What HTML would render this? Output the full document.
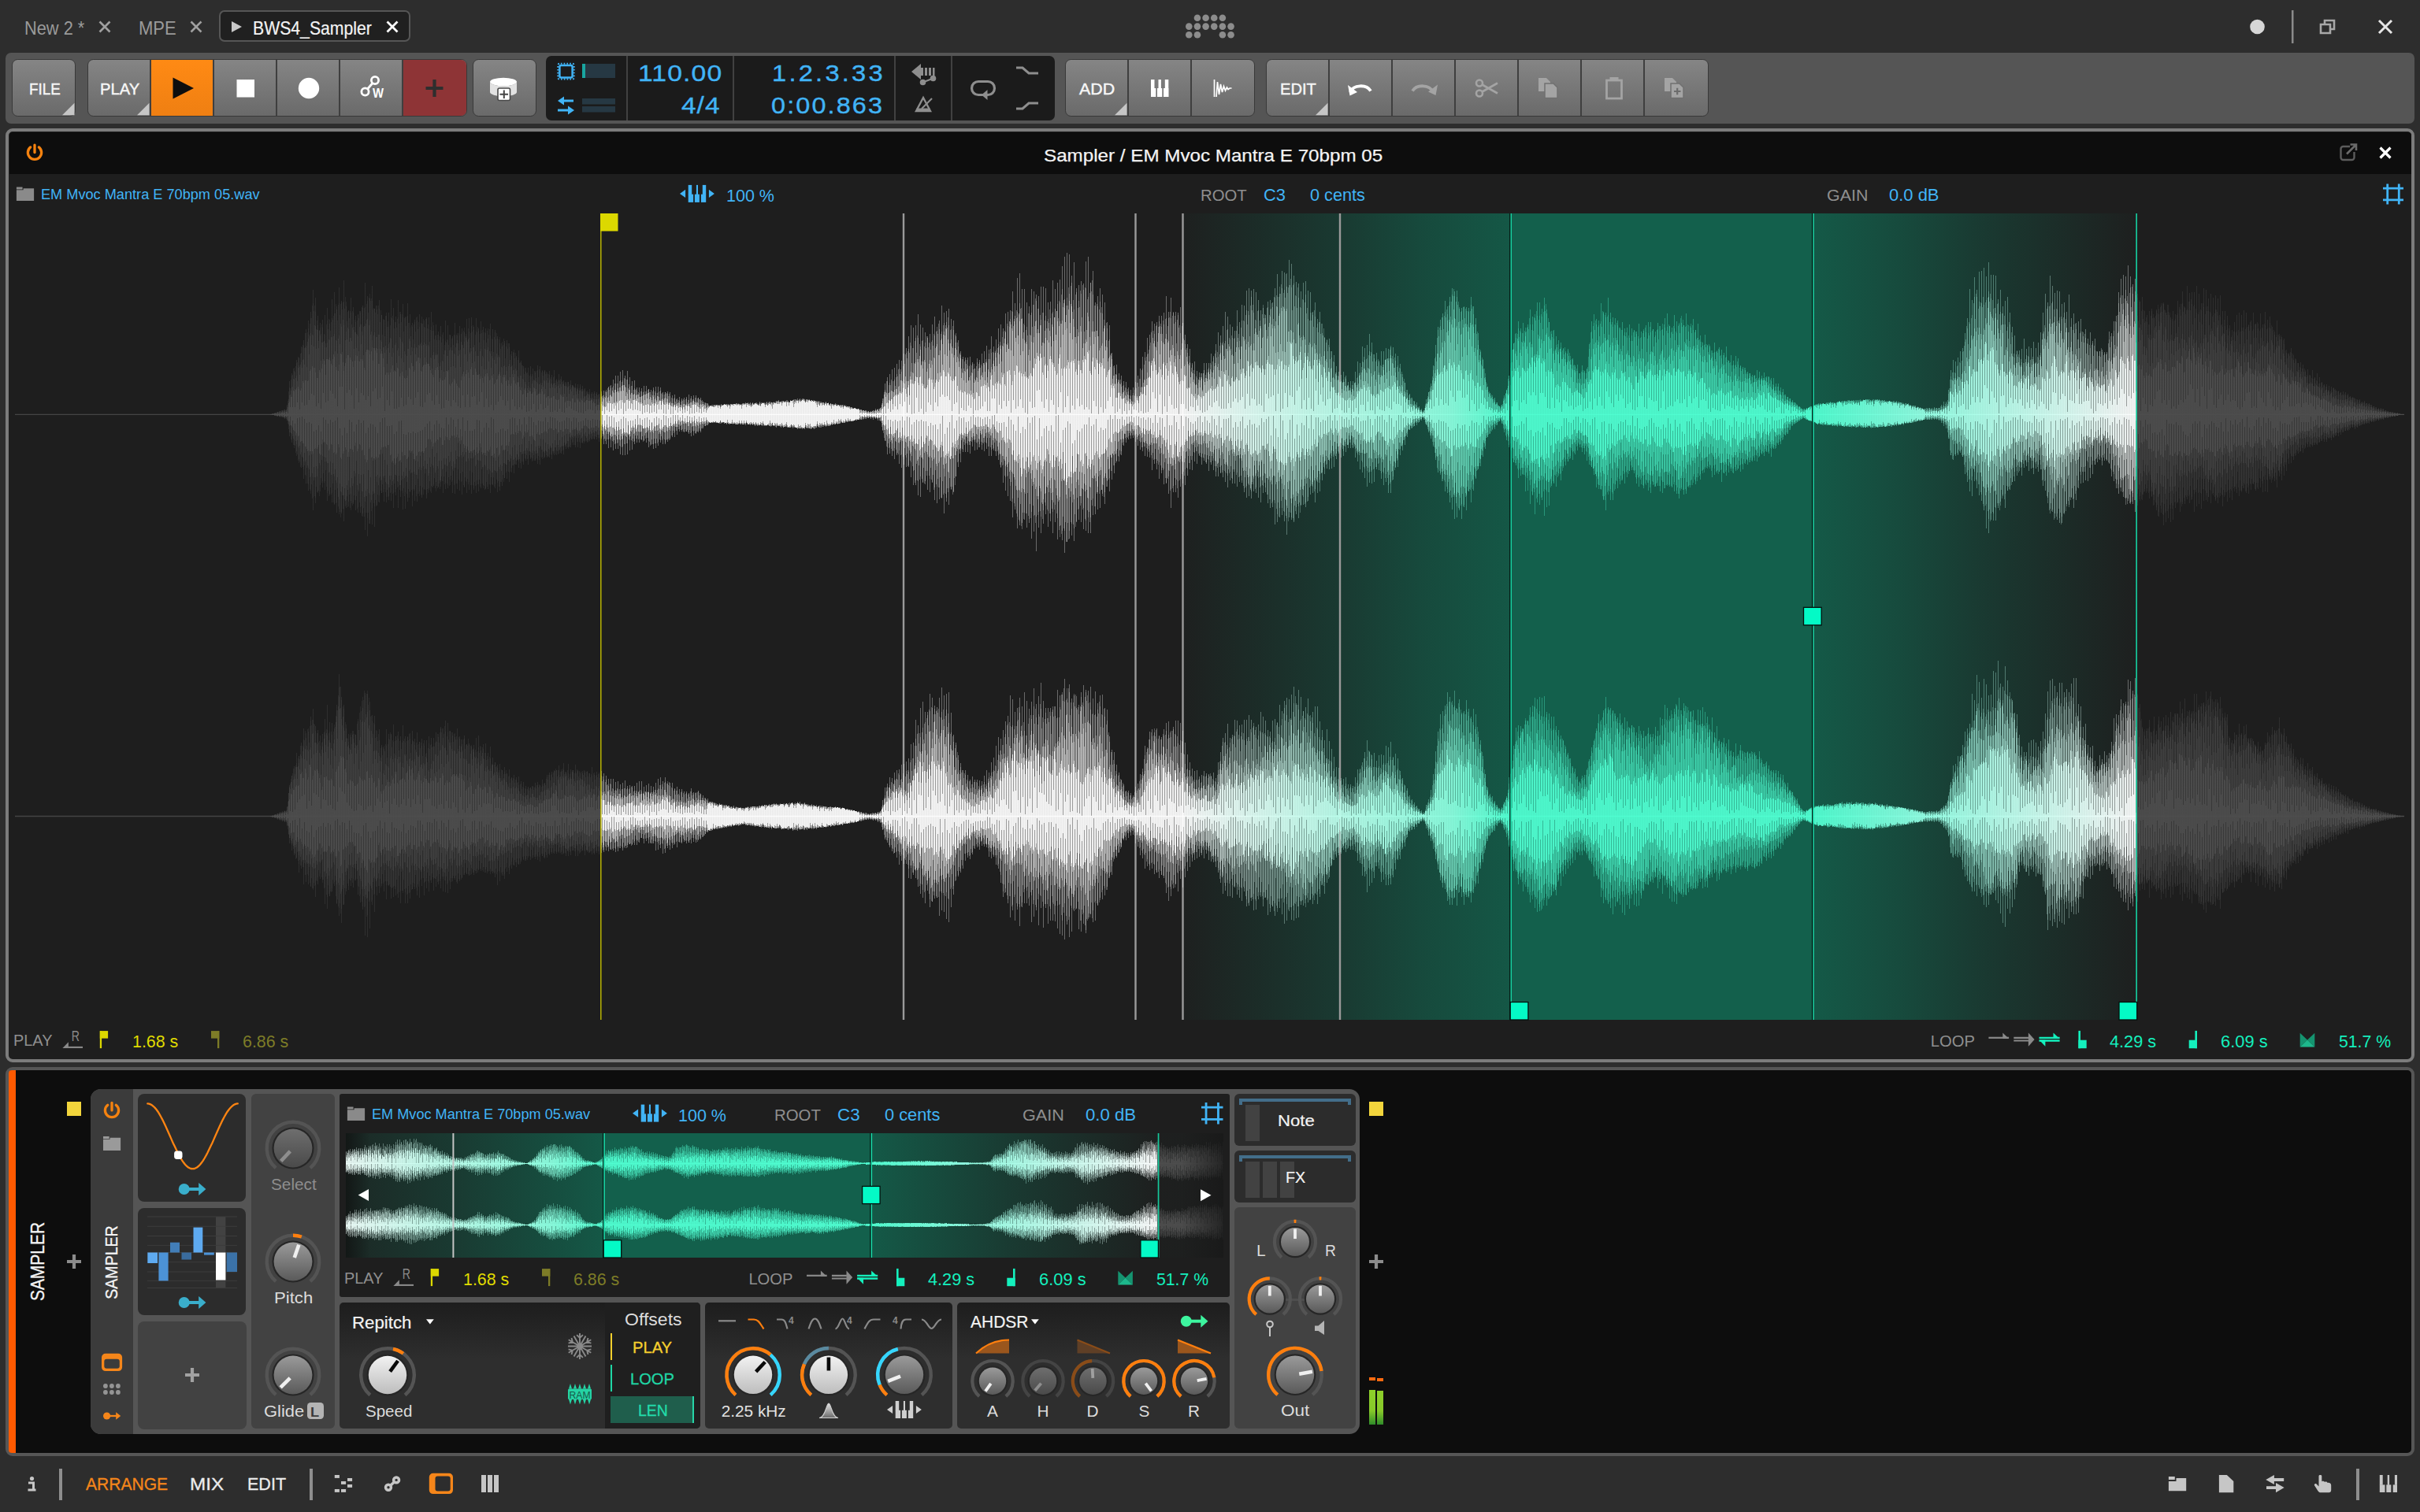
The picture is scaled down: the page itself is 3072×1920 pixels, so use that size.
<!DOCTYPE html>
<html><head><meta charset="utf-8"><title>Bitwig Studio - Sampler</title><style>
html,body{margin:0;padding:0;background:#2d2d2d;}
body{width:3072px;height:1920px;overflow:hidden;position:relative;font-family:"Liberation Sans",sans-serif;}
.a{position:absolute;}
.t{position:absolute;white-space:nowrap;line-height:1;transform-origin:0 50%;}
.bg{background:linear-gradient(#858585,#6a6a6a);border:1.8px solid #393939;border-radius:7.5px;box-sizing:border-box;overflow:hidden;}
svg.ov{position:absolute;left:0;top:0;width:3072px;height:1920px;pointer-events:none;}
</style></head><body>
<span class="t" style="left:31.1px;top:23.8px;font-size:24px;color:#9a9a9a;transform:scaleX(0.9082);">New 2 *</span>
<span class="t" style="left:175.7px;top:23.8px;font-size:24px;color:#9a9a9a;transform:scaleX(0.9180);">MPE</span>
<div class="a" style="left:278px;top:13px;width:243px;height:40px;background:#202020;border:2px solid #565656;border-radius:7px;box-sizing:border-box;"></div>
<span class="t" style="left:320.9px;top:23.8px;font-size:24px;color:#f4f4f4;-webkit-text-stroke:0.2px #f4f4f4;transform:scaleX(0.8837);">BWS4_Sampler</span>
<div class="a" style="left:7px;top:67px;width:3058px;height:90px;background:#555555;border-radius:7px;"></div>
<div class="a bg" style="left:15px;top:75px;width:81px;height:73px;"><div class="a" style="left:0px;top:0;width:79px;height:100%;"></div></div>
<div class="a bg" style="left:111px;top:75px;width:482px;height:73px;"><div class="a" style="left:0px;top:0;width:78px;height:100%;border-right:2px solid #3f3f3f;"></div><div class="a" style="left:80px;top:0;width:78px;height:100%;background:linear-gradient(#ff8a14,#ef7f12);border-right:2px solid #3f3f3f;"></div><div class="a" style="left:160px;top:0;width:78px;height:100%;border-right:2px solid #3f3f3f;"></div><div class="a" style="left:240px;top:0;width:78px;height:100%;border-right:2px solid #3f3f3f;"></div><div class="a" style="left:320px;top:0;width:78px;height:100%;border-right:2px solid #3f3f3f;"></div><div class="a" style="left:400px;top:0;width:80px;height:100%;background:#8e3436;"></div></div>
<div class="a bg" style="left:600px;top:75px;width:81px;height:73px;"><div class="a" style="left:0px;top:0;width:79px;height:100%;"></div></div>
<div class="a bg" style="left:1352px;top:75px;width:241px;height:73px;"><div class="a" style="left:0px;top:0;width:78px;height:100%;border-right:2px solid #3f3f3f;"></div><div class="a" style="left:80px;top:0;width:78px;height:100%;border-right:2px solid #3f3f3f;"></div><div class="a" style="left:160px;top:0;width:79px;height:100%;"></div></div>
<div class="a bg" style="left:1607px;top:75px;width:562px;height:73px;"><div class="a" style="left:0px;top:0;width:78px;height:100%;border-right:2px solid #3f3f3f;"></div><div class="a" style="left:80px;top:0;width:78px;height:100%;border-right:2px solid #3f3f3f;"></div><div class="a" style="left:160px;top:0;width:78px;height:100%;border-right:2px solid #3f3f3f;"></div><div class="a" style="left:240px;top:0;width:78px;height:100%;border-right:2px solid #3f3f3f;"></div><div class="a" style="left:320px;top:0;width:78px;height:100%;border-right:2px solid #3f3f3f;"></div><div class="a" style="left:400px;top:0;width:78px;height:100%;border-right:2px solid #3f3f3f;"></div><div class="a" style="left:480px;top:0;width:80px;height:100%;"></div></div>
<span class="t" style="left:36.8px;top:103.4px;font-size:20.9px;color:#f6f6f6;-webkit-text-stroke:0.45px #f6f6f6;transform:scaleX(0.9008);">FILE</span>
<span class="t" style="left:126.6px;top:103.4px;font-size:20.9px;color:#f6f6f6;-webkit-text-stroke:0.45px #f6f6f6;transform:scaleX(0.9659);">PLAY</span>
<span class="t" style="left:1370.2px;top:103.4px;font-size:20.9px;color:#f6f6f6;-webkit-text-stroke:0.45px #f6f6f6;transform:scaleX(1.0245);">ADD</span>
<span class="t" style="left:1624.7px;top:103.4px;font-size:20.9px;color:#f6f6f6;-webkit-text-stroke:0.45px #f6f6f6;transform:scaleX(0.9632);">EDIT</span>
<div class="a" style="left:693px;top:71px;width:646px;height:82px;background:#1b1b1b;border-radius:7px;"></div>
<div class="a" style="left:795px;top:71px;width:2px;height:82px;background:#414141;"></div>
<div class="a" style="left:930px;top:71px;width:2px;height:82px;background:#414141;"></div>
<div class="a" style="left:1135px;top:71px;width:2px;height:82px;background:#414141;"></div>
<div class="a" style="left:1207px;top:71px;width:2px;height:82px;background:#414141;"></div>
<span class="t" style="left:810.0px;top:78.1px;font-size:30.2px;color:#41b4f6;letter-spacing:1px;-webkit-text-stroke:0.4px #41b4f6;transform:scaleX(1.1170);">110.00</span>
<span class="t" style="left:864.9px;top:118.7px;font-size:30.2px;color:#41b4f6;letter-spacing:1px;-webkit-text-stroke:0.4px #41b4f6;transform:scaleX(1.1025);">4/4</span>
<span class="t" style="left:979.7px;top:78.1px;font-size:30.2px;color:#41b4f6;letter-spacing:3px;-webkit-text-stroke:0.4px #41b4f6;transform:scaleX(1.0808);">1.2.3.33</span>
<span class="t" style="left:979.3px;top:118.7px;font-size:30.2px;color:#41b4f6;letter-spacing:2px;-webkit-text-stroke:0.4px #41b4f6;transform:scaleX(1.0723);">0:00.863</span>
<svg class="ov" viewBox="0 0 3072 1920"><path d="M126.5 27.5L139.5 40.5M139.5 27.5L126.5 40.5" stroke="#a0a0a0" stroke-width="2.6" fill="none"/>
<path d="M242.5 27.5L255.5 40.5M255.5 27.5L242.5 40.5" stroke="#a0a0a0" stroke-width="2.6" fill="none"/>
<path d="M491.5 27.5L504.5 40.5M504.5 27.5L491.5 40.5" stroke="#ffffff" stroke-width="2.8" fill="none"/>
<path d="M294 27L294 41L307 34Z" fill="#c8c8c8"/>
<circle cx="1519.95" cy="22.7" r="4.3" fill="#8c8c8c"/>
<circle cx="1530.6" cy="22.7" r="4.3" fill="#8c8c8c"/>
<circle cx="1541.25" cy="22.7" r="4.3" fill="#8c8c8c"/>
<circle cx="1551.9" cy="22.7" r="4.3" fill="#8c8c8c"/>
<circle cx="1509.3" cy="33.6" r="4.3" fill="#8c8c8c"/>
<circle cx="1519.95" cy="33.6" r="4.3" fill="#8c8c8c"/>
<circle cx="1530.6" cy="33.6" r="4.3" fill="#8c8c8c"/>
<circle cx="1541.25" cy="33.6" r="4.3" fill="#8c8c8c"/>
<circle cx="1551.9" cy="33.6" r="4.3" fill="#8c8c8c"/>
<circle cx="1562.55" cy="33.6" r="4.3" fill="#8c8c8c"/>
<circle cx="1509.3" cy="44.2" r="4.3" fill="#8c8c8c"/>
<circle cx="1519.95" cy="44.2" r="4.3" fill="#8c8c8c"/>
<circle cx="1551.9" cy="44.2" r="4.3" fill="#8c8c8c"/>
<circle cx="1562.55" cy="44.2" r="4.3" fill="#8c8c8c"/>
<circle cx="2865.5" cy="34" r="9.3" fill="#d6d6d6"/>
<rect x="2909" y="13" width="2.5" height="42" fill="#8a8a8a"/>
<path d="M2946 31h12v11h-12zM2951 31v-5h12v11h-5" fill="none" stroke="#a8a8a8" stroke-width="2.6"/>
<path d="M3020 26L3036 42M3036 26L3020 42" stroke="#e6e6e6" stroke-width="3" fill="none"/>
<path d="M94.5 146.3L79 146.3L94.5 130.8Z" fill="#c6c6c6"/>
<path d="M189.5 146.3L174 146.3L189.5 130.8Z" fill="#c6c6c6"/>
<path d="M1430.5 146.3L1415 146.3L1430.5 130.8Z" fill="#c6c6c6"/>
<path d="M1685.5 146.3L1670 146.3L1685.5 130.8Z" fill="#c6c6c6"/>
<path d="M219.500 98.500L219.500 125.500L246 112Z" fill="#0e0e0e"/>
<rect x="300.5" y="101" width="22.5" height="22.5" fill="#fff"/>
<circle cx="392" cy="112" r="13.2" fill="#fff"/>
<g stroke="#fff" stroke-width="2.8" fill="none"><circle cx="463.5" cy="116.5" r="4.6"/><circle cx="476" cy="102" r="4.6"/><path d="M466.5 113L473 105.5"/></g>
<text x="473" y="124" font-family="Liberation Sans,sans-serif" font-weight="700" font-size="16" fill="#fff" textLength="14" lengthAdjust="spacingAndGlyphs">W</text>
<path d="M540.5 112H562.5M551.5 101V123" stroke="#2e2e2e" stroke-width="4.2"/>
<ellipse cx="639" cy="104" rx="17" ry="5.2" fill="#fff"/><path d="M622 104V117A17 5.2 0 0 0 656 117V104A17 5.2 0 0 1 622 104Z" fill="#e2e2e2"/>
<rect x="632" y="112" width="15.5" height="15.5" rx="2" fill="#fff" stroke="#4a4a4a" stroke-width="1.6"/><path d="M634.5 119.8H645M639.8 114.5V125" stroke="#444" stroke-width="2"/>
<rect x="710.4" y="82.900" width="16.200" height="15.600" rx="2" fill="none" stroke="#41b4f6" stroke-width="2.500"/>
<rect x="708.3" y="80.800" width="20.400" height="19.800" rx="2" fill="none" stroke="#41b4f6" stroke-width="2" stroke-dasharray="1.7 2.1" stroke-dashoffset="-1.5"/>
<rect x="739" y="81" width="42" height="18" fill="#263843"/><rect x="739" y="81" width="4" height="18" fill="#19a6a0"/>
<rect x="739" y="125" width="42" height="7.500" fill="#263843"/><rect x="739" y="135" width="42" height="7.500" fill="#263843"/>
<g stroke="#41b4f6" stroke-width="3" fill="#41b4f6"><path d="M714 128H728" /><path d="M708 128L716 122.500V133.500Z" stroke="none"/><path d="M708 140H722"/><path d="M729 140L721 134.500V145.500Z" stroke="none"/></g>
<g fill="#8e8e8e"><path d="M1157 91L1169 81V86H1172V96H1169V101Z"/><rect x="1174" y="86" width="3" height="10"/><rect x="1179" y="86" width="3" height="10"/><rect x="1184" y="86" width="2.500" height="10"/></g>
<g stroke="#8e8e8e" stroke-width="2" fill="#8e8e8e"><circle cx="1171.500" cy="104.500" r="2.800"/><circle cx="1184.500" cy="99.500" r="2.800"/><path d="M1171.500 104.500L1184.500 99.500"/></g>
<path d="M1172 124L1163 141H1181Z" fill="none" stroke="#8e8e8e" stroke-width="2.400"/><path d="M1163.500 139.500H1180.500" stroke="#8e8e8e" stroke-width="4"/><path d="M1170 138L1183 125" stroke="#8e8e8e" stroke-width="2.200"/>
<path d="M1252 119.500H1243A8.500 8.500 0 0 1 1243 102.500H1255A8.500 8.500 0 0 1 1255 119.500H1250" fill="none" stroke="#8e8e8e" stroke-width="3.200" transform="translate(-1 1)"/><path d="M1244 120.500L1251.500 114V127Z" fill="#8e8e8e" transform="translate(2 0)"/>
<path d="M1290 86H1298L1306 93H1318" fill="none" stroke="#8e8e8e" stroke-width="3"/>
<path d="M1290 138H1298L1306 131H1318" fill="none" stroke="#8e8e8e" stroke-width="3"/>
<g fill="#fff"><rect x="1461" y="101" width="4.500" height="22"/><rect x="1461" y="112" width="6.300" height="11"/><rect x="1469" y="112" width="6.300" height="11"/><rect x="1470.500" y="101" width="3.400" height="12"/><rect x="1477" y="112" width="6.300" height="11"/><rect x="1478.800" y="101" width="4.500" height="22"/></g>
<path d="M1541.500 101V123M1544 123L1545.500 104L1547.500 120L1549.500 107L1551.500 117L1553.500 109.500L1555.500 115L1557.500 111L1559 113.500L1561 112H1563.500" fill="none" stroke="#fff" stroke-width="1.700"/>
<path d="M1677 119A14 11 0 0 1 1703 117.500" fill="none" stroke="#fff" stroke-width="3.800" transform="translate(37 -2)"/><path d="M1711 108L1713.500 121.500L1723 117Z" fill="#fff" transform="translate(0 0)"/>
<path d="M1793 115.500A14 11 0 0 1 1819 117" fill="none" stroke="#a4a4a4" stroke-width="3.800"/><path d="M1825 107.500L1822.500 121L1813 116.500Z" fill="#a4a4a4"/>
<g stroke="#a4a4a4" stroke-width="2.600" fill="none"><circle cx="1878" cy="105.500" r="4"/><circle cx="1878" cy="118.500" r="4"/><path d="M1881.500 107.500L1901 118.500M1881.500 116.500L1901 105.500"/></g>
<g fill="#a4a4a4"><path d="M1953 99H1963L1968 104V116H1953Z"/><path d="M1961 106H1972L1977 111V124.500H1961Z" stroke="#707070" stroke-width="1.500"/></g>
<rect x="2039.500" y="102" width="19" height="23" fill="none" stroke="#a4a4a4" stroke-width="2.800"/><rect x="2043.500" y="98" width="11" height="5" fill="#a4a4a4"/>
<g fill="#a4a4a4"><path d="M2113 99H2123L2128 104V116H2113Z"/><path d="M2121 106H2132L2137 111V124.500H2121Z" stroke="#707070" stroke-width="1.500"/></g><path d="M2125 116H2133.500M2129.200 111.800V120.200" stroke="#6c6c6c" stroke-width="2.200"/></svg>
<div class="a" style="left:7px;top:163px;width:3058px;height:1186px;background:#1e1e1e;border:4.5px solid #7c7c7c;border-radius:9px;box-sizing:border-box;"></div>
<div class="a" style="left:11.5px;top:167.5px;width:3049px;height:53.5px;background:#0d0d0d;border-radius:4px 4px 0 0;"></div>
<span class="t" style="left:1325.3px;top:185.9px;font-size:22.9px;color:#f4f4f4;-webkit-text-stroke:0.25px #f4f4f4;transform:scaleX(1.0568);">Sampler / EM Mvoc Mantra E 70bpm 05</span>
<span class="t" style="left:52.3px;top:237.8px;font-size:18.8px;color:#41b4f6;transform:scaleX(0.9670);">EM Mvoc Mantra E 70bpm 05.wav</span>
<span class="t" style="left:921.5px;top:237.6px;font-size:22.4px;color:#41b4f6;transform:scaleX(0.9604);">100 %</span>
<span class="t" style="left:1524.0px;top:238.1px;font-size:20.2px;color:#8f8f8f;transform:scaleX(1.0073);">ROOT</span>
<span class="t" style="left:1603.5px;top:237.3px;font-size:22.4px;color:#41b4f6;transform:scaleX(0.9790);">C3</span>
<span class="t" style="left:1663.3px;top:237.3px;font-size:22.4px;color:#41b4f6;transform:scaleX(0.9681);">0 cents</span>
<span class="t" style="left:2318.5px;top:238.1px;font-size:20.2px;color:#8f8f8f;transform:scaleX(1.0604);">GAIN</span>
<span class="t" style="left:2398.2px;top:237.3px;font-size:22.4px;color:#41b4f6;transform:scaleX(0.9812);">0.0 dB</span>
<span class="t" style="left:17.1px;top:1311.4px;font-size:20.2px;color:#8f8f8f;transform:scaleX(0.9868);">PLAY</span>
<span class="t" style="left:167.7px;top:1311.6px;font-size:22.4px;color:#e0dc00;transform:scaleX(0.9549);">1.68 s</span>
<span class="t" style="left:308.3px;top:1311.6px;font-size:22.4px;color:#7d7c27;transform:scaleX(0.9549);">6.86 s</span>
<span class="t" style="left:2450.8px;top:1311.6px;font-size:20.2px;color:#8f8f8f;">LOOP</span>
<span class="t" style="left:2678.4px;top:1311.9px;font-size:22.4px;color:#14f0bd;transform:scaleX(0.9688);">4.29 s</span>
<span class="t" style="left:2819.0px;top:1311.9px;font-size:22.4px;color:#14f0bd;transform:scaleX(0.9766);">6.09 s</span>
<span class="t" style="left:2968.8px;top:1311.9px;font-size:22.4px;color:#14f0bd;transform:scaleX(0.9484);">51.7 %</span>
<svg class="ov" viewBox="0 0 3072 1920"><defs>
<linearGradient id="tealbg" gradientUnits="userSpaceOnUse" x1="1501" y1="0" x2="2712" y2="0">
<stop offset="0" stop-color="#13604c" stop-opacity="0.03"/>
<stop offset="0.165" stop-color="#13604c" stop-opacity="0.42"/>
<stop offset="0.25" stop-color="#13604c" stop-opacity="0.66"/>
<stop offset="0.3434" stop-color="#13604c" stop-opacity="0.87"/>
<stop offset="0.3436" stop-color="#13604c" stop-opacity="1"/>
<stop offset="0.6606" stop-color="#13604c" stop-opacity="1"/>
<stop offset="0.6608" stop-color="#13604c" stop-opacity="0.90"/>
<stop offset="0.75" stop-color="#13604c" stop-opacity="0.68"/>
<stop offset="0.83" stop-color="#13604c" stop-opacity="0.44"/>
<stop offset="1" stop-color="#13604c" stop-opacity="0.02"/>
</linearGradient>
<linearGradient id="wfill" gradientUnits="userSpaceOnUse" x1="0" y1="0" x2="3072" y2="0">
<stop offset="0" stop-color="#4e4e4e"/>
<stop offset="0.24837" stop-color="#4e4e4e"/>
<stop offset="0.24838" stop-color="#ffffff"/>
<stop offset="0.4886" stop-color="#ffffff"/>
<stop offset="0.60" stop-color="#8cffe0"/>
<stop offset="0.6240" stop-color="#50ffd2"/>
<stop offset="0.7490" stop-color="#50ffd2"/>
<stop offset="0.80" stop-color="#9affe6"/>
<stop offset="0.8828" stop-color="#ffffff"/>
<stop offset="0.88285" stop-color="#4e4e4e"/>
<stop offset="1" stop-color="#4e4e4e"/>
</linearGradient>
</defs>
<rect x="1501" y="271" width="1211" height="1024" fill="url(#tealbg)"/>
<rect x="1145.8" y="271" width="2.4" height="1024" fill="#9a9a9a"/>
<rect x="1440.3" y="271" width="2.4" height="1024" fill="#9a9a9a"/>
<rect x="1500.3" y="271" width="2.4" height="1024" fill="#9a9a9a"/>
<rect x="1699.8" y="271" width="2.4" height="1024" fill="#9a9a9a"/>
<path d="M19 526.3H3052" stroke="url(#wfill)" stroke-width="1.3" opacity="0.8"/>
<path d="M19 1036.5H3052" stroke="url(#wfill)" stroke-width="1.3" opacity="0.8"/>
<g shape-rendering="crispEdges"><path d="M346.5 525v2m3-3v4m3-5v6m3-7v8m3-9v9m3-10v12m3-18v20m3-50v70m3-80v88m3-91v94m3-108v116m3-119v129m3-135v146m3-162v176m3-190v196m3-207v216m3-227v227m3-255v280m3-270v261m3-238v223m3-214v206m3-210v213m3-219v222m3-231v245m3-225v216m3-247v258m3-267v269m3-247v258m3-286v281m3-264v270m3-296v306m3-273v256m3-251v243m3-259v258m3-246v250m3-239v247m3-249v252m3-256v256m3-263v264m3-293v314m3-297v305m3-302v286m3-302v303m3-274v277m3-276v249m3-261v257m3-238v226m3-220v231m3-236v237m3-241v238m3-255v256m3-245v254m3-243v227m3-248v264m3-246v232m3-245v261m3-244v243m3-261v252m3-238v225m3-214v233m3-237v230m3-229v230m3-238v225m3-213v221m3-217v206m3-218v230m3-230v217m3-224v221m3-197v197m3-205v200m3-191v197m3-204v198m3-190v204m3-219v214m3-208v207m3-195v184m3-182v199m3-216v217m3-201v195m3-207v209m3-206v211m3-206v197m3-214v221m3-222v218m3-219v224m3-212v207m3-218v222m3-209v207m3-216v212m3-205v201m3-199v204m3-191v191m3-210v215m3-208v198m3-197v201m3-193v198m3-189v187m3-183v177m3-184v174m3-175v176m3-172v176m3-166v148m3-146v153m3-149v138m3-145v149m3-136v137m3-130v125m3-118v113m3-118v123m3-125v118m3-115v114m3-109v112m3-121v125m3-124v125m3-119v109m3-110v110m3-105v106m3-110v110m3-105v107m3-113v108m3-97v91m3-97v97m3-94v98m3-93v94m3-90v83m3-85v83m3-85v85m3-78v75m3-78v81m3-80v80m3-80v81m3-79v72m3-69v67m3-62v63m3-67v64m3-60v60m3-61v61m3-60v60m3-58v61m3-64v60m3-61v68m3-66v66m3-73v78m3-80v79m3-86v90m3-95v93m3-93v93m3-98v105m3-107v108m3-101v101m3-107v106m3-98v93m3-88v87m3-88v81m3-72v70m3-70v70m3-69v65m3-68v69m3-69v72m3-68v74m3-73v69m3-72v78m3-79v78m3-78v75m3-74v70m3-64v66m3-66v66m3-67v64m3-63v60m3-56v53m3-54v54m3-49v46m3-48v44m3-42v40m3-41v44m3-45v44m3-47v50m3-48v51m3-52v51m3-51v48m3-45v44m3-44v44m3-39v34m3-32v29m3-29v28m3-25v21m3-20v21m3-23v22m3-22v22m3-21v22m3-23v23m3-23v24m3-23v24m3-24v23m3-24v24m3-25v25m3-25v25m3-25v25m3-24v25m3-27v27m3-28v29m3-29v28m3-28v29m3-29v28m3-27v29m3-28v28m3-31v29m3-27v29m3-29v27m3-29v30m3-30v30m3-29v30m3-29v28m3-31v34m3-35v32m3-30v33m3-34v34m3-33v31m3-31v31m3-33v35m3-35v34m3-33v33m3-36v39m3-39v36m3-33v36m3-38v38m3-38v37m3-37v37m3-36v34m3-34v37m3-34v32m3-34v33m3-31v30m3-30v29m3-30v32m3-31v30m3-29v27m3-26v26m3-27v27m3-25v25m3-25v24m3-24v23m3-23v23m3-21v20m3-20v19m3-18v17m3-16v16m3-14v14m3-15v14m3-13v13m3-12v11m3-11v11m3-10v9m3-9v10m3-11v12m3-14v13m3-13v15m3-16v16m3-28v40m3-59v73m3-81v98m3-102v101m3-107v110m3-112v116m3-121v116m3-121v132m3-131v136m3-145v141m3-148v151m3-166v166m3-180v193m3-190v200m3-203v203m3-217v230m3-217v219m3-215v197m3-191v189m3-182v193m3-198v201m3-213v201m3-211v233m3-215v219m3-232v227m3-246v244m3-235v255m3-257v242m3-245v249m3-236v216m3-214v218m3-198v178m3-173v161m3-147v141m3-134v121m3-120v120m3-120v120m3-121v123m3-116v107m3-99v104m3-117v116m3-114v111m3-119v122m3-125v127m3-134v131m3-126v135m3-152v152m3-139v132m3-141v148m3-162v167m3-172v181m3-176v196m3-215v225m3-227v234m3-236v242m3-266v287m3-272v262m3-294v318m3-324v320m3-300v297m3-297v293m3-276v286m3-281v275m3-297v317m3-314v305m3-301v326m3-324v294m3-306v313m3-313v301m3-299v287m3-269v285m3-286v279m3-306v321m3-310v296m3-304v326m3-330v313m3-330v348m3-360v376m3-381v367m3-365v361m3-334v330m3-347v354m3-321v297m3-301v298m3-303v306m3-303v312m3-340v342m3-348v351m3-318v318m3-333v310m3-270v269m3-277v271m3-281v279m3-271v253m3-243v256m3-231v209m3-205v211m3-176v161m3-145v137m3-138v123m3-112v112m3-109v101m3-94v82m3-81v77m3-70v66m3-63v62m3-65v64m3-71v76m3-84v89m3-98v103m3-118v120m3-126v132m3-150v151m3-155v156m3-173v189m3-186v178m3-180v187m3-195v207m3-207v200m3-204v218m3-239v238m3-218v231m3-249v267m3-248v228m3-229v229m3-228v235m3-242v228m3-208v204m3-189v191m3-179v167m3-161v153m3-135v136m3-138v127m3-115v118m3-116v106m3-105v116m3-129v124m3-124v128m3-128v137m3-149v141m3-138v145m3-160v168m3-183v183m3-179v175m3-187v192m3-210v216m3-210v217m3-207v198m3-195v199m3-194v194m3-220v224m3-209v203m3-225v226m3-225v237m3-256v263m3-266v264m3-261v264m3-266v257m3-253v255m3-245v251m3-238v244m3-247v235m3-226v225m3-242v256m3-258v264m3-261v260m3-278v300m3-318v315m3-290v284m3-313v310m3-308v316m3-298v315m3-349v327m3-322v325m3-310v313m3-305v295m3-293v298m3-288v271m3-282v282m3-284v287m3-275v267m3-265v257m3-232v230m3-242v254m3-233v221m3-230v228m3-201v187m3-181v173m3-170v163m3-165v166m3-150v149m3-144v142m3-128v118m3-111v104m3-100v105m3-109v107m3-102v97m3-89v84m3-85v85m3-85v85m3-97v109m3-122v127m3-125v135m3-156v160m3-158v165m3-169v180m3-194v189m3-178v179m3-164v162m3-164v148m3-138v139m3-151v162m3-162v170m3-174v170m3-169v183m3-185v185m3-185v168m3-160v145m3-142v141m3-131v116m3-99v93m3-86v79m3-70v60m3-55v46m3-41v38m3-33v31m3-30v29m3-24v20m3-17v15m3-13v12m3-26v32m3-41v51m3-62v70m3-93v103m3-129v146m3-169v185m3-194v195m3-203v210m3-226v242m3-235v237m3-249v261m3-272v281m3-277v289m3-290v288m3-265v256m3-257v268m3-269v254m3-254v258m3-257v233m3-247v261m3-249v234m3-219v204m3-185v173m3-149v145m3-135v123m3-101v91m3-79v64m3-56v52m3-47v41m3-40v40m3-34v29m3-24v19m3-21v24m3-36v47m3-54v64m3-82v91m3-123v128m3-137v151m3-164v168m3-183v199m3-190v187m3-194v193m3-181v202m3-212v211m3-230v247m3-238v227m3-225v249m3-269v254m3-254v257m3-249v243m3-257v277m3-257v246m3-235v233m3-218v193m3-198v195m3-187v191m3-186v169m3-166v175m3-168v150m3-144v143m3-148v143m3-129v125m3-127v129m3-120v113m3-114v109m3-98v94m3-104v110m3-103v106m3-109v117m3-148v153m3-182v185m3-194v204m3-198v214m3-212v209m3-231v236m3-225v239m3-238v251m3-270v245m3-226v238m3-232v232m3-231v211m3-208v213m3-204v199m3-206v201m3-193v197m3-198v190m3-194v186m3-181v180m3-178v182m3-180v193m3-203v207m3-197v194m3-195v200m3-207v196m3-200v214m3-214v217m3-208v194m3-191v197m3-208v207m3-203v210m3-206v208m3-222v216m3-222v217m3-201v204m3-202v203m3-219v224m3-216v219m3-215v221m3-223v211m3-208v215m3-230v229m3-206v196m3-201v194m3-205v200m3-186v196m3-204v190m3-175v183m3-170v158m3-172v168m3-155v154m3-153v151m3-142v158m3-171v168m3-157v152m3-157v158m3-155v168m3-164v153m3-161v164m3-146v142m3-149v142m3-135v143m3-149v146m3-143v140m3-131v135m3-133v130m3-126v119m3-117v118m3-116v110m3-108v110m3-109v108m3-115v116m3-114v107m3-102v100m3-104v106m3-101v96m3-95v97m3-96v100m3-100v90m3-83v79m3-79v78m3-73v72m3-70v61m3-54v52m3-49v47m3-45v40m3-38v32m3-29v27m3-24v22m3-20v18m3-15v13m3-13v12m3-13v15m3-16v17m3-17v18m3-20v22m3-23v24m3-26v26m3-25v25m3-25v25m3-25v27m3-28v28m3-30v29m3-28v30m3-29v29m3-31v32m3-33v31m3-31v31m3-30v31m3-30v30m3-31v32m3-32v31m3-32v33m3-32v33m3-33v31m3-32v33m3-32v33m3-36v36m3-36v34m3-33v35m3-34v34m3-34v34m3-35v35m3-34v33m3-32v32m3-34v34m3-32v32m3-31v30m3-31v32m3-31v30m3-32v32m3-31v30m3-29v28m3-26v27m3-28v26m3-26v24m3-21v22m3-22v21m3-21v20m3-18v17m3-17v17m3-15v15m3-15v14m3-14v14m3-15v15m3-15v15m3-16v16m3-15v15m3-15v16m3-20v23m3-27v31m3-31v34m3-49v62m3-87v108m3-121v127m3-125v120m3-125v123m3-131v129m3-133v138m3-157v179m3-198v208m3-245v257m3-243v249m3-278v259m3-243v252m3-275v284m3-285v292m3-296v308m3-297v320m3-338v344m3-328v311m3-311v312m3-311v311m3-281v265m3-277v269m3-248v239m3-246v263m3-268v246m3-226v225m3-207v197m3-186v185m3-165v158m3-159v148m3-150v161m3-174v164m3-151v149m3-152v158m3-156v153m3-161v168m3-160v153m3-160v164m3-177v174m3-199v220m3-244v250m3-239v248m3-282v296m3-283v287m3-278v280m3-283v291m3-290v294m3-278v278m3-280v267m3-255v244m3-266v267m3-237v228m3-234v247m3-235v225m3-227v212m3-215v209m3-187v186m3-195v192m3-180v181m3-189v185m3-174v169m3-172v160m3-144v141m3-141v138m3-140v147m3-144v138m3-138v138m3-164v167m3-165v182m3-197v203m3-210v219m3-249v256m3-273v265m3-270v282m3-280v282m3-296v296m3-282v287m3-277v279m3-286v296m3-277v269m3-259v247m3-253v251m3-218v214m3-224v220m3-225v238m3-241v238m3-226v231m3-242v255m3-249v257m3-268v263m3-265v281m3-270v266m3-267v262m3-255v260m3-268v265m3-261v246m3-263v256m3-245v257m3-280v270m3-249v249m3-277v271m3-262v267m3-268v263m3-263v279m3-287v280m3-270v267m3-255v261m3-280v270m3-268v267m3-256v252m3-258v266m3-261v248m3-251v261m3-257v260m3-264v251m3-231v248m3-248v230m3-224v236m3-224v219m3-213v216m3-226v209m3-218v226m3-229v233m3-230v223m3-229v219m3-216v229m3-213v214m3-220v215m3-225v217m3-203v212m3-206v204m3-223v221m3-207v213m3-229v228m3-218v219m3-223v207m3-194v192m3-182v186m3-204v212m3-192v178m3-177v182m3-180v174m3-156v150m3-148v139m3-147v146m3-131v127m3-128v119m3-114v115m3-116v113m3-110v112m3-103v95m3-98v99m3-91v87m3-94v97m3-88v83m3-88v91m3-86v82m3-76v75m3-72v73m3-73v73m3-71v67m3-66v68m3-66v63m3-60v57m3-56v57m3-56v54m3-55v52m3-51v49m3-47v47m3-44v40m3-38v38m3-37v39m3-37v35m3-36v33m3-30v29m3-30v29m3-26v25m3-25v26m3-24v22m3-20v20m3-19v17m3-16v16m3-16v15m3-14v14m3-12v10m3-9v8m3-7v7m3-7v6m3-5v5m3-5v4m3-3v2" stroke="url(#wfill)" stroke-width="1" fill="none" opacity="0.34"/><path d="M343 526l1.5 0 1.5-1 1.5 0 1.5-1 1.5 0 1.5-1 1.5 0 1.5-1 1.5 0 1.5-1 1.5 0 1.5-1 1.5 1 1.5-2 1.5-10 1.5-18 1.5 2 1.5-16 1.5-1 1.5-12 1.5 8 1.5-11 1.5-1 1.5-10 1.5 16 1.5-26 1.5 1 1.5-4 1.5 5 1.5-28 1.5 25 1.5-26 1.5 12 1.5-21 1.5 0 1.5-24 1.5 15 1.5-10 1.5 33 1.5-16 1.5 31 1.5-21 1.5 12 1.5-18 1.5 28 1.5-15 1.5 17 1.5-35 1.5 17 1.5-19 1.5 21 1.5-17 1.5 3 1.5-8 1.5 0 1.5-18 1.5 27 1.5-30 1.5 23 1.5-21 1.5 14 1.5-14 1.5 13 1.5-22 1.5 38 1.5-18 1.5 14 1.5-14 1.5 22 1.5-25 1.5 28 1.5-14 1.5 23 1.5-26 1.5 6 1.5-14 1.5 22 1.5-33 1.5 36 1.5-36 1.5 32 1.5-37 1.5 23 1.5-29 1.5 14 1.5-5 1.5 16 1.5-3 1.5 7 1.5-14 1.5 16 1.5-16 1.5 26 1.5-22 1.5 38 1.5-30 1.5 32 1.5-39 1.5 27 1.5-11 1.5 31 1.5-33 1.5 2 1.5-4 1.5 17 1.5-12 1.5 11 1.5-17 1.5 12 1.5-22 1.5 20 1.5-15 1.5 27 1.5-25 1.5 18 1.5-18 1.5 14 1.5 0 1.5 17 1.5-21 1.5 25 1.5-28 1.5 18 1.5-27 1.5 24 1.5-14 1.5 33 1.5-40 1.5 14 1.5-9 1.5 14 1.5-17 1.5 18 1.5-7 1.5 24 1.5-22 1.5 8 1.5-17 1.5 28 1.5-8 1.5 9 1.5-10 1.5 10 1.5-8 1.5 11 1.5-15 1.5 30 1.5-18 1.5 3 1.5-6 1.5 9 1.5-20 1.5 23 1.5-17 1.5 14 1.5-20 1.5 23 1.5-24 1.5 19 1.5-20 1.5 28 1.5-30 1.5 24 1.5-27 1.5 16 1.5-4 1.5 11 1.5-26 1.5 39 1.5-36 1.5 10 1.5-12 1.5 29 1.5-19 1.5 3 1.5-10 1.5 23 1.5-17 1.5 5 1.5-6 1.5 15 1.5-15 1.5 18 1.5-22 1.5 12 1.5-10 1.5 31 1.5-23 1.5 24 1.5-29 1.5 13 1.5-12 1.5 32 1.5-30 1.5 22 1.5-11 1.5 6 1.5-12 1.5 29 1.5-22 1.5 10 1.5-11 1.5 25 1.5-11 1.5 18 1.5-26 1.5 17 1.5-10 1.5 25 1.5-20 1.5 11 1.5-1 1.5 4 1.5 0 1.5 11 1.5-12 1.5 11 1.5-2 1.5 13 1.5-12 1.5 5 1.5-4 1.5 8 1.5-16 1.5 14 1.5-14 1.5 13 1.5-15 1.5 22 1.5-20 1.5 11 1.5-8 1.5 6 1.5-5 1.5 10 1.5-7 1.5 8 1.5-3 1.5 11 1.5-15 1.5 12 1.5-4 1.5 3 1.5-3 1.5 1 1.5-3 1.5 5 1.5-1 1.5 6 1.5-8 1.5 8 1.5-7 1.5 7 1.5-3 1.5 5 1.5-5 1.5 5 1.5-2 1.5 7 1.5-7 1.5 10 1.5-11 1.5 6 1.5-2 1.5 3 1.5-3 1.5 10 1.5-9 1.5 6 1.5-3 1.5 8 1.5-7 1.5 7 1.5-8 1.5 6 1.5-4 1.5 3 1.5-2 1.5 4 1.5-5 1.5 4 1.5-2 1.5 3 1.5-10 1.5 3 1.5-6 1.5 4 1.5-7 1.5 15 1.5-17 1.5 13 1.5-18 1.5 17 1.5-17 1.5 18 1.5-22 1.5 19 1.5-16 1.5 9 1.5-14 1.5 17 1.5-15 1.5 16 1.5-7 1.5 15 1.5-16 1.5 16 1.5-9 1.5 3 1.5-2 1.5 8 1.5-4 1.5 7 1.5-10 1.5 9 1.5-8 1.5 6 1.5-6 1.5 5 1.5-8 1.5 6 1.5 0 1.5 10 1.5-16 1.5 10 1.5-8 1.5 14 1.5-13 1.5 9 1.5-10 1.5 6 1.5-2 1.5 10 1.5-11 1.5 3 1.5-1 1.5 4 1.5-4 1.5 11 1.5-7 1.5 9 1.5-9 1.5 7 1.5-4 1.5 6 1.5-6 1.5 8 1.5-6 1.5 1 1.5-3 1.5 7 1.5-9 1.5 7 1.5-5 1.5 6 1.5-9 1.5 8 1.5-6 1.5 5 1.5-8 1.5 8 1.5-6 1.5 3 1.5 0 1.5 2 1.5-1 1.5 5 1.5-3 1.5 2 1.5 0 1.5 2 1.5 1 1.5 0 1.5-1 1.5 0 1.5 0 1.5 0 1.5 0 1.5 1 1.5-1 1.5 0 1.5-1 1.5 2 1.5-2 1.5 1 1.5-1 1.5 0 1.5 0 1.5 1 1.5-1 1.5 0 1.5 0 1.5 0 1.5 0 1.5 1 1.5-2 1.5 1 1.5 0 1.5 0 1.5-1 1.5 0 1.5 0 1.5 0 1.5 0 1.5 1 1.5-2 1.5 3 1.5-3 1.5 4 1.5-3 1.5-1 1.5 0 1.5 3 1.5-3 1.5 1 1.5-1 1.5 0 1.5 0 1.5 1 1.5-1 1.5 1 1.5-2 1.5 1 1.5-1 1.5 2 1.5-2 1.5 1 1.5-1 1.5-1 1.5 0 1.5 1 1.5 0 1.5-1 1.5 0 1.5 1 1.5-1 1.5-1 1.5 0 1.5 3 1.5-2 1.5 1 1.5-1 1.5-2 1.5 0 1.5 1 1.5 0 1.5 0 1.5-2 1.5 2 1.5-2 1.5 0 1.5 0 1.5 3 1.5-3 1.5 2 1.5-1 1.5 4 1.5-3 1.5 1 1.5-1 1.5 2 1.5-1 1.5 0 1.5 1 1.5 0 1.5 0 1.5 1 1.5 0 1.5 1 1.5-1 1.5 3 1.5-3 1.5 3 1.5-2 1.5 2 1.5-2 1.5 2 1.5-1 1.5 0 1.5 0 1.5 2 1.5 0 1.5 0 1.5 0 1.5-1 1.5 2 1.5 0 1.5-1 1.5 2 1.5-1 1.5 1 1.5 0 1.5 1 1.5 0 1.5 0 1.5 1 1.5 1 1.5 0 1.5 0 1.5 0 1.5 1 1.5 0 1.5 1 1.5 0 1.5 1 1.5-1 1.5 1 1.5 0 1.5 0 1.5-2 1.5 1 1.5-1 1.5 0 1.5-1 1.5 2 1.5-3 1.5-2 1.5-7 1.5-4 1.5-12 1.5 4 1.5-21 1.5 22 1.5-15 1.5 5 1.5-11 1.5 19 1.5-19 1.5 12 1.5-16 1.5 4 1.5-13 1.5 10 1.5-9 1.5 18 1.5-28 1.5 6 1.5-18 1.5 11 1.5-14 1.5 7 1.5-20 1.5 33 1.5-29 1.5 29 1.5-42 1.5 29 1.5-33 1.5 41 1.5-28 1.5 35 1.5-45 1.5 41 1.5-28 1.5 11 1.5-22 1.5 21 1.5-9 1.5 12 1.5-15 1.5 10 1.5-22 1.5 25 1.5-32 1.5 14 1.5-19 1.5 40 1.5-32 1.5 24 1.5-36 1.5 25 1.5-20 1.5 10 1.5-20 1.5 49 1.5-38 1.5 33 1.5-38 1.5 49 1.5-39 1.5 32 1.5-14 1.5 29 1.5-17 1.5 26 1.5-18 1.5 18 1.5-14 1.5 8 1.5-8 1.5 30 1.5-28 1.5 21 1.5-19 1.5 11 1.5-10 1.5 26 1.5-30 1.5 16 1.5-14 1.5 10 1.5-6 1.5 12 1.5-18 1.5 17 1.5-23 1.5 30 1.5-34 1.5 11 1.5-19 1.5 32 1.5-33 1.5 36 1.5-39 1.5 32 1.5-34 1.5 19 1.5-23 1.5 32 1.5-46 1.5 23 1.5-24 1.5 25 1.5-38 1.5 44 1.5-42 1.5 11 1.5-26 1.5 28 1.5-13 1.5 33 1.5-60 1.5 63 1.5-56 1.5 11 1.5-1 1.5 39 1.5-29 1.5 35 1.5-26 1.5 16 1.5-41 1.5 40 1.5-37 1.5 27 1.5-41 1.5 40 1.5-53 1.5 62 1.5-46 1.5 46 1.5-34 1.5 50 1.5-63 1.5 60 1.5-43 1.5 24 1.5-14 1.5 7 1.5-25 1.5 55 1.5-63 1.5 56 1.5-44 1.5 43 1.5-56 1.5 28 1.5-33 1.5 40 1.5-56 1.5 35 1.5-13 1.5 42 1.5-46 1.5 15 1.5-34 1.5 56 1.5-70 1.5 56 1.5-22 1.5 54 1.5-81 1.5 71 1.5-40 1.5 12 1.5-32 1.5 45 1.5-62 1.5 80 1.5-83 1.5 81 1.5-58 1.5 47 1.5-54 1.5 16 1.5-21 1.5 72 1.5-50 1.5 49 1.5-51 1.5 58 1.5-51 1.5 21 1.5-10 1.5 34 1.5-22 1.5 41 1.5-45 1.5 64 1.5-38 1.5 30 1.5 1 1.5 29 1.5-24 1.5 30 1.5-16 1.5 16 1.5-7 1.5 7 1.5-8 1.5 21 1.5-15 1.5 11 1.5-6 1.5 8 1.5-6 1.5 14 1.5-6 1.5 9 1.5-11 1.5 4 1.5-10 1.5 1 1.5-10 1.5 8 1.5-15 1.5 16 1.5-33 1.5 27 1.5-34 1.5 6 1.5-8 1.5-1 1.5-8 1.5-6 1.5-20 1.5 14 1.5-13 1.5 24 1.5-38 1.5 32 1.5-29 1.5 9 1.5-4 1.5 14 1.5-25 1.5 38 1.5-47 1.5 41 1.5-26 1.5-2 1.5-10 1.5 34 1.5-38 1.5 22 1.5-15 1.5 40 1.5-44 1.5 24 1.5-4 1.5 32 1.5-45 1.5 31 1.5 3 1.5 11 1.5-3 1.5 21 1.5-15 1.5 40 1.5-30 1.5 17 1.5-6 1.5 21 1.5-16 1.5 20 1.5-10 1.5 0 1.5-13 1.5 25 1.5-18 1.5 12 1.5-20 1.5 12 1.5-18 1.5 12 1.5-21 1.5 25 1.5-30 1.5 16 1.5-24 1.5 13 1.5-10 1.5 26 1.5-46 1.5 33 1.5-32 1.5 27 1.5-24 1.5 15 1.5-35 1.5 29 1.5-12 1.5 18 1.5-25 1.5 34 1.5-33 1.5 28 1.5-40 1.5 22 1.5-7 1.5 34 1.5-60 1.5 31 1.5-30 1.5 34 1.5-46 1.5 27 1.5-26 1.5 41 1.5-59 1.5 26 1.5-11 1.5 41 1.5-27 1.5 28 1.5-44 1.5 39 1.5-20 1.5 42 1.5-64 1.5 26 1.5-8 1.5 23 1.5-42 1.5 38 1.5-22 1.5-1 1.5-10 1.5 23 1.5-42 1.5 45 1.5-50 1.5 55 1.5-54 1.5 14 1.5-18 1.5 34 1.5-26 1.5 15 1.5-44 1.5 38 1.5-10 1.5 0 1.5-12 1.5 44 1.5-48 1.5 43 1.5-21 1.5 23 1.5-38 1.5 73 1.5-54 1.5 56 1.5-71 1.5 71 1.5-66 1.5 36 1.5-10 1.5 50 1.5-46 1.5 15 1.5-15 1.5 23 1.5-32 1.5 55 1.5-33 1.5 17 1.5-20 1.5 22 1.5-20 1.5 22 1.5-13 1.5 45 1.5-34 1.5 22 1.5-12 1.5 22 1.5-15 1.5 39 1.5-31 1.5 33 1.5-14 1.5 15 1.5-9 1.5 11 1.5-4 1.5 13 1.5-13 1.5 4 1.5-9 1.5 16 1.5-5 1.5 9 1.5-6 1.5 8 1.5-13 1.5 11 1.5-13 1.5 6 1.5-14 1.5 12 1.5-19 1.5 14 1.5-23 1.5 1 1.5-10 1.5 20 1.5-21 1.5 18 1.5-24 1.5 9 1.5-8 1.5 15 1.5-13 1.5 25 1.5-18 1.5 12 1.5-14 1.5 25 1.5-18 1.5 20 1.5-22 1.5 20 1.5-29 1.5 26 1.5-26 1.5 24 1.5-40 1.5 24 1.5-5 1.5 17 1.5-20 1.5 32 1.5-19 1.5 12 1.5-7 1.5 10 1.5-4 1.5 13 1.5-4 1.5 18 1.5-4 1.5 14 1.5-9 1.5 7 1.5-2 1.5 9 1.5-6 1.5 6 1.5 1 1.5 3 1.5 0 1.5 4 1.5-1 1.5 2 1.5 1 1.5-5 1.5-7 1.5 2 1.5-15 1.5-1 1.5-7 1.5 0 1.5-18 1.5-7 1.5-15 1.5 9 1.5-44 1.5 12 1.5-16 1.5 8 1.5-24 1.5 23 1.5-26 1.5 11 1.5-15 1.5 32 1.5-47 1.5 29 1.5-29 1.5 3 1.5-14 1.5 43 1.5-33 1.5 15 1.5-6 1.5 27 1.5-18 1.5 16 1.5-24 1.5 22 1.5-18 1.5 26 1.5-26 1.5 30 1.5-31 1.5 7 1.5-5 1.5 36 1.5-17 1.5 18 1.5-5 1.5 38 1.5-21 1.5 27 1.5-13 1.5 18 1.5 0 1.5 17 1.5 3 1.5 10 1.5-1 1.5 6 1.5-3 1.5 7 1.5-2 1.5 8 1.5-3 1.5 4 1.5 1 1.5 3 1.5-4 1.5-1 1.5-10 1.5 3 1.5-10 1.5-3 1.5-18 1.5 5 1.5-28 1.5 8 1.5-23 1.5-2 1.5-17 1.5 34 1.5-41 1.5 17 1.5-12 1.5 18 1.5-16 1.5 15 1.5-20 1.5 8 1.5-7 1.5 4 1.5-21 1.5 44 1.5-33 1.5 12 1.5-25 1.5 12 1.5-18 1.5 36 1.5-29 1.5 14 1.5-16 1.5 24 1.5-33 1.5 10 1.5-14 1.5 35 1.5-18 1.5 32 1.5-14 1.5 12 1.5-12 1.5 41 1.5-21 1.5 5 1.5-6 1.5 28 1.5-30 1.5 23 1.5-17 1.5 11 1.5-13 1.5 26 1.5-21 1.5 10 1.5-6 1.5 17 1.5-10 1.5 11 1.5-1 1.5 8 1.5-5 1.5 15 1.5-11 1.5 11 1.5-13 1.5 5 1.5-4 1.5 12 1.5-10 1.5-5 1.5-19 1.5-12 1.5-19 1.5 14 1.5-24 1.5 13 1.5-18 1.5 31 1.5-26 1.5 21 1.5-23 1.5 11 1.5-30 1.5 39 1.5-36 1.5 44 1.5-45 1.5 38 1.5-23 1.5 10 1.5-4 1.5 21 1.5-25 1.5 25 1.5-28 1.5 37 1.5-33 1.5 38 1.5-35 1.5 31 1.5-20 1.5 8 1.5-7 1.5 25 1.5-29 1.5 38 1.5-32 1.5 11 1.5-17 1.5 12 1.5-11 1.5 22 1.5-18 1.5 25 1.5-26 1.5 23 1.5-30 1.5 15 1.5-18 1.5 37 1.5-25 1.5 4 1.5-16 1.5 36 1.5-39 1.5 33 1.5-18 1.5 13 1.5-24 1.5 20 1.5-25 1.5 43 1.5-45 1.5 22 1.5-21 1.5 33 1.5-27 1.5 12 1.5-17 1.5 23 1.5-10 1.5 5 1.5-15 1.5 23 1.5-17 1.5 23 1.5-35 1.5 20 1.5-29 1.5 21 1.5-13 1.5 32 1.5-29 1.5 26 1.5-28 1.5 30 1.5-28 1.5 18 1.5-15 1.5 31 1.5-26 1.5 18 1.5-3 1.5 4 1.5-2 1.5 11 1.5-10 1.5 13 1.5-9 1.5 6 1.5-6 1.5 12 1.5-15 1.5 25 1.5-18 1.5 19 1.5-15 1.5 13 1.5-13 1.5 5 1.5-8 1.5 12 1.5-1 1.5 11 1.5-17 1.5 18 1.5-14 1.5 11 1.5-4 1.5 5 1.5-1 1.5 12 1.5-12 1.5 8 1.5-6 1.5 4 1.5-10 1.5 22 1.5-16 1.5 9 1.5-5 1.5 9 1.5-12 1.5 12 1.5-3 1.5 9 1.5-11 1.5 13 1.5-8 1.5 11 1.5-13 1.5 8 1.5-2 1.5 12 1.5-17 1.5 14 1.5-10 1.5 5 1.5-4 1.5 4 1.5-6 1.5 8 1.5-11 1.5 13 1.5-8 1.5 16 1.5-10 1.5 11 1.5-7 1.5 7 1.5-7 1.5 7 1.5 0 1.5 6 1.5-6 1.5 6 1.5-1 1.5 6 1.5-5 1.5 7 1.5-5 1.5 7 1.5-2 1.5 2 1.5 0 1.5 1 1.5 1 1.5 3 1.5 0 1.5 1 1.5 1 1.5 2 1.5-1 1.5 1 1.5-2 1.5 1 1.5-2 1.5-1 1.5 0 1.5 0 1.5-1 1.5-1 1.5 0 1.5 0 1.5-1 1.5 0 1.5-1 1.5 1 1.5-1 1.5 1 1.5 0 1.5-2 1.5 0 1.5 0 1.5 0 1.5 1 1.5-1 1.5 0 1.5 0 1.5 1 1.5-2 1.5 0 1.5-1 1.5 2 1.5-2 1.5 1 1.5-1 1.5 0 1.5 0 1.5-1 1.5 0 1.5 2 1.5-2 1.5 1 1.5-1 1.5 1 1.5-1 1.5 0 1.5 0 1.5 0 1.5-1 1.5 3 1.5-3 1.5 1 1.5 0 1.5-1 1.5 1 1.5-1 1.5 0 1.5 2 1.5-2 1.5 0 1.5 1 1.5 1 1.5-2 1.5 2 1.5-2 1.5 2 1.5-1 1.5 1 1.5-1 1.5 2 1.5-2 1.5 2 1.5-1 1.5 0 1.5 1 1.5 0 1.5-1 1.5 1 1.5 0 1.5 1 1.5-1 1.5 2 1.5-1 1.5 1 1.5-1 1.5 2 1.5-1 1.5 1 1.5 0 1.5 1 1.5 0 1.5 1 1.5 0 1.5 0 1.5 0 1.5 3 1.5-2 1.5 1 1.5 1 1.5 0 1.5 0 1.5 1 1.5 0 1.5 0 1.5-1 1.5 1 1.5-1 1.5 1 1.5 0 1.5 1 1.5-2 1.5 1 1.5-1 1.5 1 1.5-1 1.5 0 1.5-3 1.5 2 1.5-3 1.5 2 1.5-5 1.5 4 1.5-11 1.5-11 1.5-17 1.5 6 1.5-13 1.5 11 1.5-11 1.5 14 1.5-27 1.5 23 1.5-29 1.5 31 1.5-34 1.5-1 1.5-11 1.5-4 1.5-25 1.5 31 1.5-42 1.5 47 1.5-57 1.5 45 1.5-67 1.5 42 1.5-48 1.5 59 1.5-36 1.5 9 1.5-7 1.5 8 1.5-19 1.5 48 1.5-52 1.5 43 1.5-47 1.5 20 1.5-15 1.5 34 1.5-32 1.5 63 1.5-43 1.5 40 1.5-65 1.5 58 1.5-36 1.5 26 1.5-22 1.5 21 1.5-16 1.5 48 1.5-36 1.5 22 1.5-31 1.5 38 1.5-22 1.5 38 1.5-6 1.5 20 1.5-26 1.5 12 1.5-5 1.5 18 1.5-15 1.5 26 1.5-24 1.5 24 1.5-31 1.5 16 1.5-15 1.5 19 1.5-13 1.5 10 1.5-15 1.5 31 1.5-27 1.5 26 1.5-37 1.5 38 1.5-42 1.5 31 1.5-44 1.5-3 1.5-12 1.5 22 1.5-58 1.5 48 1.5-47 1.5 41 1.5-45 1.5 40 1.5-25 1.5 50 1.5-64 1.5 64 1.5-42 1.5 30 1.5-31 1.5 38 1.5-40 1.5 20 1.5-8 1.5 46 1.5-39 1.5 38 1.5-48 1.5 47 1.5-40 1.5 17 1.5-18 1.5 38 1.5-18 1.5 17 1.5-28 1.5 20 1.5-19 1.5 20 1.5-16 1.5 30 1.5-19 1.5 21 1.5-19 1.5 30 1.5-35 1.5 25 1.5-20 1.5 38 1.5-35 1.5 35 1.5-27 1.5 10 1.5-16 1.5 29 1.5-22 1.5 16 1.5-15 1.5 12 1.5-31 1.5 15 1.5-21 1.5 42 1.5-52 1.5 28 1.5-45 1.5 47 1.5-60 1.5 16 1.5-27 1.5 17 1.5-16 1.5 44 1.5-53 1.5 21 1.5-9 1.5 38 1.5-58 1.5 37 1.5-39 1.5 64 1.5-48 1.5 8 1.5-12 1.5 45 1.5-40 1.5 44 1.5-25 1.5 18 1.5-16 1.5 19 1.5-8 1.5 25 1.5-19 1.5 19 1.5-35 1.5 14 1.5-7 1.5 19 1.5-22 1.5 4 1.5-17 1.5 33 1.5-35 1.5 17 1.5-17 1.5 14 1.5 2 1.5 5 1.5-19 1.5 19 1.5-4 1.5 29 1.5-30 1.5 38 1.5-38 1.5 28 1.5-34 1.5 26 1.5-37 1.5 23 1.5-22 1.5 17 1.5-10 1.5 13 1.5-8 1.5 3 1.5-16 1.5 16 1.5-21 1.5 39 1.5-34 1.5 26 1.5-18 1.5 33 1.5-30 1.5 20 1.5-24 1.5 27 1.5-40 1.5 53 1.5-39 1.5 9 1.5-9 1.5 27 1.5-25 1.5 29 1.5-22 1.5 14 1.5-16 1.5 0 1.5 5 1.5 9 1.5-11 1.5 17 1.5-2 1.5 12 1.5-25 1.5 47 1.5-38 1.5 19 1.5-13 1.5 24 1.5-14 1.5 9 1.5-17 1.5 18 1.5-16 1.5 9 1.5-11 1.5 22 1.5-23 1.5 6 1.5-6 1.5 22 1.5-27 1.5 22 1.5-23 1.5 12 1.5-17 1.5 34 1.5-25 1.5 17 1.5-26 1.5 26 1.5-30 1.5 37 1.5-24 1.5 17 1.5-20 1.5 24 1.5-33 1.5 39 1.5-31 1.5 27 1.5-29 1.5 11 1.5-6 1.5 27 1.5-28 1.5 34 1.5-23 1.5 12 1.5-12 1.5 10 1.5-7 1.5 20 1.5-18 1.5 34 1.5-22 1.5 17 1.5-9 1.5 6 1.5-7 1.5 10 1.5-9 1.5 15 1.5-9 1.5 19 1.5-15 1.5 14 1.5-6 1.5 8 1.5-6 1.5 6 1.5-6 1.5 13 1.5-5 1.5 13 1.5-16 1.5 14 1.5-8 1.5 13 1.5-13 1.5 10 1.5-6 1.5 10 1.5-6 1.5 6 1.5-8 1.5 9 1.5-5 1.5 9 1.5-8 1.5 10 1.5-5 1.5 9 1.5-8 1.5 4 1.5-7 1.5 4 1.5-2 1.5 9 1.5-8 1.5 7 1.5-3 1.5 4 1.5-2 1.5 2 1.5-3 1.5 8 1.5-7 1.5 5 1.5-2 1.5 3 1.5-2 1.5 1 1.5 0 1.5 5 1.5-5 1.5 6 1.5-4 1.5 5 1.5-2 1.5 2 1.5-2 1.5 3 1.5-2 1.5 3 1.5-1 1.5 1 1.5 0 1.5 3 1.5-2 1.5 3 1.5-1 1.5 3 1.5-2 1.5 2 1.5-2 1.5 2 1.5-1 1.5 3 1.5-1 1.5 1 1.5 0 1.5 1 1.5 0 1.5 0 1.5 0 1.5 1 1.5 0 1.5 1 1.5-1 1.5 1 1.5 0 1.5 1 1.5 0 1.5 0 1.5 0 0 1-1.5 0-1.5 0-1.5 0-1.5 0-1.5 1-1.5 0-1.5 0-1.5 1-1.5-1-1.5 1-1.5 0-1.5 1-1.5 0-1.5 1-1.5-1-1.5 1-1.5 0-1.5 1-1.5 0-1.5 0-1.5 1-1.5 1-1.5-2-1.5 3-1.5-1-1.5 1-1.5 0-1.5 1-1.5-2-1.5 3-1.5 0-1.5 1-1.5-1-1.5 3-1.5-2-1.5 2-1.5 0-1.5 2-1.5-3-1.5 4-1.5-2-1.5 3-1.5-5-1.5 5-1.5-5-1.5 7-1.5-1-1.5 2-1.5-3-1.5 4-1.5-4-1.5 6-1.5-4-1.5 3-1.5 0-1.5 2-1.5-2-1.5 6-1.5-3-1.5 4-1.5-3-1.5 4-1.5-2-1.5 1-1.5-1-1.5 5-1.5-6-1.5 6-1.5-8-1.5 9-1.5-4-1.5 7-1.5-6-1.5 7-1.5-3-1.5 5-1.5-5-1.5 4-1.5-2-1.5 6-1.5-9-1.5 4-1.5-3-1.5 11-1.5-8-1.5 6-1.5-6-1.5 12-1.5-9-1.5 6-1.5-3-1.5 10-1.5-5-1.5 4-1.5-1-1.5 0-1.5-8-1.5 15-1.5-10-1.5 16-1.5-5-1.5 10-1.5-16-1.5 25-1.5-13-1.5 11-1.5-19-1.5 29-1.5-14-1.5 11-1.5-18-1.5 24-1.5-12-1.5 5-1.5-15-1.5 23-1.5-29-1.5 22-1.5-6-1.5 13-1.5-20-1.5 15-1.5-18-1.5 27-1.5-9-1.5 12-1.5-13-1.5 5-1.5-9-1.5 10-1.5-11-1.5 14-1.5-7-1.5 14-1.5-13-1.5 7-1.5-5-1.5 12-1.5-19-1.5 19-1.5-30-1.5 23-1.5-4-1.5 9-1.5-22-1.5 19-1.5-3-1.5 7-1.5-19-1.5 21-1.5-15-1.5 21-1.5-14-1.5 10-1.5-13-1.5 16-1.5-9-1.5 7-1.5-4-1.5 8-1.5-18-1.5 15-1.5-21-1.5 15-1.5-19-1.5 33-1.5-16-1.5 5-1.5-23-1.5 20-1.5-20-1.5 28-1.5-30-1.5 28-1.5-25-1.5 17-1.5-4-1.5 7-1.5-22-1.5 37-1.5-27-1.5 17-1.5-12-1.5 10-1.5-3-1.5 10-1.5-20-1.5 27-1.5-9-1.5 3-1.5-21-1.5 27-1.5-22-1.5 20-1.5-17-1.5 23-1.5-11-1.5 10-1.5-23-1.5 30-1.5-22-1.5 23-1.5-17-1.5 21-1.5-23-1.5 12-1.5-23-1.5 35-1.5-21-1.5 5-1.5-24-1.5 28-1.5-26-1.5 10-1.5-31-1.5 31-1.5-24-1.5 21-1.5-16-1.5 9-1.5 4-1.5 10-1.5-13-1.5 16-1.5-20-1.5 26-1.5-42-1.5 45-1.5-45-1.5 39-1.5-20-1.5 24-1.5-27-1.5 23-1.5-12-1.5 13-1.5-39-1.5 27-1.5-23-1.5 21-1.5-37-1.5 32-1.5-17-1.5 7-1.5-25-1.5 16-1.5-23-1.5 20-1.5-28-1.5 20-1.5-27-1.5 23-1.5-28-1.5 18-1.5-4-1.5 10-1.5-22-1.5 20-1.5-9-1.5 5-1.5 1-1.5 11-1.5-28-1.5 29-1.5-15-1.5 21-1.5-21-1.5 11-1.5-18-1.5 29-1.5-9-1.5 9-1.5-9-1.5 15-1.5-28-1.5 46-1.5-22-1.5 28-1.5-15-1.5 24-1.5-21-1.5 17-1.5-6-1.5 19-1.5-42-1.5 53-1.5-37-1.5 44-1.5-48-1.5 54-1.5-23-1.5 10-1.5-45-1.5 54-1.5-43-1.5 47-1.5-41-1.5 21-1.5-15-1.5 20-1.5-34-1.5 22-1.5-54-1.5 26-1.5-24-1.5 22-1.5-21-1.5-9-1.5-9-1.5 18-1.5-10-1.5 4-1.5-9-1.5 20-1.5-22-1.5 9-1.5-20-1.5 24-1.5-14-1.5 13-1.5-18-1.5 18-1.5-7-1.5 14-1.5-12-1.5 18-1.5-13-1.5 10-1.5-24-1.5 33-1.5-16-1.5 27-1.5-14-1.5 15-1.5-4-1.5 8-1.5-27-1.5 43-1.5-26-1.5 22-1.5-16-1.5 30-1.5-13-1.5 5-1.5-16-1.5 25-1.5-29-1.5 42-1.5-49-1.5 52-1.5-22-1.5 18-1.5-50-1.5 38-1.5-33-1.5 35-1.5-44-1.5 26-1.5-37-1.5 23-1.5-23-1.5 17-1.5-25-1.5 11-1.5-21-1.5 35-1.5-22-1.5 20-1.5-18-1.5 10-1.5-20-1.5 9-1.5-18-1.5 3-1.5-10-1.5 3-1.5-3-1.5 10-1.5-18-1.5 21-1.5-20-1.5 23-1.5-12-1.5 5-1.5-23-1.5-3-1.5-15-1.5 2-1.5-5-1.5 3-1.5-5-1.5 1-1.5-2-1.5 0-1.5-1-1.5 0-1.5 0-1.5 0-1.5-1-1.5 2-1.5-1-1.5 1-1.5 0-1.5 0-1.5-1-1.5 1-1.5 0-1.5 1-1.5 0-1.5 1-1.5-1-1.5 1-1.5 1-1.5 0-1.5 0-1.5 1-1.5 0-1.5 0-1.5 0-1.5 1-1.5-1-1.5 2-1.5-2-1.5 2-1.5-1-1.5 2-1.5-1-1.5 2-1.5-2-1.5 1-1.5 0-1.5 0-1.5-1-1.5 3-1.5-1-1.5 0-1.5-1-1.5 2-1.5-1-1.5 1-1.5-1-1.5 2-1.5-3-1.5 2-1.5 1-1.5 0-1.5-1-1.5 1-1.5 0-1.5 0-1.5 1-1.5-1-1.5-2-1.5 3-1.5-2-1.5 2-1.5-2-1.5 1-1.5 0-1.5 0-1.5-2-1.5 2-1.5-1-1.5 1-1.5-1-1.5 0-1.5 0-1.5 1-1.5-2-1.5 1-1.5 0-1.5 0-1.5-1-1.5 1-1.5-3-1.5 2-1.5 0-1.5 0-1.5-1-1.5 1-1.5-2-1.5 2-1.5-1-1.5 0-1.5 0-1.5 0-1.5 0-1.5 0-1.5 0-1.5-1-1.5 1-1.5 0-1.5-1-1.5 0-1.5-2-1.5 2-1.5-3-1.5 2-1.5-3-1.5 2-1.5-1-1.5-1-1.5 0-1.5-1-1.5-1-1.5 0-1.5-1-1.5-1-1.5 0-1.5 2-1.5 0-1.5 2-1.5 0-1.5 2-1.5 0-1.5 2-1.5-1-1.5 4-1.5-3-1.5 8-1.5-4-1.5 9-1.5-3-1.5 4-1.5-2-1.5 10-1.5-5-1.5 6-1.5-4-1.5 6-1.5-2-1.5 10-1.5-7-1.5 5-1.5-3-1.5 5-1.5-8-1.5 14-1.5-12-1.5 9-1.5-5-1.5 6-1.5-3-1.5 4-1.5-6-1.5 13-1.5-9-1.5 6-1.5-10-1.5 11-1.5-3-1.5 8-1.5-6-1.5 9-1.5-9-1.5 6-1.5-10-1.5 13-1.5-7-1.5 10-1.5-11-1.5 12-1.5-9-1.5 15-1.5-10-1.5 9-1.5-18-1.5 22-1.5-8-1.5 4-1.5-12-1.5 8-1.5-12-1.5 21-1.5-14-1.5 17-1.5-20-1.5 14-1.5-13-1.5 17-1.5-8-1.5 6-1.5-13-1.5 7-1.5-19-1.5 24-1.5-11-1.5 6-1.5-11-1.5 14-1.5-19-1.5 21-1.5-6-1.5 8-1.5-19-1.5 25-1.5-17-1.5 20-1.5-7-1.5 7-1.5-11-1.5 17-1.5-10-1.5 11-1.5-4-1.5 5-1.5-9-1.5 16-1.5-21-1.5 23-1.5-23-1.5 18-1.5-5-1.5 11-1.5-12-1.5 6-1.5-28-1.5 23-1.5-15-1.5 19-1.5-22-1.5 20-1.5-19-1.5 21-1.5-25-1.5 25-1.5-12-1.5 0-1.5-7-1.5 18-1.5-18-1.5 7-1.5 2-1.5 5-1.5-4-1.5 2-1.5-19-1.5 26-1.5-14-1.5 5-1.5-5-1.5 9-1.5-16-1.5 21-1.5-25-1.5 12-1.5-6-1.5 3-1.5-5-1.5 8-1.5-14-1.5 2-1.5-6-1.5 1-1.5-8-1.5 18-1.5-7-1.5 6-1.5-11-1.5 12-1.5-6-1.5 15-1.5-9-1.5 11-1.5-20-1.5 17-1.5-2-1.5 17-1.5-13-1.5 19-1.5-26-1.5 21-1.5-11-1.5 16-1.5-24-1.5 29-1.5-8-1.5 6-1.5-19-1.5 7-1.5-8-1.5 7-1.5-24-1.5 8-1.5-15-1.5 9-1.5-17-1.5 13-1.5-18-1.5 8-1.5-20-1.5 10-1.5-11-1.5 5-1.5-5-1.5 4-1.5-6-1.5 1-1.5-3-1.5 6-1.5-4-1.5 12-1.5-3-1.5 1-1.5-5-1.5 15-1.5-4-1.5 9-1.5-17-1.5 16-1.5-7-1.5 20-1.5-9-1.5 13-1.5-10-1.5 14-1.5-10-1.5 5-1.5-1-1.5 15-1.5-22-1.5 27-1.5-13-1.5 23-1.5-24-1.5 23-1.5-31-1.5 30-1.5-22-1.5 34-1.5-33-1.5 26-1.5-29-1.5 37-1.5-34-1.5 17-1.5-7-1.5 12-1.5-23-1.5 10-1.5-28-1.5 20-1.5-11-1.5 8-1.5-14-1.5 12-1.5-12-1.5 4-1.5-10-1.5 13-1.5-17-1.5 6-1.5-6-1.5 4-1.5-19-1.5 4-1.5-6-1.5-3-1.5-13-1.5 6-1.5-12-1.5 2-1.5-9-1.5-1-1.5-5-1.5 4-1.5 0-1.5 4-1.5-1-1.5 5-1.5-4-1.5 9-1.5-2-1.5 4-1.5 1-1.5 4-1.5 0-1.5 15-1.5-9-1.5 16-1.5 0-1.5 8-1.5 6-1.5 5-1.5 1-1.5 13-1.5-18-1.5 33-1.5-15-1.5 12-1.5-2-1.5 4-1.5-7-1.5 18-1.5-16-1.5 31-1.5-24-1.5 20-1.5-15-1.5 22-1.5-29-1.5 27-1.5-39-1.5 24-1.5-18-1.5 18-1.5-14-1.5 9-1.5-20-1.5 13-1.5-22-1.5 13-1.5-18-1.5 19-1.5-18-1.5 6-1.5-20-1.5 17-1.5-23-1.5 3-1.5-21-1.5 6-1.5-17-1.5 6-1.5-9-1.5 0-1.5-7-1.5 0-1.5-7-1.5-3-1.5 0-1.5 3-1.5 1-1.5 3-1.5-1-1.5 2-1.5-2-1.5 7-1.5-2-1.5 4-1.5-4-1.5 4-1.5 1-1.5 7-1.5 1-1.5 5-1.5 0-1.5 9-1.5-2-1.5 6-1.5-2-1.5 21-1.5-18-1.5 30-1.5-17-1.5 29-1.5-16-1.5 20-1.5-16-1.5 19-1.5-44-1.5 36-1.5-20-1.5 11-1.5-18-1.5 22-1.5-32-1.5 16-1.5-11-1.5 16-1.5-16-1.5 19-1.5-14-1.5 15-1.5-10-1.5 11-1.5-9-1.5 6-1.5-24-1.5 28-1.5-33-1.5 24-1.5-31-1.5 16-1.5-6-1.5 4-1.5-9-1.5 1-1.5-8-1.5 9-1.5-18-1.5 14-1.5-14-1.5 16-1.5-12-1.5 10-1.5-1-1.5 10-1.5-19-1.5 17-1.5-8-1.5 12-1.5-15-1.5 11-1.5-13-1.5 26-1.5-21-1.5 19-1.5-8-1.5 9-1.5-5-1.5 12-1.5-8-1.5 15-1.5-20-1.5 26-1.5-19-1.5 33-1.5-22-1.5 22-1.5-29-1.5 46-1.5-40-1.5 32-1.5-37-1.5 38-1.5-34-1.5 52-1.5-34-1.5 37-1.5-34-1.5 21-1.5-29-1.5 49-1.5-20-1.5 7-1.5-15-1.5 22-1.5-10-1.5 29-1.5-38-1.5 37-1.5-59-1.5 59-1.5-25-1.5 20-1.5-31-1.5 24-1.5-27-1.5 21-1.5-47-1.5 60-1.5-27-1.5 23-1.5-46-1.5 36-1.5-47-1.5 50-1.5-44-1.5 36-1.5-37-1.5 29-1.5-31-1.5 18-1.5-36-1.5 42-1.5-45-1.5 47-1.5-42-1.5 24-1.5-30-1.5 51-1.5-45-1.5 25-1.5-4-1.5 18-1.5-25-1.5 15-1.5-17-1.5 22-1.5-19-1.5 22-1.5-34-1.5 24-1.5-41-1.5 43-1.5-42-1.5 33-1.5-26-1.5 16-1.5-5-1.5 18-1.5-22-1.5 11-1.5-7-1.5 12-1.5-21-1.5 19-1.5-23-1.5 21-1.5-13-1.5 13-1.5-33-1.5 24-1.5-3-1.5 10-1.5-31-1.5 17-1.5-9-1.5 12-1.5-12-1.5 7-1.5-8-1.5 14-1.5-15-1.5 7-1.5-8-1.5 7-1.5-8-1.5 5-1.5-13-1.5 9-1.5-8-1.5 10-1.5-13-1.5 22-1.5-8-1.5 14-1.5-14-1.5 24-1.5-29-1.5 33-1.5-8-1.5 14-1.5-34-1.5 44-1.5-38-1.5 40-1.5-16-1.5 10-1.5-35-1.5 50-1.5-42-1.5 44-1.5-38-1.5 11-1.5-2-1.5 9-1.5-29-1.5 12-1.5-5-1.5 5-1.5-23-1.5 16-1.5-7-1.5 4-1.5-19-1.5 19-1.5-14-1.5 10-1.5-20-1.5 11-1.5-6-1.5 3-1.5-13-1.5 10-1.5-9-1.5 11-1.5-11-1.5 2-1.5-10-1.5 8-1.5-10-1.5 7-1.5-11-1.5 8-1.5-5-1.5 4-1.5-4-1.5 6-1.5-1-1.5 4-1.5-9-1.5 17-1.5-5-1.5 17-1.5-7-1.5 12-1.5-14-1.5 23-1.5-16-1.5 21-1.5-22-1.5 33-1.5-32-1.5 45-1.5-39-1.5 43-1.5-25-1.5 37-1.5-22-1.5 21-1.5-44-1.5 45-1.5-33-1.5 30-1.5-24-1.5 48-1.5-51-1.5 38-1.5-11-1.5 34-1.5-19-1.5 11-1.5-39-1.5 59-1.5-67-1.5 47-1.5-41-1.5 28-1.5-18-1.5 24-1.5-22-1.5 45-1.5-24-1.5 27-1.5-42-1.5 41-1.5-48-1.5 64-1.5-31-1.5 36-1.5-37-1.5 16-1.5-23-1.5 27-1.5-16-1.5 23-1.5-53-1.5 31-1.5-48-1.5 32-1.5-14-1.5 18-1.5-30-1.5 40-1.5-41-1.5 36-1.5-43-1.5 36-1.5-49-1.5 64-1.5-31-1.5 27-1.5-48-1.5 49-1.5-36-1.5 39-1.5-15-1.5 1-1.5-38-1.5 50-1.5-27-1.5 29-1.5-43-1.5 39-1.5-38-1.5 36-1.5-12-1.5 31-1.5-42-1.5 34-1.5-42-1.5 37-1.5-52-1.5 40-1.5-55-1.5 47-1.5-37-1.5 7-1.5-32-1.5 25-1.5-22-1.5 24-1.5-31-1.5 10-1.5-6-1.5 10-1.5-21-1.5 3-1.5-19-1.5 19-1.5-17-1.5 11-1.5-8-1.5 9-1.5-18-1.5 16-1.5-16-1.5 10-1.5-12-1.5 10-1.5-2-1.5 4-1.5-16-1.5 21-1.5-10-1.5 3-1.5-6-1.5 4-1.5-8-1.5 8-1.5-2-1.5 8-1.5-8-1.5 7-1.5-12-1.5 12-1.5-6-1.5 15-1.5-17-1.5 20-1.5-8-1.5 23-1.5-21-1.5 48-1.5-14-1.5 26-1.5-15-1.5 6-1.5-17-1.5 20-1.5-7-1.5 18-1.5-33-1.5 31-1.5-25-1.5 34-1.5-39-1.5 19-1.5-17-1.5 15-1.5-26-1.5 34-1.5-28-1.5 14-1.5-23-1.5 22-1.5-36-1.5 27-1.5-9-1.5 25-1.5-29-1.5 27-1.5-40-1.5 36-1.5-26-1.5 30-1.5-32-1.5 32-1.5-24-1.5 2-1.5-20-1.5 12-1.5-19-1.5 28-1.5-24-1.5 7-1.5-14-1.5 21-1.5-30-1.5 26-1.5-25-1.5 17-1.5-3-1.5 2-1.5-17-1.5 14-1.5-2-1.5 2-1.5-13-1.5 11-1.5-9-1.5 7-1.5-10-1.5-1-1.5-9-1.5-4-1.5-11-1.5 0-1.5-4-1.5 2-1.5-3-1.5 2-1.5-2-1.5 2-1.5-2-1.5 2-1.5-2-1.5 1-1.5-1-1.5 2-1.5-1-1.5 2-1.5-1-1.5 1-1.5 0-1.5 0-1.5 0-1.5 1-1.5 0-1.5 0-1.5-1-1.5 2-1.5-1-1.5 1-1.5 1-1.5 0-1.5 0-1.5 1-1.5-1-1.5 1-1.5-1-1.5 2-1.5 0-1.5 0-1.5 0-1.5 1-1.5-1-1.5 2-1.5-1-1.5 1-1.5 1-1.5 0-1.5 0-1.5 0-1.5 0-1.5 1-1.5 0-1.5 1-1.5 0-1.5 0-1.5-2-1.5 3-1.5 0-1.5 0-1.5-1-1.5 2-1.5-3-1.5 2-1.5-3-1.5 3-1.5-2-1.5 2-1.5 0-1.5 0-1.5 0-1.5 0-1.5 0-1.5 0-1.5-1-1.5 0-1.5 0-1.5 1-1.5-2-1.5 1-1.5-1-1.5 1-1.5-1-1.5 0-1.5 0-1.5 1-1.5-2-1.5 1-1.5-1-1.5 0-1.5 0-1.5 1-1.5-1-1.5 0-1.5-1-1.5 2-1.5-1-1.5-1-1.5 0-1.5 1-1.5 0-1.5 0-1.5-1-1.5 0-1.5-1-1.5 2-1.5-1-1.5 0-1.5 0-1.5 0-1.5-1-1.5 1-1.5-2-1.5 2-1.5-2-1.5 2-1.5-3-1.5 2-1.5 0-1.5 0-1.5-1-1.5 1-1.5-1-1.5 1-1.5 0-1.5 0-1.5-2-1.5 2-1.5-1-1.5 0-1.5 1-1.5 0-1.5-2-1.5 1-1.5-1-1.5 1-1.5-2-1.5 2-1.5 0-1.5 0-1.5-1-1.5 0-1.5 0-1.5 0-1.5 0-1.5 0-1.5 0-1.5-1-1.5 2-1.5 2-1.5 0-1.5 2-1.5-3-1.5 5-1.5 0-1.5 4-1.5-4-1.5 4-1.5 0-1.5 4-1.5-5-1.5 2-1.5-7-1.5 10-1.5-6-1.5 5-1.5-5-1.5 3-1.5-4-1.5 4-1.5-4-1.5 4-1.5-8-1.5 6-1.5-5-1.5 8-1.5-8-1.5 9-1.5-4-1.5 9-1.5-9-1.5 13-1.5-3-1.5 1-1.5 1-1.5 4-1.5-15-1.5 14-1.5-8-1.5 7-1.5-10-1.5 15-1.5-9-1.5 9-1.5-9-1.5 10-1.5-9-1.5 11-1.5-8-1.5-1-1.5-11-1.5 10-1.5-6-1.5 11-1.5-10-1.5 8-1.5-13-1.5 12-1.5-8-1.5 6-1.5-6-1.5 10-1.5-6-1.5 5-1.5-8-1.5 7-1.5-9-1.5 16-1.5-14-1.5 15-1.5-16-1.5 22-1.5-21-1.5 19-1.5-21-1.5 15-1.5-13-1.5 13-1.5-8-1.5 3-1.5-7-1.5 6-1.5-12-1.5 13-1.5-11-1.5 11-1.5-5-1.5 1-1.5-11-1.5 12-1.5-3-1.5 2-1.5-6-1.5 4-1.5-2-1.5 5-1.5-5-1.5 5-1.5-3-1.5 6-1.5-3-1.5 4-1.5-9-1.5 11-1.5-5-1.5 5-1.5-8-1.5 7-1.5-8-1.5 8-1.5-8-1.5 13-1.5-13-1.5 8-1.5-6-1.5 10-1.5-1-1.5 4-1.5-8-1.5 6-1.5-7-1.5 13-1.5-9-1.5 11-1.5-6-1.5 8-1.5-6-1.5 8-1.5-13-1.5 10-1.5-5-1.5 8-1.5-13-1.5 13-1.5-2-1.5 2-1.5-9-1.5 14-1.5-12-1.5 14-1.5-21-1.5 19-1.5-7-1.5 8-1.5-15-1.5 16-1.5-10-1.5 10-1.5-7-1.5 0-1.5-8-1.5 13-1.5-8-1.5 7-1.5-9-1.5 15-1.5-14-1.5 13-1.5-7-1.5 5-1.5-16-1.5 18-1.5-1-1.5 2-1.5 0-1.5 14-1.5-19-1.5 21-1.5-23-1.5 22-1.5-17-1.5 27-1.5-13-1.5 9-1.5 0-1.5 9-1.5-10-1.5 3-1.5-16-1.5 26-1.5-18-1.5 13-1.5-13-1.5 15-1.5-19-1.5 19-1.5-9-1.5 12-1.5-7-1.5 5-1.5-26-1.5 27-1.5-14-1.5 9-1.5-8-1.5 9-1.5-7-1.5 12-1.5-24-1.5 24-1.5-26-1.5 21-1.5-11-1.5 6-1.5-8-1.5 18-1.5-25-1.5 18-1.5-16-1.5 15-1.5-20-1.5 27-1.5-29-1.5 30-1.5-26-1.5 18-1.5-12-1.5 18-1.5-16-1.5 15-1.5-22-1.5 21-1.5-15-1.5 9-1.5-9-1.5 19-1.5-10-1.5 8-1.5-5-1.5 10-1.5-20-1.5 12-1.5-1-1.5 12-1.5-19-1.5 17-1.5-7-1.5 11-1.5-31-1.5 31-1.5-13-1.5 15-1.5-17-1.5 19-1.5-28-1.5 29-1.5-21-1.5 8-1.5-3-1.5 12-1.5-32-1.5 37-1.5-17-1.5 17-1.5-34-1.5 31-1.5-15-1.5 9-1.5-19-1.5 21-1.5-27-1.5 22-1.5-22-1.5 26-1.5-16-1.5 18-1.5-16-1.5 14-1.5-11-1.5 17-1.5-14-1.5 13-1.5-31-1.5 26-1.5-15-1.5 16-1.5-26-1.5 36-1.5-13-1.5 19-1.5-12-1.5 12-1.5-23-1.5 31-1.5-17-1.5 34-1.5-21-1.5 10-1.5-31-1.5 32-1.5-17-1.5 16-1.5-18-1.5 2-1.5-21-1.5 30-1.5-24-1.5 8-1.5-9-1.5 14-1.5-4-1.5 14-1.5-25-1.5 23-1.5-21-1.5 17-1.5-13-1.5 20-1.5-25-1.5 32-1.5-11-1.5 5-1.5-35-1.5 27-1.5-25-1.5 28-1.5-36-1.5 18-1.5-13-1.5 15-1.5-11-1.5 5-1.5-31-1.5 22-1.5-18-1.5 15-1.5-9-1.5 26-1.5-10-1.5 5-1.5-10-1.5 22-1.5-30-1.5 32-1.5-27-1.5 18-1.5-37-1.5 28-1.5-30-1.5 15-1.5-18-1.5 8-1.5-19-1.5 17-1.5-11-1.5 3-1.5-12-1.5 3-1.5-14-1.5 5-1.5-17-1.5 8-1.5-13-1.5 0-1.5-11-1.5-6-1.5-1-1.5 0-1.5-1-1.5 0-1.5-1-1.5 0-1.5-1-1.5 1-1.5-1-1.5 0-1.5-1-1.5 0-1.5 0-1.5 0Z" fill="url(#wfill)" opacity="0.26"/><path d="M343 526l1.5 0 1.5-1 1.5 0 1.5 0 1.5 0 1.5-2 1.5 1 1.5-2 1.5 2 1.5-2 1.5 1 1.5-2 1.5 2 1.5-3 1.5-3 1.5-15 1.5-1 1.5-8 1.5-2 1.5-15 1.5 18 1.5-21 1.5 11 1.5-26 1.5 18 1.5-20 1.5 11 1.5-15 1.5 11 1.5-33 1.5 36 1.5-47 1.5 31 1.5-34 1.5 22 1.5-19 1.5 21 1.5-40 1.5 43 1.5-36 1.5 35 1.5-33 1.5 49 1.5-34 1.5 32 1.5-34 1.5 54 1.5-52 1.5 32 1.5-37 1.5 39 1.5-44 1.5 42 1.5-43 1.5 33 1.5-21 1.5 24 1.5-28 1.5 16 1.5-38 1.5 48 1.5-61 1.5 79 1.5-49 1.5 15 1.5-22 1.5 25 1.5-7 1.5 6 1.5-26 1.5 36 1.5-32 1.5 31 1.5-25 1.5 29 1.5-46 1.5 37 1.5-23 1.5 37 1.5-55 1.5 51 1.5-62 1.5 59 1.5-46 1.5 27 1.5-6 1.5 39 1.5-48 1.5 35 1.5-25 1.5 23 1.5-27 1.5 27 1.5-17 1.5 23 1.5-12 1.5 11 1.5-14 1.5 28 1.5-30 1.5 16 1.5-29 1.5 34 1.5-16 1.5 33 1.5-47 1.5 38 1.5-24 1.5 15 1.5-35 1.5 38 1.5-31 1.5 36 1.5-21 1.5 31 1.5-27 1.5 0 1.5-20 1.5 28 1.5-15 1.5 29 1.5-34 1.5 19 1.5-14 1.5 18 1.5-23 1.5 24 1.5-30 1.5 41 1.5-41 1.5 29 1.5-26 1.5 34 1.5-35 1.5 38 1.5-17 1.5 20 1.5-26 1.5 14 1.5-8 1.5 3 1.5-2 1.5 36 1.5-30 1.5 15 1.5-18 1.5 20 1.5-40 1.5 39 1.5-28 1.5 27 1.5-37 1.5 33 1.5-31 1.5 30 1.5-24 1.5 26 1.5-46 1.5 31 1.5-10 1.5 24 1.5-48 1.5 57 1.5-50 1.5 25 1.5-31 1.5 40 1.5-41 1.5 31 1.5-10 1.5 22 1.5-30 1.5 28 1.5-19 1.5 36 1.5-35 1.5 34 1.5-43 1.5 33 1.5-19 1.5 23 1.5-38 1.5 38 1.5-37 1.5 27 1.5-20 1.5 28 1.5-22 1.5 30 1.5-27 1.5 14 1.5-20 1.5 35 1.5-35 1.5 35 1.5-16 1.5 18 1.5-21 1.5 18 1.5-15 1.5 29 1.5-37 1.5 26 1.5-19 1.5 15 1.5-7 1.5 7 1.5-11 1.5 21 1.5-11 1.5 17 1.5-21 1.5 22 1.5-17 1.5 20 1.5-15 1.5 24 1.5-17 1.5 8 1.5-5 1.5 10 1.5-20 1.5 12 1.5-13 1.5 15 1.5-13 1.5 19 1.5-18 1.5 18 1.5-17 1.5 8 1.5-12 1.5 15 1.5-17 1.5 26 1.5-25 1.5 15 1.5-9 1.5 8 1.5-8 1.5 9 1.5-6 1.5 12 1.5-14 1.5 8 1.5-7 1.5 15 1.5-19 1.5 18 1.5-15 1.5 19 1.5-18 1.5 14 1.5-8 1.5 5 1.5-12 1.5 17 1.5-13 1.5 12 1.5-11 1.5 16 1.5-15 1.5 15 1.5-13 1.5 13 1.5-5 1.5 8 1.5-11 1.5 7 1.5-6 1.5 10 1.5-5 1.5 8 1.5-7 1.5 7 1.5-8 1.5 10 1.5-11 1.5 8 1.5-10 1.5 9 1.5-8 1.5 14 1.5-16 1.5 10 1.5-8 1.5 7 1.5-10 1.5 5 1.5-12 1.5 19 1.5-23 1.5 22 1.5-19 1.5 6 1.5-8 1.5 8 1.5-11 1.5 10 1.5-11 1.5 18 1.5-7 1.5 11 1.5-18 1.5 17 1.5-11 1.5 13 1.5-11 1.5 10 1.5-8 1.5 7 1.5-7 1.5 14 1.5-14 1.5 13 1.5-15 1.5 11 1.5-11 1.5 9 1.5-11 1.5 12 1.5-5 1.5 9 1.5-13 1.5 17 1.5-12 1.5 7 1.5-10 1.5 10 1.5-3 1.5 7 1.5-11 1.5 10 1.5-11 1.5 9 1.5-7 1.5 10 1.5-4 1.5 5 1.5-5 1.5 7 1.5-5 1.5 5 1.5-6 1.5 4 1.5-6 1.5 8 1.5-4 1.5 7 1.5-10 1.5 10 1.5-9 1.5 5 1.5-5 1.5 5 1.5-7 1.5 5 1.5-7 1.5 6 1.5-3 1.5 2 1.5-2 1.5 7 1.5-5 1.5 2 1.5-2 1.5 3 1.5-1 1.5 4 1.5-2 1.5 0 1.5 0 1.5 0 1.5 0 1.5 0 1.5-1 1.5 0 1.5-1 1.5 1 1.5-1 1.5 3 1.5-2 1.5 0 1.5-1 1.5 0 1.5-1 1.5 2 1.5 0 1.5-1 1.5-1 1.5 1 1.5-1 1.5 1 1.5-2 1.5 0 1.5 1 1.5 0 1.5 1 1.5 0 1.5-1 1.5 2 1.5-1 1.5-2 1.5 0 1.5 1 1.5 0 1.5 2 1.5-3 1.5 1 1.5-1 1.5 2 1.5 0 1.5 0 1.5-2 1.5 3 1.5-3 1.5 0 1.5 0 1.5 2 1.5-2 1.5 3 1.5-4 1.5 4 1.5-4 1.5 0 1.5 3 1.5 0 1.5-2 1.5-2 1.5 0 1.5 1 1.5-1 1.5 1 1.5-2 1.5 2 1.5 0 1.5-1 1.5 0 1.5 1 1.5 1 1.5-1 1.5-3 1.5 0 1.5 3 1.5-4 1.5 4 1.5-2 1.5-1 1.5 4 1.5-4 1.5 0 1.5 0 1.5 3 1.5-5 1.5 2 1.5 0 1.5 1 1.5-1 1.5 1 1.5 1 1.5 1 1.5-1 1.5 1 1.5-1 1.5 5 1.5-2 1.5-1 1.5-1 1.5 3 1.5-3 1.5 1 1.5 1 1.5 1 1.5-2 1.5 1 1.5 0 1.5 2 1.5-2 1.5 2 1.5 0 1.5 1 1.5-2 1.5 1 1.5-1 1.5 3 1.5-1 1.5 2 1.5-2 1.5 0 1.5 0 1.5 2 1.5-1 1.5 3 1.5-2 1.5 1 1.5 0 1.5 0 1.5 0 1.5 2 1.5-1 1.5 2 1.5-1 1.5 1 1.5-1 1.5 3 1.5-2 1.5 2 1.5-1 1.5 0 1.5-1 1.5 2 1.5-3 1.5 1 1.5-3 1.5 3 1.5-4 1.5 3 1.5-11 1.5 7 1.5-24 1.5 11 1.5-8 1.5 16 1.5-19 1.5 16 1.5-20 1.5 24 1.5-22 1.5 11 1.5-12 1.5 11 1.5-15 1.5 11 1.5-21 1.5 22 1.5-18 1.5 7 1.5-13 1.5 30 1.5-30 1.5 28 1.5-35 1.5 15 1.5-14 1.5 19 1.5-37 1.5 29 1.5-34 1.5 44 1.5-55 1.5 30 1.5-7 1.5 31 1.5-46 1.5 52 1.5-33 1.5 21 1.5-30 1.5 15 1.5-14 1.5 29 1.5-42 1.5 46 1.5-69 1.5 57 1.5-34 1.5 33 1.5-61 1.5 51 1.5-57 1.5 44 1.5-50 1.5 52 1.5-32 1.5 47 1.5-46 1.5 28 1.5-10 1.5 44 1.5-61 1.5 38 1.5-11 1.5 17 1.5-24 1.5 38 1.5-11 1.5 14 1.5-18 1.5 21 1.5-26 1.5 23 1.5-6 1.5 19 1.5-34 1.5 37 1.5-19 1.5 3 1.5-6 1.5 8 1.5-25 1.5 22 1.5-8 1.5 5 1.5-27 1.5 31 1.5-34 1.5 37 1.5-26 1.5 37 1.5-36 1.5 15 1.5-21 1.5 10 1.5-26 1.5 46 1.5-55 1.5 32 1.5-34 1.5 45 1.5-51 1.5 52 1.5-65 1.5 38 1.5-14 1.5 10 1.5-53 1.5 55 1.5-41 1.5 48 1.5-65 1.5 42 1.5-37 1.5 34 1.5-41 1.5 66 1.5-68 1.5 63 1.5-35 1.5 61 1.5-57 1.5 64 1.5-42 1.5 21 1.5-47 1.5 67 1.5-64 1.5 41 1.5-70 1.5 63 1.5-44 1.5 54 1.5-67 1.5 63 1.5-28 1.5 27 1.5-50 1.5 77 1.5-72 1.5 27 1.5-22 1.5 43 1.5-65 1.5 70 1.5-87 1.5 51 1.5-45 1.5 82 1.5-71 1.5 50 1.5-44 1.5 28 1.5-60 1.5 44 1.5-13 1.5 61 1.5-96 1.5 62 1.5-56 1.5 64 1.5-38 1.5 63 1.5-41 1.5 61 1.5-73 1.5 55 1.5-65 1.5 81 1.5-47 1.5 25 1.5-23 1.5 5 1.5-55 1.5 66 1.5-25 1.5 56 1.5-82 1.5 43 1.5-23 1.5 41 1.5-53 1.5 73 1.5-45 1.5 36 1.5-40 1.5 29 1.5-57 1.5 47 1.5-19 1.5 46 1.5-26 1.5 20 1.5-26 1.5 47 1.5-15 1.5 16 1.5-19 1.5 36 1.5-30 1.5 24 1.5-16 1.5 24 1.5-13 1.5 11 1.5-5 1.5 8 1.5-11 1.5 16 1.5-9 1.5 9 1.5-4 1.5 4 1.5-15 1.5 7 1.5-3 1.5 10 1.5-14 1.5 0 1.5-10 1.5 12 1.5-27 1.5 29 1.5-32 1.5 10 1.5-32 1.5 32 1.5-28 1.5 19 1.5-53 1.5 45 1.5-33 1.5 45 1.5-78 1.5 53 1.5-39 1.5 65 1.5-62 1.5 68 1.5-77 1.5 56 1.5-39 1.5 32 1.5-14 1.5 11 1.5-19 1.5 28 1.5-12 1.5 24 1.5-39 1.5 52 1.5-43 1.5 26 1.5-48 1.5 64 1.5-28 1.5 21 1.5-36 1.5 51 1.5-41 1.5 28 1.5-11 1.5 17 1.5-4 1.5 19 1.5-18 1.5 20 1.5-30 1.5 20 1.5-19 1.5 24 1.5-34 1.5 22 1.5-7 1.5 6 1.5-17 1.5 15 1.5-19 1.5 27 1.5-25 1.5 16 1.5-30 1.5 40 1.5-37 1.5 24 1.5-41 1.5 34 1.5-49 1.5 50 1.5-24 1.5 22 1.5-40 1.5 47 1.5-55 1.5 68 1.5-58 1.5 52 1.5-33 1.5 31 1.5-62 1.5 41 1.5-30 1.5 38 1.5-43 1.5 42 1.5-60 1.5 72 1.5-54 1.5 32 1.5-36 1.5 56 1.5-59 1.5 53 1.5-40 1.5 13 1.5-42 1.5 56 1.5-51 1.5 59 1.5-79 1.5 85 1.5-66 1.5 62 1.5-85 1.5 78 1.5-47 1.5 37 1.5-63 1.5 38 1.5-22 1.5 35 1.5-39 1.5 47 1.5-88 1.5 87 1.5-69 1.5 59 1.5-69 1.5 78 1.5-83 1.5 84 1.5-77 1.5 64 1.5-19 1.5 19 1.5-22 1.5 23 1.5-19 1.5 46 1.5-38 1.5 36 1.5-71 1.5 62 1.5-33 1.5 63 1.5-73 1.5 53 1.5-45 1.5 64 1.5-41 1.5 26 1.5-44 1.5 48 1.5-42 1.5 37 1.5-41 1.5 58 1.5-50 1.5 54 1.5-43 1.5 21 1.5-15 1.5 44 1.5-60 1.5 41 1.5-25 1.5 36 1.5-25 1.5 38 1.5-43 1.5 38 1.5-20 1.5 23 1.5-30 1.5 37 1.5-30 1.5 31 1.5-27 1.5 23 1.5-19 1.5 16 1.5-9 1.5 10 1.5-11 1.5 10 1.5-2 1.5 7 1.5-11 1.5 13 1.5-26 1.5 27 1.5-18 1.5 10 1.5-29 1.5 25 1.5-29 1.5 21 1.5-24 1.5 24 1.5-17 1.5 20 1.5-29 1.5 33 1.5-26 1.5 38 1.5-40 1.5 27 1.5-12 1.5 22 1.5-35 1.5 23 1.5-13 1.5 2 1.5-16 1.5 25 1.5-43 1.5 38 1.5-39 1.5 48 1.5-52 1.5 39 1.5-23 1.5 23 1.5-15 1.5 33 1.5-18 1.5 17 1.5-6 1.5 9 1.5-12 1.5 19 1.5-10 1.5 17 1.5-8 1.5 11 1.5-9 1.5 8 1.5 0 1.5 7 1.5-7 1.5 7 1.5-3 1.5 4 1.5-4 1.5 6 1.5-3 1.5 4 1.5-1 1.5-2 1.5-9 1.5 1 1.5-11 1.5 5 1.5-15 1.5 5 1.5-21 1.5 11 1.5-20 1.5 10 1.5-42 1.5 41 1.5-33 1.5 5 1.5-20 1.5 39 1.5-51 1.5 56 1.5-75 1.5 29 1.5-30 1.5 39 1.5-34 1.5 15 1.5-34 1.5 63 1.5-43 1.5 35 1.5-41 1.5 62 1.5-49 1.5 44 1.5-55 1.5 43 1.5-45 1.5 55 1.5-44 1.5 24 1.5-31 1.5 40 1.5-41 1.5 48 1.5-7 1.5 37 1.5-50 1.5 33 1.5-13 1.5 33 1.5-22 1.5 31 1.5-13 1.5 19 1.5-4 1.5 13 1.5-6 1.5 8 1.5-2 1.5 8 1.5-3 1.5 5 1.5-2 1.5 4 1.5-2 1.5 6 1.5-4 1.5 0 1.5-10 1.5 6 1.5-18 1.5 6 1.5-15 1.5-2 1.5-23 1.5 11 1.5-40 1.5 37 1.5-28 1.5 17 1.5-40 1.5 47 1.5-24 1.5 12 1.5-26 1.5 43 1.5-51 1.5 25 1.5-4 1.5 29 1.5-50 1.5 48 1.5-43 1.5 51 1.5-33 1.5 25 1.5-23 1.5 8 1.5-31 1.5 22 1.5-16 1.5 29 1.5-33 1.5 34 1.5-46 1.5 38 1.5-30 1.5 25 1.5-16 1.5 45 1.5-34 1.5 23 1.5-24 1.5 34 1.5-31 1.5 21 1.5-27 1.5 39 1.5-25 1.5 17 1.5-14 1.5 25 1.5-23 1.5 16 1.5-15 1.5 25 1.5-17 1.5 23 1.5-22 1.5 30 1.5-11 1.5 16 1.5-18 1.5 20 1.5-17 1.5 11 1.5-10 1.5 9 1.5-16 1.5 8 1.5-19 1.5 16 1.5-39 1.5 28 1.5-41 1.5 20 1.5-22 1.5 42 1.5-48 1.5 35 1.5-25 1.5 17 1.5-20 1.5 18 1.5-27 1.5 39 1.5-42 1.5 45 1.5-32 1.5 23 1.5-27 1.5 40 1.5-31 1.5 10 1.5-19 1.5 32 1.5-12 1.5 13 1.5-20 1.5 35 1.5-26 1.5 24 1.5-33 1.5 26 1.5-21 1.5 21 1.5-7 1.5 7 1.5-20 1.5 25 1.5-16 1.5 32 1.5-45 1.5 27 1.5-19 1.5 28 1.5-33 1.5 37 1.5-24 1.5 19 1.5-23 1.5 19 1.5-33 1.5 23 1.5-22 1.5 24 1.5-18 1.5 37 1.5-30 1.5 24 1.5-32 1.5 18 1.5-25 1.5 19 1.5-5 1.5 23 1.5-27 1.5 21 1.5-23 1.5 16 1.5-28 1.5 24 1.5-19 1.5 38 1.5-45 1.5 37 1.5-41 1.5 28 1.5-16 1.5 13 1.5-11 1.5 11 1.5-25 1.5 29 1.5-25 1.5 37 1.5-41 1.5 47 1.5-47 1.5 37 1.5-30 1.5 22 1.5-29 1.5 45 1.5-37 1.5 44 1.5-31 1.5 11 1.5-12 1.5 25 1.5-19 1.5 19 1.5-34 1.5 35 1.5-28 1.5 22 1.5-5 1.5 13 1.5-25 1.5 40 1.5-27 1.5 16 1.5-18 1.5 13 1.5-16 1.5 28 1.5-19 1.5 18 1.5-13 1.5 12 1.5-10 1.5 21 1.5-16 1.5 10 1.5-19 1.5 13 1.5-4 1.5 13 1.5-15 1.5 20 1.5-20 1.5 19 1.5-20 1.5 9 1.5-7 1.5 20 1.5-28 1.5 17 1.5-1 1.5 11 1.5-20 1.5 21 1.5-21 1.5 16 1.5-18 1.5 20 1.5-20 1.5 14 1.5-11 1.5 10 1.5-7 1.5 11 1.5-6 1.5 11 1.5-10 1.5 16 1.5-15 1.5 10 1.5-4 1.5 12 1.5-9 1.5 11 1.5-12 1.5 12 1.5-5 1.5 9 1.5-6 1.5 6 1.5-8 1.5 10 1.5-8 1.5 7 1.5-4 1.5 5 1.5-2 1.5 3 1.5-2 1.5 5 1.5-3 1.5 3 1.5 0 1.5 3 1.5-1 1.5 0 1.5-2 1.5 0 1.5-2 1.5 0 1.5-1 1.5 1 1.5-2 1.5 0 1.5-2 1.5 1 1.5-1 1.5 2 1.5-2 1.5 1 1.5 0 1.5-1 1.5 0 1.5-1 1.5 1 1.5 2 1.5-4 1.5 0 1.5 1 1.5 1 1.5-2 1.5 3 1.5-4 1.5 3 1.5-3 1.5 1 1.5-1 1.5 2 1.5-3 1.5 1 1.5 0 1.5 0 1.5-2 1.5 1 1.5 0 1.5 0 1.5 0 1.5 5 1.5-5 1.5 3 1.5-3 1.5 5 1.5-6 1.5 3 1.5-2 1.5 4 1.5-6 1.5 1 1.5-1 1.5 3 1.5-2 1.5 2 1.5-3 1.5 6 1.5-6 1.5 1 1.5-1 1.5 1 1.5-1 1.5 3 1.5-2 1.5 1 1.5 0 1.5 5 1.5-4 1.5 0 1.5 1 1.5 0 1.5-1 1.5 1 1.5-1 1.5 5 1.5-5 1.5 3 1.5-1 1.5-1 1.5 0 1.5 3 1.5-1 1.5 1 1.5 0 1.5 2 1.5-3 1.5 4 1.5-3 1.5 4 1.5-3 1.5 2 1.5-1 1.5 2 1.5-1 1.5 0 1.5 1 1.5 0 1.5 1 1.5 1 1.5 0 1.5 2 1.5-2 1.5 2 1.5-2 1.5 1 1.5-1 1.5 2 1.5-1 1.5 1 1.5-2 1.5 3 1.5-2 1.5 0 1.5-1 1.5 2 1.5-4 1.5 1 1.5-4 1.5 5 1.5-10 1.5 0 1.5-20 1.5 10 1.5-26 1.5 30 1.5-33 1.5 27 1.5-26 1.5 18 1.5-16 1.5 27 1.5-39 1.5 31 1.5-33 1.5 14 1.5-30 1.5 44 1.5-47 1.5 11 1.5-39 1.5 56 1.5-63 1.5 34 1.5-29 1.5 61 1.5-70 1.5 41 1.5-28 1.5 47 1.5-55 1.5 30 1.5-49 1.5 69 1.5-99 1.5 55 1.5-25 1.5 32 1.5-23 1.5 28 1.5-51 1.5 71 1.5-58 1.5 87 1.5-66 1.5 32 1.5-42 1.5 74 1.5-32 1.5 34 1.5-50 1.5 63 1.5-41 1.5 22 1.5-28 1.5 35 1.5-18 1.5 20 1.5-23 1.5 22 1.5-23 1.5 33 1.5-33 1.5 40 1.5-25 1.5 12 1.5-30 1.5 44 1.5-51 1.5 52 1.5-32 1.5 8 1.5-22 1.5 38 1.5-37 1.5 29 1.5-25 1.5 22 1.5-29 1.5 18 1.5-51 1.5 29 1.5-19 1.5 45 1.5-51 1.5 25 1.5-48 1.5 29 1.5-20 1.5 20 1.5-22 1.5 54 1.5-63 1.5 45 1.5-42 1.5 45 1.5-32 1.5 65 1.5-59 1.5 47 1.5-60 1.5 42 1.5-4 1.5 43 1.5-63 1.5 41 1.5-16 1.5 35 1.5-44 1.5 47 1.5-40 1.5 51 1.5-53 1.5 43 1.5-16 1.5 11 1.5-17 1.5 34 1.5-24 1.5 21 1.5-32 1.5 24 1.5-9 1.5 15 1.5-30 1.5 22 1.5-22 1.5 26 1.5-14 1.5 20 1.5-31 1.5 27 1.5-17 1.5 25 1.5-31 1.5 16 1.5-36 1.5 26 1.5-20 1.5 16 1.5-21 1.5 7 1.5-17 1.5 44 1.5-87 1.5 78 1.5-86 1.5 67 1.5-81 1.5 62 1.5-42 1.5 25 1.5-47 1.5 89 1.5-53 1.5 23 1.5-49 1.5 45 1.5-26 1.5 36 1.5-52 1.5 51 1.5-27 1.5 25 1.5-19 1.5 37 1.5-15 1.5 16 1.5-14 1.5 24 1.5-48 1.5 52 1.5-50 1.5 46 1.5-47 1.5 16 1.5-24 1.5 48 1.5-52 1.5 17 1.5-33 1.5 71 1.5-37 1.5 14 1.5-29 1.5 40 1.5-21 1.5 33 1.5-36 1.5 28 1.5-25 1.5 27 1.5-32 1.5 27 1.5-27 1.5 25 1.5-12 1.5 30 1.5-47 1.5 27 1.5-16 1.5 19 1.5-15 1.5 23 1.5-37 1.5 40 1.5-45 1.5 28 1.5-12 1.5 27 1.5-29 1.5 22 1.5-9 1.5 12 1.5-21 1.5 34 1.5-40 1.5 20 1.5-27 1.5 39 1.5-30 1.5 25 1.5-37 1.5 23 1.5-23 1.5 31 1.5-26 1.5 30 1.5-47 1.5 35 1.5-4 1.5 14 1.5-29 1.5 23 1.5-24 1.5 52 1.5-39 1.5 20 1.5-6 1.5 9 1.5-28 1.5 44 1.5-31 1.5 31 1.5-32 1.5 20 1.5-13 1.5 30 1.5-34 1.5 36 1.5-46 1.5 31 1.5-17 1.5 29 1.5-35 1.5 30 1.5-44 1.5 46 1.5-23 1.5 30 1.5-32 1.5 16 1.5-22 1.5 24 1.5-28 1.5 37 1.5-48 1.5 45 1.5-42 1.5 45 1.5-53 1.5 44 1.5-23 1.5 14 1.5-31 1.5 40 1.5-21 1.5 23 1.5-35 1.5 38 1.5-42 1.5 44 1.5-20 1.5 24 1.5-35 1.5 41 1.5-24 1.5 24 1.5-18 1.5 25 1.5-24 1.5 17 1.5-11 1.5 19 1.5-14 1.5 16 1.5-26 1.5 29 1.5-20 1.5 9 1.5-3 1.5 14 1.5-21 1.5 20 1.5-8 1.5 17 1.5-19 1.5 19 1.5-20 1.5 21 1.5-16 1.5 17 1.5-19 1.5 20 1.5-18 1.5 23 1.5-20 1.5 15 1.5-6 1.5 6 1.5-12 1.5 11 1.5-9 1.5 16 1.5-13 1.5 10 1.5-3 1.5 3 1.5-4 1.5 11 1.5-9 1.5 9 1.5-8 1.5 7 1.5-6 1.5 6 1.5-6 1.5 4 1.5-4 1.5 8 1.5-8 1.5 5 1.5-4 1.5 9 1.5-7 1.5 8 1.5-5 1.5 4 1.5-4 1.5 3 1.5-3 1.5 4 1.5-2 1.5 3 1.5-2 1.5 4 1.5-4 1.5 5 1.5-4 1.5 3 1.5-1 1.5 3 1.5-2 1.5 3 1.5-3 1.5 3 1.5-2 1.5 3 1.5-2 1.5 2 1.5-1 1.5 2 1.5-1 1.5 1 1.5-1 1.5 1 1.5 0 1.5 1 1.5-1 1.5 1 1.5 0 1.5 0 1.5 0 1.5 1 1.5 0 1.5 0 1.5 0 0 1-1.5 0-1.5 0-1.5 0-1.5 0-1.5 0-1.5 1-1.5-1-1.5 2-1.5-1-1.5 1-1.5-1-1.5 1-1.5 0-1.5 1-1.5-1-1.5 1-1.5-1-1.5 3-1.5-2-1.5 1-1.5 0-1.5 2-1.5-2-1.5 2-1.5-2-1.5 3-1.5-2-1.5 3-1.5-3-1.5 3-1.5-3-1.5 4-1.5-3-1.5 3-1.5-2-1.5 3-1.5-3-1.5 5-1.5-3-1.5 4-1.5-3-1.5 4-1.5-6-1.5 6-1.5-7-1.5 7-1.5-2-1.5 5-1.5-5-1.5 5-1.5-5-1.5 4-1.5 1-1.5 1-1.5-6-1.5 7-1.5-5-1.5 12-1.5-9-1.5 9-1.5-6-1.5 2-1.5-5-1.5 10-1.5-5-1.5 3-1.5-5-1.5 5-1.5-10-1.5 17-1.5-17-1.5 19-1.5-17-1.5 15-1.5-10-1.5 8-1.5-7-1.5 9-1.5-6-1.5 5-1.5-10-1.5 8-1.5-4-1.5 7-1.5-8-1.5 9-1.5-10-1.5 9-1.5-7-1.5 16-1.5-10-1.5 6-1.5-9-1.5 13-1.5-8-1.5 10-1.5-15-1.5 21-1.5-17-1.5 17-1.5-13-1.5 13-1.5-1-1.5 19-1.5-15-1.5 27-1.5-28-1.5 23-1.5-36-1.5 34-1.5-12-1.5 22-1.5-36-1.5 37-1.5-26-1.5 16-1.5-20-1.5 18-1.5-19-1.5 21-1.5-35-1.5 27-1.5-23-1.5 19-1.5-10-1.5 10-1.5-21-1.5 32-1.5-19-1.5 11-1.5-8-1.5 16-1.5-18-1.5 13-1.5-19-1.5 20-1.5-22-1.5 19-1.5-13-1.5 17-1.5-15-1.5 12-1.5-21-1.5 26-1.5-17-1.5 23-1.5-21-1.5 13-1.5-22-1.5 39-1.5-37-1.5 28-1.5-26-1.5 38-1.5-31-1.5 24-1.5-27-1.5 32-1.5-28-1.5 39-1.5-30-1.5 21-1.5-22-1.5 13-1.5-10-1.5 23-1.5-36-1.5 29-1.5-28-1.5 21-1.5-35-1.5 28-1.5-21-1.5 22-1.5-18-1.5 21-1.5-11-1.5 11-1.5-21-1.5 25-1.5-17-1.5 15-1.5-20-1.5 31-1.5-37-1.5 32-1.5-26-1.5 24-1.5-12-1.5 21-1.5-41-1.5 29-1.5-16-1.5 41-1.5-40-1.5 41-1.5-27-1.5 29-1.5-48-1.5 34-1.5-36-1.5 55-1.5-35-1.5 22-1.5-23-1.5 22-1.5-33-1.5 54-1.5-45-1.5 22-1.5-10-1.5 23-1.5-23-1.5 8-1.5-37-1.5 21-1.5-14-1.5 19-1.5-20-1.5 15-1.5-21-1.5 32-1.5-15-1.5 23-1.5-29-1.5 48-1.5-51-1.5 26-1.5-24-1.5 48-1.5-58-1.5 56-1.5-37-1.5 8-1.5-28-1.5 31-1.5-30-1.5 38-1.5-44-1.5 43-1.5-40-1.5 25-1.5-45-1.5 26-1.5-23-1.5 24-1.5-35-1.5 18-1.5-18-1.5 14-1.5-18-1.5 20-1.5-22-1.5 11-1.5-7-1.5 17-1.5-25-1.5 28-1.5-25-1.5 19-1.5-17-1.5 12-1.5-2-1.5 16-1.5-29-1.5 29-1.5-18-1.5 13-1.5-16-1.5 25-1.5-24-1.5 24-1.5-27-1.5 26-1.5-6-1.5 18-1.5-14-1.5 22-1.5-36-1.5 25-1.5-9-1.5 15-1.5-16-1.5 41-1.5-38-1.5 19-1.5-15-1.5 48-1.5-44-1.5 32-1.5-38-1.5 32-1.5-6-1.5 10-1.5-21-1.5 46-1.5-71-1.5 46-1.5-25-1.5 16-1.5-44-1.5 33-1.5-18-1.5 26-1.5-26-1.5 12-1.5-38-1.5 21-1.5-14-1.5 19-1.5-9-1.5 7-1.5-16-1.5 31-1.5-21-1.5 17-1.5-20-1.5 17-1.5-28-1.5 34-1.5-20-1.5 11-1.5-21-1.5 39-1.5-39-1.5 37-1.5-33-1.5 29-1.5-32-1.5 33-1.5-40-1.5 54-1.5-39-1.5 37-1.5-22-1.5 23-1.5-32-1.5 27-1.5-36-1.5 44-1.5-18-1.5 16-1.5-38-1.5 48-1.5-27-1.5 47-1.5-50-1.5 40-1.5-56-1.5 69-1.5-49-1.5 46-1.5-62-1.5 72-1.5-62-1.5 47-1.5-48-1.5 29-1.5-45-1.5 27-1.5-20-1.5 16-1.5-26-1.5 36-1.5-23-1.5 22-1.5-31-1.5 23-1.5-36-1.5 27-1.5-18-1.5 18-1.5-26-1.5 13-1.5-19-1.5 17-1.5-27-1.5 29-1.5-26-1.5 20-1.5-19-1.5 17-1.5-14-1.5 7-1.5-16-1.5 7-1.5-13-1.5 3-1.5-6-1.5 3-1.5-3-1.5 1-1.5-2-1.5 0-1.5-1-1.5 2-1.5-2-1.5 2-1.5-2-1.5 1-1.5-1-1.5 2-1.5-1-1.5 1-1.5-2-1.5 3-1.5 0-1.5 1-1.5 0-1.5 0-1.5-1-1.5 2-1.5 0-1.5 0-1.5-1-1.5 2-1.5 1-1.5 0-1.5-1-1.5 0-1.5 0-1.5 1-1.5-1-1.5 2-1.5-2-1.5 3-1.5 0-1.5-1-1.5-1-1.5 3-1.5-2-1.5 3-1.5-2-1.5 0-1.5 1-1.5 1-1.5 0-1.5-2-1.5 3-1.5-1-1.5 0-1.5 1-1.5 0-1.5 0-1.5 0-1.5 0-1.5 0-1.5-1-1.5 0-1.5 2-1.5-1-1.5 0-1.5-4-1.5 4-1.5 0-1.5 1-1.5-1-1.5 1-1.5-3-1.5 2-1.5-2-1.5 2-1.5 0-1.5 0-1.5-3-1.5 3-1.5-4-1.5 4-1.5 0-1.5 0-1.5-3-1.5 2-1.5 0-1.5 1-1.5-1-1.5-1-1.5-1-1.5 2-1.5-3-1.5 3-1.5-1-1.5 0-1.5 0-1.5 1-1.5-4-1.5 3-1.5-1-1.5 1-1.5-2-1.5 1-1.5-3-1.5 3-1.5 0-1.5 0-1.5-1-1.5-1-1.5 0-1.5 1-1.5-3-1.5 1-1.5-1-1.5 0-1.5-2-1.5 1-1.5-1-1.5-1-1.5-1-1.5 0-1.5-2-1.5 3-1.5-1-1.5 2-1.5 0-1.5 1-1.5 0-1.5 3-1.5-4-1.5 4-1.5-2-1.5 5-1.5-2-1.5 7-1.5-6-1.5 7-1.5-7-1.5 11-1.5-3-1.5 7-1.5-3-1.5 2-1.5-1-1.5 5-1.5-9-1.5 18-1.5-7-1.5 7-1.5-16-1.5 14-1.5-16-1.5 20-1.5-10-1.5 14-1.5-22-1.5 17-1.5-9-1.5 15-1.5-22-1.5 28-1.5-22-1.5 16-1.5-17-1.5 17-1.5-17-1.5 25-1.5-21-1.5 29-1.5-17-1.5 6-1.5-18-1.5 23-1.5-23-1.5 18-1.5-8-1.5 15-1.5-11-1.5 6-1.5-6-1.5 9-1.5-5-1.5 17-1.5-18-1.5 9-1.5-10-1.5 20-1.5-27-1.5 25-1.5-18-1.5 18-1.5-18-1.5 8-1.5-15-1.5 18-1.5-12-1.5 12-1.5-20-1.5 14-1.5-17-1.5 18-1.5-14-1.5 18-1.5-19-1.5 22-1.5-22-1.5 25-1.5-32-1.5 21-1.5-15-1.5 21-1.5-22-1.5 26-1.5-10-1.5 6-1.5-6-1.5 17-1.5-23-1.5 17-1.5-5-1.5 22-1.5-42-1.5 39-1.5-21-1.5 29-1.5-22-1.5 26-1.5-29-1.5 14-1.5-17-1.5 14-1.5-26-1.5 24-1.5-27-1.5 41-1.5-35-1.5 33-1.5-33-1.5 34-1.5-34-1.5 29-1.5-32-1.5 40-1.5-28-1.5 16-1.5-12-1.5 10-1.5-26-1.5 42-1.5-36-1.5 36-1.5-40-1.5 40-1.5-44-1.5 30-1.5-29-1.5 40-1.5-27-1.5 22-1.5-36-1.5 29-1.5-31-1.5 20-1.5-22-1.5 15-1.5-10-1.5 16-1.5-22-1.5 13-1.5-7-1.5 11-1.5-10-1.5 4-1.5-6-1.5 18-1.5-28-1.5 24-1.5-8-1.5 22-1.5-19-1.5 11-1.5-16-1.5 32-1.5-39-1.5 28-1.5-23-1.5 35-1.5-18-1.5 34-1.5-23-1.5-1-1.5-8-1.5 18-1.5-32-1.5 39-1.5-30-1.5 25-1.5-33-1.5 22-1.5-21-1.5 8-1.5-12-1.5-1-1.5-21-1.5 14-1.5-17-1.5 16-1.5-15-1.5 10-1.5-13-1.5 12-1.5-15-1.5 14-1.5-7-1.5 10-1.5-6-1.5 9-1.5-9-1.5 15-1.5-15-1.5 27-1.5-27-1.5 19-1.5-17-1.5 35-1.5-32-1.5 37-1.5-26-1.5 19-1.5-23-1.5 30-1.5-26-1.5 29-1.5-18-1.5 30-1.5-20-1.5 26-1.5-29-1.5 28-1.5-30-1.5 26-1.5-33-1.5 32-1.5-34-1.5 41-1.5-33-1.5 45-1.5-45-1.5 38-1.5-39-1.5 16-1.5-16-1.5 23-1.5-40-1.5 29-1.5-18-1.5 13-1.5-27-1.5 32-1.5-19-1.5 0-1.5-11-1.5 22-1.5-31-1.5 27-1.5-28-1.5 15-1.5-21-1.5 15-1.5-18-1.5 6-1.5-12-1.5 2-1.5-9-1.5 3-1.5-6-1.5-1-1.5-3-1.5 4-1.5-2-1.5 5-1.5-3-1.5 4-1.5-3-1.5 6-1.5-3-1.5 6-1.5-5-1.5 14-1.5-4-1.5 15-1.5-6-1.5 14-1.5-3-1.5 19-1.5-20-1.5 35-1.5-36-1.5 36-1.5-29-1.5 42-1.5-26-1.5 18-1.5-30-1.5 36-1.5-14-1.5 41-1.5-50-1.5 39-1.5-40-1.5 39-1.5-33-1.5 48-1.5-58-1.5 60-1.5-49-1.5 42-1.5-36-1.5 7-1.5-31-1.5 36-1.5-26-1.5 20-1.5-40-1.5 39-1.5-20-1.5 15-1.5-27-1.5 5-1.5-15-1.5 18-1.5-15-1.5 8-1.5-31-1.5 9-1.5-9-1.5 8-1.5-19-1.5 9-1.5-9-1.5 3-1.5-8-1.5-1-1.5 0-1.5 3-1.5-3-1.5 4-1.5-2-1.5 4-1.5-4-1.5 8-1.5-7-1.5 9-1.5-2-1.5 9-1.5-12-1.5 16-1.5-9-1.5 15-1.5-13-1.5 25-1.5-16-1.5 10-1.5-9-1.5 32-1.5-18-1.5 27-1.5-33-1.5 43-1.5-28-1.5 15-1.5-27-1.5 46-1.5-42-1.5 14-1.5-26-1.5 38-1.5-42-1.5 38-1.5-34-1.5 33-1.5-43-1.5 38-1.5-15-1.5 4-1.5-14-1.5 32-1.5-35-1.5 34-1.5-34-1.5 24-1.5-23-1.5 24-1.5-24-1.5 23-1.5-24-1.5 24-1.5-31-1.5 28-1.5-22-1.5 10-1.5-13-1.5 2-1.5-8-1.5 13-1.5-12-1.5 23-1.5-24-1.5 13-1.5-3-1.5 10-1.5-13-1.5 11-1.5-14-1.5 21-1.5-21-1.5 35-1.5-27-1.5 23-1.5-34-1.5 33-1.5-24-1.5 40-1.5-46-1.5 29-1.5-10-1.5 21-1.5-16-1.5 35-1.5-34-1.5 37-1.5-53-1.5 67-1.5-61-1.5 59-1.5-54-1.5 58-1.5-51-1.5 46-1.5-56-1.5 54-1.5-54-1.5 53-1.5-45-1.5 66-1.5-70-1.5 67-1.5-60-1.5 70-1.5-77-1.5 75-1.5-40-1.5 34-1.5-45-1.5 61-1.5-79-1.5 45-1.5-13-1.5 45-1.5-69-1.5 42-1.5-27-1.5 17-1.5-35-1.5 31-1.5-16-1.5 32-1.5-62-1.5 52-1.5-55-1.5 58-1.5-30-1.5 26-1.5-48-1.5 51-1.5-53-1.5 47-1.5-52-1.5 57-1.5-39-1.5 32-1.5-30-1.5 20-1.5-29-1.5 36-1.5-28-1.5 31-1.5-36-1.5 52-1.5-37-1.5 31-1.5-61-1.5 43-1.5-31-1.5 30-1.5-29-1.5 10-1.5-19-1.5 19-1.5-30-1.5 30-1.5-28-1.5 24-1.5-14-1.5 9-1.5-23-1.5 24-1.5-7-1.5 28-1.5-33-1.5 34-1.5-39-1.5 20-1.5-27-1.5 33-1.5-20-1.5 29-1.5-28-1.5 24-1.5-28-1.5 15-1.5-20-1.5 19-1.5-20-1.5 12-1.5-9-1.5 8-1.5-24-1.5 20-1.5-13-1.5 16-1.5-17-1.5 17-1.5-17-1.5 13-1.5-20-1.5 22-1.5-19-1.5 21-1.5-18-1.5 30-1.5-35-1.5 34-1.5-23-1.5 36-1.5-21-1.5 22-1.5-28-1.5 24-1.5-11-1.5 9-1.5-28-1.5 43-1.5-23-1.5 15-1.5-15-1.5 12-1.5-12-1.5 24-1.5-47-1.5 36-1.5-35-1.5 25-1.5-20-1.5 17-1.5-35-1.5 32-1.5-22-1.5 10-1.5-10-1.5 11-1.5-11-1.5 14-1.5-25-1.5 28-1.5-22-1.5 20-1.5-26-1.5 26-1.5-27-1.5 17-1.5-14-1.5 9-1.5-16-1.5 20-1.5-15-1.5 11-1.5-11-1.5 3-1.5-8-1.5 12-1.5-14-1.5 13-1.5-13-1.5 13-1.5 0-1.5 11-1.5-15-1.5 16-1.5-15-1.5 18-1.5-16-1.5 34-1.5-24-1.5 19-1.5-3-1.5 7-1.5-5-1.5 26-1.5-24-1.5 45-1.5-55-1.5 53-1.5-47-1.5 59-1.5-38-1.5 9-1.5-25-1.5 56-1.5-36-1.5 9-1.5-19-1.5 24-1.5-26-1.5 46-1.5-52-1.5 75-1.5-79-1.5 56-1.5-33-1.5 30-1.5-32-1.5 45-1.5-46-1.5 26-1.5-49-1.5 54-1.5-31-1.5 52-1.5-72-1.5 53-1.5-26-1.5 21-1.5-20-1.5 40-1.5-59-1.5 35-1.5-49-1.5 51-1.5-42-1.5 72-1.5-63-1.5 61-1.5-73-1.5 45-1.5-47-1.5 71-1.5-42-1.5 19-1.5-49-1.5 58-1.5-49-1.5 60-1.5-60-1.5 73-1.5-58-1.5 35-1.5-50-1.5 66-1.5-55-1.5 31-1.5-21-1.5 12-1.5-22-1.5 17-1.5-40-1.5 34-1.5-27-1.5 30-1.5-14-1.5 43-1.5-59-1.5 59-1.5-46-1.5 44-1.5-50-1.5 52-1.5-56-1.5 38-1.5-50-1.5 44-1.5-54-1.5 52-1.5-45-1.5 30-1.5-19-1.5 18-1.5-39-1.5 30-1.5-30-1.5 25-1.5-22-1.5 13-1.5-26-1.5 15-1.5-22-1.5 21-1.5-13-1.5 5-1.5-7-1.5 5-1.5-11-1.5 11-1.5-8-1.5 16-1.5-16-1.5 9-1.5-7-1.5 16-1.5-18-1.5 11-1.5-16-1.5 22-1.5-12-1.5 9-1.5-12-1.5 20-1.5-18-1.5 10-1.5-16-1.5 17-1.5-7-1.5 6-1.5-9-1.5 28-1.5-24-1.5 17-1.5-3-1.5 15-1.5-14-1.5 20-1.5-21-1.5 16-1.5-3-1.5 28-1.5-30-1.5 14-1.5-11-1.5 20-1.5-36-1.5 21-1.5-19-1.5 27-1.5-22-1.5 28-1.5-35-1.5 23-1.5-18-1.5 21-1.5-34-1.5 31-1.5-23-1.5 17-1.5-27-1.5 26-1.5-21-1.5 33-1.5-40-1.5 37-1.5-33-1.5 38-1.5-33-1.5 13-1.5-19-1.5 15-1.5-19-1.5 31-1.5-24-1.5 13-1.5-18-1.5 10-1.5-12-1.5 10-1.5-20-1.5 21-1.5-15-1.5 21-1.5-26-1.5 22-1.5-16-1.5 7-1.5-3-1.5 13-1.5-25-1.5 21-1.5-19-1.5 15-1.5-20-1.5 10-1.5-10-1.5 2-1.5-12-1.5 2-1.5-1-1.5 2-1.5-2-1.5 1-1.5-2-1.5 1-1.5-1-1.5 0-1.5 0-1.5 1-1.5-1-1.5 2-1.5-2-1.5 2-1.5-2-1.5 3-1.5-1-1.5 2-1.5 0-1.5 0-1.5 0-1.5 2-1.5 0-1.5 0-1.5 0-1.5 0-1.5 0-1.5 0-1.5-1-1.5 3-1.5 0-1.5 0-1.5-3-1.5 4-1.5 0-1.5 0-1.5-1-1.5 2-1.5-1-1.5 1-1.5-1-1.5 3-1.5-1-1.5-1-1.5 1-1.5 1-1.5-2-1.5 2-1.5-2-1.5 1-1.5 0-1.5 3-1.5-5-1.5 5-1.5-4-1.5 4-1.5 0-1.5 2-1.5-1-1.5 0-1.5-1-1.5 1-1.5-4-1.5 5-1.5-6-1.5 4-1.5 1-1.5 0-1.5-1-1.5 0-1.5 0-1.5 0-1.5-2-1.5 1-1.5-3-1.5 4-1.5 0-1.5 0-1.5-4-1.5 3-1.5 0-1.5 0-1.5-2-1.5 1-1.5 0-1.5 0-1.5-1-1.5 0-1.5 0-1.5 2-1.5-6-1.5 4-1.5 1-1.5 0-1.5-2-1.5 1-1.5-2-1.5 2-1.5-3-1.5 3-1.5-1-1.5 2-1.5-2-1.5 1-1.5-3-1.5 3-1.5-2-1.5 2-1.5-2-1.5 1-1.5-3-1.5 2-1.5-2-1.5 3-1.5-2-1.5 3-1.5-3-1.5 2-1.5-2-1.5 2-1.5 0-1.5 0-1.5-1-1.5 0-1.5 0-1.5 0-1.5 0-1.5 0-1.5-1-1.5 0-1.5 0-1.5-1-1.5-1-1.5 1-1.5-2-1.5 3-1.5-2-1.5 3-1.5-4-1.5 1-1.5 1-1.5-1-1.5 2-1.5-1-1.5 0-1.5 1-1.5-3-1.5 5-1.5-3-1.5 3-1.5-3-1.5 4-1.5-3-1.5 6-1.5-8-1.5 10-1.5-11-1.5 10-1.5-10-1.5 6-1.5-6-1.5 10-1.5-8-1.5 3-1.5-4-1.5 5-1.5-6-1.5 8-1.5-6-1.5 5-1.5-6-1.5 10-1.5-10-1.5 7-1.5-3-1.5 4-1.5-6-1.5 11-1.5-5-1.5 8-1.5-11-1.5 13-1.5-11-1.5 5-1.5-1-1.5 8-1.5-16-1.5 12-1.5-10-1.5 10-1.5-9-1.5 13-1.5-17-1.5 16-1.5-12-1.5 8-1.5-7-1.5 11-1.5-10-1.5 3-1.5-5-1.5 11-1.5-13-1.5 13-1.5-12-1.5 12-1.5-13-1.5 17-1.5-15-1.5 8-1.5-2-1.5 12-1.5-19-1.5 17-1.5-7-1.5 5-1.5-11-1.5 20-1.5-19-1.5 21-1.5-24-1.5 24-1.5-24-1.5 15-1.5-14-1.5 13-1.5-5-1.5 4-1.5-7-1.5 4-1.5-13-1.5 11-1.5-9-1.5 16-1.5-18-1.5 10-1.5-2-1.5 8-1.5-9-1.5 3-1.5-2-1.5 4-1.5-5-1.5 6-1.5-4-1.5 6-1.5-10-1.5 15-1.5-10-1.5 6-1.5-11-1.5 15-1.5-10-1.5 4-1.5-3-1.5 5-1.5-12-1.5 15-1.5-12-1.5 10-1.5-3-1.5 4-1.5-6-1.5 14-1.5-14-1.5 20-1.5-18-1.5 20-1.5-18-1.5 18-1.5-14-1.5 13-1.5-21-1.5 22-1.5-14-1.5 19-1.5-15-1.5 7-1.5-4-1.5 7-1.5-9-1.5 15-1.5-17-1.5 19-1.5-23-1.5 20-1.5-21-1.5 13-1.5-4-1.5 14-1.5-13-1.5 13-1.5-22-1.5 22-1.5-16-1.5 15-1.5-19-1.5 14-1.5-5-1.5 11-1.5-25-1.5 27-1.5-18-1.5 15-1.5-14-1.5 23-1.5-11-1.5 12-1.5-24-1.5 27-1.5-24-1.5 17-1.5-8-1.5 13-1.5-17-1.5 26-1.5-28-1.5 25-1.5-24-1.5 30-1.5-12-1.5 9-1.5-19-1.5 27-1.5-22-1.5 20-1.5-24-1.5 29-1.5-31-1.5 28-1.5-33-1.5 32-1.5-27-1.5 19-1.5-23-1.5 27-1.5-28-1.5 17-1.5-19-1.5 20-1.5-24-1.5 34-1.5-31-1.5 14-1.5-10-1.5 11-1.5-11-1.5 15-1.5-23-1.5 29-1.5-30-1.5 17-1.5-9-1.5 11-1.5-21-1.5 24-1.5-26-1.5 26-1.5-16-1.5 26-1.5-12-1.5 15-1.5-27-1.5 17-1.5-12-1.5 18-1.5-15-1.5 12-1.5-12-1.5 20-1.5-17-1.5 38-1.5-38-1.5 15-1.5-25-1.5 34-1.5-29-1.5 21-1.5-31-1.5 29-1.5-18-1.5 30-1.5-22-1.5 11-1.5-15-1.5 16-1.5-28-1.5 32-1.5-26-1.5 22-1.5-15-1.5 25-1.5-26-1.5 26-1.5-35-1.5 37-1.5-38-1.5 32-1.5-27-1.5 40-1.5-26-1.5 17-1.5-12-1.5 13-1.5-25-1.5 44-1.5-45-1.5 39-1.5-43-1.5 32-1.5-32-1.5 41-1.5-36-1.5 25-1.5-8-1.5 23-1.5-37-1.5 36-1.5-42-1.5 35-1.5-43-1.5 50-1.5-49-1.5 45-1.5-19-1.5 13-1.5-32-1.5 63-1.5-62-1.5 64-1.5-43-1.5 34-1.5-43-1.5 36-1.5-10-1.5 22-1.5-43-1.5 33-1.5-32-1.5 17-1.5-18-1.5 30-1.5-47-1.5 24-1.5-11-1.5 24-1.5-15-1.5 30-1.5-57-1.5 45-1.5-9-1.5 28-1.5-24-1.5 14-1.5-16-1.5 11-1.5-15-1.5 30-1.5-38-1.5 11-1.5-21-1.5 13-1.5-21-1.5 23-1.5-25-1.5 20-1.5-18-1.5 0-1.5-7-1.5 8-1.5-27-1.5 26-1.5-11-1.5 22-1.5-34-1.5 46-1.5-19-1.5 21-1.5-20-1.5 20-1.5-36-1.5 43-1.5-42-1.5 24-1.5-32-1.5 22-1.5-17-1.5 17-1.5-32-1.5 22-1.5-16-1.5 5-1.5-12-1.5 7-1.5-18-1.5 16-1.5-21-1.5 12-1.5-15-1.5 1-1.5-7-1.5-3-1.5-2-1.5 1-1.5-1-1.5 0-1.5-1-1.5 1-1.5-1-1.5 0-1.5 0-1.5 0-1.5-1-1.5 0-1.5 0-1.5 0Z" fill="url(#wfill)" opacity="0.4"/><path d="M343 526l1.5 0 1.5 0 1.5 0 1.5-1 1.5 1 1.5-2 1.5 2 1.5-2 1.5 2 1.5-3 1.5 2 1.5-2 1.5 3 1.5-4 1.5 3 1.5-19 1.5 11 1.5-19 1.5 19 1.5-31 1.5 31 1.5-33 1.5 27 1.5-30 1.5 39 1.5-36 1.5 27 1.5-40 1.5 44 1.5-48 1.5 47 1.5-44 1.5 38 1.5-55 1.5 47 1.5-52 1.5 54 1.5-52 1.5 66 1.5-53 1.5 49 1.5-63 1.5 70 1.5-76 1.5 56 1.5-61 1.5 73 1.5-82 1.5 80 1.5-77 1.5 64 1.5-51 1.5 55 1.5-75 1.5 81 1.5-60 1.5 70 1.5-67 1.5 42 1.5-63 1.5 63 1.5-46 1.5 75 1.5-88 1.5 67 1.5-71 1.5 67 1.5-62 1.5 69 1.5-64 1.5 81 1.5-90 1.5 64 1.5-62 1.5 80 1.5-77 1.5 65 1.5-64 1.5 67 1.5-52 1.5 58 1.5-95 1.5 90 1.5-87 1.5 101 1.5-105 1.5 85 1.5-82 1.5 78 1.5-76 1.5 90 1.5-67 1.5 65 1.5-83 1.5 69 1.5-54 1.5 85 1.5-68 1.5 54 1.5-53 1.5 60 1.5-62 1.5 44 1.5-50 1.5 72 1.5-72 1.5 72 1.5-77 1.5 75 1.5-58 1.5 46 1.5-49 1.5 60 1.5-53 1.5 51 1.5-51 1.5 41 1.5-55 1.5 58 1.5-68 1.5 75 1.5-62 1.5 53 1.5-68 1.5 61 1.5-65 1.5 83 1.5-67 1.5 68 1.5-79 1.5 73 1.5-72 1.5 62 1.5-58 1.5 56 1.5-43 1.5 53 1.5-49 1.5 54 1.5-65 1.5 53 1.5-54 1.5 65 1.5-50 1.5 56 1.5-54 1.5 53 1.5-54 1.5 44 1.5-55 1.5 56 1.5-32 1.5 39 1.5-43 1.5 35 1.5-40 1.5 43 1.5-35 1.5 40 1.5-36 1.5 38 1.5-52 1.5 36 1.5-44 1.5 59 1.5-62 1.5 46 1.5-41 1.5 57 1.5-71 1.5 58 1.5-42 1.5 41 1.5-53 1.5 64 1.5-56 1.5 52 1.5-43 1.5 31 1.5-27 1.5 46 1.5-58 1.5 47 1.5-48 1.5 59 1.5-51 1.5 48 1.5-55 1.5 62 1.5-49 1.5 42 1.5-47 1.5 43 1.5-53 1.5 46 1.5-26 1.5 31 1.5-48 1.5 55 1.5-46 1.5 40 1.5-39 1.5 51 1.5-45 1.5 31 1.5-42 1.5 51 1.5-43 1.5 47 1.5-51 1.5 48 1.5-33 1.5 36 1.5-28 1.5 23 1.5-33 1.5 41 1.5-36 1.5 35 1.5-37 1.5 35 1.5-30 1.5 23 1.5-29 1.5 39 1.5-32 1.5 29 1.5-30 1.5 23 1.5-28 1.5 35 1.5-29 1.5 27 1.5-20 1.5 17 1.5-18 1.5 26 1.5-27 1.5 27 1.5-30 1.5 28 1.5-21 1.5 23 1.5-22 1.5 18 1.5-27 1.5 31 1.5-29 1.5 30 1.5-19 1.5 13 1.5-13 1.5 11 1.5-11 1.5 14 1.5-20 1.5 22 1.5-15 1.5 16 1.5-23 1.5 25 1.5-20 1.5 20 1.5-24 1.5 25 1.5-20 1.5 17 1.5-20 1.5 18 1.5-17 1.5 17 1.5-18 1.5 19 1.5-16 1.5 20 1.5-14 1.5 10 1.5-10 1.5 10 1.5-13 1.5 14 1.5-10 1.5 14 1.5-13 1.5 8 1.5-14 1.5 16 1.5-16 1.5 15 1.5-14 1.5 11 1.5-10 1.5 17 1.5-21 1.5 16 1.5-18 1.5 16 1.5-16 1.5 23 1.5-21 1.5 17 1.5-20 1.5 17 1.5-15 1.5 15 1.5-10 1.5 12 1.5-19 1.5 18 1.5-17 1.5 18 1.5-15 1.5 16 1.5-16 1.5 20 1.5-16 1.5 14 1.5-15 1.5 14 1.5-15 1.5 17 1.5-15 1.5 14 1.5-17 1.5 16 1.5-16 1.5 18 1.5-16 1.5 11 1.5-16 1.5 16 1.5-16 1.5 21 1.5-17 1.5 18 1.5-19 1.5 13 1.5-12 1.5 18 1.5-15 1.5 15 1.5-15 1.5 10 1.5-9 1.5 12 1.5-9 1.5 7 1.5-8 1.5 11 1.5-12 1.5 11 1.5-13 1.5 11 1.5-11 1.5 15 1.5-12 1.5 11 1.5-17 1.5 17 1.5-16 1.5 14 1.5-10 1.5 11 1.5-8 1.5 9 1.5-12 1.5 10 1.5-6 1.5 7 1.5-5 1.5-1 1.5-2 1.5-1 1.5 1 1.5 1 1.5 0 1.5-1 1.5-1 1.5 3 1.5-4 1.5 5 1.5-5 1.5 1 1.5-2 1.5 1 1.5 0 1.5 3 1.5-4 1.5 6 1.5-5 1.5 0 1.5 2 1.5-3 1.5 1 1.5 1 1.5-2 1.5 2 1.5-2 1.5 6 1.5-6 1.5 1 1.5-2 1.5 5 1.5-4 1.5 2 1.5 0 1.5 2 1.5-2 1.5-1 1.5 0 1.5-2 1.5 2 1.5 1 1.5 0 1.5 1 1.5-4 1.5 0 1.5 0 1.5 5 1.5-4 1.5 2 1.5-2 1.5 0 1.5 2 1.5 4 1.5-8 1.5 1 1.5 0 1.5 1 1.5 0 1.5 0 1.5-3 1.5 5 1.5-5 1.5 1 1.5-2 1.5 7 1.5-7 1.5 6 1.5-6 1.5 0 1.5 0 1.5 8 1.5-6 1.5 1 1.5-4 1.5 4 1.5-3 1.5 1 1.5-2 1.5-1 1.5 3 1.5 1 1.5-1 1.5 1 1.5-3 1.5 1 1.5 1 1.5-1 1.5 2 1.5-2 1.5 4 1.5 4 1.5-5 1.5 3 1.5-4 1.5 4 1.5-2 1.5 2 1.5-3 1.5 3 1.5-4 1.5 4 1.5 0 1.5 4 1.5-6 1.5 3 1.5-3 1.5 2 1.5 1 1.5-2 1.5 3 1.5 1 1.5-2 1.5 3 1.5-4 1.5 1 1.5 2 1.5-1 1.5 2 1.5 1 1.5-1 1.5 0 1.5 0 1.5-1 1.5 2 1.5 0 1.5-1 1.5 6 1.5-2 1.5 3 1.5-3 1.5 2 1.5-2 1.5 3 1.5-2 1.5 2 1.5-2 1.5 2 1.5-2 1.5 2 1.5-2 1.5 2 1.5-3 1.5 2 1.5-2 1.5 2 1.5-9 1.5 10 1.5-15 1.5 14 1.5-19 1.5 13 1.5-17 1.5 21 1.5-23 1.5 20 1.5-23 1.5 19 1.5-22 1.5 26 1.5-28 1.5 21 1.5-21 1.5 24 1.5-34 1.5 28 1.5-23 1.5 37 1.5-48 1.5 38 1.5-47 1.5 59 1.5-58 1.5 57 1.5-61 1.5 41 1.5-38 1.5 56 1.5-66 1.5 62 1.5-48 1.5 55 1.5-49 1.5 46 1.5-46 1.5 34 1.5-46 1.5 49 1.5-47 1.5 55 1.5-42 1.5 31 1.5-43 1.5 48 1.5-45 1.5 33 1.5-39 1.5 36 1.5-46 1.5 49 1.5-38 1.5 37 1.5-45 1.5 50 1.5-45 1.5 59 1.5-57 1.5 48 1.5-52 1.5 50 1.5-31 1.5 46 1.5-43 1.5 35 1.5-30 1.5 33 1.5-36 1.5 37 1.5-31 1.5 24 1.5-22 1.5 25 1.5-25 1.5 33 1.5-28 1.5 23 1.5-34 1.5 34 1.5-27 1.5 25 1.5-42 1.5 39 1.5-39 1.5 33 1.5-31 1.5 43 1.5-46 1.5 46 1.5-60 1.5 44 1.5-25 1.5 25 1.5-28 1.5 47 1.5-56 1.5 45 1.5-40 1.5 45 1.5-60 1.5 50 1.5-32 1.5 39 1.5-65 1.5 58 1.5-58 1.5 73 1.5-52 1.5 36 1.5-55 1.5 66 1.5-81 1.5 78 1.5-64 1.5 55 1.5-50 1.5 61 1.5-64 1.5 70 1.5-68 1.5 70 1.5-67 1.5 51 1.5-54 1.5 62 1.5-76 1.5 75 1.5-82 1.5 61 1.5-65 1.5 64 1.5-69 1.5 84 1.5-56 1.5 64 1.5-80 1.5 69 1.5-64 1.5 81 1.5-101 1.5 85 1.5-71 1.5 77 1.5-71 1.5 83 1.5-75 1.5 66 1.5-92 1.5 73 1.5-45 1.5 71 1.5-84 1.5 77 1.5-73 1.5 59 1.5-64 1.5 85 1.5-95 1.5 86 1.5-84 1.5 89 1.5-71 1.5 57 1.5-71 1.5 81 1.5-69 1.5 67 1.5-85 1.5 91 1.5-95 1.5 93 1.5-105 1.5 107 1.5-73 1.5 79 1.5-100 1.5 83 1.5-64 1.5 71 1.5-88 1.5 98 1.5-96 1.5 87 1.5-84 1.5 91 1.5-83 1.5 78 1.5-60 1.5 50 1.5-59 1.5 54 1.5-22 1.5 34 1.5-39 1.5 48 1.5-30 1.5 28 1.5-36 1.5 32 1.5-23 1.5 30 1.5-29 1.5 25 1.5-15 1.5 19 1.5-23 1.5 18 1.5-15 1.5 20 1.5-15 1.5 9 1.5-13 1.5 14 1.5-19 1.5 22 1.5-32 1.5 30 1.5-33 1.5 36 1.5-51 1.5 50 1.5-53 1.5 52 1.5-66 1.5 62 1.5-82 1.5 61 1.5-64 1.5 72 1.5-54 1.5 71 1.5-75 1.5 53 1.5-47 1.5 72 1.5-95 1.5 85 1.5-77 1.5 84 1.5-68 1.5 48 1.5-65 1.5 76 1.5-60 1.5 65 1.5-80 1.5 79 1.5-64 1.5 72 1.5-56 1.5 43 1.5-44 1.5 44 1.5-56 1.5 62 1.5-39 1.5 42 1.5-43 1.5 37 1.5-24 1.5 25 1.5-21 1.5 26 1.5-21 1.5 14 1.5-21 1.5 27 1.5-25 1.5 28 1.5-32 1.5 31 1.5-35 1.5 33 1.5-36 1.5 30 1.5-33 1.5 35 1.5-32 1.5 26 1.5-26 1.5 24 1.5-31 1.5 38 1.5-55 1.5 58 1.5-42 1.5 42 1.5-65 1.5 65 1.5-52 1.5 45 1.5-35 1.5 41 1.5-56 1.5 48 1.5-37 1.5 33 1.5-40 1.5 45 1.5-41 1.5 38 1.5-50 1.5 46 1.5-54 1.5 69 1.5-62 1.5 43 1.5-61 1.5 76 1.5-76 1.5 67 1.5-58 1.5 59 1.5-70 1.5 78 1.5-76 1.5 74 1.5-68 1.5 70 1.5-76 1.5 84 1.5-70 1.5 47 1.5-64 1.5 70 1.5-65 1.5 63 1.5-61 1.5 59 1.5-50 1.5 70 1.5-79 1.5 57 1.5-65 1.5 88 1.5-96 1.5 92 1.5-75 1.5 55 1.5-52 1.5 70 1.5-75 1.5 60 1.5-99 1.5 101 1.5-78 1.5 88 1.5-83 1.5 65 1.5-57 1.5 52 1.5-66 1.5 94 1.5-73 1.5 62 1.5-90 1.5 102 1.5-94 1.5 79 1.5-68 1.5 82 1.5-76 1.5 80 1.5-98 1.5 71 1.5-58 1.5 76 1.5-78 1.5 65 1.5-37 1.5 46 1.5-66 1.5 71 1.5-52 1.5 44 1.5-52 1.5 51 1.5-32 1.5 50 1.5-48 1.5 43 1.5-30 1.5 29 1.5-28 1.5 23 1.5-17 1.5 25 1.5-24 1.5 27 1.5-23 1.5 23 1.5-24 1.5 18 1.5-20 1.5 28 1.5-26 1.5 23 1.5-23 1.5 18 1.5-31 1.5 39 1.5-43 1.5 31 1.5-30 1.5 30 1.5-37 1.5 45 1.5-39 1.5 27 1.5-28 1.5 39 1.5-31 1.5 31 1.5-30 1.5 35 1.5-32 1.5 22 1.5-23 1.5 27 1.5-37 1.5 38 1.5-36 1.5 37 1.5-41 1.5 35 1.5-35 1.5 37 1.5-36 1.5 38 1.5-42 1.5 32 1.5-37 1.5 40 1.5-33 1.5 33 1.5-21 1.5 23 1.5-24 1.5 33 1.5-31 1.5 31 1.5-26 1.5 21 1.5-7 1.5 11 1.5-9 1.5 8 1.5-10 1.5 14 1.5-10 1.5 8 1.5-6 1.5 8 1.5-5 1.5 5 1.5-2 1.5 1 1.5-10 1.5 6 1.5-15 1.5 12 1.5-16 1.5 17 1.5-35 1.5 32 1.5-48 1.5 37 1.5-54 1.5 64 1.5-60 1.5 52 1.5-52 1.5 59 1.5-75 1.5 73 1.5-64 1.5 67 1.5-80 1.5 61 1.5-48 1.5 56 1.5-66 1.5 72 1.5-59 1.5 45 1.5-49 1.5 49 1.5-38 1.5 47 1.5-35 1.5 35 1.5-51 1.5 47 1.5-37 1.5 58 1.5-72 1.5 58 1.5-38 1.5 43 1.5-34 1.5 43 1.5-54 1.5 51 1.5-41 1.5 34 1.5-25 1.5 27 1.5-13 1.5 18 1.5-14 1.5 15 1.5-5 1.5 6 1.5-5 1.5 8 1.5-5 1.5 4 1.5-5 1.5 7 1.5-3 1.5 3 1.5-5 1.5 4 1.5-8 1.5 9 1.5-18 1.5 14 1.5-29 1.5 23 1.5-39 1.5 40 1.5-55 1.5 48 1.5-57 1.5 56 1.5-61 1.5 74 1.5-61 1.5 51 1.5-66 1.5 63 1.5-56 1.5 61 1.5-62 1.5 47 1.5-56 1.5 60 1.5-71 1.5 67 1.5-58 1.5 62 1.5-72 1.5 83 1.5-87 1.5 73 1.5-57 1.5 57 1.5-62 1.5 67 1.5-47 1.5 61 1.5-71 1.5 72 1.5-70 1.5 56 1.5-45 1.5 58 1.5-39 1.5 28 1.5-28 1.5 32 1.5-30 1.5 42 1.5-57 1.5 42 1.5-34 1.5 36 1.5-31 1.5 37 1.5-34 1.5 33 1.5-23 1.5 28 1.5-33 1.5 30 1.5-32 1.5 30 1.5-24 1.5 23 1.5-20 1.5 28 1.5-24 1.5 21 1.5-31 1.5 30 1.5-45 1.5 37 1.5-41 1.5 51 1.5-70 1.5 56 1.5-61 1.5 70 1.5-69 1.5 58 1.5-47 1.5 58 1.5-64 1.5 68 1.5-75 1.5 53 1.5-35 1.5 42 1.5-39 1.5 47 1.5-58 1.5 63 1.5-65 1.5 49 1.5-32 1.5 40 1.5-40 1.5 32 1.5-44 1.5 49 1.5-49 1.5 61 1.5-51 1.5 46 1.5-51 1.5 49 1.5-37 1.5 46 1.5-39 1.5 40 1.5-64 1.5 60 1.5-46 1.5 32 1.5-46 1.5 46 1.5-46 1.5 60 1.5-55 1.5 57 1.5-69 1.5 55 1.5-54 1.5 57 1.5-47 1.5 49 1.5-51 1.5 50 1.5-51 1.5 64 1.5-77 1.5 73 1.5-52 1.5 31 1.5-41 1.5 64 1.5-73 1.5 70 1.5-66 1.5 64 1.5-58 1.5 59 1.5-72 1.5 66 1.5-57 1.5 54 1.5-59 1.5 64 1.5-60 1.5 60 1.5-60 1.5 55 1.5-43 1.5 53 1.5-62 1.5 48 1.5-47 1.5 56 1.5-50 1.5 44 1.5-49 1.5 47 1.5-31 1.5 45 1.5-50 1.5 40 1.5-41 1.5 40 1.5-31 1.5 33 1.5-22 1.5 32 1.5-40 1.5 44 1.5-32 1.5 27 1.5-29 1.5 31 1.5-28 1.5 29 1.5-37 1.5 38 1.5-39 1.5 30 1.5-21 1.5 27 1.5-26 1.5 22 1.5-25 1.5 26 1.5-30 1.5 32 1.5-19 1.5 21 1.5-25 1.5 20 1.5-19 1.5 26 1.5-20 1.5 14 1.5-17 1.5 20 1.5-16 1.5 12 1.5-17 1.5 25 1.5-22 1.5 14 1.5-17 1.5 20 1.5-15 1.5 16 1.5-20 1.5 15 1.5-22 1.5 25 1.5-22 1.5 20 1.5-26 1.5 31 1.5-21 1.5 24 1.5-35 1.5 33 1.5-29 1.5 32 1.5-28 1.5 28 1.5-29 1.5 23 1.5-15 1.5 14 1.5-14 1.5 22 1.5-20 1.5 20 1.5-17 1.5 11 1.5-10 1.5 12 1.5-10 1.5 14 1.5-12 1.5 9 1.5-7 1.5 7 1.5-4 1.5 7 1.5-6 1.5 5 1.5-2 1.5 4 1.5-4 1.5 3 1.5-6 1.5 2 1.5-4 1.5 4 1.5-3 1.5-1 1.5 0 1.5-2 1.5 1 1.5 2 1.5-5 1.5 6 1.5-7 1.5 4 1.5-4 1.5 1 1.5 0 1.5 2 1.5-3 1.5 2 1.5-3 1.5 7 1.5-6 1.5 5 1.5-7 1.5 8 1.5-5 1.5-2 1.5-1 1.5 1 1.5 2 1.5 3 1.5-6 1.5 4 1.5 0 1.5-1 1.5-1 1.5 1 1.5-1 1.5 2 1.5-4 1.5 3 1.5-2 1.5 3 1.5-3 1.5 4 1.5-7 1.5 2 1.5-2 1.5 0 1.5 0 1.5 6 1.5-3 1.5 3 1.5-5 1.5 5 1.5-6 1.5 8 1.5-5 1.5-3 1.5 3 1.5-2 1.5 4 1.5 2 1.5-4 1.5 1 1.5-1 1.5-1 1.5 1 1.5 2 1.5-4 1.5 1 1.5 2 1.5 3 1.5-4 1.5 1 1.5-2 1.5 5 1.5-4 1.5 7 1.5-4 1.5 1 1.5-3 1.5 6 1.5-3 1.5-1 1.5-1 1.5 3 1.5-2 1.5 6 1.5-5 1.5 5 1.5-4 1.5 5 1.5-4 1.5 3 1.5-2 1.5 3 1.5-2 1.5 1 1.5 2 1.5 3 1.5-3 1.5 3 1.5-3 1.5 4 1.5-5 1.5 4 1.5-4 1.5 4 1.5-5 1.5 5 1.5-4 1.5 5 1.5-7 1.5 4 1.5-5 1.5 7 1.5-11 1.5 12 1.5-15 1.5 11 1.5-36 1.5 32 1.5-26 1.5 19 1.5-34 1.5 49 1.5-37 1.5 28 1.5-31 1.5 29 1.5-44 1.5 42 1.5-42 1.5 49 1.5-55 1.5 55 1.5-81 1.5 75 1.5-54 1.5 44 1.5-52 1.5 59 1.5-58 1.5 51 1.5-71 1.5 78 1.5-81 1.5 76 1.5-71 1.5 54 1.5-82 1.5 86 1.5-64 1.5 85 1.5-101 1.5 84 1.5-84 1.5 92 1.5-67 1.5 73 1.5-71 1.5 85 1.5-72 1.5 50 1.5-62 1.5 61 1.5-45 1.5 60 1.5-61 1.5 57 1.5-61 1.5 53 1.5-47 1.5 54 1.5-33 1.5 28 1.5-26 1.5 31 1.5-40 1.5 35 1.5-38 1.5 46 1.5-43 1.5 47 1.5-56 1.5 48 1.5-50 1.5 57 1.5-41 1.5 31 1.5-29 1.5 34 1.5-39 1.5 46 1.5-37 1.5 33 1.5-30 1.5 24 1.5-46 1.5 49 1.5-47 1.5 53 1.5-71 1.5 73 1.5-59 1.5 51 1.5-71 1.5 56 1.5-69 1.5 70 1.5-50 1.5 65 1.5-54 1.5 47 1.5-52 1.5 45 1.5-42 1.5 45 1.5-77 1.5 97 1.5-68 1.5 53 1.5-57 1.5 58 1.5-59 1.5 62 1.5-59 1.5 47 1.5-53 1.5 66 1.5-49 1.5 49 1.5-50 1.5 47 1.5-53 1.5 52 1.5-28 1.5 28 1.5-45 1.5 55 1.5-51 1.5 57 1.5-42 1.5 39 1.5-48 1.5 38 1.5-31 1.5 32 1.5-36 1.5 38 1.5-40 1.5 37 1.5-24 1.5 31 1.5-43 1.5 33 1.5-41 1.5 46 1.5-34 1.5 27 1.5-55 1.5 62 1.5-52 1.5 43 1.5-73 1.5 62 1.5-54 1.5 60 1.5-57 1.5 73 1.5-91 1.5 78 1.5-50 1.5 53 1.5-81 1.5 74 1.5-62 1.5 60 1.5-55 1.5 66 1.5-67 1.5 81 1.5-79 1.5 62 1.5-42 1.5 50 1.5-60 1.5 70 1.5-69 1.5 60 1.5-54 1.5 56 1.5-70 1.5 61 1.5-60 1.5 50 1.5-55 1.5 53 1.5-59 1.5 76 1.5-64 1.5 60 1.5-71 1.5 77 1.5-63 1.5 57 1.5-56 1.5 67 1.5-79 1.5 76 1.5-75 1.5 78 1.5-90 1.5 85 1.5-78 1.5 72 1.5-83 1.5 86 1.5-57 1.5 53 1.5-76 1.5 71 1.5-83 1.5 69 1.5-44 1.5 50 1.5-78 1.5 95 1.5-72 1.5 55 1.5-62 1.5 84 1.5-90 1.5 65 1.5-41 1.5 53 1.5-66 1.5 82 1.5-67 1.5 43 1.5-56 1.5 54 1.5-35 1.5 56 1.5-63 1.5 67 1.5-62 1.5 51 1.5-51 1.5 45 1.5-55 1.5 68 1.5-56 1.5 50 1.5-53 1.5 46 1.5-46 1.5 55 1.5-62 1.5 60 1.5-44 1.5 45 1.5-64 1.5 72 1.5-86 1.5 89 1.5-82 1.5 79 1.5-57 1.5 49 1.5-52 1.5 42 1.5-59 1.5 58 1.5-45 1.5 65 1.5-65 1.5 63 1.5-70 1.5 72 1.5-60 1.5 39 1.5-34 1.5 42 1.5-44 1.5 50 1.5-55 1.5 60 1.5-65 1.5 47 1.5-51 1.5 59 1.5-56 1.5 66 1.5-61 1.5 66 1.5-54 1.5 50 1.5-63 1.5 67 1.5-48 1.5 39 1.5-55 1.5 51 1.5-38 1.5 34 1.5-28 1.5 40 1.5-42 1.5 42 1.5-49 1.5 49 1.5-47 1.5 44 1.5-42 1.5 41 1.5-39 1.5 44 1.5-28 1.5 23 1.5-20 1.5 19 1.5-27 1.5 30 1.5-25 1.5 23 1.5-15 1.5 19 1.5-21 1.5 25 1.5-22 1.5 16 1.5-13 1.5 16 1.5-15 1.5 17 1.5-20 1.5 23 1.5-21 1.5 23 1.5-20 1.5 20 1.5-18 1.5 14 1.5-8 1.5 11 1.5-14 1.5 16 1.5-14 1.5 14 1.5-14 1.5 14 1.5-11 1.5 10 1.5-14 1.5 14 1.5-11 1.5 9 1.5-9 1.5 11 1.5-8 1.5 7 1.5-10 1.5 12 1.5-8 1.5 7 1.5-8 1.5 8 1.5-6 1.5 5 1.5-5 1.5 7 1.5-6 1.5 5 1.5-4 1.5 5 1.5-6 1.5 5 1.5-3 1.5 4 1.5-4 1.5 4 1.5-3 1.5 3 1.5-3 1.5 3 1.5-3 1.5 3 1.5-3 1.5 4 1.5-3 1.5 3 1.5-2 1.5 2 1.5-1 1.5 1 1.5-1 1.5 1 1.5-1 1.5 1 1.5 0 1.5 0 1.5 0 1.5 0 1.5 0 0 1-1.5 0-1.5 0-1.5 0-1.5 0-1.5 0-1.5 1-1.5-1-1.5 1-1.5-1-1.5 2-1.5-2-1.5 2-1.5-2-1.5 2-1.5-2-1.5 3-1.5-3-1.5 3-1.5-3-1.5 4-1.5-4-1.5 4-1.5-3-1.5 4-1.5-5-1.5 6-1.5-6-1.5 5-1.5-5-1.5 5-1.5-5-1.5 7-1.5-7-1.5 8-1.5-7-1.5 6-1.5-5-1.5 6-1.5-7-1.5 9-1.5-7-1.5 6-1.5-8-1.5 8-1.5-7-1.5 8-1.5-6-1.5 8-1.5-11-1.5 12-1.5-10-1.5 11-1.5-12-1.5 10-1.5-7-1.5 11-1.5-13-1.5 12-1.5-11-1.5 11-1.5-12-1.5 14-1.5-11-1.5 15-1.5-19-1.5 17-1.5-12-1.5 9-1.5-13-1.5 16-1.5-18-1.5 23-1.5-23-1.5 16-1.5-11-1.5 12-1.5-10-1.5 18-1.5-24-1.5 23-1.5-16-1.5 16-1.5-16-1.5 18-1.5-18-1.5 17-1.5-17-1.5 19-1.5-26-1.5 32-1.5-31-1.5 35-1.5-35-1.5 35-1.5-30-1.5 30-1.5-26-1.5 22-1.5-22-1.5 30-1.5-32-1.5 29-1.5-28-1.5 40-1.5-43-1.5 38-1.5-26-1.5 35-1.5-39-1.5 37-1.5-36-1.5 31-1.5-40-1.5 37-1.5-41-1.5 40-1.5-34-1.5 48-1.5-55-1.5 53-1.5-42-1.5 27-1.5-38-1.5 48-1.5-45-1.5 41-1.5-33-1.5 39-1.5-34-1.5 33-1.5-36-1.5 34-1.5-48-1.5 48-1.5-35-1.5 43-1.5-53-1.5 49-1.5-45-1.5 44-1.5-41-1.5 44-1.5-50-1.5 45-1.5-39-1.5 53-1.5-58-1.5 61-1.5-47-1.5 34-1.5-51-1.5 49-1.5-32-1.5 44-1.5-56-1.5 48-1.5-41-1.5 46-1.5-47-1.5 57-1.5-62-1.5 55-1.5-57-1.5 55-1.5-51-1.5 46-1.5-41-1.5 41-1.5-46-1.5 54-1.5-38-1.5 40-1.5-60-1.5 58-1.5-55-1.5 49-1.5-52-1.5 50-1.5-47-1.5 50-1.5-38-1.5 41-1.5-37-1.5 37-1.5-39-1.5 36-1.5-40-1.5 50-1.5-58-1.5 49-1.5-49-1.5 58-1.5-62-1.5 57-1.5-54-1.5 60-1.5-61-1.5 59-1.5-59-1.5 42-1.5-47-1.5 48-1.5-28-1.5 43-1.5-51-1.5 48-1.5-44-1.5 34-1.5-31-1.5 45-1.5-48-1.5 35-1.5-34-1.5 36-1.5-48-1.5 48-1.5-47-1.5 31-1.5-37-1.5 37-1.5-28-1.5 34-1.5-42-1.5 43-1.5-26-1.5 33-1.5-50-1.5 55-1.5-44-1.5 33-1.5-37-1.5 41-1.5-49-1.5 48-1.5-49-1.5 64-1.5-66-1.5 52-1.5-43-1.5 40-1.5-46-1.5 51-1.5-46-1.5 44-1.5-52-1.5 41-1.5-35-1.5 41-1.5-37-1.5 29-1.5-38-1.5 38-1.5-37-1.5 32-1.5-34-1.5 43-1.5-43-1.5 33-1.5-29-1.5 33-1.5-32-1.5 33-1.5-38-1.5 46-1.5-42-1.5 32-1.5-32-1.5 29-1.5-29-1.5 39-1.5-44-1.5 39-1.5-27-1.5 44-1.5-50-1.5 40-1.5-38-1.5 51-1.5-48-1.5 36-1.5-42-1.5 55-1.5-45-1.5 40-1.5-54-1.5 56-1.5-54-1.5 67-1.5-65-1.5 64-1.5-66-1.5 64-1.5-50-1.5 52-1.5-64-1.5 77-1.5-55-1.5 38-1.5-59-1.5 63-1.5-49-1.5 52-1.5-51-1.5 28-1.5-47-1.5 49-1.5-46-1.5 27-1.5-25-1.5 22-1.5-26-1.5 24-1.5-28-1.5 35-1.5-26-1.5 25-1.5-27-1.5 20-1.5-19-1.5 33-1.5-34-1.5 28-1.5-31-1.5 32-1.5-37-1.5 46-1.5-40-1.5 44-1.5-47-1.5 40-1.5-40-1.5 49-1.5-45-1.5 52-1.5-51-1.5 46-1.5-45-1.5 56-1.5-63-1.5 62-1.5-46-1.5 61-1.5-79-1.5 59-1.5-49-1.5 63-1.5-67-1.5 69-1.5-52-1.5 51-1.5-46-1.5 64-1.5-87-1.5 68-1.5-54-1.5 44-1.5-51-1.5 57-1.5-58-1.5 61-1.5-64-1.5 36-1.5-36-1.5 52-1.5-42-1.5 32-1.5-41-1.5 58-1.5-48-1.5 20-1.5-29-1.5 27-1.5-36-1.5 26-1.5-24-1.5 22-1.5-23-1.5 20-1.5-14-1.5 15-1.5-20-1.5 21-1.5-20-1.5 22-1.5-20-1.5 4-1.5-8-1.5 5-1.5-6-1.5 5-1.5-6-1.5 5-1.5-5-1.5 2-1.5-2-1.5 3-1.5-2-1.5 1-1.5-2-1.5 2-1.5-2-1.5 3-1.5-3-1.5 3-1.5-3-1.5 3-1.5 3-1.5 0-1.5-1-1.5 2-1.5-2-1.5 3-1.5-4-1.5 2-1.5 0-1.5 3-1.5-4-1.5 4-1.5-1-1.5 3-1.5-3-1.5 3-1.5-3-1.5 4-1.5-2-1.5 2-1.5-1-1.5 2-1.5-5-1.5 5-1.5-4-1.5 2-1.5 2-1.5-1-1.5-1-1.5-1-1.5 0-1.5 3-1.5 2-1.5-3-1.5-3-1.5 4-1.5-1-1.5 0-1.5 0-1.5 4-1.5-2-1.5-3-1.5-1-1.5 2-1.5-4-1.5 7-1.5-2-1.5 1-1.5-3-1.5 4-1.5-5-1.5 5-1.5-2-1.5 0-1.5-3-1.5 3-1.5-3-1.5 3-1.5-1-1.5 3-1.5-2-1.5 0-1.5-3-1.5 2-1.5 1-1.5 2-1.5-6-1.5 3-1.5 2-1.5 0-1.5-5-1.5 3-1.5-4-1.5 5-1.5-2-1.5 1-1.5-2-1.5 1-1.5 0-1.5 1-1.5 0-1.5-1-1.5-3-1.5 5-1.5-4-1.5 2-1.5-2-1.5 3-1.5-6-1.5 6-1.5-1-1.5-2-1.5 0-1.5-1-1.5-1-1.5 0-1.5 0-1.5 0-1.5-2-1.5-1-1.5-4-1.5 2-1.5-2-1.5 2-1.5-1-1.5 2-1.5-2-1.5 4-1.5-5-1.5 7-1.5-6-1.5 7-1.5-7-1.5 11-1.5-10-1.5 9-1.5-10-1.5 12-1.5-9-1.5 19-1.5-18-1.5 18-1.5-17-1.5 16-1.5-15-1.5 23-1.5-23-1.5 18-1.5-23-1.5 24-1.5-14-1.5 23-1.5-31-1.5 31-1.5-32-1.5 23-1.5-16-1.5 27-1.5-25-1.5 17-1.5-23-1.5 23-1.5-27-1.5 41-1.5-32-1.5 31-1.5-38-1.5 29-1.5-21-1.5 29-1.5-39-1.5 34-1.5-26-1.5 32-1.5-33-1.5 35-1.5-29-1.5 38-1.5-45-1.5 35-1.5-40-1.5 33-1.5-21-1.5 39-1.5-41-1.5 29-1.5-24-1.5 28-1.5-39-1.5 38-1.5-41-1.5 33-1.5-32-1.5 40-1.5-39-1.5 40-1.5-42-1.5 38-1.5-35-1.5 26-1.5-19-1.5 16-1.5-18-1.5 16-1.5-19-1.5 33-1.5-39-1.5 32-1.5-26-1.5 33-1.5-23-1.5 37-1.5-38-1.5 31-1.5-38-1.5 45-1.5-52-1.5 47-1.5-43-1.5 45-1.5-45-1.5 57-1.5-41-1.5 41-1.5-44-1.5 35-1.5-45-1.5 45-1.5-41-1.5 41-1.5-50-1.5 54-1.5-40-1.5 34-1.5-43-1.5 40-1.5-47-1.5 40-1.5-28-1.5 22-1.5-26-1.5 40-1.5-34-1.5 35-1.5-38-1.5 37-1.5-37-1.5 31-1.5-36-1.5 29-1.5-35-1.5 50-1.5-48-1.5 47-1.5-39-1.5 25-1.5-24-1.5 31-1.5-28-1.5 24-1.5-25-1.5 27-1.5-40-1.5 34-1.5-24-1.5 30-1.5-43-1.5 31-1.5-19-1.5 31-1.5-31-1.5 28-1.5-35-1.5 28-1.5-25-1.5 34-1.5-35-1.5 35-1.5-32-1.5 34-1.5-24-1.5 29-1.5-32-1.5 30-1.5-37-1.5 49-1.5-49-1.5 40-1.5-27-1.5 49-1.5-65-1.5 70-1.5-69-1.5 55-1.5-40-1.5 41-1.5-47-1.5 49-1.5-64-1.5 52-1.5-50-1.5 46-1.5-38-1.5 35-1.5-39-1.5 28-1.5-32-1.5 32-1.5-33-1.5 26-1.5-20-1.5 17-1.5-25-1.5 32-1.5-32-1.5 24-1.5-20-1.5 27-1.5-23-1.5 30-1.5-31-1.5 28-1.5-33-1.5 36-1.5-36-1.5 40-1.5-30-1.5 30-1.5-26-1.5 22-1.5-22-1.5 28-1.5-30-1.5 50-1.5-56-1.5 43-1.5-41-1.5 64-1.5-67-1.5 60-1.5-43-1.5 51-1.5-61-1.5 52-1.5-46-1.5 66-1.5-68-1.5 52-1.5-50-1.5 51-1.5-46-1.5 49-1.5-57-1.5 45-1.5-44-1.5 37-1.5-54-1.5 54-1.5-46-1.5 51-1.5-54-1.5 42-1.5-37-1.5 26-1.5-25-1.5 21-1.5-21-1.5 27-1.5-39-1.5 23-1.5-24-1.5 26-1.5-20-1.5 11-1.5-17-1.5 7-1.5-7-1.5 3-1.5-4-1.5 5-1.5-4-1.5 5-1.5-6-1.5 10-1.5-9-1.5 8-1.5-7-1.5 9-1.5-9-1.5 13-1.5-9-1.5 19-1.5-24-1.5 30-1.5-21-1.5 25-1.5-22-1.5 28-1.5-32-1.5 47-1.5-46-1.5 46-1.5-49-1.5 42-1.5-35-1.5 42-1.5-36-1.5 27-1.5-35-1.5 41-1.5-40-1.5 38-1.5-34-1.5 39-1.5-45-1.5 46-1.5-40-1.5 31-1.5-29-1.5 49-1.5-48-1.5 35-1.5-40-1.5 39-1.5-44-1.5 35-1.5-37-1.5 40-1.5-40-1.5 35-1.5-37-1.5 29-1.5-25-1.5 28-1.5-28-1.5 11-1.5-15-1.5 7-1.5-13-1.5 11-1.5-8-1.5 4-1.5-6-1.5 1-1.5-2-1.5 3-1.5-2-1.5 4-1.5-4-1.5 5-1.5-5-1.5 6-1.5-6-1.5 12-1.5-9-1.5 12-1.5-12-1.5 15-1.5-17-1.5 20-1.5-18-1.5 27-1.5-31-1.5 28-1.5-28-1.5 33-1.5-26-1.5 31-1.5-23-1.5 31-1.5-42-1.5 41-1.5-45-1.5 53-1.5-44-1.5 37-1.5-40-1.5 34-1.5-40-1.5 33-1.5-31-1.5 29-1.5-30-1.5 35-1.5-31-1.5 41-1.5-33-1.5 27-1.5-35-1.5 45-1.5-49-1.5 49-1.5-43-1.5 36-1.5-36-1.5 23-1.5-22-1.5 25-1.5-30-1.5 27-1.5-28-1.5 24-1.5-22-1.5 15-1.5-19-1.5 20-1.5-14-1.5 17-1.5-20-1.5 18-1.5-16-1.5 17-1.5-20-1.5 24-1.5-26-1.5 31-1.5-24-1.5 18-1.5-25-1.5 34-1.5-27-1.5 18-1.5-25-1.5 31-1.5-29-1.5 31-1.5-26-1.5 25-1.5-26-1.5 34-1.5-31-1.5 29-1.5-35-1.5 55-1.5-55-1.5 43-1.5-28-1.5 40-1.5-58-1.5 67-1.5-50-1.5 52-1.5-68-1.5 76-1.5-64-1.5 45-1.5-48-1.5 64-1.5-48-1.5 42-1.5-56-1.5 61-1.5-43-1.5 52-1.5-82-1.5 86-1.5-80-1.5 62-1.5-45-1.5 57-1.5-49-1.5 59-1.5-83-1.5 82-1.5-89-1.5 90-1.5-62-1.5 47-1.5-58-1.5 46-1.5-62-1.5 73-1.5-48-1.5 50-1.5-74-1.5 51-1.5-48-1.5 56-1.5-52-1.5 46-1.5-51-1.5 60-1.5-51-1.5 54-1.5-51-1.5 45-1.5-50-1.5 55-1.5-54-1.5 59-1.5-65-1.5 56-1.5-49-1.5 35-1.5-31-1.5 46-1.5-61-1.5 44-1.5-38-1.5 53-1.5-46-1.5 39-1.5-45-1.5 53-1.5-46-1.5 33-1.5-49-1.5 47-1.5-43-1.5 34-1.5-33-1.5 40-1.5-40-1.5 45-1.5-34-1.5 20-1.5-35-1.5 37-1.5-25-1.5 22-1.5-30-1.5 36-1.5-40-1.5 28-1.5-19-1.5 23-1.5-26-1.5 26-1.5-31-1.5 32-1.5-25-1.5 24-1.5-32-1.5 32-1.5-30-1.5 23-1.5-18-1.5 25-1.5-22-1.5 24-1.5-26-1.5 29-1.5-34-1.5 44-1.5-46-1.5 48-1.5-36-1.5 42-1.5-55-1.5 60-1.5-43-1.5 54-1.5-63-1.5 45-1.5-53-1.5 74-1.5-62-1.5 38-1.5-38-1.5 52-1.5-65-1.5 53-1.5-38-1.5 26-1.5-37-1.5 33-1.5-34-1.5 33-1.5-26-1.5 32-1.5-42-1.5 32-1.5-22-1.5 23-1.5-29-1.5 24-1.5-25-1.5 24-1.5-21-1.5 29-1.5-32-1.5 29-1.5-28-1.5 18-1.5-20-1.5 17-1.5-18-1.5 18-1.5-16-1.5 10-1.5-12-1.5 11-1.5-10-1.5 13-1.5-13-1.5 16-1.5-12-1.5 13-1.5-17-1.5 23-1.5-20-1.5 26-1.5-26-1.5 26-1.5-31-1.5 33-1.5-28-1.5 45-1.5-50-1.5 44-1.5-38-1.5 53-1.5-42-1.5 47-1.5-45-1.5 47-1.5-50-1.5 56-1.5-51-1.5 44-1.5-60-1.5 65-1.5-58-1.5 66-1.5-64-1.5 83-1.5-94-1.5 92-1.5-83-1.5 54-1.5-54-1.5 76-1.5-71-1.5 60-1.5-56-1.5 44-1.5-46-1.5 72-1.5-59-1.5 60-1.5-56-1.5 65-1.5-90-1.5 101-1.5-104-1.5 117-1.5-109-1.5 98-1.5-95-1.5 65-1.5-49-1.5 52-1.5-87-1.5 79-1.5-78-1.5 86-1.5-66-1.5 71-1.5-79-1.5 68-1.5-61-1.5 38-1.5-44-1.5 62-1.5-59-1.5 72-1.5-62-1.5 55-1.5-78-1.5 72-1.5-45-1.5 55-1.5-85-1.5 76-1.5-74-1.5 85-1.5-78-1.5 86-1.5-93-1.5 76-1.5-61-1.5 75-1.5-78-1.5 90-1.5-82-1.5 50-1.5-71-1.5 76-1.5-58-1.5 58-1.5-66-1.5 59-1.5-65-1.5 39-1.5-43-1.5 42-1.5-29-1.5 32-1.5-38-1.5 29-1.5-28-1.5 15-1.5-15-1.5 19-1.5-21-1.5 18-1.5-26-1.5 18-1.5-17-1.5 23-1.5-19-1.5 17-1.5-20-1.5 15-1.5-14-1.5 16-1.5-14-1.5 15-1.5-17-1.5 18-1.5-19-1.5 19-1.5-18-1.5 15-1.5-18-1.5 24-1.5-22-1.5 24-1.5-18-1.5 24-1.5-23-1.5 23-1.5-29-1.5 33-1.5-32-1.5 31-1.5-33-1.5 43-1.5-38-1.5 39-1.5-29-1.5 35-1.5-52-1.5 78-1.5-69-1.5 56-1.5-49-1.5 49-1.5-41-1.5 44-1.5-67-1.5 50-1.5-40-1.5 49-1.5-42-1.5 37-1.5-43-1.5 38-1.5-37-1.5 30-1.5-33-1.5 32-1.5-28-1.5 20-1.5-26-1.5 43-1.5-43-1.5 49-1.5-51-1.5 56-1.5-54-1.5 44-1.5-46-1.5 45-1.5-42-1.5 36-1.5-33-1.5 33-1.5-42-1.5 37-1.5-38-1.5 40-1.5-35-1.5 30-1.5-35-1.5 38-1.5-33-1.5 32-1.5-31-1.5 18-1.5-20-1.5 26-1.5-24-1.5 25-1.5-27-1.5 27-1.5-27-1.5 20-1.5-25-1.5 19-1.5-20-1.5 10-1.5-10-1.5 5-1.5-5-1.5 5-1.5-5-1.5 3-1.5-2-1.5 2-1.5-3-1.5 3-1.5-3-1.5 2-1.5-2-1.5 3-1.5-3-1.5 3-1.5-2-1.5 2-1.5-3-1.5 6-1.5-1-1.5 0-1.5 1-1.5 1-1.5 0-1.5 1-1.5-3-1.5 2-1.5-3-1.5 4-1.5-3-1.5 4-1.5-2-1.5 3-1.5-5-1.5 3-1.5-3-1.5 4-1.5-1-1.5 4-1.5-6-1.5 5-1.5-2-1.5 3-1.5-1-1.5 1-1.5-5-1.5 7-1.5-5-1.5 4-1.5-3-1.5 2-1.5-2-1.5 4-1.5-6-1.5 6-1.5 0-1.5 0-1.5 1-1.5 0-1.5-4-1.5 2-1.5-2-1.5 4-1.5-5-1.5 7-1.5-1-1.5 0-1.5-3-1.5 2-1.5-3-1.5 4-1.5 0-1.5-2-1.5-2-1.5 2-1.5-2-1.5 2-1.5 1-1.5 0-1.5-6-1.5 3-1.5 1-1.5 0-1.5-3-1.5 2-1.5 0-1.5 1-1.5-3-1.5 2-1.5-2-1.5 4-1.5-4-1.5 1-1.5-4-1.5 4-1.5 1-1.5 1-1.5 0-1.5 0-1.5-5-1.5 3-1.5-2-1.5 4-1.5-3-1.5 2-1.5-3-1.5 3-1.5-3-1.5 2-1.5-2-1.5 0-1.5 3-1.5-1-1.5-4-1.5 5-1.5-5-1.5 4-1.5-4-1.5 4-1.5-4-1.5 4-1.5-2-1.5 2-1.5-2-1.5 2-1.5-5-1.5 5-1.5-1-1.5 0-1.5-4-1.5 4-1.5 0-1.5-1-1.5 0-1.5 1-1.5-3-1.5 3-1.5 0-1.5-1-1.5-1-1.5 2-1.5-2-1.5 1-1.5 0-1.5 1-1.5-2-1.5-1-1.5-4-1.5 8-1.5-8-1.5 7-1.5-6-1.5 8-1.5-10-1.5 9-1.5-6-1.5 10-1.5-14-1.5 11-1.5-9-1.5 11-1.5-12-1.5 11-1.5-12-1.5 12-1.5-9-1.5 8-1.5-12-1.5 10-1.5-7-1.5 6-1.5-9-1.5 16-1.5-16-1.5 17-1.5-17-1.5 19-1.5-16-1.5 16-1.5-15-1.5 18-1.5-21-1.5 18-1.5-19-1.5 23-1.5-17-1.5 18-1.5-20-1.5 14-1.5-16-1.5 18-1.5-16-1.5 20-1.5-15-1.5 17-1.5-20-1.5 16-1.5-19-1.5 20-1.5-19-1.5 19-1.5-17-1.5 11-1.5-13-1.5 14-1.5-18-1.5 24-1.5-19-1.5 16-1.5-14-1.5 14-1.5-14-1.5 25-1.5-24-1.5 23-1.5-27-1.5 27-1.5-29-1.5 31-1.5-28-1.5 20-1.5-17-1.5 17-1.5-16-1.5 16-1.5-22-1.5 20-1.5-22-1.5 20-1.5-19-1.5 22-1.5-24-1.5 23-1.5-16-1.5 15-1.5-22-1.5 21-1.5-14-1.5 14-1.5-15-1.5 12-1.5-12-1.5 15-1.5-16-1.5 16-1.5-14-1.5 16-1.5-17-1.5 13-1.5-15-1.5 14-1.5-11-1.5 15-1.5-14-1.5 17-1.5-16-1.5 17-1.5-22-1.5 22-1.5-23-1.5 21-1.5-16-1.5 23-1.5-27-1.5 21-1.5-22-1.5 21-1.5-17-1.5 21-1.5-20-1.5 16-1.5-15-1.5 20-1.5-22-1.5 17-1.5-20-1.5 23-1.5-24-1.5 21-1.5-22-1.5 21-1.5-14-1.5 21-1.5-27-1.5 26-1.5-21-1.5 23-1.5-23-1.5 26-1.5-27-1.5 23-1.5-17-1.5 30-1.5-34-1.5 28-1.5-34-1.5 37-1.5-38-1.5 25-1.5-15-1.5 17-1.5-26-1.5 35-1.5-26-1.5 15-1.5-22-1.5 23-1.5-15-1.5 18-1.5-27-1.5 31-1.5-32-1.5 32-1.5-30-1.5 44-1.5-31-1.5 30-1.5-28-1.5 38-1.5-41-1.5 32-1.5-31-1.5 47-1.5-43-1.5 29-1.5-28-1.5 47-1.5-65-1.5 70-1.5-72-1.5 55-1.5-42-1.5 45-1.5-51-1.5 57-1.5-51-1.5 48-1.5-42-1.5 29-1.5-44-1.5 62-1.5-63-1.5 61-1.5-49-1.5 40-1.5-38-1.5 39-1.5-39-1.5 43-1.5-56-1.5 54-1.5-41-1.5 33-1.5-50-1.5 36-1.5-21-1.5 23-1.5-36-1.5 30-1.5-20-1.5 21-1.5-30-1.5 32-1.5-35-1.5 39-1.5-30-1.5 29-1.5-38-1.5 36-1.5-22-1.5 32-1.5-33-1.5 20-1.5-25-1.5 32-1.5-36-1.5 39-1.5-34-1.5 37-1.5-29-1.5 22-1.5-34-1.5 33-1.5-30-1.5 45-1.5-41-1.5 47-1.5-43-1.5 41-1.5-40-1.5 39-1.5-37-1.5 44-1.5-43-1.5 49-1.5-51-1.5 37-1.5-35-1.5 33-1.5-34-1.5 50-1.5-47-1.5 40-1.5-41-1.5 42-1.5-59-1.5 75-1.5-74-1.5 61-1.5-48-1.5 60-1.5-57-1.5 55-1.5-66-1.5 55-1.5-54-1.5 36-1.5-36-1.5 43-1.5-54-1.5 56-1.5-55-1.5 56-1.5-51-1.5 61-1.5-47-1.5 48-1.5-56-1.5 60-1.5-63-1.5 62-1.5-63-1.5 46-1.5-41-1.5 62-1.5-55-1.5 49-1.5-65-1.5 55-1.5-52-1.5 43-1.5-47-1.5 56-1.5-50-1.5 35-1.5-26-1.5 39-1.5-51-1.5 51-1.5-54-1.5 62-1.5-45-1.5 31-1.5-38-1.5 45-1.5-35-1.5 46-1.5-55-1.5 36-1.5-50-1.5 68-1.5-64-1.5 60-1.5-58-1.5 44-1.5-47-1.5 55-1.5-50-1.5 41-1.5-46-1.5 44-1.5-47-1.5 42-1.5-24-1.5 45-1.5-53-1.5 42-1.5-36-1.5 35-1.5-33-1.5 42-1.5-52-1.5 53-1.5-55-1.5 54-1.5-53-1.5 46-1.5-51-1.5 47-1.5-50-1.5 47-1.5-46-1.5 35-1.5-34-1.5 29-1.5-22-1.5 14-1.5-18-1.5 11-1.5-16-1.5 9-1.5-10-1.5 2-1.5-2-1.5 2-1.5-3-1.5 2-1.5-2-1.5 1-1.5-1-1.5 1-1.5-1-1.5 0-1.5 0-1.5 0-1.5 0-1.5 0Z" fill="url(#wfill)" opacity="0.82"/></g>
<g shape-rendering="crispEdges"><path d="M346.5 1035v3m3-4v5m3-6v8m3-10v11m3-12v13m3-13v14m3-20v25m3-52v74m3-86v95m3-107v113m3-130v133m3-129v148m3-165v160m3-178v198m3-186v183m3-191v194m3-213v216m3-226v228m3-206v217m3-212v196m3-189v182m3-184v185m3-204v235m3-253v259m3-237v221m3-220v214m3-207v200m3-230v252m3-291v307m3-278v287m3-277v254m3-224v207m3-200v198m3-194v189m3-193v195m3-194v185m3-202v220m3-222v232m3-247v256m3-275v308m3-307v309m3-288v277m3-271v241m3-240v249m3-222v201m3-211v208m3-188v176m3-171v181m3-206v216m3-210v192m3-192v209m3-221v219m3-204v202m3-208v211m3-205v212m3-226v210m3-196v212m3-211v211m3-216v210m3-213v201m3-191v191m3-199v207m3-195v198m3-202v187m3-185v197m3-197v188m3-193v197m3-195v184m3-184v194m3-201v196m3-190v187m3-200v205m3-191v195m3-217v218m3-215v216m3-206v201m3-195v181m3-179v181m3-192v197m3-187v184m3-174v170m3-181v177m3-166v165m3-166v168m3-164v154m3-156v165m3-174v172m3-175v170m3-151v153m3-161v156m3-157v160m3-148v150m3-158v155m3-141v147m3-141v146m3-143v153m3-154v149m3-141v134m3-138v142m3-134v125m3-130v133m3-123v116m3-119v115m3-112v114m3-115v112m3-106v102m3-101v99m3-94v93m3-92v88m3-87v92m3-93v87m3-92v94m3-95v99m3-95v97m3-104v97m3-93v96m3-106v105m3-108v105m3-106v104m3-105v105m3-106v106m3-112v109m3-101v102m3-113v115m3-103v106m3-117v117m3-110v109m3-108v102m3-109v116m3-108v108m3-105v100m3-100v98m3-99v105m3-106v100m3-98v100m3-108v111m3-101v101m3-105v103m3-102v104m3-106v104m3-101v100m3-97v95m3-91v92m3-92v90m3-90v91m3-87v89m3-90v89m3-85v81m3-83v86m3-89v83m3-76v75m3-76v75m3-74v74m3-74v75m3-79v79m3-81v78m3-78v72m3-65v72m3-74v71m3-73v76m3-73v73m3-72v72m3-77v86m3-91v90m3-92v90m3-85v92m3-97v96m3-88v82m3-83v85m3-85v83m3-76v71m3-73v77m3-74v67m3-67v69m3-66v64m3-64v66m3-64v63m3-69v70m3-65v63m3-62v63m3-66v62m3-58v58m3-56v52m3-48v45m3-45v42m3-38v37m3-35v34m3-33v32m3-32v31m3-32v31m3-29v30m3-29v28m3-29v27m3-26v26m3-25v26m3-27v26m3-23v22m3-22v23m3-23v21m3-21v21m3-22v22m3-23v24m3-24v24m3-23v23m3-24v26m3-26v25m3-26v27m3-28v28m3-28v28m3-27v26m3-28v31m3-30v31m3-33v31m3-31v32m3-30v29m3-30v30m3-29v29m3-30v30m3-29v32m3-33v32m3-33v35m3-34v31m3-34v37m3-37v35m3-32v31m3-33v35m3-33v33m3-31v29m3-31v30m3-28v28m3-29v31m3-30v28m3-26v26m3-27v26m3-25v26m3-26v25m3-26v26m3-25v24m3-25v24m3-23v22m3-22v23m3-22v22m3-21v19m3-19v19m3-18v18m3-18v17m3-16v15m3-14v13m3-12v11m3-11v11m3-10v9m3-9v9m3-7v7m3-8v8m3-8v9m3-10v10m3-11v13m3-14v15m3-29v38m3-54v66m3-71v75m3-83v89m3-88v93m3-100v102m3-105v111m3-112v121m3-127v122m3-123v127m3-130v130m3-134v152m3-170v171m3-173v168m3-197v201m3-194v205m3-227v236m3-244v249m3-236v243m3-243v227m3-250v271m3-266v259m3-249v245m3-243v242m3-254v277m3-290v283m3-273v275m3-277v286m3-288v292m3-266v247m3-219v203m3-193v175m3-159v154m3-144v139m3-130v125m3-125v115m3-109v105m3-99v101m3-105v99m3-95v88m3-88v86m3-85v88m3-87v82m3-89v90m3-97v98m3-95v107m3-120v122m3-128v126m3-141v151m3-162v167m3-165v183m3-194v212m3-223v217m3-224v238m3-264v282m3-277v268m3-252v265m3-270v256m3-269v290m3-279v255m3-273v268m3-257v257m3-247v250m3-259v280m3-297v290m3-270v262m3-272v291m3-308v286m3-263v288m3-279v254m3-254v274m3-274v270m3-268v268m3-272v273m3-294v303m3-296v303m3-304v306m3-326v331m3-306v287m3-305v321m3-303v296m3-300v274m3-258v255m3-259v285m3-301v304m3-313v303m3-297v309m3-308v288m3-293v289m3-274v284m3-293v291m3-276v257m3-267v257m3-258v260m3-243v238m3-236v225m3-191v178m3-161v159m3-156v136m3-120v118m3-108v101m3-92v86m3-80v71m3-63v63m3-63v60m3-57v54m3-51v50m3-61v72m3-76v80m3-92v103m3-110v114m3-143v156m3-152v149m3-171v176m3-179v177m3-173v180m3-185v183m3-174v181m3-179v175m3-185v189m3-197v216m3-218v228m3-216v210m3-215v205m3-213v208m3-208v217m3-214v198m3-188v199m3-184v171m3-156v148m3-138v133m3-125v118m3-115v113m3-114v112m3-104v102m3-104v102m3-107v111m3-108v102m3-101v109m3-106v108m3-113v114m3-107v113m3-133v140m3-153v166m3-184v198m3-204v200m3-212v219m3-201v201m3-205v207m3-226v213m3-212v221m3-215v219m3-220v224m3-230v218m3-218v237m3-243v242m3-236v226m3-218v234m3-233v232m3-235v222m3-238v229m3-223v241m3-236v225m3-213v235m3-233v229m3-243v236m3-238v250m3-245v235m3-258v258m3-250v258m3-271v283m3-287v283m3-281v269m3-275v286m3-296v297m3-274v271m3-290v289m3-280v264m3-246v247m3-252v244m3-255v259m3-230v226m3-238v244m3-251v237m3-237v251m3-232v223m3-212v197m3-184v195m3-209v195m3-180v173m3-163v148m3-138v131m3-118v115m3-114v111m3-98v96m3-95v90m3-92v95m3-86v81m3-81v83m3-81v81m3-92v94m3-104v116m3-116v119m3-128v144m3-157v158m3-173v193m3-178v170m3-166v162m3-165v159m3-149v134m3-141v144m3-145v162m3-161v158m3-170v177m3-175v175m3-182v181m3-161v152m3-157v147m3-141v129m3-113v112m3-103v88m3-79v78m3-74v62m3-53v46m3-41v38m3-34v34m3-30v27m3-23v19m3-17v14m3-12v12m3-21v30m3-37v46m3-58v65m3-85v95m3-124v137m3-162v175m3-197v211m3-215v224m3-231v233m3-250v265m3-259v264m3-254v254m3-272v263m3-240v250m3-262v245m3-226v232m3-236v246m3-260v250m3-239v238m3-228v236m3-246v234m3-227v214m3-185v186m3-182v163m3-143v135m3-112v94m3-77v68m3-60v52m3-49v46m3-40v38m3-32v26m3-23v19m3-20v21m3-28v36m3-43v52m3-76v88m3-104v120m3-144v159m3-182v181m3-184v202m3-201v195m3-192v207m3-217v205m3-204v217m3-235v248m3-250v236m3-246v267m3-265v270m3-273v272m3-271v257m3-259v256m3-236v246m3-244v235m3-231v227m3-227v218m3-206v215m3-210v190m3-183v191m3-185v173m3-162v159m3-154v147m3-140v136m3-124v121m3-120v116m3-106v96m3-88v92m3-101v101m3-102v97m3-103v106m3-120v128m3-143v148m3-156v172m3-188v185m3-203v209m3-202v225m3-237v245m3-262v258m3-245v250m3-249v254m3-251v259m3-252v242m3-240v233m3-238v243m3-231v241m3-248v251m3-246v233m3-225v230m3-233v214m3-211v225m3-219v221m3-229v228m3-216v207m3-213v203m3-196v188m3-199v199m3-187v184m3-188v189m3-198v190m3-185v200m3-217v205m3-203v222m3-240v229m3-225v228m3-211v225m3-229v233m3-245v245m3-248v251m3-262v248m3-227v229m3-243v240m3-221v225m3-221v217m3-230v226m3-227v226m3-214v215m3-228v220m3-219v218m3-222v230m3-224v222m3-216v217m3-201v189m3-204v203m3-184v179m3-187v197m3-178v176m3-175v167m3-172v167m3-160v162m3-167v162m3-148v157m3-155v142m3-153v164m3-150v144m3-156v153m3-142v138m3-134v142m3-148v151m3-149v141m3-140v138m3-138v145m3-139v136m3-146v146m3-132v129m3-123v114m3-121v126m3-121v117m3-111v112m3-112v109m3-109v101m3-100v98m3-94v95m3-94v89m3-78v71m3-72v70m3-60v58m3-56v53m3-46v41m3-40v35m3-27v24m3-18v15m3-13v12m3-13v14m3-16v17m3-19v21m3-21v21m3-22v24m3-26v27m3-25v24m3-27v28m3-27v26m3-27v30m3-29v27m3-26v27m3-29v29m3-28v28m3-29v31m3-34v34m3-32v31m3-33v34m3-33v33m3-34v34m3-31v32m3-35v33m3-31v33m3-34v32m3-32v32m3-29v29m3-31v32m3-31v32m3-31v32m3-35v33m3-29v27m3-29v30m3-30v30m3-28v27m3-29v30m3-28v26m3-25v26m3-26v24m3-23v24m3-23v23m3-24v23m3-22v22m3-21v20m3-21v21m3-19v18m3-18v17m3-17v17m3-16v15m3-14v14m3-14v14m3-13v12m3-12v13m3-14v13m3-13v13m3-12v13m3-15v14m3-13v14m3-18v20m3-23v28m3-31v34m3-43v51m3-69v90m3-111v117m3-119v114m3-124v124m3-124v128m3-142v158m3-175v184m3-188v194m3-200v204m3-242v251m3-243v243m3-275v281m3-272v261m3-241v243m3-267v287m3-280v283m3-269v266m3-267v254m3-284v282m3-280v289m3-304v308m3-279v292m3-288v300m3-326v331m3-313v290m3-266v272m3-271v263m3-247v237m3-235v216m3-190v174m3-159v151m3-144v145m3-145v152m3-164v169m3-172v164m3-165v168m3-164v170m3-165v160m3-167v170m3-182v197m3-220v230m3-258v303m3-317v305m3-307v314m3-305v300m3-292v299m3-311v303m3-303v305m3-293v295m3-299v279m3-275v287m3-298v290m3-297v300m3-300v300m3-267v265m3-262v242m3-216v218m3-222v194m3-167v168m3-165v167m3-169v164m3-145v134m3-127v123m3-137v147m3-142v132m3-142v142m3-137v145m3-148v146m3-160v168m3-198v214m3-219v222m3-221v224m3-244v252m3-247v252m3-251v252m3-283v293m3-291v282m3-270v274m3-290v277m3-255v262m3-251v237m3-206v204m3-195v196m3-205v196m3-207v226m3-210v198m3-218v214m3-196v204m3-222v217m3-211v226m3-231v224m3-227v232m3-229v219m3-226v236m3-223v219m3-230v220m3-219v218m3-234v245m3-236v244m3-257v248m3-226v231m3-238v240m3-237v242m3-266v254m3-254v254m3-234v246m3-250v248m3-253v263m3-277v281m3-263v248m3-266v268m3-245v247m3-250v252m3-257v245m3-253v269m3-243v223m3-224v218m3-221v222m3-192v183m3-180v177m3-187v197m3-194v186m3-200v197m3-185v190m3-199v189m3-191v188m3-169v170m3-172v183m3-179v167m3-161v174m3-179v183m3-177v164m3-159v171m3-181v184m3-197v192m3-178v186m3-207v203m3-199v205m3-205v191m3-207v216m3-195v197m3-204v190m3-180v182m3-171v158m3-160v149m3-142v141m3-131v136m3-129v128m3-134v131m3-130v124m3-114v107m3-111v115m3-105v99m3-104v103m3-91v88m3-92v96m3-89v86m3-87v85m3-78v77m3-75v69m3-71v75m3-73v71m3-70v68m3-67v67m3-64v58m3-52v52m3-51v50m3-50v49m3-47v48m3-42v37m3-40v39m3-35v34m3-34v34m3-33v34m3-33v30m3-28v28m3-26v24m3-24v23m3-20v19m3-18v17m3-18v18m3-16v15m3-14v12m3-11v11m3-10v10m3-10v9m3-8v7m3-7v6m3-5v5m3-4v3m3-3v3" stroke="url(#wfill)" stroke-width="1" fill="none" opacity="0.34"/><path d="M343 1036l1.5 0 1.5-1 1.5 0 1.5-1 1.5 0 1.5-1 1.5 0 1.5-1 1.5 0 1.5-1 1.5 0 1.5-2 1.5 1 1.5-1 1.5-11 1.5-17 1.5-6 1.5-9 1.5-4 1.5-9 1.5 10 1.5-17 1.5 8 1.5-16 1.5 6 1.5-26 1.5 25 1.5-24 1.5 1 1.5-18 1.5 25 1.5-32 1.5 28 1.5-31 1.5 9 1.5-10 1.5 8 1.5 1 1.5 23 1.5-18 1.5 18 1.5-3 1.5 20 1.5-25 1.5 21 1.5-38 1.5 28 1.5-30 1.5 32 1.5-26 1.5 21 1.5-21 1.5 31 1.5-35 1.5 5 1.5-21 1.5 0 1.5-28 1.5-2 1.5 0 1.5 49 1.5-35 1.5 42 1.5-17 1.5 26 1.5 1 1.5 12 1.5-26 1.5 21 1.5-25 1.5 23 1.5-17 1.5 21 1.5-41 1.5 21 1.5-33 1.5 9 1.5-20 1.5 6 1.5-18 1.5 36 1.5-39 1.5 27 1.5-14 1.5 29 1.5-2 1.5 24 1.5-21 1.5 26 1.5-15 1.5 19 1.5-14 1.5 39 1.5-24 1.5 17 1.5-15 1.5 10 1.5-14 1.5 22 1.5-25 1.5 2 1.5-14 1.5 24 1.5-14 1.5 22 1.5-24 1.5 7 1.5-9 1.5 22 1.5-18 1.5 16 1.5-12 1.5 2 1.5-5 1.5 22 1.5-26 1.5 8 1.5-12 1.5 28 1.5-16 1.5 1 1.5 2 1.5 9 1.5-14 1.5 23 1.5-23 1.5 12 1.5-10 1.5 20 1.5-24 1.5 34 1.5-20 1.5 18 1.5-27 1.5 10 1.5-8 1.5 6 1.5-1 1.5 0 1.5-7 1.5 1 1.5-15 1.5 16 1.5-20 1.5 7 1.5-8 1.5 10 1.5-15 1.5 36 1.5-27 1.5 13 1.5-17 1.5 21 1.5-19 1.5 18 1.5-15 1.5 12 1.5-6 1.5 18 1.5-22 1.5 26 1.5-23 1.5 21 1.5-21 1.5 19 1.5-7 1.5 3 1.5-13 1.5 36 1.5-34 1.5 28 1.5-19 1.5 16 1.5-13 1.5 22 1.5-24 1.5 10 1.5-14 1.5 18 1.5-16 1.5 20 1.5-12 1.5 13 1.5-7 1.5 19 1.5-23 1.5 25 1.5-14 1.5 18 1.5-18 1.5 9 1.5-2 1.5 9 1.5-4 1.5 11 1.5-16 1.5 18 1.5-11 1.5 4 1.5-7 1.5 20 1.5-15 1.5 13 1.5-8 1.5 5 1.5-5 1.5 8 1.5-6 1.5 6 1.5-1 1.5 12 1.5-14 1.5 11 1.5-5 1.5 10 1.5-9 1.5 12 1.5-12 1.5 6 1.5-5 1.5 3 1.5-6 1.5 7 1.5-5 1.5 3 1.5-6 1.5 5 1.5-6 1.5 12 1.5-11 1.5 3 1.5-4 1.5 3 1.5-12 1.5 5 1.5-9 1.5 10 1.5-10 1.5 6 1.5-9 1.5 1 1.5-5 1.5 12 1.5-12 1.5 13 1.5-11 1.5 3 1.5-4 1.5 8 1.5-5 1.5 7 1.5-10 1.5 20 1.5-18 1.5 12 1.5-16 1.5 16 1.5-10 1.5 3 1.5-8 1.5 12 1.5-11 1.5 14 1.5-13 1.5 8 1.5-9 1.5 12 1.5-11 1.5 10 1.5-6 1.5 7 1.5-6 1.5 12 1.5-17 1.5 14 1.5-7 1.5 4 1.5-6 1.5 7 1.5-6 1.5 10 1.5-9 1.5 22 1.5-18 1.5 10 1.5-2 1.5 8 1.5-12 1.5 14 1.5-6 1.5 8 1.5-5 1.5 2 1.5-5 1.5 9 1.5-9 1.5 14 1.5-17 1.5 17 1.5-18 1.5 17 1.5-15 1.5 13 1.5-12 1.5 9 1.5-12 1.5 15 1.5-8 1.5 5 1.5-5 1.5 9 1.5-9 1.5 7 1.5-9 1.5 16 1.5-14 1.5 8 1.5-6 1.5 8 1.5-10 1.5 12 1.5-11 1.5 8 1.5-8 1.5 3 1.5-5 1.5 6 1.5-6 1.5 1 1.5-8 1.5 8 1.5-9 1.5 17 1.5-24 1.5 20 1.5-16 1.5 7 1.5-6 1.5 20 1.5-17 1.5 20 1.5-15 1.5 10 1.5-7 1.5 7 1.5-2 1.5 9 1.5-15 1.5 11 1.5-7 1.5 13 1.5-15 1.5 11 1.5-8 1.5 6 1.5-10 1.5 8 1.5-4 1.5 10 1.5-14 1.5 11 1.5-11 1.5 8 1.5-4 1.5 10 1.5-5 1.5 5 1.5-4 1.5 3 1.5 1 1.5 3 1.5-2 1.5 3 1.5-2 1.5 1 1.5 0 1.5 1 1.5 0 1.5 2 1.5-1 1.5 1 1.5-1 1.5 1 1.5 0 1.5 0 1.5 0 1.5 2 1.5-2 1.5 3 1.5-2 1.5 2 1.5-1 1.5 2 1.5-2 1.5 1 1.5 0 1.5 1 1.5-1 1.5 1 1.5 0 1.5 1 1.5-1 1.5-1 1.5 0 1.5 2 1.5-2 1.5 0 1.5-1 1.5 0 1.5 0 1.5 0 1.5 0 1.5 0 1.5-1 1.5 1 1.5-2 1.5 2 1.5-2 1.5 0 1.5 0 1.5 1 1.5-1 1.5 1 1.5-2 1.5 1 1.5 0 1.5 1 1.5-2 1.5 2 1.5-2 1.5 0 1.5-1 1.5 2 1.5-2 1.5 1 1.5-1 1.5 2 1.5-2 1.5 0 1.5-1 1.5 2 1.5-2 1.5 3 1.5-3 1.5 1 1.5 0 1.5 0 1.5-1 1.5 2 1.5-1 1.5 1 1.5-1 1.5 3 1.5-3 1.5 2 1.5-1 1.5 2 1.5 0 1.5 0 1.5-1 1.5 1 1.5 0 1.5 2 1.5-2 1.5 0 1.5 0 1.5 1 1.5-1 1.5 2 1.5-1 1.5 0 1.5 1 1.5 0 1.5-1 1.5 3 1.5-2 1.5 1 1.5-1 1.5 1 1.5 0 1.5-1 1.5 0 1.5 2 1.5-2 1.5 1 1.5 0 1.5 2 1.5-1 1.5 0 1.5 1 1.5 1 1.5-1 1.5 1 1.5 0 1.5 1 1.5 0 1.5 1 1.5-1 1.5 1 1.5 0 1.5 1 1.5 0 1.5 1 1.5-1 1.5 1 1.5 0 1.5 1 1.5-1 1.5 0 1.5-1 1.5 1 1.5-1 1.5 1 1.5-2 1.5 1 1.5-2 1.5-1 1.5-7 1.5 0 1.5-14 1.5 5 1.5-20 1.5 18 1.5-17 1.5 8 1.5-14 1.5 17 1.5-15 1.5 1 1.5-3 1.5 2 1.5-12 1.5 19 1.5-10 1.5 6 1.5-17 1.5 27 1.5-26 1.5 6 1.5-8 1.5 14 1.5-31 1.5 21 1.5-23 1.5 21 1.5-44 1.5 14 1.5-22 1.5 19 1.5-19 1.5 32 1.5-40 1.5 22 1.5-30 1.5 23 1.5-30 1.5 19 1.5-30 1.5 37 1.5-45 1.5 47 1.5-34 1.5 11 1.5-6 1.5 4 1.5-8 1.5 38 1.5-36 1.5 15 1.5-20 1.5 54 1.5-58 1.5 33 1.5-26 1.5 61 1.5-39 1.5 34 1.5-27 1.5 48 1.5-36 1.5 24 1.5-10 1.5 39 1.5-20 1.5 10 1.5-4 1.5 11 1.5-9 1.5 16 1.5-8 1.5 15 1.5-15 1.5 14 1.5-7 1.5 6 1.5-11 1.5 13 1.5-13 1.5 15 1.5-9 1.5 16 1.5-19 1.5 16 1.5-18 1.5 10 1.5-6 1.5 11 1.5-24 1.5 19 1.5-22 1.5 8 1.5-9 1.5 2 1.5-10 1.5 13 1.5-25 1.5 2 1.5-9 1.5 8 1.5-18 1.5 17 1.5-31 1.5 19 1.5-35 1.5 26 1.5-28 1.5 42 1.5-40 1.5 34 1.5-27 1.5 16 1.5-16 1.5-3 1.5-24 1.5 45 1.5-20 1.5 19 1.5-25 1.5 54 1.5-43 1.5 42 1.5-64 1.5 42 1.5-47 1.5 59 1.5-66 1.5 33 1.5-29 1.5 62 1.5-47 1.5 5 1.5-23 1.5 38 1.5-21 1.5 40 1.5-46 1.5 21 1.5-10 1.5 8 1.5-19 1.5 34 1.5-42 1.5 20 1.5-20 1.5 54 1.5-48 1.5 45 1.5-44 1.5 4 1.5-28 1.5 17 1.5-24 1.5 73 1.5-74 1.5 27 1.5-27 1.5 43 1.5-24 1.5 48 1.5-60 1.5 25 1.5-22 1.5 26 1.5-5 1.5 34 1.5-50 1.5 15 1.5-5 1.5 20 1.5-37 1.5 17 1.5-10 1.5 38 1.5-38 1.5 62 1.5-52 1.5 47 1.5-43 1.5 40 1.5-35 1.5 7 1.5-22 1.5 39 1.5-24 1.5 25 1.5-36 1.5 64 1.5-47 1.5 28 1.5-5 1.5 43 1.5-24 1.5 24 1.5-9 1.5 23 1.5-9 1.5 21 1.5-18 1.5 14 1.5-6 1.5 12 1.5-8 1.5 21 1.5-10 1.5 9 1.5-8 1.5 12 1.5-7 1.5 7 1.5-3 1.5 0 1.5-9 1.5 4 1.5-5 1.5-1 1.5-13 1.5 7 1.5-17 1.5 7 1.5-31 1.5 16 1.5-22 1.5 2 1.5-17 1.5 18 1.5-31 1.5 44 1.5-44 1.5 15 1.5-12 1.5 45 1.5-44 1.5 34 1.5-29 1.5 30 1.5-40 1.5 46 1.5-48 1.5 34 1.5-20 1.5 6 1.5-11 1.5 30 1.5-41 1.5 33 1.5-23 1.5 23 1.5-19 1.5 46 1.5-43 1.5 24 1.5-22 1.5 23 1.5 2 1.5 31 1.5-19 1.5 15 1.5-12 1.5 12 1.5-1 1.5 7 1.5-3 1.5 13 1.5-18 1.5 22 1.5-24 1.5 22 1.5-15 1.5 12 1.5-23 1.5 24 1.5-24 1.5 20 1.5-15 1.5 3 1.5-6 1.5 16 1.5-10 1.5 14 1.5-12 1.5 15 1.5-28 1.5 8 1.5-23 1.5 18 1.5-46 1.5 28 1.5-26 1.5 23 1.5-17 1.5 31 1.5-33 1.5 16 1.5-23 1.5 14 1.5-17 1.5 21 1.5-30 1.5 20 1.5-9 1.5 24 1.5-29 1.5 14 1.5-12 1.5 39 1.5-30 1.5 5 1.5-7 1.5 7 1.5-22 1.5 32 1.5-40 1.5 22 1.5-9 1.5 40 1.5-37 1.5 21 1.5-30 1.5 37 1.5-37 1.5 43 1.5-45 1.5 49 1.5-44 1.5 44 1.5-44 1.5 47 1.5-37 1.5 29 1.5-27 1.5 13 1.5-37 1.5 23 1.5-13 1.5 43 1.5-62 1.5 38 1.5-48 1.5 25 1.5-30 1.5 67 1.5-53 1.5 41 1.5-41 1.5 46 1.5-61 1.5 26 1.5-38 1.5 62 1.5-58 1.5 74 1.5-52 1.5 45 1.5-51 1.5 31 1.5-17 1.5 24 1.5-35 1.5 40 1.5-38 1.5 31 1.5-25 1.5 45 1.5-25 1.5 36 1.5-53 1.5 58 1.5-41 1.5 47 1.5-44 1.5 29 1.5-7 1.5 31 1.5-24 1.5 28 1.5-28 1.5 33 1.5-33 1.5 40 1.5-24 1.5 16 1.5-1 1.5 12 1.5-13 1.5 14 1.5-11 1.5 9 1.5-2 1.5 16 1.5-19 1.5 10 1.5-1 1.5 10 1.5-15 1.5 10 1.5-8 1.5 8 1.5-11 1.5 12 1.5-20 1.5 11 1.5-24 1.5 7 1.5-13 1.5 19 1.5-36 1.5 36 1.5-31 1.5 16 1.5-28 1.5 29 1.5-22 1.5 40 1.5-25 1.5 24 1.5-23 1.5 24 1.5-24 1.5 18 1.5-15 1.5 20 1.5-29 1.5 24 1.5-21 1.5 16 1.5-17 1.5 9 1.5-17 1.5 30 1.5-30 1.5 17 1.5 0 1.5 23 1.5-26 1.5 20 1.5-16 1.5 31 1.5-22 1.5 25 1.5-16 1.5 21 1.5-12 1.5 11 1.5 2 1.5 7 1.5-6 1.5 8 1.5-2 1.5 5 1.5-2 1.5 3 1.5 1 1.5 3 1.5 0 1.5 2 1.5 1 1.5-1 1.5-6 1.5-4 1.5-4 1.5 2 1.5-12 1.5 5 1.5-24 1.5 6 1.5-28 1.5 1 1.5-31 1.5 4 1.5-23 1.5 26 1.5-29 1.5 16 1.5-33 1.5 9 1.5-20 1.5 29 1.5-37 1.5 36 1.5-34 1.5 26 1.5-14 1.5 9 1.5-5 1.5 8 1.5-18 1.5 33 1.5-28 1.5 38 1.5-37 1.5 41 1.5-40 1.5 21 1.5-17 1.5 33 1.5-28 1.5 29 1.5-22 1.5 32 1.5-24 1.5 14 1.5-14 1.5 33 1.5-9 1.5 12 1.5 1 1.5 27 1.5-7 1.5 23 1.5 1 1.5 12 1.5-2 1.5 3 1.5 1 1.5 8 1.5-4 1.5 6 1.5-2 1.5 4 1.5 1 1.5 3 1.5-3 1.5 0 1.5-7 1.5 0 1.5-6 1.5 0 1.5-15 1.5-8 1.5-12 1.5-2 1.5-15 1.5-10 1.5-9 1.5-2 1.5-16 1.5 32 1.5-29 1.5 3 1.5-7 1.5 22 1.5-37 1.5 12 1.5-8 1.5 9 1.5-20 1.5 28 1.5-28 1.5 9 1.5-19 1.5 22 1.5-19 1.5 33 1.5-30 1.5 17 1.5-8 1.5 13 1.5-14 1.5 34 1.5-42 1.5 30 1.5-19 1.5 32 1.5-22 1.5 28 1.5-29 1.5 23 1.5-20 1.5 28 1.5-21 1.5 27 1.5-22 1.5 17 1.5-16 1.5 23 1.5-15 1.5 20 1.5-5 1.5 8 1.5-1 1.5 19 1.5-13 1.5 13 1.5-3 1.5 11 1.5-4 1.5 12 1.5-8 1.5 5 1.5-9 1.5 5 1.5-6 1.5 11 1.5-18 1.5-3 1.5-12 1.5 10 1.5-20 1.5 3 1.5-15 1.5-3 1.5-10 1.5 0 1.5-15 1.5 17 1.5-21 1.5 31 1.5-43 1.5 24 1.5-32 1.5 30 1.5-20 1.5 3 1.5-2 1.5 24 1.5-27 1.5 19 1.5-15 1.5 15 1.5-5 1.5 21 1.5-21 1.5 10 1.5-1 1.5 14 1.5-12 1.5 30 1.5-36 1.5 23 1.5-24 1.5 29 1.5-28 1.5 14 1.5-10 1.5 30 1.5-24 1.5 32 1.5-31 1.5 14 1.5-19 1.5 28 1.5-20 1.5 21 1.5-24 1.5 21 1.5-23 1.5 19 1.5-17 1.5 15 1.5-9 1.5 24 1.5-29 1.5 18 1.5-17 1.5 18 1.5-20 1.5 18 1.5-35 1.5 35 1.5-37 1.5 16 1.5-15 1.5 21 1.5-23 1.5 6 1.5-17 1.5 34 1.5-27 1.5 4 1.5-19 1.5 22 1.5-13 1.5 39 1.5-51 1.5 49 1.5-37 1.5 6 1.5-10 1.5 12 1.5-11 1.5 23 1.5-19 1.5 19 1.5-11 1.5 24 1.5-22 1.5 32 1.5-28 1.5 9 1.5-2 1.5 3 1.5-4 1.5 4 1.5-1 1.5 4 1.5-11 1.5 22 1.5-23 1.5 43 1.5-40 1.5 41 1.5-22 1.5 2 1.5 2 1.5 23 1.5-32 1.5 25 1.5-15 1.5 9 1.5-9 1.5 16 1.5-12 1.5 21 1.5-17 1.5 12 1.5-9 1.5 23 1.5-19 1.5 16 1.5-13 1.5 6 1.5-6 1.5 5 1.5-15 1.5 16 1.5-16 1.5 18 1.5-17 1.5 20 1.5-19 1.5 13 1.5-9 1.5 7 1.5-10 1.5 13 1.5-12 1.5 8 1.5-2 1.5 19 1.5-20 1.5 12 1.5-9 1.5 14 1.5-6 1.5 5 1.5-6 1.5 15 1.5-9 1.5 11 1.5-8 1.5 11 1.5-10 1.5 15 1.5-15 1.5 15 1.5-8 1.5 10 1.5-11 1.5 16 1.5-12 1.5 7 1.5-2 1.5 14 1.5-10 1.5 11 1.5-6 1.5 6 1.5-3 1.5 6 1.5 1 1.5 4 1.5 1 1.5 4 1.5 1 1.5 5 1.5 0 1.5 3 1.5 0 1.5 2 1.5-3 1.5 1 1.5-2 1.5-1 1.5 0 1.5 1 1.5-2 1.5-1 1.5-1 1.5 2 1.5-2 1.5 0 1.5 0 1.5 0 1.5-1 1.5 1 1.5 0 1.5-1 1.5-1 1.5 1 1.5 0 1.5 1 1.5-2 1.5 2 1.5-2 1.5 0 1.5-1 1.5 2 1.5-3 1.5 1 1.5-1 1.5 2 1.5-2 1.5 2 1.5-2 1.5 1 1.5-1 1.5 1 1.5 0 1.5 3 1.5-3 1.5 0 1.5-1 1.5 0 1.5 0 1.5 1 1.5 0 1.5-1 1.5 0 1.5 2 1.5-2 1.5 3 1.5-1 1.5-1 1.5-1 1.5 2 1.5-1 1.5 2 1.5-2 1.5 0 1.5 0 1.5 3 1.5-2 1.5 1 1.5-1 1.5 3 1.5-2 1.5 1 1.5-1 1.5 1 1.5 0 1.5 0 1.5 0 1.5 0 1.5 2 1.5 0 1.5-1 1.5 0 1.5 0 1.5 1 1.5 0 1.5 0 1.5 0 1.5 2 1.5-1 1.5 1 1.5 0 1.5 0 1.5 0 1.5 1 1.5-1 1.5 2 1.5-1 1.5 1 1.5 0 1.5 1 1.5 0 1.5 1 1.5-1 1.5 1 1.5 0 1.5 1 1.5-1 1.5 0 1.5-1 1.5 1 1.5-1 1.5 1 1.5-1 1.5 1 1.5-1 1.5 1 1.5-1 1.5-1 1.5-3 1.5 2 1.5-4 1.5 2 1.5-4 1.5 2 1.5-12 1.5-6 1.5-14 1.5 9 1.5-18 1.5 10 1.5-19 1.5 16 1.5-25 1.5 28 1.5-29 1.5 2 1.5-10 1.5 19 1.5-39 1.5 36 1.5-46 1.5 21 1.5-23 1.5 14 1.5-15 1.5 1 1.5-14 1.5 15 1.5-33 1.5 7 1.5-9 1.5 37 1.5-26 1.5 12 1.5-19 1.5 32 1.5-23 1.5 11 1.5-19 1.5 25 1.5-25 1.5 27 1.5-36 1.5 47 1.5-51 1.5 49 1.5-61 1.5 17 1.5-21 1.5 68 1.5-54 1.5 26 1.5-43 1.5 52 1.5-50 1.5 54 1.5-53 1.5 39 1.5-27 1.5 39 1.5-7 1.5 46 1.5-46 1.5 36 1.5-14 1.5 44 1.5-26 1.5 33 1.5-26 1.5 13 1.5-15 1.5 34 1.5-27 1.5 7 1.5-14 1.5 30 1.5-35 1.5 34 1.5-32 1.5 26 1.5-20 1.5 12 1.5-25 1.5 32 1.5-30 1.5 7 1.5-24 1.5 26 1.5-63 1.5 52 1.5-47 1.5 7 1.5-22 1.5 28 1.5-35 1.5 56 1.5-69 1.5 62 1.5-43 1.5 15 1.5-6 1.5 45 1.5-58 1.5 23 1.5-23 1.5 42 1.5-34 1.5 14 1.5-24 1.5 43 1.5-49 1.5 70 1.5-45 1.5 29 1.5-20 1.5 35 1.5-36 1.5 58 1.5-35 1.5 35 1.5-16 1.5 26 1.5-20 1.5 14 1.5-5 1.5 28 1.5-20 1.5 15 1.5-15 1.5 29 1.5-23 1.5 19 1.5-19 1.5 4 1.5-9 1.5 24 1.5-25 1.5 13 1.5-19 1.5 17 1.5-23 1.5 21 1.5-29 1.5 15 1.5-24 1.5 18 1.5-43 1.5 11 1.5-7 1.5 13 1.5-43 1.5 27 1.5-13 1.5 26 1.5-48 1.5 32 1.5-23 1.5 7 1.5-32 1.5 72 1.5-73 1.5 52 1.5-50 1.5 58 1.5-51 1.5 27 1.5 0 1.5 16 1.5-3 1.5 34 1.5-26 1.5 18 1.5-15 1.5 15 1.5-19 1.5 11 1.5-1 1.5 19 1.5-30 1.5 22 1.5-11 1.5 10 1.5-28 1.5 13 1.5-2 1.5 30 1.5-34 1.5 25 1.5-31 1.5 26 1.5-26 1.5 29 1.5-20 1.5 11 1.5-26 1.5 11 1.5-16 1.5 20 1.5-22 1.5 22 1.5-15 1.5 17 1.5-25 1.5 21 1.5-10 1.5 26 1.5-35 1.5 9 1.5-8 1.5 29 1.5-34 1.5 22 1.5-22 1.5 29 1.5-31 1.5 33 1.5-43 1.5 34 1.5-31 1.5 19 1.5-19 1.5 23 1.5-20 1.5 12 1.5-19 1.5 12 1.5-16 1.5 25 1.5-24 1.5 32 1.5-32 1.5 23 1.5-22 1.5 33 1.5-21 1.5 22 1.5-24 1.5 46 1.5-37 1.5 15 1.5-6 1.5 37 1.5-17 1.5 23 1.5-13 1.5 15 1.5-15 1.5 1 1.5-11 1.5 28 1.5-32 1.5 22 1.5-21 1.5 20 1.5-12 1.5-1 1.5-1 1.5 15 1.5-13 1.5 10 1.5-9 1.5 14 1.5-17 1.5 25 1.5-18 1.5 27 1.5-22 1.5 12 1.5-3 1.5 5 1.5-8 1.5 12 1.5-16 1.5 0 1.5-3 1.5-1 1.5-12 1.5 19 1.5-23 1.5 20 1.5-19 1.5 4 1.5-5 1.5 21 1.5-33 1.5 31 1.5-22 1.5 28 1.5-25 1.5 16 1.5 0 1.5 7 1.5-8 1.5 13 1.5-6 1.5 14 1.5-7 1.5 14 1.5-8 1.5 15 1.5-18 1.5 20 1.5-10 1.5 5 1.5-4 1.5 15 1.5-10 1.5 10 1.5-9 1.5 11 1.5-13 1.5 10 1.5-7 1.5 20 1.5-16 1.5 10 1.5-5 1.5 9 1.5-7 1.5 11 1.5-9 1.5 7 1.5-1 1.5 3 1.5-6 1.5 13 1.5-8 1.5 9 1.5-6 1.5 5 1.5-4 1.5 7 1.5-5 1.5 4 1.5-3 1.5 7 1.5-7 1.5 5 1.5 0 1.5 2 1.5 0 1.5 6 1.5-6 1.5 3 1.5 0 1.5 2 1.5 0 1.5 4 1.5-3 1.5 4 1.5-4 1.5 3 1.5-1 1.5 6 1.5-5 1.5 5 1.5-3 1.5 3 1.5-1 1.5 3 1.5-2 1.5 3 1.5-2 1.5 2 1.5-1 1.5 1 1.5-1 1.5 3 1.5-1 1.5 1 1.5-1 1.5 2 1.5-1 1.5 2 1.5-1 1.5 1 1.5 0 1.5 1 1.5 0 1.5 1 1.5 0 1.5 0 1.5 0 1.5 1 1.5 0 1.5 0 1.5 0 1.5 1 1.5 0 1.5 0 1.5 0 0 1-1.5 0-1.5 0-1.5 0-1.5 1-1.5 0-1.5 0-1.5 0-1.5 1-1.5 0-1.5 1-1.5-1-1.5 1-1.5 0-1.5 1-1.5-1-1.5 2-1.5-1-1.5 1-1.5 0-1.5 1-1.5 0-1.5 1-1.5-1-1.5 1-1.5 0-1.5 1-1.5-1-1.5 2-1.5-1-1.5 2-1.5-1-1.5 2-1.5-1-1.5 3-1.5-2-1.5 2-1.5-1-1.5 2-1.5-4-1.5 5-1.5-4-1.5 5-1.5-2-1.5 3-1.5-2-1.5 3-1.5-4-1.5 4-1.5-4-1.5 7-1.5-5-1.5 5-1.5-1-1.5 3-1.5-2-1.5 4-1.5-3-1.5 2-1.5-4-1.5 7-1.5-4-1.5 3-1.5 0-1.5 2-1.5 1-1.5 1-1.5-2-1.5 5-1.5-8-1.5 10-1.5-5-1.5 4-1.5-3-1.5 7-1.5-8-1.5 7-1.5-3-1.5 9-1.5-9-1.5 9-1.5-7-1.5 6-1.5-9-1.5 12-1.5-4-1.5 10-1.5-4-1.5 4-1.5-5-1.5 8-1.5-9-1.5 12-1.5-1-1.5 4-1.5-2-1.5 7-1.5-11-1.5 12-1.5-2-1.5 11-1.5-17-1.5 24-1.5-19-1.5 21-1.5 1-1.5 8-1.5-21-1.5 19-1.5-16-1.5 11-1.5-6-1.5 5-1.5-11-1.5 7-1.5-8-1.5 15-1.5-24-1.5 18-1.5-16-1.5 9-1.5-12-1.5 17-1.5-13-1.5 9-1.5-16-1.5 21-1.5-27-1.5 16-1.5-7-1.5 11-1.5-12-1.5 11-1.5-19-1.5 15-1.5-13-1.5 23-1.5-21-1.5 24-1.5-14-1.5 14-1.5-6-1.5 10-1.5-12-1.5 14-1.5-17-1.5 20-1.5-20-1.5 24-1.5-18-1.5 22-1.5-16-1.5 11-1.5 2-1.5 0-1.5-12-1.5 31-1.5-29-1.5 30-1.5-35-1.5 32-1.5-15-1.5 19-1.5-16-1.5 16-1.5-28-1.5 30-1.5-34-1.5 32-1.5-23-1.5 24-1.5-17-1.5 15-1.5-14-1.5 8-1.5-31-1.5 26-1.5-18-1.5 13-1.5-17-1.5 16-1.5-24-1.5 27-1.5-17-1.5 7-1.5-8-1.5 18-1.5-18-1.5 8-1.5-24-1.5 26-1.5-23-1.5 23-1.5-18-1.5 15-1.5-22-1.5 27-1.5-22-1.5 14-1.5 1-1.5-3-1.5-13-1.5 26-1.5-20-1.5 20-1.5-12-1.5 14-1.5-23-1.5 19-1.5-13-1.5 11-1.5-9-1.5 4-1.5-7-1.5 1-1.5-9-1.5 8-1.5-5-1.5 10-1.5-20-1.5 24-1.5-19-1.5 15-1.5-16-1.5 17-1.5-16-1.5 17-1.5-11-1.5 23-1.5-16-1.5 34-1.5-50-1.5 43-1.5-34-1.5 23-1.5-15-1.5 26-1.5-43-1.5 31-1.5-26-1.5 25-1.5-16-1.5 11-1.5-29-1.5 17-1.5-16-1.5 7-1.5-4-1.5 5-1.5-25-1.5 20-1.5-31-1.5 27-1.5-29-1.5 29-1.5-12-1.5 13-1.5-18-1.5 19-1.5-22-1.5 21-1.5-15-1.5 11-1.5-9-1.5 12-1.5-10-1.5 12-1.5-19-1.5 32-1.5-14-1.5 14-1.5-6-1.5 12-1.5-15-1.5 24-1.5 6-1.5 5-1.5-12-1.5 24-1.5-34-1.5 32-1.5-10-1.5 10-1.5-23-1.5 24-1.5-32-1.5 26-1.5-12-1.5 17-1.5-37-1.5 35-1.5-29-1.5 53-1.5-39-1.5 33-1.5-51-1.5 63-1.5-44-1.5 24-1.5-40-1.5 43-1.5-14-1.5 26-1.5-50-1.5 11-1.5-19-1.5-2-1.5-21-1.5 17-1.5-10-1.5 10-1.5-13-1.5 4-1.5-22-1.5 25-1.5-19-1.5 17-1.5-14-1.5 13-1.5-5-1.5 12-1.5-13-1.5 7-1.5-26-1.5 21-1.5-15-1.5 21-1.5-20-1.5 46-1.5-16-1.5 17-1.5-36-1.5 34-1.5-2-1.5 18-1.5-41-1.5 40-1.5-26-1.5 20-1.5-11-1.5 13-1.5-25-1.5 21-1.5-35-1.5 32-1.5-29-1.5 34-1.5-27-1.5 21-1.5-4-1.5 7-1.5-3-1.5 4-1.5-13-1.5 10-1.5-9-1.5 15-1.5-12-1.5 15-1.5-30-1.5 23-1.5-39-1.5 38-1.5-37-1.5 25-1.5-11-1.5 21-1.5-25-1.5 17-1.5-26-1.5 18-1.5-20-1.5 11-1.5-25-1.5 17-1.5-27-1.5 14-1.5-6-1.5 10-1.5-12-1.5 10-1.5-15-1.5 16-1.5-8-1.5 1-1.5-24-1.5 1-1.5-13-1.5 6-1.5-5-1.5 1-1.5-6-1.5 3-1.5-4-1.5 1-1.5-2-1.5 1-1.5-1-1.5 1-1.5-1-1.5 2-1.5-2-1.5 1-1.5 0-1.5 0-1.5 0-1.5 0-1.5 0-1.5 1-1.5 0-1.5 0-1.5 0-1.5 1-1.5-1-1.5 1-1.5 0-1.5 1-1.5-1-1.5 1-1.5 1-1.5 0-1.5 0-1.5 0-1.5 0-1.5 1-1.5 0-1.5 1-1.5-1-1.5 1-1.5 0-1.5 1-1.5-3-1.5 3-1.5-1-1.5 1-1.5-1-1.5 2-1.5-1-1.5 1-1.5-1-1.5 2-1.5-1-1.5 1-1.5-1-1.5 1-1.5-1-1.5 2-1.5-3-1.5 3-1.5-3-1.5 3-1.5-2-1.5 2-1.5-1-1.5 1-1.5 0-1.5 0-1.5-1-1.5 1-1.5 0-1.5 0-1.5-2-1.5 2-1.5-2-1.5 2-1.5-2-1.5 1-1.5 0-1.5 1-1.5-3-1.5 2-1.5-1-1.5 1-1.5-3-1.5 3-1.5-2-1.5 2-1.5-1-1.5 0-1.5 0-1.5 0-1.5 0-1.5-1-1.5 0-1.5 0-1.5-2-1.5 2-1.5 0-1.5 0-1.5-1-1.5 0-1.5 0-1.5 0-1.5-2-1.5 2-1.5-2-1.5 2-1.5-3-1.5 2-1.5-1-1.5 0-1.5-2-1.5 1-1.5-2-1.5 0-1.5-1-1.5 0-1.5-1-1.5 0-1.5-1-1.5 2-1.5 1-1.5 3-1.5 0-1.5 4-1.5-2-1.5 6-1.5-3-1.5 6-1.5-1-1.5 4-1.5-1-1.5 3-1.5-2-1.5 5-1.5-4-1.5 9-1.5-1-1.5 2-1.5-3-1.5 9-1.5-10-1.5 13-1.5-7-1.5 9-1.5-5-1.5 10-1.5-17-1.5 16-1.5-10-1.5 15-1.5-9-1.5 8-1.5-11-1.5 19-1.5-9-1.5 6-1.5-2-1.5 8-1.5-5-1.5 8-1.5-12-1.5 12-1.5-16-1.5 11-1.5-1-1.5 6-1.5-11-1.5 11-1.5-12-1.5 9-1.5-3-1.5 7-1.5-17-1.5 13-1.5-4-1.5 8-1.5-18-1.5 18-1.5-5-1.5 3-1.5-13-1.5 19-1.5-9-1.5 10-1.5-14-1.5 9-1.5-4-1.5 7-1.5-3-1.5 9-1.5-17-1.5 10-1.5-4-1.5 6-1.5-17-1.5 18-1.5-4-1.5 7-1.5-8-1.5 15-1.5-6-1.5 8-1.5-19-1.5 15-1.5-12-1.5 12-1.5-8-1.5 21-1.5-13-1.5 12-1.5-10-1.5 11-1.5-7-1.5 4-1.5-9-1.5 11-1.5-8-1.5 20-1.5-21-1.5 22-1.5-15-1.5 8-1.5-5-1.5 1-1.5-6-1.5 13-1.5-16-1.5 15-1.5-21-1.5 10-1.5-9-1.5 8-1.5-15-1.5 17-1.5-23-1.5 9-1.5-3-1.5 4-1.5-15-1.5 23-1.5-13-1.5 9-1.5-18-1.5 18-1.5-15-1.5 14-1.5-6-1.5 8-1.5-6-1.5 14-1.5-19-1.5 13-1.5-3-1.5 13-1.5-5-1.5 14-1.5-25-1.5 21-1.5-20-1.5 25-1.5-29-1.5 24-1.5-21-1.5 28-1.5-13-1.5 13-1.5-25-1.5 22-1.5-18-1.5 18-1.5-10-1.5 6-1.5-18-1.5 25-1.5-12-1.5 19-1.5-22-1.5 13-1.5-12-1.5 17-1.5-24-1.5 26-1.5-15-1.5 16-1.5-23-1.5 20-1.5-28-1.5 13-1.5-5-1.5-2-1.5-23-1.5 16-1.5-7-1.5 0-1.5-18-1.5 10-1.5-15-1.5 7-1.5-6-1.5 4-1.5-13-1.5 7-1.5-15-1.5 10-1.5-13-1.5 15-1.5-13-1.5 11-1.5-5-1.5 7-1.5-9-1.5 6-1.5-3-1.5 14-1.5-9-1.5 11-1.5-5-1.5 7-1.5-5-1.5 11-1.5-11-1.5 18-1.5-12-1.5 14-1.5-10-1.5 26-1.5-25-1.5 31-1.5-11-1.5 14-1.5-14-1.5 21-1.5-14-1.5 14-1.5-6-1.5 3-1.5-19-1.5 32-1.5-13-1.5 20-1.5-16-1.5 11-1.5-24-1.5 12-1.5-5-1.5 0-1.5-8-1.5 16-1.5-31-1.5 25-1.5-15-1.5 5-1.5-14-1.5 14-1.5-26-1.5 20-1.5-16-1.5 7-1.5-8-1.5 12-1.5-15-1.5 3-1.5-14-1.5 5-1.5-20-1.5 4-1.5-7-1.5-4-1.5-14-1.5 2-1.5-8-1.5 1-1.5-7-1.5 0-1.5-3-1.5 2-1.5 1-1.5 3-1.5-2-1.5 8-1.5-1-1.5 3-1.5 1-1.5 4-1.5-1-1.5 6-1.5 4-1.5 12-1.5 1-1.5 10-1.5-8-1.5 20-1.5-10-1.5 16-1.5 0-1.5 17-1.5-10-1.5 15-1.5-3-1.5 5-1.5-5-1.5 14-1.5-17-1.5 12-1.5-11-1.5 13-1.5-28-1.5 23-1.5-35-1.5 38-1.5-17-1.5 10-1.5-8-1.5 21-1.5-15-1.5 14-1.5-15-1.5 14-1.5-6-1.5-5-1.5-17-1.5 10-1.5-14-1.5 14-1.5-15-1.5 5-1.5-23-1.5 8-1.5-17-1.5 3-1.5-17-1.5 2-1.5-13-1.5 6-1.5-12-1.5 4-1.5-8-1.5-1-1.5-5-1.5-2-1.5 1-1.5 1-1.5 1-1.5 3-1.5-2-1.5 3-1.5-2-1.5 5-1.5-2-1.5 7-1.5-5-1.5 4-1.5 0-1.5 8-1.5 3-1.5 5-1.5-4-1.5 17-1.5-16-1.5 22-1.5-13-1.5 20-1.5-18-1.5 20-1.5-10-1.5 26-1.5-12-1.5 14-1.5-7-1.5 9-1.5-24-1.5 28-1.5-38-1.5 26-1.5-12-1.5 15-1.5-22-1.5 10-1.5-21-1.5 21-1.5-7-1.5 15-1.5-8-1.5 6-1.5-11-1.5 11-1.5-19-1.5 23-1.5-6-1.5 1-1.5-19-1.5 13-1.5-12-1.5 4-1.5-23-1.5 20-1.5-20-1.5 8-1.5-17-1.5 17-1.5-11-1.5 12-1.5-15-1.5 16-1.5-7-1.5 7-1.5-9-1.5 5-1.5 1-1.5 8-1.5-8-1.5 9-1.5-10-1.5 16-1.5-21-1.5 22-1.5-2-1.5 11-1.5-19-1.5 36-1.5-10-1.5 3-1.5-14-1.5 33-1.5-19-1.5 15-1.5-8-1.5 24-1.5-42-1.5 47-1.5-35-1.5 33-1.5-9-1.5 5-1.5-22-1.5 35-1.5-35-1.5 21-1.5-4-1.5 23-1.5-39-1.5 22-1.5 1-1.5 2-1.5-7-1.5 18-1.5-19-1.5 11-1.5-2-1.5 14-1.5-34-1.5 38-1.5-39-1.5 39-1.5-31-1.5 21-1.5-47-1.5 50-1.5-35-1.5 25-1.5-20-1.5 19-1.5-6-1.5 26-1.5-52-1.5 48-1.5-19-1.5 10-1.5-16-1.5 23-1.5-38-1.5 27-1.5-20-1.5 14-1.5-11-1.5 13-1.5-26-1.5 29-1.5-35-1.5 29-1.5-16-1.5 26-1.5-33-1.5 23-1.5-4-1.5 7-1.5-17-1.5 26-1.5-24-1.5 16-1.5-28-1.5 13-1.5-17-1.5 20-1.5-26-1.5 25-1.5-11-1.5 4-1.5-17-1.5 23-1.5-22-1.5 19-1.5-41-1.5 46-1.5-39-1.5 31-1.5-18-1.5 24-1.5-35-1.5 17-1.5-24-1.5 31-1.5-17-1.5-4-1.5-23-1.5 24-1.5-24-1.5 15-1.5-6-1.5 1-1.5-18-1.5 16-1.5-19-1.5 18-1.5-18-1.5 13-1.5-4-1.5 11-1.5-13-1.5 6-1.5-6-1.5 12-1.5-13-1.5 13-1.5-3-1.5 9-1.5-22-1.5 22-1.5-15-1.5 25-1.5-22-1.5 30-1.5-22-1.5 25-1.5-20-1.5 17-1.5-11-1.5 15-1.5-17-1.5 38-1.5-24-1.5 15-1.5-8-1.5 17-1.5-28-1.5 29-1.5-29-1.5 24-1.5-30-1.5 17-1.5-19-1.5 18-1.5-34-1.5 31-1.5-20-1.5 22-1.5-34-1.5 24-1.5-28-1.5 26-1.5-23-1.5 27-1.5-34-1.5 26-1.5-17-1.5 5-1.5-10-1.5 8-1.5-19-1.5 14-1.5-12-1.5 0-1.5-8-1.5 4-1.5-12-1.5 3-1.5-2-1.5 4-1.5-3-1.5 4-1.5-3-1.5 8-1.5-3-1.5 6-1.5-3-1.5 16-1.5-5-1.5 12-1.5-13-1.5 19-1.5-18-1.5 22-1.5-8-1.5 17-1.5 2-1.5 11-1.5-11-1.5 33-1.5-32-1.5 28-1.5-35-1.5 42-1.5-32-1.5 47-1.5-38-1.5 43-1.5-52-1.5 48-1.5-43-1.5 58-1.5-29-1.5 22-1.5-8-1.5 10-1.5-3-1.5 21-1.5-38-1.5 14-1.5-9-1.5 21-1.5-21-1.5-1-1.5-27-1.5 40-1.5-36-1.5 33-1.5-29-1.5 27-1.5-37-1.5 58-1.5-45-1.5 48-1.5-70-1.5 47-1.5-11-1.5 26-1.5-50-1.5 30-1.5-29-1.5 31-1.5-47-1.5 55-1.5-20-1.5-3-1.5-21-1.5 45-1.5-57-1.5 45-1.5-27-1.5 27-1.5-27-1.5 31-1.5-48-1.5 38-1.5-43-1.5 41-1.5-21-1.5 37-1.5-47-1.5 38-1.5-26-1.5 10-1.5-20-1.5 29-1.5-23-1.5 8-1.5-22-1.5 25-1.5-13-1.5 34-1.5-20-1.5 21-1.5-33-1.5 38-1.5-52-1.5 37-1.5-30-1.5 46-1.5-43-1.5 24-1.5-25-1.5 32-1.5-47-1.5 34-1.5-17-1.5 13-1.5-43-1.5 27-1.5-38-1.5 23-1.5-19-1.5 5-1.5-16-1.5 16-1.5-18-1.5 12-1.5-9-1.5 7-1.5-19-1.5 14-1.5-17-1.5 16-1.5-16-1.5 11-1.5-9-1.5 14-1.5-7-1.5 6-1.5-12-1.5 15-1.5-5-1.5 12-1.5-8-1.5 12-1.5-8-1.5 6-1.5-16-1.5 18-1.5-19-1.5 32-1.5-11-1.5 16-1.5-7-1.5 15-1.5-31-1.5 43-1.5-29-1.5 39-1.5-28-1.5 26-1.5-22-1.5 43-1.5-48-1.5 37-1.5-26-1.5 25-1.5-34-1.5 35-1.5-43-1.5 44-1.5-24-1.5 25-1.5-31-1.5 23-1.5-8-1.5 20-1.5-24-1.5 22-1.5-46-1.5 27-1.5-22-1.5 33-1.5-29-1.5 26-1.5-47-1.5 45-1.5-35-1.5 22-1.5-22-1.5 6-1.5-8-1.5 12-1.5-13-1.5 4-1.5-11-1.5 16-1.5-31-1.5 16-1.5-3-1.5 0-1.5-12-1.5 11-1.5-7-1.5 4-1.5-14-1.5 13-1.5-9-1.5 11-1.5-9-1.5-1-1.5-12-1.5 13-1.5-14-1.5 5-1.5-6-1.5 1-1.5-11-1.5 0-1.5-9-1.5 0-1.5-2-1.5 1-1.5-3-1.5 1-1.5-1-1.5 1-1.5-1-1.5 0-1.5 0-1.5 0-1.5 1-1.5 0-1.5 0-1.5 1-1.5 0-1.5 1-1.5-1-1.5 1-1.5 0-1.5 1-1.5 0-1.5 1-1.5 0-1.5 0-1.5-1-1.5 2-1.5 0-1.5 0-1.5 0-1.5 0-1.5 1-1.5 1-1.5-2-1.5 2-1.5-1-1.5 1-1.5-1-1.5 1-1.5 1-1.5-1-1.5 1-1.5 1-1.5-3-1.5 3-1.5 0-1.5 0-1.5 0-1.5 1-1.5 0-1.5 0-1.5-2-1.5 2-1.5 0-1.5 1-1.5-2-1.5 3-1.5-1-1.5 1-1.5-2-1.5 1-1.5-1-1.5 2-1.5-1-1.5 2-1.5-1-1.5 0-1.5 0-1.5 1-1.5-2-1.5 2-1.5 0-1.5 0-1.5 0-1.5 0-1.5-3-1.5 2-1.5 0-1.5 0-1.5-1-1.5 0-1.5 1-1.5 0-1.5-2-1.5 1-1.5-1-1.5 1-1.5 0-1.5 0-1.5-1-1.5 1-1.5-2-1.5 2-1.5-3-1.5 2-1.5-1-1.5 0-1.5 0-1.5-1-1.5-2-1.5 4-1.5-1-1.5 0-1.5-2-1.5 2-1.5-2-1.5 1-1.5 0-1.5 0-1.5-1-1.5 1-1.5-2-1.5 1-1.5 0-1.5 0-1.5-2-1.5 1-1.5 0-1.5 1-1.5 0-1.5 0-1.5-1-1.5 1-1.5 0-1.5 1-1.5-1-1.5 2-1.5-1-1.5 1-1.5 0-1.5 1-1.5-1-1.5 2-1.5-2-1.5 2-1.5 0-1.5 0-1.5 1-1.5 0-1.5-1-1.5 2-1.5-2-1.5 3-1.5 0-1.5 0-1.5-1-1.5 4-1.5-2-1.5 5-1.5 0-1.5 3-1.5-4-1.5 6-1.5-4-1.5 8-1.5-4-1.5 2-1.5-8-1.5 6-1.5-6-1.5 6-1.5 1-1.5 4-1.5-8-1.5 6-1.5-2-1.5 0-1.5-7-1.5 13-1.5-10-1.5 11-1.5-16-1.5 15-1.5-13-1.5 15-1.5-5-1.5 2-1.5-5-1.5 11-1.5-14-1.5 15-1.5-15-1.5 19-1.5-16-1.5 8-1.5-12-1.5 13-1.5-8-1.5 5-1.5-11-1.5 10-1.5-13-1.5 14-1.5-7-1.5 7-1.5-10-1.5 4-1.5-9-1.5 9-1.5-7-1.5 8-1.5-9-1.5 8-1.5-9-1.5 12-1.5-3-1.5 1-1.5-7-1.5 11-1.5-6-1.5 10-1.5-5-1.5 2-1.5-3-1.5 9-1.5-5-1.5 5-1.5-9-1.5 10-1.5-15-1.5 13-1.5-3-1.5 3-1.5-10-1.5 15-1.5-17-1.5 16-1.5-13-1.5 15-1.5-18-1.5 13-1.5-10-1.5 10-1.5-11-1.5 17-1.5-15-1.5 12-1.5-6-1.5 8-1.5-9-1.5 8-1.5-7-1.5 10-1.5-9-1.5 4-1.5 0-1.5 3-1.5-3-1.5 2-1.5-9-1.5 10-1.5-11-1.5 10-1.5-5-1.5 8-1.5-6-1.5 2-1.5-10-1.5 13-1.5-12-1.5 10-1.5-8-1.5 9-1.5-5-1.5 3-1.5-4-1.5 9-1.5-13-1.5 13-1.5-7-1.5 7-1.5-11-1.5 10-1.5-13-1.5 13-1.5-14-1.5 14-1.5-9-1.5 8-1.5-8-1.5 10-1.5-9-1.5 10-1.5-6-1.5 9-1.5-7-1.5 4-1.5-13-1.5 16-1.5-9-1.5 7-1.5-4-1.5 9-1.5-18-1.5 19-1.5-16-1.5 14-1.5-17-1.5 19-1.5-8-1.5 9-1.5-9-1.5 6-1.5-16-1.5 23-1.5-10-1.5 10-1.5-10-1.5 7-1.5-5-1.5 11-1.5-14-1.5 8-1.5 3-1.5 8-1.5-19-1.5 11-1.5 3-1.5 11-1.5-7-1.5 4-1.5-10-1.5 11-1.5-19-1.5 21-1.5-11-1.5 7-1.5-3-1.5-1-1.5 1-1.5 5-1.5-18-1.5 19-1.5-12-1.5 10-1.5-10-1.5 9-1.5-14-1.5 12-1.5-15-1.5 18-1.5-8-1.5 4-1.5-2-1.5 5-1.5-6-1.5 9-1.5-7-1.5 8-1.5-12-1.5 12-1.5-18-1.5 20-1.5-15-1.5 19-1.5-9-1.5 9-1.5-11-1.5 15-1.5-12-1.5 5-1.5-5-1.5 10-1.5-7-1.5 8-1.5-16-1.5 21-1.5-15-1.5 8-1.5-8-1.5 5-1.5-16-1.5 21-1.5-13-1.5 13-1.5-10-1.5 4-1.5-2-1.5 1-1.5-7-1.5 12-1.5-9-1.5 13-1.5-17-1.5 10-1.5 2-1.5 2-1.5-22-1.5 23-1.5-18-1.5 22-1.5-4-1.5 12-1.5-24-1.5 17-1.5-7-1.5 12-1.5-10-1.5 15-1.5-13-1.5 15-1.5-12-1.5 7-1.5-18-1.5 26-1.5-36-1.5 36-1.5-31-1.5 32-1.5-27-1.5 14-1.5-6-1.5 2-1.5 1-1.5-1-1.5-4-1.5 3-1.5-7-1.5 7-1.5-21-1.5 23-1.5-18-1.5 23-1.5-17-1.5 14-1.5-15-1.5 16-1.5-15-1.5 28-1.5-24-1.5 35-1.5-30-1.5 27-1.5-20-1.5 46-1.5-42-1.5 23-1.5-21-1.5 20-1.5-39-1.5 25-1.5-18-1.5-1-1.5-28-1.5 29-1.5-24-1.5 22-1.5-9-1.5 4-1.5-3-1.5 14-1.5-24-1.5 34-1.5-12-1.5 30-1.5-29-1.5 38-1.5-20-1.5 9-1.5-14-1.5 9-1.5-39-1.5 12-1.5-7-1.5 17-1.5-2-1.5 9-1.5-17-1.5 23-1.5-34-1.5 21-1.5-17-1.5 6-1.5-29-1.5 23-1.5-12-1.5 14-1.5-1-1.5 9-1.5-6-1.5 13-1.5-19-1.5 15-1.5-29-1.5 17-1.5-23-1.5 24-1.5-23-1.5 8-1.5-10-1.5 8-1.5-10-1.5 7-1.5-17-1.5 12-1.5-10-1.5-2-1.5-11-1.5 3-1.5-10-1.5 0-1.5-11-1.5-8-1.5-2-1.5 1-1.5-2-1.5 1-1.5-2-1.5 0-1.5-1-1.5 0-1.5-1-1.5 0-1.5-1-1.5 0-1.5-1-1.5 0Z" fill="url(#wfill)" opacity="0.26"/><path d="M343 1036l1.5 0 1.5 0 1.5 0 1.5-2 1.5 1 1.5-2 1.5 1 1.5-2 1.5 1 1.5-1 1.5 0 1.5-2 1.5 1 1.5-1 1.5-6 1.5-25 1.5 3 1.5-13 1.5 12 1.5-17 1.5 5 1.5-22 1.5 22 1.5-24 1.5 12 1.5-28 1.5 31 1.5-39 1.5 23 1.5-19 1.5 21 1.5-21 1.5 26 1.5-29 1.5 21 1.5-46 1.5 41 1.5-22 1.5 20 1.5-17 1.5 43 1.5-39 1.5 41 1.5-47 1.5 34 1.5-49 1.5 33 1.5-36 1.5 44 1.5-34 1.5 42 1.5-32 1.5 37 1.5-48 1.5 32 1.5-64 1.5 42 1.5-61 1.5 23 1.5-1 1.5 41 1.5-44 1.5 81 1.5-53 1.5 41 1.5-25 1.5 18 1.5-9 1.5 8 1.5-35 1.5 48 1.5-30 1.5 17 1.5-17 1.5 37 1.5-56 1.5 46 1.5-74 1.5 63 1.5-59 1.5 49 1.5-53 1.5 32 1.5-6 1.5 26 1.5-25 1.5 50 1.5-23 1.5 17 1.5-17 1.5 22 1.5-20 1.5 31 1.5-27 1.5 43 1.5-21 1.5 9 1.5-21 1.5 27 1.5-25 1.5 28 1.5-45 1.5 37 1.5-31 1.5 41 1.5-47 1.5 32 1.5-23 1.5 12 1.5-12 1.5 33 1.5-24 1.5 9 1.5-26 1.5 33 1.5-23 1.5 31 1.5-38 1.5 33 1.5-29 1.5 26 1.5-22 1.5 12 1.5-25 1.5 35 1.5-31 1.5 23 1.5-5 1.5 7 1.5-11 1.5 20 1.5-36 1.5 42 1.5-19 1.5 23 1.5-29 1.5 11 1.5-17 1.5 22 1.5-35 1.5 33 1.5-30 1.5 27 1.5-35 1.5 28 1.5-35 1.5 39 1.5-36 1.5 32 1.5-16 1.5 13 1.5-35 1.5 44 1.5-37 1.5 44 1.5-44 1.5 46 1.5-42 1.5 42 1.5-46 1.5 24 1.5-22 1.5 43 1.5-31 1.5 32 1.5-32 1.5 38 1.5-32 1.5 28 1.5-44 1.5 29 1.5-30 1.5 40 1.5-28 1.5 22 1.5-19 1.5 31 1.5-24 1.5 6 1.5-21 1.5 42 1.5-18 1.5 7 1.5-11 1.5 27 1.5-26 1.5 18 1.5-24 1.5 21 1.5-6 1.5 14 1.5-19 1.5 28 1.5-21 1.5 12 1.5-3 1.5 7 1.5-13 1.5 19 1.5-15 1.5 15 1.5-6 1.5 11 1.5-11 1.5 11 1.5-14 1.5 20 1.5-19 1.5 13 1.5-10 1.5 18 1.5-12 1.5 13 1.5-10 1.5 12 1.5-11 1.5 7 1.5-9 1.5 13 1.5-8 1.5 2 1.5-7 1.5 6 1.5 0 1.5 4 1.5-5 1.5 5 1.5-9 1.5 8 1.5-15 1.5 17 1.5-18 1.5 11 1.5-10 1.5 3 1.5-3 1.5 13 1.5-20 1.5 15 1.5-21 1.5 21 1.5-17 1.5 20 1.5-32 1.5 16 1.5-13 1.5 21 1.5-26 1.5 32 1.5-34 1.5 23 1.5-11 1.5 3 1.5-5 1.5 11 1.5-24 1.5 26 1.5-9 1.5 15 1.5-19 1.5 19 1.5-20 1.5 13 1.5-11 1.5 13 1.5-10 1.5 19 1.5-15 1.5 10 1.5-11 1.5 14 1.5-8 1.5 12 1.5-12 1.5 11 1.5-16 1.5 19 1.5-17 1.5 9 1.5-1 1.5 7 1.5-6 1.5 12 1.5-12 1.5 18 1.5-26 1.5 26 1.5-18 1.5 19 1.5-18 1.5 19 1.5-17 1.5 7 1.5-5 1.5 6 1.5-11 1.5 11 1.5-4 1.5 11 1.5-18 1.5 20 1.5-18 1.5 14 1.5-18 1.5 18 1.5-13 1.5 10 1.5-10 1.5 17 1.5-19 1.5 8 1.5-11 1.5 17 1.5-16 1.5 14 1.5-13 1.5 11 1.5-15 1.5 17 1.5-17 1.5 19 1.5-17 1.5 13 1.5-11 1.5 18 1.5-19 1.5 17 1.5-13 1.5 8 1.5-7 1.5 9 1.5-10 1.5 5 1.5-13 1.5 13 1.5-5 1.5 11 1.5-12 1.5 16 1.5-9 1.5 7 1.5-8 1.5 15 1.5-14 1.5 10 1.5-8 1.5 12 1.5-13 1.5 11 1.5-9 1.5 12 1.5-12 1.5 10 1.5-13 1.5 13 1.5-13 1.5 8 1.5-10 1.5 13 1.5-8 1.5 6 1.5-9 1.5 6 1.5-5 1.5 7 1.5-7 1.5 6 1.5-5 1.5 8 1.5-5 1.5 3 1.5-3 1.5 1 1.5-1 1.5 4 1.5-3 1.5 4 1.5-2 1.5 3 1.5-2 1.5 0 1.5 0 1.5 4 1.5-3 1.5 1 1.5-1 1.5 1 1.5-1 1.5 3 1.5-2 1.5 3 1.5-2 1.5 2 1.5-2 1.5 0 1.5 1 1.5 0 1.5 0 1.5 1 1.5-1 1.5 1 1.5-1 1.5 0 1.5-1 1.5 0 1.5 1 1.5-1 1.5-1 1.5 0 1.5 0 1.5 3 1.5-3 1.5 2 1.5-2 1.5 1 1.5-2 1.5 3 1.5-4 1.5 1 1.5-1 1.5 2 1.5-2 1.5 1 1.5-1 1.5-1 1.5 0 1.5 0 1.5 0 1.5 0 1.5 2 1.5 1 1.5-4 1.5 3 1.5-3 1.5 3 1.5-2 1.5 2 1.5-3 1.5 5 1.5-5 1.5 2 1.5-2 1.5 2 1.5-1 1.5 0 1.5-2 1.5 1 1.5 1 1.5 2 1.5-2 1.5 1 1.5-2 1.5 1 1.5 1 1.5 1 1.5 0 1.5 0 1.5-1 1.5 2 1.5-2 1.5 4 1.5-3 1.5 2 1.5-2 1.5 4 1.5-3 1.5 2 1.5-2 1.5 0 1.5 0 1.5 3 1.5-2 1.5 0 1.5 0 1.5 0 1.5 0 1.5 4 1.5-4 1.5 1 1.5-1 1.5 2 1.5-1 1.5 1 1.5-1 1.5 1 1.5 0 1.5 1 1.5 0 1.5 0 1.5 0 1.5 0 1.5 1 1.5 1 1.5-1 1.5 1 1.5 0 1.5 1 1.5 0 1.5 2 1.5-1 1.5 1 1.5 0 1.5 1 1.5 0 1.5 1 1.5-1 1.5 1 1.5-1 1.5 1 1.5-2 1.5 1 1.5-2 1.5 2 1.5-1 1.5 1 1.5-3 1.5 1 1.5-7 1.5-1 1.5-13 1.5 8 1.5-20 1.5 14 1.5-19 1.5 18 1.5-8 1.5 1 1.5-14 1.5 22 1.5-17 1.5 17 1.5-20 1.5 12 1.5-8 1.5 13 1.5-10 1.5 20 1.5-22 1.5 18 1.5-32 1.5 29 1.5-20 1.5 12 1.5-21 1.5 7 1.5-29 1.5 20 1.5-31 1.5 42 1.5-58 1.5 59 1.5-60 1.5 34 1.5-36 1.5 62 1.5-53 1.5 48 1.5-89 1.5 85 1.5-53 1.5 18 1.5-49 1.5 44 1.5-29 1.5 50 1.5-41 1.5 52 1.5-68 1.5 53 1.5-52 1.5 35 1.5-14 1.5 49 1.5-72 1.5 64 1.5-38 1.5 50 1.5-46 1.5 61 1.5-32 1.5 30 1.5-21 1.5 16 1.5-14 1.5 35 1.5-23 1.5 20 1.5-10 1.5 14 1.5-22 1.5 27 1.5-18 1.5 14 1.5-13 1.5 13 1.5-11 1.5 15 1.5-15 1.5 9 1.5-17 1.5 21 1.5-21 1.5 15 1.5-7 1.5 8 1.5-15 1.5 14 1.5-25 1.5 19 1.5-26 1.5 34 1.5-22 1.5 11 1.5-17 1.5 13 1.5-28 1.5 20 1.5-34 1.5 36 1.5-42 1.5 38 1.5-37 1.5 30 1.5-28 1.5 22 1.5-41 1.5 48 1.5-28 1.5 12 1.5-43 1.5 64 1.5-74 1.5 55 1.5-37 1.5 26 1.5-43 1.5 63 1.5-31 1.5 37 1.5-56 1.5 49 1.5-37 1.5 28 1.5-51 1.5 37 1.5-32 1.5 65 1.5-60 1.5 53 1.5-34 1.5 39 1.5-39 1.5 50 1.5-70 1.5 67 1.5-66 1.5 39 1.5-37 1.5 51 1.5-31 1.5 34 1.5-33 1.5 15 1.5-24 1.5 28 1.5-29 1.5 8 1.5-17 1.5 40 1.5-60 1.5 40 1.5-24 1.5 32 1.5-74 1.5 68 1.5-51 1.5 82 1.5-71 1.5 31 1.5-17 1.5 48 1.5-63 1.5 69 1.5-63 1.5 32 1.5-69 1.5 52 1.5-19 1.5 35 1.5-45 1.5 79 1.5-97 1.5 89 1.5-82 1.5 85 1.5-46 1.5 20 1.5-12 1.5 39 1.5-45 1.5 35 1.5-50 1.5 45 1.5-29 1.5 59 1.5-47 1.5 41 1.5-53 1.5 63 1.5-30 1.5 22 1.5-13 1.5 24 1.5-17 1.5 29 1.5-20 1.5 12 1.5-9 1.5 22 1.5-21 1.5 17 1.5-12 1.5 22 1.5-11 1.5 14 1.5-9 1.5 5 1.5-5 1.5 8 1.5-8 1.5 2 1.5-11 1.5 16 1.5-12 1.5 7 1.5-23 1.5 16 1.5-33 1.5 27 1.5-34 1.5 21 1.5-35 1.5 20 1.5-30 1.5 30 1.5-35 1.5 27 1.5-43 1.5 48 1.5-27 1.5 34 1.5-39 1.5 53 1.5-46 1.5 21 1.5-34 1.5 36 1.5-23 1.5 33 1.5-19 1.5 16 1.5-29 1.5 41 1.5-38 1.5 43 1.5-27 1.5 23 1.5-36 1.5 42 1.5-27 1.5 21 1.5-28 1.5 28 1.5-16 1.5 29 1.5-30 1.5 35 1.5-20 1.5 20 1.5-23 1.5 17 1.5-6 1.5 9 1.5-9 1.5 9 1.5-12 1.5 20 1.5-22 1.5 19 1.5-22 1.5 19 1.5-12 1.5 19 1.5-31 1.5 31 1.5-25 1.5 24 1.5-27 1.5 21 1.5-9 1.5 14 1.5-29 1.5 21 1.5-44 1.5 20 1.5-19 1.5 32 1.5-45 1.5 27 1.5-6 1.5 13 1.5-34 1.5 51 1.5-30 1.5 27 1.5-47 1.5 38 1.5-36 1.5 44 1.5-38 1.5 37 1.5-38 1.5 48 1.5-39 1.5 17 1.5-32 1.5 30 1.5-19 1.5 35 1.5-28 1.5 16 1.5-31 1.5 34 1.5-22 1.5 9 1.5-11 1.5 32 1.5-37 1.5 17 1.5-23 1.5 21 1.5-43 1.5 44 1.5-33 1.5 34 1.5-48 1.5 55 1.5-44 1.5 28 1.5-27 1.5 37 1.5-36 1.5 24 1.5-23 1.5 22 1.5-45 1.5 48 1.5-33 1.5 30 1.5-35 1.5 56 1.5-59 1.5 19 1.5-50 1.5 69 1.5-53 1.5 56 1.5-52 1.5 68 1.5-86 1.5 78 1.5-50 1.5 49 1.5-71 1.5 72 1.5-33 1.5 26 1.5-40 1.5 63 1.5-74 1.5 55 1.5-35 1.5 28 1.5-25 1.5 38 1.5-36 1.5 23 1.5-20 1.5 52 1.5-67 1.5 61 1.5-36 1.5 43 1.5-46 1.5 27 1.5-17 1.5 46 1.5-35 1.5 31 1.5-22 1.5 27 1.5-23 1.5 18 1.5-2 1.5 14 1.5-22 1.5 15 1.5-8 1.5 14 1.5-8 1.5 11 1.5-16 1.5 18 1.5-11 1.5 12 1.5-8 1.5 8 1.5-22 1.5 21 1.5-28 1.5 14 1.5-18 1.5 12 1.5-12 1.5 6 1.5-25 1.5 17 1.5-21 1.5 30 1.5-33 1.5 29 1.5-27 1.5 37 1.5-26 1.5 24 1.5-12 1.5 9 1.5-17 1.5 24 1.5-33 1.5 34 1.5-37 1.5 25 1.5-22 1.5 25 1.5-21 1.5 22 1.5-17 1.5 23 1.5-36 1.5 41 1.5-31 1.5 19 1.5-3 1.5 13 1.5-25 1.5 24 1.5-16 1.5 26 1.5-15 1.5 19 1.5-6 1.5 8 1.5-4 1.5 7 1.5-4 1.5 6 1.5-3 1.5 7 1.5-4 1.5 4 1.5-3 1.5 5 1.5-1 1.5 2 1.5 0 1.5-1 1.5-4 1.5 1 1.5-10 1.5 6 1.5-12 1.5 7 1.5-13 1.5 5 1.5-34 1.5 12 1.5-31 1.5 21 1.5-29 1.5 16 1.5-24 1.5 27 1.5-44 1.5 44 1.5-45 1.5 17 1.5-34 1.5 39 1.5-35 1.5 40 1.5-37 1.5 30 1.5-33 1.5 40 1.5-42 1.5 48 1.5-31 1.5 27 1.5-31 1.5 46 1.5-35 1.5 29 1.5-28 1.5 15 1.5-32 1.5 52 1.5-43 1.5 43 1.5-30 1.5 32 1.5-19 1.5 23 1.5-32 1.5 34 1.5-7 1.5 25 1.5-13 1.5 25 1.5-9 1.5 15 1.5-3 1.5 6 1.5 0 1.5 7 1.5-7 1.5 10 1.5-4 1.5 4 1.5-1 1.5 4 1.5-4 1.5 2 1.5-10 1.5 4 1.5-11 1.5 4 1.5-13 1.5-3 1.5-26 1.5 19 1.5-26 1.5 22 1.5-57 1.5 30 1.5-23 1.5 35 1.5-56 1.5 48 1.5-55 1.5 45 1.5-21 1.5 36 1.5-58 1.5 54 1.5-48 1.5 52 1.5-46 1.5 54 1.5-41 1.5 14 1.5-31 1.5 32 1.5-20 1.5 40 1.5-51 1.5 39 1.5-33 1.5 45 1.5-40 1.5 45 1.5-42 1.5 29 1.5-19 1.5 23 1.5-19 1.5 28 1.5-23 1.5 28 1.5-40 1.5 31 1.5-25 1.5 35 1.5-22 1.5 36 1.5-32 1.5 18 1.5-15 1.5 35 1.5-24 1.5 23 1.5-12 1.5 15 1.5-9 1.5 14 1.5-8 1.5 6 1.5-6 1.5 13 1.5-22 1.5 17 1.5-14 1.5 5 1.5-4 1.5 7 1.5-29 1.5 20 1.5-27 1.5 9 1.5-16 1.5 8 1.5-30 1.5 25 1.5-24 1.5 11 1.5-23 1.5 23 1.5-35 1.5 46 1.5-58 1.5 63 1.5-52 1.5 25 1.5-15 1.5 35 1.5-23 1.5 41 1.5-55 1.5 25 1.5-36 1.5 39 1.5-33 1.5 50 1.5-22 1.5 7 1.5-14 1.5 38 1.5-58 1.5 40 1.5-40 1.5 50 1.5-32 1.5 30 1.5-38 1.5 56 1.5-49 1.5 33 1.5-36 1.5 42 1.5-24 1.5 23 1.5-17 1.5 25 1.5-18 1.5 15 1.5-11 1.5 22 1.5-35 1.5 25 1.5-16 1.5 10 1.5-25 1.5 33 1.5-37 1.5 21 1.5-14 1.5 18 1.5-37 1.5 38 1.5-48 1.5 48 1.5-36 1.5 18 1.5-17 1.5 21 1.5-45 1.5 49 1.5-51 1.5 60 1.5-61 1.5 37 1.5-50 1.5 71 1.5-60 1.5 36 1.5-25 1.5 45 1.5-65 1.5 39 1.5-18 1.5 18 1.5-31 1.5 55 1.5-44 1.5 59 1.5-40 1.5 20 1.5-40 1.5 41 1.5-23 1.5 10 1.5-31 1.5 42 1.5-19 1.5 39 1.5-56 1.5 29 1.5-29 1.5 46 1.5-21 1.5 32 1.5-49 1.5 44 1.5-31 1.5 22 1.5-20 1.5 41 1.5-20 1.5 17 1.5-16 1.5 9 1.5-24 1.5 31 1.5-6 1.5 19 1.5-23 1.5 24 1.5-31 1.5 24 1.5-23 1.5 29 1.5-9 1.5 6 1.5-8 1.5 13 1.5-20 1.5 24 1.5-12 1.5 6 1.5-12 1.5 10 1.5-13 1.5 12 1.5-19 1.5 25 1.5-24 1.5 18 1.5-12 1.5 15 1.5-18 1.5 17 1.5-10 1.5 13 1.5-18 1.5 20 1.5-16 1.5 26 1.5-21 1.5 13 1.5-10 1.5 14 1.5-15 1.5 15 1.5-7 1.5 14 1.5-24 1.5 22 1.5-11 1.5 7 1.5-9 1.5 17 1.5-16 1.5 18 1.5-9 1.5 7 1.5-12 1.5 12 1.5-4 1.5 10 1.5-5 1.5 10 1.5-5 1.5 7 1.5-4 1.5 7 1.5-1 1.5 3 1.5-1 1.5 1 1.5-2 1.5 1 1.5-2 1.5-1 1.5-1 1.5 0 1.5 0 1.5-1 1.5-1 1.5-1 1.5 1 1.5 1 1.5 0 1.5 0 1.5 0 1.5-1 1.5 1 1.5-1 1.5-2 1.5 2 1.5-2 1.5 4 1.5-2 1.5-1 1.5-2 1.5 1 1.5-1 1.5 0 1.5-1 1.5 1 1.5 0 1.5 1 1.5-1 1.5 0 1.5-1 1.5 4 1.5-2 1.5-3 1.5 3 1.5 0 1.5-1 1.5 0 1.5 0 1.5-1 1.5 1 1.5 1 1.5-1 1.5 2 1.5-3 1.5 4 1.5-2 1.5-1 1.5 1 1.5 0 1.5-1 1.5 3 1.5-3 1.5 0 1.5 3 1.5 0 1.5-1 1.5 0 1.5 1 1.5 1 1.5-3 1.5 3 1.5-3 1.5 5 1.5-4 1.5 2 1.5-2 1.5 4 1.5-3 1.5 1 1.5-2 1.5 4 1.5-3 1.5 3 1.5-2 1.5 2 1.5-2 1.5 1 1.5 1 1.5-1 1.5 1 1.5 1 1.5-1 1.5 2 1.5-2 1.5 2 1.5 0 1.5 0 1.5 0 1.5 1 1.5-1 1.5 2 1.5-1 1.5 1 1.5-1 1.5 2 1.5 0 1.5 2 1.5-3 1.5 1 1.5-1 1.5 2 1.5-1 1.5 0 1.5-1 1.5 2 1.5-2 1.5 1 1.5-1 1.5 2 1.5-4 1.5 0 1.5-3 1.5 2 1.5-7 1.5 6 1.5-14 1.5 11 1.5-33 1.5 26 1.5-30 1.5 6 1.5-16 1.5 29 1.5-30 1.5 25 1.5-51 1.5 31 1.5-33 1.5 46 1.5-39 1.5 27 1.5-36 1.5 10 1.5-28 1.5 28 1.5-47 1.5 57 1.5-58 1.5 56 1.5-83 1.5 63 1.5-24 1.5 50 1.5-47 1.5 47 1.5-44 1.5 42 1.5-67 1.5 51 1.5-25 1.5 20 1.5-20 1.5 27 1.5-30 1.5 29 1.5-48 1.5 24 1.5-40 1.5 42 1.5-58 1.5 75 1.5-78 1.5 68 1.5-29 1.5 32 1.5-46 1.5 56 1.5-39 1.5 39 1.5-60 1.5 46 1.5-46 1.5 66 1.5-40 1.5 59 1.5-23 1.5 28 1.5-29 1.5 43 1.5-25 1.5 22 1.5-41 1.5 44 1.5-31 1.5 41 1.5-33 1.5 31 1.5-33 1.5 8 1.5-7 1.5 14 1.5-18 1.5 18 1.5-21 1.5 35 1.5-28 1.5 11 1.5-46 1.5 32 1.5-28 1.5 4 1.5-13 1.5 41 1.5-69 1.5 63 1.5-35 1.5 18 1.5-39 1.5 30 1.5-21 1.5 31 1.5-34 1.5 63 1.5-67 1.5 55 1.5-41 1.5 47 1.5-62 1.5 71 1.5-83 1.5 55 1.5-36 1.5 43 1.5-51 1.5 36 1.5-55 1.5 72 1.5-40 1.5 67 1.5-56 1.5 38 1.5-48 1.5 61 1.5-37 1.5 50 1.5-47 1.5 29 1.5-25 1.5 38 1.5-12 1.5 12 1.5-21 1.5 29 1.5-34 1.5 28 1.5-36 1.5 26 1.5-22 1.5 22 1.5-17 1.5 32 1.5-39 1.5 26 1.5-45 1.5 33 1.5-32 1.5 49 1.5-74 1.5 48 1.5-21 1.5 5 1.5-25 1.5 54 1.5-57 1.5 50 1.5-40 1.5 27 1.5-65 1.5 49 1.5-55 1.5 73 1.5-31 1.5 34 1.5-45 1.5 25 1.5-28 1.5 32 1.5-18 1.5 41 1.5-26 1.5 40 1.5-31 1.5 30 1.5-46 1.5 40 1.5-27 1.5 11 1.5-29 1.5 32 1.5-32 1.5 33 1.5-32 1.5 24 1.5-29 1.5 31 1.5-26 1.5 17 1.5-34 1.5 31 1.5-30 1.5 49 1.5-44 1.5 28 1.5-22 1.5 22 1.5-27 1.5 46 1.5-41 1.5 40 1.5-36 1.5 10 1.5-24 1.5 23 1.5-38 1.5 41 1.5-20 1.5 37 1.5-58 1.5 41 1.5-23 1.5 24 1.5-51 1.5 69 1.5-71 1.5 59 1.5-49 1.5 35 1.5-54 1.5 51 1.5-29 1.5 48 1.5-44 1.5 33 1.5-59 1.5 66 1.5-40 1.5 37 1.5-55 1.5 67 1.5-40 1.5 36 1.5-69 1.5 70 1.5-67 1.5 61 1.5-41 1.5 35 1.5-25 1.5 46 1.5-32 1.5 43 1.5-44 1.5 28 1.5-14 1.5 29 1.5-22 1.5 14 1.5-33 1.5 42 1.5-30 1.5 38 1.5-43 1.5 20 1.5-10 1.5 24 1.5-34 1.5 35 1.5-36 1.5 30 1.5-42 1.5 48 1.5-42 1.5 35 1.5-19 1.5 13 1.5-25 1.5 31 1.5-17 1.5 18 1.5-16 1.5 35 1.5-27 1.5 20 1.5-23 1.5 33 1.5-35 1.5 21 1.5-23 1.5 20 1.5-28 1.5 38 1.5-30 1.5 17 1.5-25 1.5 12 1.5-21 1.5 34 1.5-21 1.5 21 1.5-21 1.5 28 1.5-27 1.5 27 1.5-29 1.5 29 1.5-23 1.5 27 1.5-17 1.5 21 1.5-10 1.5 13 1.5-23 1.5 29 1.5-17 1.5 10 1.5-16 1.5 17 1.5-11 1.5 14 1.5-4 1.5 10 1.5-16 1.5 13 1.5-13 1.5 17 1.5-5 1.5 7 1.5-6 1.5 10 1.5-18 1.5 16 1.5-12 1.5 18 1.5-15 1.5 11 1.5-5 1.5 7 1.5-5 1.5 7 1.5-2 1.5 8 1.5-6 1.5 8 1.5-9 1.5 7 1.5-1 1.5 4 1.5-5 1.5 6 1.5-8 1.5 11 1.5-8 1.5 8 1.5-6 1.5 6 1.5 0 1.5 1 1.5-3 1.5 6 1.5-5 1.5 2 1.5 0 1.5 5 1.5-7 1.5 7 1.5-4 1.5 1 1.5-1 1.5 3 1.5-2 1.5 4 1.5-4 1.5 3 1.5-2 1.5 4 1.5-4 1.5 3 1.5-1 1.5 3 1.5-2 1.5 3 1.5-2 1.5 1 1.5 0 1.5 1 1.5-1 1.5 2 1.5-1 1.5 1 1.5 0 1.5 0 1.5 0 1.5 1 1.5 0 1.5 0 1.5 0 1.5 1 1.5 0 1.5 0 1.5 0 1.5 0 1.5 0 0 1-1.5 0-1.5 0-1.5 0-1.5 0-1.5 0-1.5 1-1.5-1-1.5 1-1.5 0-1.5 1-1.5-1-1.5 1-1.5 0-1.5 0-1.5 0-1.5 1-1.5 0-1.5 2-1.5-1-1.5 1-1.5-1-1.5 2-1.5-1-1.5 2-1.5-3-1.5 3-1.5-3-1.5 5-1.5-3-1.5 4-1.5-4-1.5 3-1.5-1-1.5 1-1.5-1-1.5 4-1.5-5-1.5 6-1.5-4-1.5 4-1.5-6-1.5 7-1.5-5-1.5 4-1.5-4-1.5 3-1.5-4-1.5 9-1.5-7-1.5 7-1.5-8-1.5 5-1.5-3-1.5 6-1.5-3-1.5 5-1.5-4-1.5 6-1.5-4-1.5 5-1.5-5-1.5 5-1.5-9-1.5 10-1.5-8-1.5 12-1.5-11-1.5 15-1.5-15-1.5 13-1.5-10-1.5 11-1.5-10-1.5 15-1.5-10-1.5 6-1.5-11-1.5 19-1.5-6-1.5 5-1.5-13-1.5 11-1.5-8-1.5 20-1.5-19-1.5 15-1.5-19-1.5 28-1.5-16-1.5 8-1.5-10-1.5 15-1.5-15-1.5 24-1.5-28-1.5 31-1.5-15-1.5 15-1.5-19-1.5 20-1.5-19-1.5 31-1.5-25-1.5 35-1.5-23-1.5 16-1.5-19-1.5 10-1.5-4-1.5 3-1.5-7-1.5 19-1.5-33-1.5 34-1.5-20-1.5 15-1.5-21-1.5 18-1.5-31-1.5 33-1.5-26-1.5 24-1.5-33-1.5 24-1.5-16-1.5 20-1.5-10-1.5 11-1.5-33-1.5 37-1.5-34-1.5 29-1.5-11-1.5 7-1.5-19-1.5 24-1.5-20-1.5 11-1.5-5-1.5 10-1.5-12-1.5 17-1.5-29-1.5 22-1.5-18-1.5 28-1.5-36-1.5 41-1.5-20-1.5 12-1.5-15-1.5 20-1.5-20-1.5 25-1.5-9-1.5 9-1.5-26-1.5 43-1.5-26-1.5 22-1.5-43-1.5 45-1.5-18-1.5 8-1.5-27-1.5 33-1.5-24-1.5 28-1.5-29-1.5 29-1.5-41-1.5 32-1.5-31-1.5 20-1.5-8-1.5 11-1.5-16-1.5 6-1.5-26-1.5 34-1.5-17-1.5 16-1.5-21-1.5 17-1.5-26-1.5 23-1.5-18-1.5 23-1.5-34-1.5 26-1.5-12-1.5 15-1.5-18-1.5 11-1.5-13-1.5 23-1.5-24-1.5 16-1.5-14-1.5 17-1.5-9-1.5 16-1.5-13-1.5 16-1.5-20-1.5 27-1.5-15-1.5 20-1.5-40-1.5 41-1.5-30-1.5 18-1.5-27-1.5 22-1.5-8-1.5 23-1.5-19-1.5 23-1.5-37-1.5 31-1.5-25-1.5 34-1.5-29-1.5 32-1.5-32-1.5 16-1.5-7-1.5 13-1.5-17-1.5 42-1.5-64-1.5 35-1.5-34-1.5 35-1.5-46-1.5 35-1.5-34-1.5 40-1.5-25-1.5 14-1.5-22-1.5 21-1.5-25-1.5 26-1.5-23-1.5 9-1.5-17-1.5 13-1.5-14-1.5 23-1.5-39-1.5 34-1.5-29-1.5 22-1.5-9-1.5 13-1.5-30-1.5 39-1.5-32-1.5 15-1.5-12-1.5 28-1.5-28-1.5 27-1.5-32-1.5 38-1.5-33-1.5 26-1.5-16-1.5 24-1.5-11-1.5 32-1.5-48-1.5 64-1.5-44-1.5 29-1.5-27-1.5 62-1.5-61-1.5 32-1.5-34-1.5 29-1.5-33-1.5 55-1.5-47-1.5 57-1.5-74-1.5 60-1.5-62-1.5 74-1.5-47-1.5 51-1.5-58-1.5 64-1.5-55-1.5 20-1.5-23-1.5 25-1.5-29-1.5 39-1.5-52-1.5 60-1.5-63-1.5 21-1.5-37-1.5 28-1.5-26-1.5 22-1.5-21-1.5 24-1.5-35-1.5 25-1.5-12-1.5 6-1.5-21-1.5 36-1.5-21-1.5 11-1.5-18-1.5 15-1.5-25-1.5 36-1.5-20-1.5 9-1.5-7-1.5 26-1.5-25-1.5 40-1.5-26-1.5 37-1.5-23-1.5 8-1.5-29-1.5 51-1.5-35-1.5 42-1.5-55-1.5 61-1.5-64-1.5 53-1.5-30-1.5 25-1.5-41-1.5 36-1.5-50-1.5 45-1.5-36-1.5 52-1.5-57-1.5 60-1.5-41-1.5 41-1.5-63-1.5 55-1.5-33-1.5 17-1.5-34-1.5 17-1.5-28-1.5 39-1.5-27-1.5 16-1.5-22-1.5 29-1.5-24-1.5 6-1.5-22-1.5 27-1.5-19-1.5 15-1.5-26-1.5 23-1.5-22-1.5 10-1.5-22-1.5 14-1.5-8-1.5 10-1.5-18-1.5 18-1.5-11-1.5 20-1.5-25-1.5 10-1.5-14-1.5 3-1.5-7-1.5 4-1.5-7-1.5 3-1.5-4-1.5 1-1.5-2-1.5 1-1.5-3-1.5 3-1.5-2-1.5 2-1.5-2-1.5 2-1.5-1-1.5 1-1.5-1-1.5 1-1.5-2-1.5 2-1.5-1-1.5 3-1.5-2-1.5 1-1.5-1-1.5 2-1.5 0-1.5 1-1.5-3-1.5 3-1.5-1-1.5 1-1.5 0-1.5 1-1.5 1-1.5 0-1.5-3-1.5 4-1.5-2-1.5 0-1.5-1-1.5 2-1.5-1-1.5 0-1.5-1-1.5 4-1.5-2-1.5 2-1.5-3-1.5 3-1.5-1-1.5 2-1.5 1-1.5-1-1.5 1-1.5 0-1.5-3-1.5 2-1.5 0-1.5 2-1.5-2-1.5 2-1.5-1-1.5 2-1.5-1-1.5 1-1.5-3-1.5 3-1.5-1-1.5 1-1.5-1-1.5 1-1.5-5-1.5 3-1.5-2-1.5 4-1.5-3-1.5 3-1.5-3-1.5 3-1.5-2-1.5 0-1.5-1-1.5 1-1.5-4-1.5 5-1.5 0-1.5 0-1.5-1-1.5-1-1.5 0-1.5 0-1.5 1-1.5-1-1.5-1-1.5 2-1.5-2-1.5 1-1.5-2-1.5 2-1.5-1-1.5 1-1.5-4-1.5 2-1.5-2-1.5 3-1.5 0-1.5-1-1.5-1-1.5 2-1.5-1-1.5-1-1.5 0-1.5-2-1.5 0-1.5 0-1.5 0-1.5-2-1.5-1-1.5 1-1.5-3-1.5 1-1.5-1-1.5 3-1.5-1-1.5 1-1.5 1-1.5 2-1.5 0-1.5 1-1.5 2-1.5 1-1.5-2-1.5 8-1.5-7-1.5 9-1.5-7-1.5 9-1.5-9-1.5 11-1.5-11-1.5 16-1.5-13-1.5 15-1.5-13-1.5 13-1.5-9-1.5 11-1.5-8-1.5 8-1.5-10-1.5 13-1.5-5-1.5 8-1.5-8-1.5 6-1.5-7-1.5 14-1.5-19-1.5 19-1.5-16-1.5 10-1.5-8-1.5 14-1.5-13-1.5 9-1.5-14-1.5 15-1.5-11-1.5 16-1.5-15-1.5 11-1.5-14-1.5 19-1.5-21-1.5 17-1.5-5-1.5 14-1.5-25-1.5 20-1.5-14-1.5 19-1.5-23-1.5 22-1.5-14-1.5 17-1.5-22-1.5 21-1.5-24-1.5 34-1.5-32-1.5 31-1.5-25-1.5 19-1.5-22-1.5 23-1.5-3-1.5 5-1.5-23-1.5 27-1.5-15-1.5 33-1.5-27-1.5 29-1.5-21-1.5 8-1.5-29-1.5 45-1.5-25-1.5 6-1.5-7-1.5 13-1.5-23-1.5 26-1.5-33-1.5 42-1.5-30-1.5 25-1.5-18-1.5 33-1.5-40-1.5 22-1.5-18-1.5 23-1.5-16-1.5 12-1.5-28-1.5 31-1.5-22-1.5 24-1.5-9-1.5 12-1.5-16-1.5 29-1.5-37-1.5 24-1.5-29-1.5 34-1.5-36-1.5 28-1.5-27-1.5 24-1.5-31-1.5 31-1.5-35-1.5 24-1.5-16-1.5 25-1.5-29-1.5 31-1.5-32-1.5 13-1.5-20-1.5 36-1.5-14-1.5 17-1.5-27-1.5 36-1.5-21-1.5 20-1.5-20-1.5 15-1.5-14-1.5 32-1.5-48-1.5 42-1.5-27-1.5 23-1.5-41-1.5 56-1.5-30-1.5 22-1.5-49-1.5 48-1.5-44-1.5 31-1.5-11-1.5 26-1.5-35-1.5 19-1.5-20-1.5 27-1.5-30-1.5 17-1.5-8-1.5 21-1.5-23-1.5 9-1.5-12-1.5 7-1.5-22-1.5 32-1.5-28-1.5 15-1.5-29-1.5 24-1.5-22-1.5 19-1.5-27-1.5 14-1.5-5-1.5 1-1.5-16-1.5 21-1.5-14-1.5 8-1.5-12-1.5 1-1.5-5-1.5 10-1.5-16-1.5 11-1.5-6-1.5 10-1.5-10-1.5 11-1.5-10-1.5 18-1.5-12-1.5 19-1.5-24-1.5 20-1.5-10-1.5 24-1.5-22-1.5 30-1.5-36-1.5 46-1.5-25-1.5 26-1.5-22-1.5 45-1.5-33-1.5 24-1.5-28-1.5 33-1.5-44-1.5 41-1.5-23-1.5 17-1.5-36-1.5 47-1.5-46-1.5 52-1.5-32-1.5 25-1.5-26-1.5 7-1.5-10-1.5 19-1.5-32-1.5 16-1.5-7-1.5 9-1.5-12-1.5 16-1.5-33-1.5 30-1.5-36-1.5 44-1.5-42-1.5 31-1.5-17-1.5 23-1.5-34-1.5 9-1.5-9-1.5 11-1.5-21-1.5 4-1.5-14-1.5 2-1.5-15-1.5 1-1.5-5-1.5 2-1.5-6-1.5 0-1.5-3-1.5 2-1.5 1-1.5 3-1.5-3-1.5 6-1.5-1-1.5 6-1.5-5-1.5 5-1.5-2-1.5 14-1.5-4-1.5 16-1.5-11-1.5 13-1.5 3-1.5 18-1.5-18-1.5 35-1.5-30-1.5 20-1.5-24-1.5 35-1.5-4-1.5 25-1.5-26-1.5 26-1.5-24-1.5 25-1.5-24-1.5 27-1.5-34-1.5 24-1.5-25-1.5 12-1.5-25-1.5 42-1.5-24-1.5 22-1.5-25-1.5 32-1.5-33-1.5 30-1.5-39-1.5 45-1.5-40-1.5 23-1.5-33-1.5 28-1.5-32-1.5 25-1.5-27-1.5 11-1.5-23-1.5 6-1.5-26-1.5 11-1.5-10-1.5 8-1.5-17-1.5 3-1.5-7-1.5 3-1.5-8-1.5 0-1.5-2-1.5 3-1.5 0-1.5 4-1.5-4-1.5 6-1.5-3-1.5 7-1.5-6-1.5 4-1.5-3-1.5 6-1.5-1-1.5 10-1.5-7-1.5 9-1.5-5-1.5 18-1.5-20-1.5 27-1.5-18-1.5 23-1.5-25-1.5 25-1.5-26-1.5 34-1.5-19-1.5 9-1.5-18-1.5 20-1.5-12-1.5 17-1.5-31-1.5 21-1.5-27-1.5 22-1.5-11-1.5 17-1.5-30-1.5 32-1.5-28-1.5 33-1.5-20-1.5 22-1.5-19-1.5 25-1.5-22-1.5 20-1.5-35-1.5 36-1.5-26-1.5 6-1.5-8-1.5 17-1.5-25-1.5 11-1.5-14-1.5 14-1.5-24-1.5 16-1.5-8-1.5 13-1.5-14-1.5 12-1.5-6-1.5 9-1.5-7-1.5 14-1.5-20-1.5 13-1.5-18-1.5 31-1.5-27-1.5 28-1.5-16-1.5 18-1.5-24-1.5 41-1.5-16-1.5 24-1.5-37-1.5 52-1.5-57-1.5 47-1.5-24-1.5 32-1.5-53-1.5 46-1.5-30-1.5 33-1.5-22-1.5 25-1.5-41-1.5 57-1.5-46-1.5 39-1.5-40-1.5 35-1.5-41-1.5 62-1.5-40-1.5 29-1.5-35-1.5 16-1.5-34-1.5 55-1.5-60-1.5 53-1.5-31-1.5 22-1.5-49-1.5 55-1.5-31-1.5 22-1.5-26-1.5 36-1.5-58-1.5 39-1.5-31-1.5 32-1.5-26-1.5 18-1.5-35-1.5 36-1.5-34-1.5 28-1.5-13-1.5 22-1.5-17-1.5 15-1.5-43-1.5 31-1.5-25-1.5 25-1.5-28-1.5 27-1.5-17-1.5 26-1.5-31-1.5 25-1.5-12-1.5 33-1.5-39-1.5 26-1.5-20-1.5 16-1.5-26-1.5 44-1.5-51-1.5 36-1.5-25-1.5 20-1.5-14-1.5 18-1.5-17-1.5 21-1.5-21-1.5 15-1.5-37-1.5 52-1.5-43-1.5 43-1.5-31-1.5 20-1.5-29-1.5 25-1.5-35-1.5 40-1.5-17-1.5 34-1.5-31-1.5 17-1.5-46-1.5 37-1.5-39-1.5 35-1.5-31-1.5 30-1.5-29-1.5 18-1.5-11-1.5 4-1.5-8-1.5 6-1.5-20-1.5 21-1.5-9-1.5 9-1.5-19-1.5 16-1.5-19-1.5 18-1.5-11-1.5 26-1.5-16-1.5 12-1.5-20-1.5 20-1.5-22-1.5 30-1.5-25-1.5 25-1.5-13-1.5 12-1.5-19-1.5 31-1.5-40-1.5 44-1.5-45-1.5 32-1.5-21-1.5 37-1.5-43-1.5 41-1.5-39-1.5 33-1.5-21-1.5 12-1.5-27-1.5 28-1.5-28-1.5 33-1.5-41-1.5 32-1.5-17-1.5 15-1.5-24-1.5 13-1.5-13-1.5 23-1.5-32-1.5 33-1.5-21-1.5 10-1.5-14-1.5 8-1.5-14-1.5 17-1.5-13-1.5 9-1.5-19-1.5 15-1.5-17-1.5 12-1.5-12-1.5 4-1.5-5-1.5 4-1.5-5-1.5 9-1.5-6-1.5 7-1.5-1-1.5 12-1.5-10-1.5 20-1.5-25-1.5 22-1.5-10-1.5 21-1.5-22-1.5 27-1.5-29-1.5 39-1.5-27-1.5 28-1.5-10-1.5 27-1.5-35-1.5 28-1.5-18-1.5 17-1.5-24-1.5 24-1.5-33-1.5 46-1.5-25-1.5 33-1.5-22-1.5 28-1.5-38-1.5 37-1.5-19-1.5 50-1.5-78-1.5 66-1.5-61-1.5 44-1.5-36-1.5 42-1.5-61-1.5 45-1.5-46-1.5 53-1.5-37-1.5 56-1.5-48-1.5 43-1.5-69-1.5 76-1.5-49-1.5 24-1.5-34-1.5 40-1.5-37-1.5 26-1.5-36-1.5 58-1.5-72-1.5 59-1.5-43-1.5 47-1.5-49-1.5 32-1.5-48-1.5 41-1.5-18-1.5 45-1.5-36-1.5 17-1.5-40-1.5 49-1.5-33-1.5 22-1.5-32-1.5 40-1.5-51-1.5 41-1.5-18-1.5 25-1.5-43-1.5 37-1.5-41-1.5 45-1.5-39-1.5 22-1.5-15-1.5 30-1.5-51-1.5 36-1.5-30-1.5 30-1.5-36-1.5 37-1.5-40-1.5 42-1.5-36-1.5 37-1.5-20-1.5 29-1.5-53-1.5 41-1.5-32-1.5 28-1.5-26-1.5 10-1.5-12-1.5 21-1.5-26-1.5 11-1.5-19-1.5 20-1.5-14-1.5 9-1.5-11-1.5 14-1.5-14-1.5 8-1.5-12-1.5 12-1.5-16-1.5 9-1.5-16-1.5 20-1.5-15-1.5 6-1.5-4-1.5 9-1.5-12-1.5 7-1.5-15-1.5 14-1.5-3-1.5 11-1.5-19-1.5 19-1.5-14-1.5 20-1.5-16-1.5 17-1.5-12-1.5 21-1.5-20-1.5 13-1.5-21-1.5 37-1.5-21-1.5 29-1.5-18-1.5 24-1.5-19-1.5 25-1.5-19-1.5 25-1.5-22-1.5 28-1.5-35-1.5 36-1.5-53-1.5 56-1.5-35-1.5 32-1.5-23-1.5 23-1.5-37-1.5 48-1.5-40-1.5 20-1.5-14-1.5 18-1.5-18-1.5 11-1.5-18-1.5 18-1.5-41-1.5 31-1.5-35-1.5 48-1.5-46-1.5 45-1.5-45-1.5 34-1.5-46-1.5 30-1.5-23-1.5 22-1.5-17-1.5 12-1.5-18-1.5 16-1.5-21-1.5 13-1.5-11-1.5 8-1.5-18-1.5 12-1.5-9-1.5 15-1.5-24-1.5 13-1.5-12-1.5 14-1.5-17-1.5 13-1.5-12-1.5 6-1.5-8-1.5 2-1.5-8-1.5 1-1.5-2-1.5 2-1.5-1-1.5 0-1.5-1-1.5 1-1.5-1-1.5 1-1.5-2-1.5 1-1.5 0-1.5 2-1.5-2-1.5 2-1.5-1-1.5 2-1.5-1-1.5 2-1.5 0-1.5 1-1.5-1-1.5 2-1.5-1-1.5 0-1.5 1-1.5 0-1.5 0-1.5 1-1.5 0-1.5 0-1.5 0-1.5 2-1.5-2-1.5 1-1.5 1-1.5 0-1.5-1-1.5 2-1.5-1-1.5 0-1.5 1-1.5 0-1.5-2-1.5 2-1.5 1-1.5 0-1.5 0-1.5-1-1.5-1-1.5 3-1.5-1-1.5 1-1.5 0-1.5 0-1.5 1-1.5 0-1.5-4-1.5 4-1.5-1-1.5 1-1.5-1-1.5 1-1.5-2-1.5 3-1.5-4-1.5 4-1.5 0-1.5 0-1.5-2-1.5 2-1.5-4-1.5 4-1.5-1-1.5 1-1.5-2-1.5 2-1.5-4-1.5 3-1.5-3-1.5 1-1.5-1-1.5 3-1.5-1-1.5-1-1.5-2-1.5 3-1.5 0-1.5 1-1.5 0-1.5-2-1.5 0-1.5 2-1.5-2-1.5 1-1.5 0-1.5 0-1.5-1-1.5 1-1.5-4-1.5 2-1.5 1-1.5 0-1.5-1-1.5 0-1.5 0-1.5-1-1.5-1-1.5 1-1.5-1-1.5 0-1.5 0-1.5 1-1.5-1-1.5-1-1.5 0-1.5 0-1.5-1-1.5 2-1.5 1-1.5-1-1.5 1-1.5 0-1.5-2-1.5 2-1.5-1-1.5 3-1.5-2-1.5 2-1.5-2-1.5 1-1.5 0-1.5 0-1.5 2-1.5 0-1.5 0-1.5 1-1.5-4-1.5 4-1.5-1-1.5 2-1.5-1-1.5 2-1.5-4-1.5 5-1.5-1-1.5 2-1.5-5-1.5 6-1.5-7-1.5 6-1.5-5-1.5 8-1.5-10-1.5 15-1.5-13-1.5 6-1.5-10-1.5 11-1.5-7-1.5 10-1.5-9-1.5 5-1.5-4-1.5 9-1.5-15-1.5 17-1.5-8-1.5 7-1.5-8-1.5 5-1.5-11-1.5 12-1.5-5-1.5 7-1.5-6-1.5 12-1.5-20-1.5 21-1.5-13-1.5 20-1.5-17-1.5 10-1.5-14-1.5 14-1.5-19-1.5 20-1.5-21-1.5 21-1.5-22-1.5 17-1.5-13-1.5 13-1.5-12-1.5 6-1.5-14-1.5 16-1.5-15-1.5 15-1.5-12-1.5 6-1.5-6-1.5 5-1.5-4-1.5 9-1.5-9-1.5 4-1.5-7-1.5 8-1.5-2-1.5 6-1.5-7-1.5 12-1.5-13-1.5 15-1.5-15-1.5 18-1.5-19-1.5 14-1.5-15-1.5 16-1.5-13-1.5 19-1.5-10-1.5 10-1.5-7-1.5 2-1.5-9-1.5 16-1.5-12-1.5 19-1.5-26-1.5 22-1.5-23-1.5 29-1.5-21-1.5 16-1.5-17-1.5 19-1.5-14-1.5 9-1.5-7-1.5 14-1.5-13-1.5 3-1.5-5-1.5 10-1.5-7-1.5 13-1.5-13-1.5 3-1.5-5-1.5 12-1.5-19-1.5 16-1.5-14-1.5 14-1.5-9-1.5 14-1.5-15-1.5 13-1.5-18-1.5 20-1.5-21-1.5 24-1.5-14-1.5 10-1.5-12-1.5 7-1.5-7-1.5 10-1.5-20-1.5 15-1.5-13-1.5 15-1.5-11-1.5 9-1.5-4-1.5 4-1.5-9-1.5 12-1.5-15-1.5 10-1.5-13-1.5 23-1.5-15-1.5 10-1.5-9-1.5 12-1.5-12-1.5 11-1.5-18-1.5 11-1.5-3-1.5 8-1.5-11-1.5 6-1.5-4-1.5 11-1.5-15-1.5 7-1.5-6-1.5 8-1.5-2-1.5 8-1.5-13-1.5 12-1.5-11-1.5 12-1.5-9-1.5 9-1.5-7-1.5 17-1.5-18-1.5 14-1.5-14-1.5 15-1.5-10-1.5 11-1.5-7-1.5 9-1.5-14-1.5 12-1.5 0-1.5 6-1.5-19-1.5 24-1.5-15-1.5 16-1.5-22-1.5 24-1.5-25-1.5 15-1.5-16-1.5 21-1.5-21-1.5 13-1.5-8-1.5 9-1.5-11-1.5 11-1.5-7-1.5 11-1.5-19-1.5 20-1.5-22-1.5 33-1.5-21-1.5 17-1.5-25-1.5 24-1.5-23-1.5 22-1.5-20-1.5 24-1.5-16-1.5 20-1.5-23-1.5 27-1.5-35-1.5 21-1.5-15-1.5 21-1.5-13-1.5 8-1.5-22-1.5 36-1.5-27-1.5 29-1.5-18-1.5 17-1.5-30-1.5 31-1.5-39-1.5 38-1.5-24-1.5 11-1.5-9-1.5 10-1.5-9-1.5 2-1.5-16-1.5 31-1.5-18-1.5 11-1.5-7-1.5 17-1.5-32-1.5 37-1.5-31-1.5 25-1.5-28-1.5 26-1.5-12-1.5 12-1.5-30-1.5 26-1.5-19-1.5 31-1.5-29-1.5 21-1.5-25-1.5 17-1.5-17-1.5 31-1.5-36-1.5 32-1.5-24-1.5 14-1.5-7-1.5 12-1.5-17-1.5 25-1.5-27-1.5 21-1.5-15-1.5 11-1.5-11-1.5 8-1.5-16-1.5 19-1.5-25-1.5 32-1.5-30-1.5 37-1.5-29-1.5 42-1.5-35-1.5 26-1.5-20-1.5 42-1.5-48-1.5 41-1.5-16-1.5 28-1.5-24-1.5 21-1.5-53-1.5 50-1.5-41-1.5 21-1.5-34-1.5 23-1.5-19-1.5 15-1.5-33-1.5 35-1.5-27-1.5 23-1.5-21-1.5 19-1.5-2-1.5 13-1.5-23-1.5 40-1.5-23-1.5 35-1.5-29-1.5 14-1.5-26-1.5 30-1.5-46-1.5 16-1.5-23-1.5 32-1.5-28-1.5 33-1.5-15-1.5 21-1.5-42-1.5 38-1.5-37-1.5 14-1.5-11-1.5 16-1.5-21-1.5 21-1.5-8-1.5 13-1.5-10-1.5 11-1.5-17-1.5 13-1.5-18-1.5 17-1.5-16-1.5 16-1.5-30-1.5 30-1.5-30-1.5 20-1.5-11-1.5 8-1.5-26-1.5 14-1.5-4-1.5 5-1.5-13-1.5 5-1.5-9-1.5 4-1.5-17-1.5-4-1.5-3-1.5 2-1.5-2-1.5 0-1.5-1-1.5 1-1.5-3-1.5 1-1.5-1-1.5 0-1.5-1-1.5 1-1.5-1-1.5 0Z" fill="url(#wfill)" opacity="0.4"/><path d="M343 1036l1.5 0 1.5 0 1.5 0 1.5-1 1.5 1 1.5-2 1.5 2 1.5-3 1.5 3 1.5-4 1.5 4 1.5-5 1.5 4 1.5-5 1.5 4 1.5-26 1.5 22 1.5-33 1.5 34 1.5-41 1.5 38 1.5-42 1.5 33 1.5-31 1.5 27 1.5-47 1.5 43 1.5-34 1.5 32 1.5-50 1.5 68 1.5-55 1.5 45 1.5-69 1.5 75 1.5-49 1.5 33 1.5-43 1.5 45 1.5-47 1.5 50 1.5-35 1.5 50 1.5-36 1.5 24 1.5-42 1.5 43 1.5-44 1.5 51 1.5-47 1.5 46 1.5-50 1.5 55 1.5-43 1.5 45 1.5-73 1.5 62 1.5-67 1.5 49 1.5-60 1.5 65 1.5-65 1.5 68 1.5-47 1.5 58 1.5-36 1.5 40 1.5-50 1.5 54 1.5-52 1.5 55 1.5-48 1.5 47 1.5-49 1.5 41 1.5-52 1.5 54 1.5-50 1.5 56 1.5-58 1.5 57 1.5-72 1.5 68 1.5-54 1.5 53 1.5-58 1.5 66 1.5-55 1.5 47 1.5-34 1.5 25 1.5-38 1.5 42 1.5-20 1.5 28 1.5-33 1.5 26 1.5-32 1.5 30 1.5-36 1.5 52 1.5-52 1.5 40 1.5-46 1.5 39 1.5-51 1.5 59 1.5-41 1.5 44 1.5-51 1.5 47 1.5-47 1.5 41 1.5-37 1.5 45 1.5-63 1.5 54 1.5-62 1.5 73 1.5-71 1.5 61 1.5-37 1.5 43 1.5-46 1.5 35 1.5-46 1.5 57 1.5-45 1.5 56 1.5-58 1.5 41 1.5-39 1.5 39 1.5-31 1.5 30 1.5-38 1.5 47 1.5-47 1.5 48 1.5-57 1.5 60 1.5-49 1.5 44 1.5-51 1.5 50 1.5-58 1.5 64 1.5-45 1.5 35 1.5-39 1.5 48 1.5-49 1.5 50 1.5-61 1.5 53 1.5-53 1.5 59 1.5-62 1.5 69 1.5-65 1.5 45 1.5-43 1.5 59 1.5-56 1.5 60 1.5-42 1.5 36 1.5-38 1.5 33 1.5-42 1.5 54 1.5-37 1.5 34 1.5-42 1.5 41 1.5-47 1.5 40 1.5-33 1.5 36 1.5-33 1.5 28 1.5-31 1.5 32 1.5-21 1.5 20 1.5-31 1.5 32 1.5-26 1.5 37 1.5-27 1.5 21 1.5-28 1.5 28 1.5-21 1.5 22 1.5-25 1.5 29 1.5-28 1.5 27 1.5-19 1.5 19 1.5-24 1.5 25 1.5-21 1.5 20 1.5-22 1.5 20 1.5-17 1.5 23 1.5-24 1.5 24 1.5-18 1.5 14 1.5-11 1.5 14 1.5-13 1.5 12 1.5-15 1.5 16 1.5-16 1.5 13 1.5-12 1.5 15 1.5-12 1.5 12 1.5-13 1.5 14 1.5-20 1.5 17 1.5-17 1.5 18 1.5-23 1.5 23 1.5-25 1.5 24 1.5-23 1.5 22 1.5-24 1.5 17 1.5-23 1.5 23 1.5-30 1.5 36 1.5-22 1.5 26 1.5-27 1.5 25 1.5-26 1.5 27 1.5-33 1.5 34 1.5-32 1.5 32 1.5-34 1.5 33 1.5-32 1.5 25 1.5-19 1.5 23 1.5-18 1.5 24 1.5-29 1.5 25 1.5-24 1.5 22 1.5-27 1.5 28 1.5-24 1.5 19 1.5-23 1.5 23 1.5-18 1.5 18 1.5-26 1.5 30 1.5-18 1.5 16 1.5-25 1.5 25 1.5-22 1.5 29 1.5-27 1.5 27 1.5-18 1.5 19 1.5-25 1.5 23 1.5-21 1.5 17 1.5-10 1.5 12 1.5-13 1.5 17 1.5-21 1.5 20 1.5-17 1.5 18 1.5-15 1.5 11 1.5-14 1.5 17 1.5-21 1.5 22 1.5-22 1.5 22 1.5-24 1.5 24 1.5-18 1.5 14 1.5-13 1.5 14 1.5-14 1.5 14 1.5-19 1.5 21 1.5-18 1.5 16 1.5-14 1.5 11 1.5-12 1.5 19 1.5-20 1.5 15 1.5-20 1.5 20 1.5-15 1.5 19 1.5-22 1.5 17 1.5-14 1.5 12 1.5-19 1.5 18 1.5-16 1.5 17 1.5-22 1.5 26 1.5-19 1.5 15 1.5-9 1.5 13 1.5-19 1.5 18 1.5-10 1.5 11 1.5-14 1.5 15 1.5-17 1.5 18 1.5-15 1.5 13 1.5-12 1.5 12 1.5-11 1.5 11 1.5-15 1.5 15 1.5-15 1.5 17 1.5-17 1.5 13 1.5-15 1.5 16 1.5-12 1.5 14 1.5-13 1.5 14 1.5-9 1.5 9 1.5-11 1.5-3 1.5 0 1.5 3 1.5-5 1.5 8 1.5-5 1.5 2 1.5 0 1.5 2 1.5-3 1.5 0 1.5 0 1.5 7 1.5-4 1.5 2 1.5-1 1.5-2 1.5 2 1.5 0 1.5 1 1.5 0 1.5-1 1.5 1 1.5 0 1.5 3 1.5-3 1.5-1 1.5 0 1.5 3 1.5-1 1.5 2 1.5-3 1.5-1 1.5 0 1.5 4 1.5-2 1.5-1 1.5-2 1.5 4 1.5-5 1.5 5 1.5-4 1.5 2 1.5-1 1.5 0 1.5-3 1.5 1 1.5 0 1.5 4 1.5-3 1.5-1 1.5-1 1.5 2 1.5 0 1.5 0 1.5-2 1.5-1 1.5 1 1.5-1 1.5 3 1.5-2 1.5-2 1.5 0 1.5 0 1.5 4 1.5-3 1.5-2 1.5 3 1.5 2 1.5-2 1.5-3 1.5-1 1.5 7 1.5-5 1.5 5 1.5-6 1.5 0 1.5 2 1.5 1 1.5-3 1.5 7 1.5-5 1.5 0 1.5 1 1.5 2 1.5-2 1.5 2 1.5-1 1.5 4 1.5-4 1.5 0 1.5 0 1.5 3 1.5-4 1.5 7 1.5-6 1.5 3 1.5-3 1.5 6 1.5-4 1.5 2 1.5-2 1.5 4 1.5-3 1.5 3 1.5-5 1.5 1 1.5-1 1.5 1 1.5-1 1.5 1 1.5 0 1.5 2 1.5-2 1.5 0 1.5 0 1.5 3 1.5-2 1.5 2 1.5 0 1.5 1 1.5-2 1.5 2 1.5-1 1.5 1 1.5 0 1.5 2 1.5-1 1.5 4 1.5-2 1.5 3 1.5-3 1.5 3 1.5-2 1.5 2 1.5-1 1.5 1 1.5-2 1.5 2 1.5-1 1.5 1 1.5-2 1.5 2 1.5-3 1.5 3 1.5-4 1.5 4 1.5-12 1.5 7 1.5-14 1.5 12 1.5-17 1.5 18 1.5-24 1.5 29 1.5-28 1.5 23 1.5-36 1.5 37 1.5-38 1.5 36 1.5-32 1.5 29 1.5-34 1.5 43 1.5-34 1.5 29 1.5-31 1.5 34 1.5-38 1.5 31 1.5-48 1.5 57 1.5-66 1.5 47 1.5-60 1.5 77 1.5-78 1.5 54 1.5-63 1.5 64 1.5-55 1.5 74 1.5-75 1.5 72 1.5-68 1.5 54 1.5-61 1.5 77 1.5-91 1.5 67 1.5-55 1.5 61 1.5-55 1.5 65 1.5-73 1.5 71 1.5-59 1.5 49 1.5-61 1.5 76 1.5-61 1.5 71 1.5-54 1.5 45 1.5-41 1.5 33 1.5-23 1.5 42 1.5-37 1.5 31 1.5-39 1.5 42 1.5-33 1.5 29 1.5-20 1.5 21 1.5-21 1.5 28 1.5-24 1.5 16 1.5-13 1.5 21 1.5-18 1.5 14 1.5-12 1.5 12 1.5-17 1.5 18 1.5-17 1.5 17 1.5-23 1.5 18 1.5-18 1.5 19 1.5-17 1.5 22 1.5-31 1.5 25 1.5-28 1.5 34 1.5-30 1.5 27 1.5-37 1.5 27 1.5-30 1.5 33 1.5-50 1.5 42 1.5-53 1.5 52 1.5-69 1.5 76 1.5-83 1.5 88 1.5-64 1.5 70 1.5-100 1.5 72 1.5-77 1.5 76 1.5-57 1.5 69 1.5-70 1.5 86 1.5-94 1.5 74 1.5-74 1.5 97 1.5-102 1.5 91 1.5-84 1.5 74 1.5-80 1.5 98 1.5-84 1.5 52 1.5-74 1.5 101 1.5-102 1.5 81 1.5-50 1.5 51 1.5-69 1.5 71 1.5-68 1.5 77 1.5-85 1.5 88 1.5-59 1.5 61 1.5-58 1.5 38 1.5-73 1.5 100 1.5-67 1.5 65 1.5-70 1.5 49 1.5-62 1.5 90 1.5-84 1.5 67 1.5-56 1.5 47 1.5-57 1.5 79 1.5-75 1.5 74 1.5-89 1.5 72 1.5-47 1.5 66 1.5-82 1.5 83 1.5-59 1.5 62 1.5-59 1.5 47 1.5-55 1.5 45 1.5-57 1.5 54 1.5-41 1.5 66 1.5-76 1.5 52 1.5-58 1.5 64 1.5-65 1.5 76 1.5-85 1.5 85 1.5-63 1.5 43 1.5-51 1.5 74 1.5-56 1.5 46 1.5-50 1.5 48 1.5-48 1.5 60 1.5-44 1.5 37 1.5-27 1.5 31 1.5-35 1.5 31 1.5-22 1.5 22 1.5-15 1.5 19 1.5-11 1.5 11 1.5-15 1.5 20 1.5-16 1.5 15 1.5-15 1.5 18 1.5-16 1.5 16 1.5-23 1.5 18 1.5-14 1.5 14 1.5-30 1.5 27 1.5-37 1.5 44 1.5-55 1.5 37 1.5-41 1.5 51 1.5-59 1.5 64 1.5-63 1.5 41 1.5-57 1.5 64 1.5-65 1.5 77 1.5-53 1.5 47 1.5-72 1.5 71 1.5-61 1.5 75 1.5-83 1.5 61 1.5-46 1.5 50 1.5-38 1.5 40 1.5-63 1.5 74 1.5-61 1.5 54 1.5-40 1.5 39 1.5-53 1.5 62 1.5-38 1.5 29 1.5-41 1.5 40 1.5-23 1.5 29 1.5-21 1.5 18 1.5-22 1.5 24 1.5-17 1.5 24 1.5-29 1.5 25 1.5-20 1.5 15 1.5-17 1.5 22 1.5-30 1.5 29 1.5-17 1.5 16 1.5-15 1.5 14 1.5-22 1.5 30 1.5-21 1.5 21 1.5-31 1.5 18 1.5-35 1.5 45 1.5-55 1.5 58 1.5-47 1.5 30 1.5-35 1.5 43 1.5-55 1.5 55 1.5-45 1.5 54 1.5-51 1.5 32 1.5-50 1.5 50 1.5-28 1.5 41 1.5-52 1.5 49 1.5-49 1.5 59 1.5-48 1.5 42 1.5-59 1.5 49 1.5-56 1.5 57 1.5-49 1.5 60 1.5-71 1.5 70 1.5-61 1.5 45 1.5-55 1.5 67 1.5-72 1.5 73 1.5-51 1.5 40 1.5-43 1.5 35 1.5-35 1.5 42 1.5-41 1.5 50 1.5-76 1.5 84 1.5-83 1.5 62 1.5-40 1.5 60 1.5-71 1.5 52 1.5-54 1.5 65 1.5-60 1.5 51 1.5-44 1.5 57 1.5-54 1.5 61 1.5-82 1.5 57 1.5-59 1.5 59 1.5-60 1.5 61 1.5-37 1.5 46 1.5-58 1.5 62 1.5-49 1.5 35 1.5-40 1.5 52 1.5-71 1.5 59 1.5-36 1.5 59 1.5-81 1.5 72 1.5-45 1.5 37 1.5-50 1.5 53 1.5-51 1.5 50 1.5-41 1.5 36 1.5-40 1.5 44 1.5-28 1.5 31 1.5-37 1.5 40 1.5-34 1.5 37 1.5-21 1.5 30 1.5-26 1.5 18 1.5-19 1.5 21 1.5-13 1.5 16 1.5-19 1.5 18 1.5-15 1.5 14 1.5-12 1.5 18 1.5-18 1.5 15 1.5-16 1.5 18 1.5-22 1.5 20 1.5-32 1.5 32 1.5-35 1.5 29 1.5-25 1.5 34 1.5-35 1.5 28 1.5-39 1.5 43 1.5-38 1.5 28 1.5-22 1.5 28 1.5-27 1.5 32 1.5-36 1.5 34 1.5-44 1.5 48 1.5-63 1.5 50 1.5-44 1.5 53 1.5-65 1.5 65 1.5-46 1.5 48 1.5-41 1.5 26 1.5-26 1.5 43 1.5-47 1.5 40 1.5-29 1.5 35 1.5-30 1.5 22 1.5-10 1.5 19 1.5-22 1.5 19 1.5-8 1.5 9 1.5-13 1.5 14 1.5-8 1.5 9 1.5-9 1.5 9 1.5-7 1.5 6 1.5-3 1.5 3 1.5-1 1.5 1 1.5-8 1.5 9 1.5-14 1.5 13 1.5-21 1.5 16 1.5-20 1.5 19 1.5-33 1.5 17 1.5-44 1.5 47 1.5-49 1.5 46 1.5-53 1.5 55 1.5-60 1.5 49 1.5-77 1.5 94 1.5-85 1.5 85 1.5-78 1.5 76 1.5-59 1.5 57 1.5-69 1.5 75 1.5-90 1.5 92 1.5-80 1.5 62 1.5-51 1.5 70 1.5-77 1.5 75 1.5-83 1.5 70 1.5-62 1.5 77 1.5-58 1.5 62 1.5-54 1.5 51 1.5-45 1.5 36 1.5-45 1.5 49 1.5-34 1.5 33 1.5-16 1.5 25 1.5-18 1.5 23 1.5-17 1.5 13 1.5-10 1.5 14 1.5-9 1.5 10 1.5-9 1.5 9 1.5-6 1.5 6 1.5-5 1.5 2 1.5-6 1.5 6 1.5-13 1.5 13 1.5-22 1.5 13 1.5-26 1.5 28 1.5-37 1.5 29 1.5-46 1.5 57 1.5-50 1.5 42 1.5-56 1.5 55 1.5-63 1.5 52 1.5-40 1.5 56 1.5-75 1.5 79 1.5-85 1.5 77 1.5-68 1.5 78 1.5-100 1.5 101 1.5-90 1.5 73 1.5-53 1.5 43 1.5-44 1.5 50 1.5-43 1.5 43 1.5-51 1.5 49 1.5-51 1.5 60 1.5-54 1.5 64 1.5-47 1.5 39 1.5-51 1.5 45 1.5-38 1.5 55 1.5-44 1.5 43 1.5-48 1.5 50 1.5-35 1.5 30 1.5-26 1.5 20 1.5-23 1.5 28 1.5-22 1.5 20 1.5-24 1.5 28 1.5-20 1.5 19 1.5-18 1.5 20 1.5-21 1.5 25 1.5-30 1.5 23 1.5-21 1.5 30 1.5-47 1.5 46 1.5-56 1.5 43 1.5-51 1.5 59 1.5-70 1.5 54 1.5-53 1.5 47 1.5-57 1.5 66 1.5-65 1.5 71 1.5-84 1.5 75 1.5-61 1.5 55 1.5-74 1.5 78 1.5-71 1.5 79 1.5-57 1.5 67 1.5-56 1.5 46 1.5-45 1.5 41 1.5-46 1.5 57 1.5-58 1.5 55 1.5-57 1.5 49 1.5-44 1.5 57 1.5-47 1.5 46 1.5-52 1.5 39 1.5-30 1.5 40 1.5-54 1.5 53 1.5-54 1.5 63 1.5-69 1.5 56 1.5-53 1.5 52 1.5-40 1.5 47 1.5-54 1.5 43 1.5-54 1.5 64 1.5-49 1.5 36 1.5-37 1.5 55 1.5-51 1.5 54 1.5-56 1.5 47 1.5-53 1.5 52 1.5-52 1.5 47 1.5-50 1.5 46 1.5-43 1.5 58 1.5-55 1.5 58 1.5-69 1.5 54 1.5-55 1.5 65 1.5-65 1.5 50 1.5-38 1.5 40 1.5-53 1.5 71 1.5-79 1.5 59 1.5-37 1.5 56 1.5-72 1.5 61 1.5-60 1.5 66 1.5-46 1.5 50 1.5-52 1.5 41 1.5-55 1.5 58 1.5-41 1.5 38 1.5-62 1.5 60 1.5-48 1.5 61 1.5-45 1.5 35 1.5-53 1.5 51 1.5-44 1.5 52 1.5-39 1.5 38 1.5-43 1.5 41 1.5-31 1.5 33 1.5-40 1.5 45 1.5-47 1.5 51 1.5-41 1.5 37 1.5-41 1.5 44 1.5-43 1.5 39 1.5-35 1.5 36 1.5-46 1.5 36 1.5-37 1.5 41 1.5-40 1.5 41 1.5-30 1.5 32 1.5-46 1.5 46 1.5-42 1.5 43 1.5-31 1.5 33 1.5-31 1.5 35 1.5-36 1.5 34 1.5-35 1.5 32 1.5-19 1.5 22 1.5-24 1.5 18 1.5-16 1.5 18 1.5-21 1.5 25 1.5-26 1.5 27 1.5-23 1.5 20 1.5-22 1.5 21 1.5-19 1.5 24 1.5-20 1.5 18 1.5-20 1.5 20 1.5-17 1.5 17 1.5-18 1.5 21 1.5-15 1.5 13 1.5-13 1.5 12 1.5-8 1.5 9 1.5-4 1.5 7 1.5-6 1.5 6 1.5-2 1.5 3 1.5-6 1.5 0 1.5-2 1.5 0 1.5-1 1.5 2 1.5-2 1.5-1 1.5-1 1.5-1 1.5 0 1.5 1 1.5-2 1.5 1 1.5-2 1.5 7 1.5-7 1.5 6 1.5-5 1.5 4 1.5-3 1.5 0 1.5-2 1.5 6 1.5-5 1.5 1 1.5-1 1.5 3 1.5-5 1.5-1 1.5 4 1.5 2 1.5-3 1.5 2 1.5-4 1.5 0 1.5 0 1.5 6 1.5-7 1.5 2 1.5-2 1.5 4 1.5-4 1.5 2 1.5 1 1.5-2 1.5-1 1.5 7 1.5-6 1.5 2 1.5-3 1.5 4 1.5-2 1.5 3 1.5-3 1.5-1 1.5-1 1.5 3 1.5-2 1.5 1 1.5 0 1.5 1 1.5 0 1.5 2 1.5-3 1.5 1 1.5 3 1.5 2 1.5-4 1.5 3 1.5-3 1.5 0 1.5 0 1.5 2 1.5 1 1.5 1 1.5-1 1.5-1 1.5-1 1.5 0 1.5 1 1.5 0 1.5 0 1.5 1 1.5-1 1.5 3 1.5-1 1.5 3 1.5-2 1.5-1 1.5 0 1.5 3 1.5-1 1.5 1 1.5-1 1.5 2 1.5-1 1.5 2 1.5-2 1.5 2 1.5 0 1.5 3 1.5-3 1.5 3 1.5-4 1.5 4 1.5-3 1.5 3 1.5-3 1.5 2 1.5-3 1.5 3 1.5-2 1.5 2 1.5-4 1.5 5 1.5-6 1.5 4 1.5-6 1.5 8 1.5-14 1.5 12 1.5-23 1.5 20 1.5-16 1.5 11 1.5-23 1.5 29 1.5-31 1.5 27 1.5-27 1.5 21 1.5-24 1.5 32 1.5-35 1.5 28 1.5-55 1.5 46 1.5-43 1.5 57 1.5-55 1.5 60 1.5-86 1.5 87 1.5-84 1.5 78 1.5-81 1.5 76 1.5-78 1.5 66 1.5-66 1.5 70 1.5-79 1.5 96 1.5-85 1.5 71 1.5-99 1.5 85 1.5-79 1.5 74 1.5-72 1.5 97 1.5-104 1.5 87 1.5-69 1.5 61 1.5-78 1.5 107 1.5-112 1.5 116 1.5-118 1.5 96 1.5-71 1.5 93 1.5-74 1.5 51 1.5-61 1.5 63 1.5-44 1.5 46 1.5-39 1.5 57 1.5-48 1.5 43 1.5-42 1.5 40 1.5-31 1.5 28 1.5-41 1.5 40 1.5-41 1.5 39 1.5-29 1.5 34 1.5-27 1.5 35 1.5-51 1.5 42 1.5-38 1.5 38 1.5-27 1.5 38 1.5-69 1.5 70 1.5-58 1.5 56 1.5-59 1.5 34 1.5-44 1.5 57 1.5-88 1.5 73 1.5-62 1.5 80 1.5-76 1.5 74 1.5-75 1.5 79 1.5-83 1.5 77 1.5-77 1.5 73 1.5-65 1.5 51 1.5-71 1.5 99 1.5-81 1.5 75 1.5-92 1.5 69 1.5-69 1.5 101 1.5-84 1.5 71 1.5-61 1.5 59 1.5-52 1.5 48 1.5-43 1.5 58 1.5-49 1.5 41 1.5-35 1.5 43 1.5-31 1.5 38 1.5-39 1.5 36 1.5-32 1.5 35 1.5-33 1.5 23 1.5-18 1.5 24 1.5-39 1.5 43 1.5-34 1.5 25 1.5-44 1.5 48 1.5-55 1.5 59 1.5-57 1.5 35 1.5-55 1.5 73 1.5-62 1.5 58 1.5-71 1.5 81 1.5-73 1.5 57 1.5-63 1.5 56 1.5-45 1.5 43 1.5-70 1.5 68 1.5-62 1.5 85 1.5-61 1.5 54 1.5-50 1.5 53 1.5-54 1.5 54 1.5-48 1.5 38 1.5-38 1.5 45 1.5-56 1.5 52 1.5-62 1.5 54 1.5-33 1.5 40 1.5-55 1.5 42 1.5-37 1.5 34 1.5-41 1.5 58 1.5-70 1.5 73 1.5-56 1.5 47 1.5-51 1.5 40 1.5-59 1.5 58 1.5-52 1.5 76 1.5-86 1.5 73 1.5-56 1.5 55 1.5-83 1.5 85 1.5-84 1.5 91 1.5-83 1.5 78 1.5-67 1.5 63 1.5-76 1.5 83 1.5-61 1.5 55 1.5-59 1.5 68 1.5-83 1.5 69 1.5-70 1.5 79 1.5-88 1.5 92 1.5-59 1.5 58 1.5-70 1.5 72 1.5-80 1.5 59 1.5-40 1.5 68 1.5-89 1.5 69 1.5-48 1.5 57 1.5-67 1.5 73 1.5-69 1.5 53 1.5-52 1.5 66 1.5-50 1.5 52 1.5-59 1.5 57 1.5-49 1.5 60 1.5-43 1.5 36 1.5-38 1.5 44 1.5-49 1.5 43 1.5-41 1.5 33 1.5-36 1.5 36 1.5-43 1.5 39 1.5-30 1.5 31 1.5-31 1.5 48 1.5-54 1.5 42 1.5-31 1.5 30 1.5-29 1.5 30 1.5-35 1.5 31 1.5-38 1.5 43 1.5-28 1.5 23 1.5-28 1.5 34 1.5-28 1.5 32 1.5-35 1.5 36 1.5-42 1.5 30 1.5-37 1.5 41 1.5-36 1.5 49 1.5-70 1.5 67 1.5-62 1.5 50 1.5-48 1.5 50 1.5-32 1.5 42 1.5-46 1.5 47 1.5-44 1.5 35 1.5-39 1.5 48 1.5-46 1.5 38 1.5-36 1.5 42 1.5-43 1.5 38 1.5-27 1.5 22 1.5-27 1.5 32 1.5-24 1.5 29 1.5-36 1.5 41 1.5-34 1.5 29 1.5-27 1.5 29 1.5-26 1.5 25 1.5-29 1.5 24 1.5-17 1.5 21 1.5-26 1.5 23 1.5-16 1.5 17 1.5-15 1.5 19 1.5-20 1.5 23 1.5-20 1.5 16 1.5-14 1.5 17 1.5-18 1.5 17 1.5-13 1.5 10 1.5-12 1.5 17 1.5-12 1.5 8 1.5-6 1.5 9 1.5-12 1.5 13 1.5-9 1.5 7 1.5-6 1.5 7 1.5-9 1.5 10 1.5-8 1.5 8 1.5-7 1.5 7 1.5-5 1.5 5 1.5-7 1.5 8 1.5-6 1.5 6 1.5-4 1.5 5 1.5-4 1.5 3 1.5-4 1.5 4 1.5-4 1.5 5 1.5-3 1.5 3 1.5-2 1.5 1 1.5-1 1.5 2 1.5-2 1.5 2 1.5-1 1.5 1 1.5-1 1.5 1 1.5-1 1.5 1 1.5 0 1.5 0 1.5 0 1.5 0 1.5 0 1.5 0 1.5 0 0 1-1.5 0-1.5 0-1.5 0-1.5 0-1.5 0-1.5 0-1.5 0-1.5 1-1.5-1-1.5 1-1.5-1-1.5 2-1.5-2-1.5 2-1.5-2-1.5 2-1.5-2-1.5 2-1.5-2-1.5 3-1.5-2-1.5 3-1.5-4-1.5 5-1.5-4-1.5 3-1.5-3-1.5 5-1.5-4-1.5 5-1.5-6-1.5 7-1.5-7-1.5 6-1.5-5-1.5 5-1.5-5-1.5 6-1.5-8-1.5 10-1.5-8-1.5 9-1.5-8-1.5 7-1.5-10-1.5 12-1.5-8-1.5 7-1.5-8-1.5 11-1.5-13-1.5 10-1.5-11-1.5 12-1.5-8-1.5 11-1.5-13-1.5 15-1.5-15-1.5 12-1.5-12-1.5 16-1.5-16-1.5 12-1.5-12-1.5 14-1.5-11-1.5 12-1.5-13-1.5 10-1.5-13-1.5 16-1.5-12-1.5 10-1.5-10-1.5 12-1.5-11-1.5 12-1.5-11-1.5 16-1.5-21-1.5 22-1.5-20-1.5 18-1.5-13-1.5 12-1.5-12-1.5 20-1.5-19-1.5 17-1.5-15-1.5 17-1.5-15-1.5 24-1.5-25-1.5 20-1.5-29-1.5 42-1.5-33-1.5 24-1.5-29-1.5 44-1.5-41-1.5 38-1.5-38-1.5 43-1.5-47-1.5 49-1.5-53-1.5 46-1.5-44-1.5 60-1.5-47-1.5 45-1.5-43-1.5 43-1.5-57-1.5 49-1.5-53-1.5 49-1.5-42-1.5 36-1.5-39-1.5 43-1.5-41-1.5 27-1.5-28-1.5 42-1.5-36-1.5 33-1.5-39-1.5 41-1.5-42-1.5 29-1.5-30-1.5 41-1.5-36-1.5 38-1.5-46-1.5 35-1.5-31-1.5 32-1.5-21-1.5 22-1.5-33-1.5 42-1.5-38-1.5 42-1.5-39-1.5 45-1.5-51-1.5 46-1.5-44-1.5 57-1.5-53-1.5 55-1.5-64-1.5 50-1.5-42-1.5 52-1.5-53-1.5 63-1.5-61-1.5 60-1.5-50-1.5 44-1.5-62-1.5 72-1.5-68-1.5 60-1.5-43-1.5 64-1.5-71-1.5 54-1.5-64-1.5 67-1.5-54-1.5 57-1.5-64-1.5 51-1.5-47-1.5 44-1.5-51-1.5 37-1.5-33-1.5 45-1.5-40-1.5 45-1.5-45-1.5 26-1.5-35-1.5 38-1.5-40-1.5 49-1.5-54-1.5 47-1.5-46-1.5 40-1.5-28-1.5 31-1.5-41-1.5 52-1.5-53-1.5 42-1.5-38-1.5 51-1.5-47-1.5 34-1.5-44-1.5 59-1.5-45-1.5 34-1.5-43-1.5 46-1.5-42-1.5 37-1.5-40-1.5 45-1.5-42-1.5 39-1.5-49-1.5 49-1.5-48-1.5 55-1.5-39-1.5 45-1.5-57-1.5 47-1.5-50-1.5 70-1.5-72-1.5 77-1.5-77-1.5 69-1.5-52-1.5 53-1.5-69-1.5 66-1.5-65-1.5 54-1.5-60-1.5 63-1.5-44-1.5 36-1.5-52-1.5 38-1.5-25-1.5 33-1.5-47-1.5 34-1.5-36-1.5 34-1.5-34-1.5 29-1.5-16-1.5 18-1.5-26-1.5 30-1.5-22-1.5 24-1.5-23-1.5 29-1.5-38-1.5 31-1.5-24-1.5 27-1.5-30-1.5 50-1.5-43-1.5 33-1.5-39-1.5 42-1.5-28-1.5 55-1.5-76-1.5 73-1.5-63-1.5 53-1.5-63-1.5 94-1.5-96-1.5 67-1.5-49-1.5 62-1.5-65-1.5 46-1.5-52-1.5 64-1.5-64-1.5 67-1.5-69-1.5 54-1.5-57-1.5 56-1.5-41-1.5 44-1.5-47-1.5 60-1.5-56-1.5 51-1.5-71-1.5 49-1.5-44-1.5 38-1.5-38-1.5 28-1.5-28-1.5 24-1.5-27-1.5 29-1.5-21-1.5 27-1.5-29-1.5 21-1.5-27-1.5 40-1.5-37-1.5 27-1.5-21-1.5 29-1.5-34-1.5 24-1.5-26-1.5 38-1.5-37-1.5 40-1.5-37-1.5 38-1.5-30-1.5 32-1.5-40-1.5 60-1.5-55-1.5 50-1.5-62-1.5 58-1.5-44-1.5 47-1.5-61-1.5 51-1.5-34-1.5 44-1.5-53-1.5 52-1.5-49-1.5 49-1.5-59-1.5 44-1.5-29-1.5 24-1.5-31-1.5 36-1.5-40-1.5 53-1.5-59-1.5 48-1.5-48-1.5 41-1.5-38-1.5 47-1.5-42-1.5 38-1.5-33-1.5 41-1.5-54-1.5 46-1.5-43-1.5 37-1.5-37-1.5 35-1.5-28-1.5 29-1.5-31-1.5 22-1.5-22-1.5 20-1.5-24-1.5 21-1.5-24-1.5 20-1.5-19-1.5 20-1.5-16-1.5 10-1.5-16-1.5 11-1.5-12-1.5 9-1.5-8-1.5 6-1.5-7-1.5 5-1.5-4-1.5 1-1.5-2-1.5 3-1.5-2-1.5 2-1.5-3-1.5 3-1.5-2-1.5 1-1.5-1-1.5 1-1.5-1-1.5 2-1.5 0-1.5 4-1.5-3-1.5 2-1.5 1-1.5 0-1.5-1-1.5 2-1.5-3-1.5 2-1.5-1-1.5 2-1.5-2-1.5 2-1.5 1-1.5 1-1.5-1-1.5 0-1.5 0-1.5 1-1.5-1-1.5 0-1.5-2-1.5 3-1.5 1-1.5-1-1.5 1-1.5-1-1.5-2-1.5 4-1.5 1-1.5-2-1.5-3-1.5 5-1.5-4-1.5 4-1.5-4-1.5 3-1.5-2-1.5 5-1.5-6-1.5 6-1.5 0-1.5 0-1.5-2-1.5 2-1.5-1-1.5 2-1.5-6-1.5 5-1.5-3-1.5 3-1.5-5-1.5 4-1.5-5-1.5 6-1.5-6-1.5 6-1.5-8-1.5 5-1.5-3-1.5 6-1.5-1-1.5 0-1.5 0-1.5 0-1.5-2-1.5 0-1.5-2-1.5 2-1.5-3-1.5 2-1.5-2-1.5 5-1.5-2-1.5-1-1.5 1-1.5-2-1.5 0-1.5 0-1.5-2-1.5 4-1.5-4-1.5 4-1.5-2-1.5 2-1.5 0-1.5-2-1.5 1-1.5 1-1.5-5-1.5 4-1.5-2-1.5-1-1.5-3-1.5 2-1.5-1-1.5 0-1.5-2-1.5 1-1.5-4-1.5 2-1.5-3-1.5 4-1.5-3-1.5 4-1.5-5-1.5 8-1.5-6-1.5 8-1.5-10-1.5 12-1.5-9-1.5 7-1.5-7-1.5 11-1.5-11-1.5 13-1.5-13-1.5 11-1.5-13-1.5 14-1.5-14-1.5 17-1.5-13-1.5 21-1.5-20-1.5 20-1.5-21-1.5 21-1.5-18-1.5 22-1.5-18-1.5 16-1.5-19-1.5 32-1.5-30-1.5 23-1.5-22-1.5 27-1.5-27-1.5 17-1.5-26-1.5 37-1.5-38-1.5 36-1.5-30-1.5 27-1.5-29-1.5 29-1.5-27-1.5 20-1.5-26-1.5 32-1.5-30-1.5 26-1.5-28-1.5 27-1.5-17-1.5 26-1.5-36-1.5 32-1.5-31-1.5 34-1.5-31-1.5 34-1.5-33-1.5 36-1.5-33-1.5 30-1.5-35-1.5 38-1.5-33-1.5 30-1.5-24-1.5 27-1.5-37-1.5 36-1.5-36-1.5 44-1.5-36-1.5 36-1.5-43-1.5 31-1.5-19-1.5 30-1.5-41-1.5 35-1.5-38-1.5 48-1.5-34-1.5 38-1.5-52-1.5 57-1.5-55-1.5 53-1.5-54-1.5 68-1.5-68-1.5 50-1.5-39-1.5 46-1.5-42-1.5 39-1.5-44-1.5 43-1.5-32-1.5 53-1.5-72-1.5 56-1.5-56-1.5 61-1.5-50-1.5 40-1.5-36-1.5 41-1.5-47-1.5 33-1.5-30-1.5 39-1.5-53-1.5 38-1.5-41-1.5 52-1.5-38-1.5 33-1.5-41-1.5 30-1.5-32-1.5 39-1.5-40-1.5 40-1.5-38-1.5 30-1.5-24-1.5 29-1.5-23-1.5 28-1.5-31-1.5 44-1.5-45-1.5 43-1.5-46-1.5 64-1.5-64-1.5 66-1.5-54-1.5 62-1.5-79-1.5 75-1.5-72-1.5 67-1.5-58-1.5 58-1.5-75-1.5 68-1.5-65-1.5 72-1.5-52-1.5 40-1.5-41-1.5 38-1.5-51-1.5 55-1.5-47-1.5 50-1.5-54-1.5 60-1.5-67-1.5 59-1.5-52-1.5 54-1.5-46-1.5 34-1.5-35-1.5 24-1.5-40-1.5 34-1.5-31-1.5 39-1.5-42-1.5 35-1.5-29-1.5 19-1.5-29-1.5 32-1.5-33-1.5 30-1.5-23-1.5 12-1.5-16-1.5 22-1.5-25-1.5 24-1.5-23-1.5 24-1.5-21-1.5 24-1.5-20-1.5 16-1.5-20-1.5 31-1.5-33-1.5 30-1.5-22-1.5 36-1.5-31-1.5 23-1.5-24-1.5 42-1.5-38-1.5 34-1.5-50-1.5 57-1.5-43-1.5 61-1.5-75-1.5 67-1.5-49-1.5 54-1.5-52-1.5 59-1.5-78-1.5 78-1.5-54-1.5 44-1.5-61-1.5 73-1.5-56-1.5 39-1.5-42-1.5 48-1.5-70-1.5 68-1.5-66-1.5 49-1.5-48-1.5 57-1.5-39-1.5 35-1.5-54-1.5 59-1.5-51-1.5 38-1.5-35-1.5 27-1.5-40-1.5 39-1.5-37-1.5 22-1.5-25-1.5 22-1.5-20-1.5 9-1.5-12-1.5 8-1.5-8-1.5 3-1.5-4-1.5 5-1.5-4-1.5 4-1.5-6-1.5 8-1.5-7-1.5 10-1.5-8-1.5 13-1.5-14-1.5 16-1.5-17-1.5 20-1.5-14-1.5 23-1.5-24-1.5 33-1.5-32-1.5 30-1.5-31-1.5 52-1.5-39-1.5 42-1.5-54-1.5 47-1.5-29-1.5 31-1.5-39-1.5 52-1.5-53-1.5 59-1.5-50-1.5 36-1.5-56-1.5 48-1.5-39-1.5 49-1.5-40-1.5 42-1.5-47-1.5 42-1.5-40-1.5 39-1.5-36-1.5 48-1.5-49-1.5 47-1.5-62-1.5 42-1.5-42-1.5 40-1.5-37-1.5 40-1.5-38-1.5 22-1.5-24-1.5 15-1.5-18-1.5 14-1.5-17-1.5 9-1.5-13-1.5 8-1.5-7-1.5 1-1.5-2-1.5 4-1.5-3-1.5 5-1.5-6-1.5 7-1.5-6-1.5 7-1.5-7-1.5 10-1.5-8-1.5 8-1.5-11-1.5 19-1.5-14-1.5 12-1.5-9-1.5 16-1.5-17-1.5 18-1.5-22-1.5 28-1.5-23-1.5 36-1.5-38-1.5 39-1.5-39-1.5 49-1.5-51-1.5 46-1.5-32-1.5 45-1.5-51-1.5 44-1.5-45-1.5 36-1.5-36-1.5 31-1.5-39-1.5 42-1.5-35-1.5 39-1.5-40-1.5 34-1.5-31-1.5 31-1.5-37-1.5 34-1.5-26-1.5 33-1.5-33-1.5 26-1.5-29-1.5 21-1.5-31-1.5 28-1.5-20-1.5 15-1.5-24-1.5 21-1.5-19-1.5 19-1.5-15-1.5 19-1.5-23-1.5 22-1.5-22-1.5 17-1.5-19-1.5 27-1.5-24-1.5 26-1.5-22-1.5 23-1.5-19-1.5 24-1.5-25-1.5 24-1.5-24-1.5 33-1.5-42-1.5 51-1.5-48-1.5 56-1.5-56-1.5 54-1.5-50-1.5 56-1.5-60-1.5 61-1.5-47-1.5 41-1.5-38-1.5 36-1.5-40-1.5 34-1.5-29-1.5 51-1.5-69-1.5 54-1.5-43-1.5 54-1.5-69-1.5 64-1.5-62-1.5 83-1.5-66-1.5 61-1.5-69-1.5 84-1.5-68-1.5 74-1.5-98-1.5 68-1.5-49-1.5 57-1.5-60-1.5 58-1.5-58-1.5 51-1.5-70-1.5 94-1.5-92-1.5 91-1.5-87-1.5 60-1.5-50-1.5 62-1.5-52-1.5 41-1.5-67-1.5 76-1.5-61-1.5 61-1.5-71-1.5 44-1.5-38-1.5 50-1.5-55-1.5 54-1.5-48-1.5 47-1.5-50-1.5 54-1.5-63-1.5 56-1.5-47-1.5 62-1.5-64-1.5 42-1.5-34-1.5 54-1.5-64-1.5 46-1.5-46-1.5 41-1.5-40-1.5 45-1.5-51-1.5 56-1.5-55-1.5 57-1.5-58-1.5 58-1.5-53-1.5 35-1.5-24-1.5 27-1.5-33-1.5 40-1.5-35-1.5 32-1.5-41-1.5 32-1.5-31-1.5 18-1.5-20-1.5 24-1.5-20-1.5 13-1.5-19-1.5 23-1.5-26-1.5 21-1.5-18-1.5 21-1.5-19-1.5 21-1.5-22-1.5 20-1.5-22-1.5 29-1.5-24-1.5 18-1.5-25-1.5 35-1.5-23-1.5 25-1.5-34-1.5 30-1.5-33-1.5 51-1.5-38-1.5 27-1.5-21-1.5 38-1.5-46-1.5 41-1.5-42-1.5 58-1.5-68-1.5 64-1.5-43-1.5 27-1.5-37-1.5 41-1.5-49-1.5 44-1.5-43-1.5 42-1.5-32-1.5 26-1.5-27-1.5 33-1.5-33-1.5 24-1.5-28-1.5 27-1.5-28-1.5 38-1.5-46-1.5 42-1.5-28-1.5 25-1.5-30-1.5 21-1.5-19-1.5 16-1.5-21-1.5 27-1.5-29-1.5 23-1.5-22-1.5 10-1.5-10-1.5 7-1.5-8-1.5 10-1.5-11-1.5 11-1.5-10-1.5 9-1.5-12-1.5 16-1.5-15-1.5 16-1.5-15-1.5 24-1.5-24-1.5 19-1.5-14-1.5 24-1.5-32-1.5 40-1.5-33-1.5 37-1.5-41-1.5 41-1.5-38-1.5 35-1.5-33-1.5 49-1.5-40-1.5 32-1.5-31-1.5 50-1.5-53-1.5 52-1.5-65-1.5 82-1.5-70-1.5 65-1.5-63-1.5 83-1.5-88-1.5 67-1.5-61-1.5 66-1.5-52-1.5 51-1.5-59-1.5 67-1.5-86-1.5 75-1.5-63-1.5 79-1.5-94-1.5 87-1.5-78-1.5 59-1.5-66-1.5 84-1.5-59-1.5 49-1.5-56-1.5 53-1.5-47-1.5 58-1.5-70-1.5 58-1.5-64-1.5 47-1.5-43-1.5 64-1.5-70-1.5 55-1.5-55-1.5 57-1.5-44-1.5 47-1.5-59-1.5 50-1.5-48-1.5 49-1.5-54-1.5 64-1.5-67-1.5 48-1.5-33-1.5 41-1.5-48-1.5 43-1.5-38-1.5 31-1.5-42-1.5 40-1.5-28-1.5 32-1.5-34-1.5 53-1.5-67-1.5 58-1.5-57-1.5 58-1.5-51-1.5 62-1.5-58-1.5 62-1.5-52-1.5 33-1.5-50-1.5 64-1.5-66-1.5 61-1.5-47-1.5 40-1.5-40-1.5 26-1.5-38-1.5 40-1.5-41-1.5 24-1.5-18-1.5 19-1.5-20-1.5 12-1.5-20-1.5 22-1.5-23-1.5 23-1.5-18-1.5 16-1.5-15-1.5 13-1.5-14-1.5 19-1.5-18-1.5 16-1.5-16-1.5 18-1.5-16-1.5 17-1.5-16-1.5 30-1.5-35-1.5 30-1.5-30-1.5 32-1.5-30-1.5 34-1.5-31-1.5 36-1.5-32-1.5 41-1.5-42-1.5 46-1.5-51-1.5 42-1.5-35-1.5 52-1.5-45-1.5 50-1.5-54-1.5 58-1.5-72-1.5 57-1.5-40-1.5 34-1.5-51-1.5 62-1.5-43-1.5 39-1.5-48-1.5 53-1.5-54-1.5 42-1.5-45-1.5 47-1.5-45-1.5 42-1.5-40-1.5 48-1.5-45-1.5 34-1.5-30-1.5 45-1.5-55-1.5 38-1.5-46-1.5 58-1.5-58-1.5 49-1.5-42-1.5 43-1.5-36-1.5 34-1.5-44-1.5 32-1.5-38-1.5 36-1.5-34-1.5 41-1.5-31-1.5 21-1.5-28-1.5 32-1.5-33-1.5 26-1.5-26-1.5 19-1.5-14-1.5 12-1.5-16-1.5 16-1.5-14-1.5 8-1.5-15-1.5 10-1.5-9-1.5 3-1.5-4-1.5 3-1.5-2-1.5 2-1.5-2-1.5 1-1.5-2-1.5 1-1.5-1-1.5 2-1.5-2-1.5 2-1.5-2-1.5 3-1.5-3-1.5 4-1.5-3-1.5 5-1.5 0-1.5 1-1.5-3-1.5 3-1.5-1-1.5 1-1.5-2-1.5 3-1.5 0-1.5 1-1.5-3-1.5 2-1.5-1-1.5 2-1.5 0-1.5 2-1.5-4-1.5 2-1.5-3-1.5 4-1.5-2-1.5 3-1.5-2-1.5 2-1.5 0-1.5 0-1.5-2-1.5 4-1.5 0-1.5-1-1.5-4-1.5 5-1.5-1-1.5 0-1.5-2-1.5 4-1.5-6-1.5 6-1.5-5-1.5 3-1.5-4-1.5 8-1.5-3-1.5 0-1.5 1-1.5-1-1.5-2-1.5 3-1.5-2-1.5 3-1.5-6-1.5 3-1.5-2-1.5 6-1.5-8-1.5 8-1.5-2-1.5 1-1.5-3-1.5 0-1.5 3-1.5 0-1.5-1-1.5 1-1.5 1-1.5-4-1.5-2-1.5 3-1.5-4-1.5 4-1.5-2-1.5 4-1.5-3-1.5 0-1.5-3-1.5 5-1.5-6-1.5 6-1.5-3-1.5 0-1.5-3-1.5 2-1.5-1-1.5 3-1.5-2-1.5 0-1.5 1-1.5 0-1.5-3-1.5 2-1.5-2-1.5 0-1.5 0-1.5 0-1.5 1-1.5-1-1.5-2-1.5 3-1.5-1-1.5 1-1.5-1-1.5 1-1.5 0-1.5-1-1.5 3-1.5 0-1.5-2-1.5 3-1.5-2-1.5 1-1.5 0-1.5 2-1.5-1-1.5-1-1.5-1-1.5 4-1.5-2-1.5 0-1.5 0-1.5 2-1.5-3-1.5 6-1.5-8-1.5 7-1.5-1-1.5 2-1.5 0-1.5-5-1.5-7-1.5 13-1.5-13-1.5 12-1.5-16-1.5 16-1.5-14-1.5 14-1.5-16-1.5 21-1.5-19-1.5 21-1.5-23-1.5 18-1.5-16-1.5 17-1.5-14-1.5 16-1.5-21-1.5 19-1.5-19-1.5 15-1.5-12-1.5 15-1.5-14-1.5 18-1.5-18-1.5 10-1.5-9-1.5 15-1.5-20-1.5 15-1.5-13-1.5 12-1.5-11-1.5 18-1.5-19-1.5 15-1.5-18-1.5 16-1.5-13-1.5 16-1.5-17-1.5 16-1.5-15-1.5 16-1.5-15-1.5 10-1.5-12-1.5 15-1.5-12-1.5 9-1.5-14-1.5 17-1.5-13-1.5 13-1.5-12-1.5 9-1.5-9-1.5 9-1.5-12-1.5 17-1.5-19-1.5 15-1.5-14-1.5 22-1.5-18-1.5 17-1.5-16-1.5 11-1.5-16-1.5 21-1.5-17-1.5 20-1.5-18-1.5 15-1.5-15-1.5 17-1.5-24-1.5 28-1.5-28-1.5 21-1.5-14-1.5 15-1.5-17-1.5 20-1.5-21-1.5 21-1.5-24-1.5 21-1.5-19-1.5 23-1.5-23-1.5 23-1.5-21-1.5 18-1.5-14-1.5 22-1.5-23-1.5 26-1.5-28-1.5 25-1.5-25-1.5 24-1.5-28-1.5 23-1.5-19-1.5 21-1.5-23-1.5 26-1.5-28-1.5 24-1.5-20-1.5 26-1.5-26-1.5 30-1.5-25-1.5 20-1.5-30-1.5 37-1.5-30-1.5 31-1.5-38-1.5 34-1.5-24-1.5 16-1.5-15-1.5 17-1.5-24-1.5 34-1.5-27-1.5 28-1.5-28-1.5 24-1.5-24-1.5 23-1.5-28-1.5 30-1.5-24-1.5 17-1.5-21-1.5 26-1.5-26-1.5 33-1.5-35-1.5 27-1.5-22-1.5 17-1.5-18-1.5 25-1.5-31-1.5 26-1.5-21-1.5 19-1.5-21-1.5 32-1.5-39-1.5 37-1.5-33-1.5 34-1.5-28-1.5 28-1.5-24-1.5 22-1.5-24-1.5 23-1.5-28-1.5 30-1.5-24-1.5 23-1.5-23-1.5 35-1.5-30-1.5 26-1.5-27-1.5 37-1.5-38-1.5 25-1.5-28-1.5 35-1.5-35-1.5 33-1.5-41-1.5 46-1.5-42-1.5 30-1.5-30-1.5 34-1.5-31-1.5 22-1.5-29-1.5 33-1.5-33-1.5 34-1.5-24-1.5 33-1.5-44-1.5 42-1.5-41-1.5 39-1.5-28-1.5 37-1.5-36-1.5 31-1.5-37-1.5 35-1.5-44-1.5 55-1.5-53-1.5 57-1.5-48-1.5 36-1.5-30-1.5 30-1.5-35-1.5 41-1.5-39-1.5 26-1.5-39-1.5 56-1.5-47-1.5 43-1.5-48-1.5 47-1.5-50-1.5 46-1.5-35-1.5 25-1.5-35-1.5 41-1.5-44-1.5 44-1.5-39-1.5 46-1.5-47-1.5 35-1.5-35-1.5 33-1.5-22-1.5 32-1.5-40-1.5 34-1.5-39-1.5 49-1.5-49-1.5 51-1.5-42-1.5 34-1.5-36-1.5 44-1.5-45-1.5 34-1.5-28-1.5 29-1.5-25-1.5 37-1.5-49-1.5 43-1.5-33-1.5 42-1.5-44-1.5 49-1.5-51-1.5 34-1.5-35-1.5 41-1.5-48-1.5 49-1.5-35-1.5 34-1.5-35-1.5 35-1.5-48-1.5 47-1.5-39-1.5 51-1.5-61-1.5 43-1.5-36-1.5 58-1.5-52-1.5 58-1.5-57-1.5 54-1.5-46-1.5 44-1.5-52-1.5 78-1.5-89-1.5 83-1.5-80-1.5 64-1.5-50-1.5 32-1.5-36-1.5 39-1.5-39-1.5 24-1.5-25-1.5 23-1.5-32-1.5 34-1.5-40-1.5 43-1.5-32-1.5 37-1.5-45-1.5 50-1.5-51-1.5 81-1.5-77-1.5 51-1.5-59-1.5 71-1.5-69-1.5 54-1.5-42-1.5 45-1.5-52-1.5 42-1.5-44-1.5 53-1.5-48-1.5 48-1.5-53-1.5 46-1.5-42-1.5 33-1.5-32-1.5 43-1.5-39-1.5 47-1.5-38-1.5 39-1.5-54-1.5 45-1.5-36-1.5 28-1.5-30-1.5 34-1.5-45-1.5 47-1.5-39-1.5 26-1.5-39-1.5 41-1.5-32-1.5 32-1.5-39-1.5 24-1.5-23-1.5 23-1.5-20-1.5 9-1.5-15-1.5 4-1.5-6-1.5 3-1.5-3-1.5 3-1.5-3-1.5 2-1.5-1-1.5 1-1.5-2-1.5 1-1.5-1-1.5 0-1.5 0-1.5 0Z" fill="url(#wfill)" opacity="0.82"/></g>
<rect x="762.1" y="271" width="1.4" height="1024" fill="#c2be00"/><rect x="762" y="271" width="22.5" height="22.5" fill="#dcd800"/>
<rect x="1916.2" y="271" width="1.4" height="1024" fill="#04110d"/><rect x="1917.6" y="271" width="1.3" height="1024" fill="#19e0ad"/>
<rect x="2300" y="271" width="1.4" height="1024" fill="#04110d"/><rect x="2301.4" y="271" width="1.3" height="1024" fill="#19e0ad"/>
<rect x="2711.3" y="271" width="1.7" height="1024" fill="#16c79b"/>
<rect x="1917.2" y="1272.5" width="22.700" height="22.500" fill="#04fac6" stroke="#04110d" stroke-width="1.300"/>
<rect x="2690" y="1272.5" width="22.700" height="22.500" fill="#04fac6" stroke="#04110d" stroke-width="1.300"/>
<rect x="2289.5" y="771.3" width="22.700" height="22.500" fill="#04fac6" stroke="#04110d" stroke-width="1.300"/>
<path d="M49.33 186.88A8.65 8.65 0 1 1 38.67 186.88" fill="none" stroke="#f5820f" stroke-width="3.3" stroke-linecap="round"/><path d="M44 184.05V193.5" stroke="#f5820f" stroke-width="3.3" stroke-linecap="round"/>
<path d="M20.9 241.32H29.558V239.243H43.1V254.9H20.9ZM20.9 237.6H28.559V240.454H20.9Z" fill="#8a8a8a"/>
<path d="M863 246L870.1 240.8V251ZM906.9 246L899.9 240.8V251Z" fill="#41b4f6"/><rect x="873.7" y="234.9" width="4.5" height="12.3" fill="#41b4f6"/><rect x="873.7" y="246.7" width="6.4" height="10.2" fill="#41b4f6"/><rect x="883.9" y="234.9" width="2.1" height="12.3" fill="#41b4f6"/><rect x="881.9" y="246.7" width="6" height="10.2" fill="#41b4f6"/><rect x="891.8" y="234.9" width="4.4" height="12.3" fill="#41b4f6"/><rect x="889.9" y="246.7" width="6.3" height="10.2" fill="#41b4f6"/>
<path d="M3030.72 233.5V259.5M3045.28 233.5V259.5M3025 239.22H3051M3025 253.78H3051" stroke="#41b4f6" stroke-width="2.8" fill="none"/>
<path d="M2983 186H2974.500A3 3 0 0 0 2971.500 189V200A3 3 0 0 0 2974.500 203H2985.500A3 3 0 0 0 2988.500 200V193" fill="none" stroke="#5c5c5c" stroke-width="2.400"/><path d="M2979 195.500L2990 184.500M2983.500 183.500H2991V191" fill="none" stroke="#6a6a6a" stroke-width="2.600"/>
<path d="M3021.500 187.500L3034.500 200.500M3034.500 187.500L3021.500 200.500" stroke="#fff" stroke-width="3.200"/>
<text x="90.7" y="1321.7" font-family="Liberation Sans,sans-serif" font-size="18" fill="#8a8a8a" textLength="10.200" lengthAdjust="spacingAndGlyphs">R</text><path d="M86.4 1329.9H105" stroke="#8a8a8a" stroke-width="2.1"/><path d="M79.4 1331L86.9 1331L86.9 1323.3Z" fill="#8a8a8a"/>
<rect x="126.8" y="1309.1" width="2.3" height="22" fill="#dcd800"/><rect x="126.8" y="1309.1" width="10.3" height="9.5" fill="#dcd800"/>
<rect x="276" y="1309.1" width="2.3" height="22" fill="#7d7c27"/><rect x="268" y="1309.1" width="10.3" height="9.5" fill="#7d7c27"/>
<path d="M2524.4 1317.8H2550.1" stroke="#8a8a8a" stroke-width="2.2"/><path d="M2550.1 1318.9L2542.3 1318.9L2542.3 1311.4Z" fill="#8a8a8a"/><path d="M2556.3 1317.8H2575.3M2556.3 1321.5H2575.3" stroke="#8a8a8a" stroke-width="2.2"/><path d="M2582.6 1320L2574.9 1311.4L2574.9 1328.7Z" fill="#8a8a8a"/><path d="M2588.5 1317.8H2614.6M2588.5 1321.5H2614.6" stroke="#14f0bd" stroke-width="2.3"/><path d="M2614.6 1318.9L2606.5 1318.9L2606.5 1311.4Z" fill="#14f0bd"/><path d="M2588.5 1320.4L2596.4 1320.4L2596.4 1328.7Z" fill="#14f0bd"/>
<rect x="2638.4" y="1308.9" width="2.6" height="22.3" fill="#14f0bd"/><rect x="2638.4" y="1320.7" width="10.3" height="10.500" fill="#14f0bd"/>
<rect x="2786.4" y="1308.9" width="2.6" height="22.3" fill="#14f0bd"/><rect x="2778.7" y="1320.7" width="10.3" height="10.500" fill="#14f0bd"/>
<path d="M2919.7 1311.7L2929 1320.6L2919.7 1329.5Z" fill="#159470"/><path d="M2938.3 1311.7L2929 1320.6L2938.3 1329.5Z" fill="#159470"/><path d="M2919.7 1329.5L2929 1320.6L2938.3 1329.5Z" fill="#1db88c"/></svg>
<div class="a" style="left:7px;top:1355px;width:3058px;height:494px;background:#0d0d0d;border:4px solid #565656;border-radius:9px;box-sizing:border-box;"></div>
<div class="a" style="left:11px;top:1359px;width:8.5px;height:486px;background:#ff5a00;border-radius:4px 0 0 4px;"></div>
<span class="t" style="left:48.7px;top:1602.100px;font-size:23.300px;color:#f4f4f4;-webkit-text-stroke:0.3px #f4f4f4;transform:translate(-50%,-50%) rotate(-90deg) scaleX(0.90);transform-origin:50% 50%;">SAMPLER</span>
<div class="a" style="left:115px;top:1383px;width:1611px;height:438px;background:#555555;border-radius:13px;"></div>
<div class="a" style="left:115px;top:1383px;width:54px;height:438px;background:#3b3b3b;border-radius:13px 0 0 13px;"></div>
<span class="t" style="left:142.8px;top:1602.700px;font-size:21.500px;color:#f4f4f4;-webkit-text-stroke:0.3px #f4f4f4;transform:translate(-50%,-50%) rotate(-90deg) scaleX(0.91);transform-origin:50% 50%;">SAMPLER</span>
<div class="a" style="left:175px;top:1389px;width:137px;height:136.8px;background:#2c2c2c;border-radius:8px;"></div>
<div class="a" style="left:175px;top:1533.5px;width:137px;height:136px;background:#2c2c2c;border-radius:8px;"></div>
<div class="a" style="left:175px;top:1677.5px;width:137.5px;height:137px;background:#424242;border-radius:8px;"></div>
<div class="a" style="left:319px;top:1389px;width:106px;height:425px;background:#424242;border-radius:6px;"></div>
<span class="t" style="left:344.0px;top:1493.5px;font-size:20.8px;color:#8e8e8e;">Select</span>
<span class="t" style="left:348.2px;top:1637.7px;font-size:20.8px;color:#dcdcdc;transform:scaleX(1.0656);">Pitch</span>
<span class="t" style="left:334.7px;top:1781.7px;font-size:20.8px;color:#dcdcdc;transform:scaleX(1.0557);">Glide</span>
<div class="a" style="left:389.5px;top:1781px;width:21px;height:21px;background:#b4b4b4;border-radius:4.5px;"></div>
<span class="t" style="left:394.4px;top:1784.9px;font-size:16.3px;color:#3a3a3a;font-weight:700;transform:scaleX(1.1222);">L</span>
<div class="a" style="left:431px;top:1389px;width:1130px;height:258px;background:#1e1e1e;border-radius:3px;"></div>
<span class="t" style="left:472.3px;top:1405.8px;font-size:18.8px;color:#41b4f6;transform:scaleX(0.9653);">EM Mvoc Mantra E 70bpm 05.wav</span>
<span class="t" style="left:861.3px;top:1405.9px;font-size:22.4px;color:#41b4f6;transform:scaleX(0.9604);">100 %</span>
<span class="t" style="left:983.4px;top:1406.1px;font-size:20.2px;color:#8f8f8f;transform:scaleX(1.0108);">ROOT</span>
<span class="t" style="left:1062.8px;top:1405.3px;font-size:22.4px;color:#41b4f6;transform:scaleX(0.9974);">C3</span>
<span class="t" style="left:1122.9px;top:1405.3px;font-size:22.4px;color:#41b4f6;transform:scaleX(0.9737);">0 cents</span>
<span class="t" style="left:1298.2px;top:1406.1px;font-size:20.2px;color:#8f8f8f;transform:scaleX(1.0711);">GAIN</span>
<span class="t" style="left:1377.5px;top:1405.3px;font-size:22.4px;color:#41b4f6;transform:scaleX(0.9890);">0.0 dB</span>
<span class="t" style="left:437.1px;top:1613.4px;font-size:20.2px;color:#8f8f8f;transform:scaleX(0.9868);">PLAY</span>
<span class="t" style="left:587.7px;top:1613.6px;font-size:22.4px;color:#e0dc00;transform:scaleX(0.9549);">1.68 s</span>
<span class="t" style="left:728.3px;top:1613.6px;font-size:22.4px;color:#7d7c27;transform:scaleX(0.9549);">6.86 s</span>
<span class="t" style="left:950.4px;top:1613.6px;font-size:20.2px;color:#8f8f8f;">LOOP</span>
<span class="t" style="left:1178.0px;top:1613.9px;font-size:22.4px;color:#14f0bd;transform:scaleX(0.9688);">4.29 s</span>
<span class="t" style="left:1318.6px;top:1613.9px;font-size:22.4px;color:#14f0bd;transform:scaleX(0.9766);">6.09 s</span>
<span class="t" style="left:1468.4px;top:1613.9px;font-size:22.4px;color:#14f0bd;transform:scaleX(0.9484);">51.7 %</span>
<div class="a" style="left:431px;top:1653.5px;width:458px;height:160.5px;background:linear-gradient(#1d1d1d,#2e2e2e 45%,#2e2e2e);border-radius:5px;"></div>
<div class="a" style="left:767.5px;top:1653.5px;width:121.5px;height:160.5px;background:#1f1f1f;border-radius:0 5px 5px 0;"></div>
<div class="a" style="left:895px;top:1653.5px;width:314px;height:160.5px;background:linear-gradient(#1d1d1d,#2e2e2e 45%,#2e2e2e);border-radius:5px;"></div>
<div class="a" style="left:1215px;top:1653.5px;width:346px;height:160.5px;background:linear-gradient(#1d1d1d,#2e2e2e 45%,#2e2e2e);border-radius:5px;"></div>
<span class="t" style="left:446.8px;top:1669.2px;font-size:21.9px;color:#f4f4f4;-webkit-text-stroke:0.2px #f4f4f4;transform:scaleX(1.0160);">Repitch</span>
<span class="t" style="left:463.9px;top:1781.7px;font-size:20.8px;color:#dcdcdc;transform:scaleX(0.9871);">Speed</span>
<span class="t" style="left:792.7px;top:1665.5px;font-size:21.3px;color:#dcdcdc;transform:scaleX(1.0822);">Offsets</span>
<span class="t" style="left:803.0px;top:1702.0px;font-size:19.7px;color:#f5cf2e;-webkit-text-stroke:0.3px #f5cf2e;transform:scaleX(1.0241);">PLAY</span>
<span class="t" style="left:800.2px;top:1741.8px;font-size:19.7px;color:#1fd6a5;-webkit-text-stroke:0.3px #1fd6a5;transform:scaleX(1.0228);">LOOP</span>
<div class="a" style="left:775px;top:1773px;width:106px;height:34px;background:#1f5e4c;border-right:2.5px solid #27d6a8;box-sizing:border-box;"></div>
<span class="t" style="left:810.0px;top:1781.8px;font-size:19.7px;color:#22dcab;-webkit-text-stroke:0.3px #22dcab;transform:scaleX(0.9867);">LEN</span>
<div class="a" style="left:775px;top:1693px;width:2.2px;height:34px;background:#f5cf2e;"></div>
<div class="a" style="left:775px;top:1733px;width:2.2px;height:34px;background:#1fd6a5;"></div>
<span class="t" style="left:915.7px;top:1781.6px;font-size:20.8px;color:#e2e2e2;">2.25 kHz</span>
<span class="t" style="left:1231.6px;top:1669.3px;font-size:21.4px;color:#f4f4f4;-webkit-text-stroke:0.2px #f4f4f4;transform:scaleX(0.9808);">AHDSR</span>
<span class="t" style="left:1253.0px;top:1781.6px;font-size:20.8px;color:#dcdcdc;">A</span>
<span class="t" style="left:1316.5px;top:1781.6px;font-size:20.8px;color:#dcdcdc;">H</span>
<span class="t" style="left:1379.5px;top:1781.6px;font-size:20.8px;color:#dcdcdc;">D</span>
<span class="t" style="left:1445.5px;top:1781.6px;font-size:20.8px;color:#dcdcdc;">S</span>
<span class="t" style="left:1508.0px;top:1781.6px;font-size:20.8px;color:#dcdcdc;">R</span>
<div class="a" style="left:1567px;top:1389px;width:153.5px;height:66px;background:#2c2c2c;border-radius:6px;"></div>
<div class="a" style="left:1567px;top:1461px;width:153.5px;height:66px;background:#2c2c2c;border-radius:6px;"></div>
<div class="a" style="left:1567px;top:1533px;width:153.5px;height:281px;background:#424242;border-radius:6px;"></div>
<div class="a" style="left:1581px;top:1402.8px;width:18px;height:46.2px;background:#424242;"></div>
<div class="a" style="left:1581px;top:1475px;width:18px;height:46px;background:#424242;"></div>
<div class="a" style="left:1603px;top:1475px;width:18px;height:46px;background:#424242;"></div>
<div class="a" style="left:1625px;top:1475px;width:18px;height:46px;background:#424242;"></div>
<span class="t" style="left:1621.5px;top:1413.4px;font-size:20.4px;color:#f4f4f4;-webkit-text-stroke:0.2px #f4f4f4;transform:scaleX(1.0879);">Note</span>
<span class="t" style="left:1631.9px;top:1485.4px;font-size:20.4px;color:#f4f4f4;-webkit-text-stroke:0.2px #f4f4f4;transform:scaleX(0.9664);">FX</span>
<span class="t" style="left:1594.8px;top:1577.6px;font-size:20.2px;color:#dcdcdc;transform:scaleX(1.0400);">L</span>
<span class="t" style="left:1682.0px;top:1577.6px;font-size:20.2px;color:#dcdcdc;transform:scaleX(0.9538);">R</span>
<span class="t" style="left:1626.0px;top:1781.3px;font-size:20.8px;color:#dcdcdc;transform:scaleX(1.0847);">Out</span>
<svg class="ov" viewBox="0 0 3072 1920"><defs>
<linearGradient id="kl" x1="0" y1="0" x2="0" y2="1"><stop offset="0" stop-color="#f2f2f2"/><stop offset="1" stop-color="#bdbdbd"/></linearGradient>
<linearGradient id="kd" x1="0" y1="0" x2="0" y2="1"><stop offset="0" stop-color="#9a9a9a"/><stop offset="1" stop-color="#5a5a5a"/></linearGradient>
<linearGradient id="kdd" x1="0" y1="0" x2="0" y2="1"><stop offset="0" stop-color="#6e6e6e"/><stop offset="1" stop-color="#4a4a4a"/></linearGradient>
</defs><rect x="85" y="1399" width="18" height="18" fill="#f2d53c"/>
<rect x="1738" y="1399" width="18" height="18" fill="#f2d53c"/>
<path d="M85 1602H103M94 1593V1611" stroke="#8c8c8c" stroke-width="4.200"/>
<path d="M1738 1602H1756M1747 1593V1611" stroke="#8c8c8c" stroke-width="4.200"/>
<defs><linearGradient id="mg" x1="0" y1="0" x2="0" y2="1"><stop offset="0" stop-color="#8ed02a"/><stop offset="0.6" stop-color="#86c82a"/><stop offset="1" stop-color="#2f8c2a"/></linearGradient></defs>
<rect x="1738" y="1765" width="8" height="44" fill="url(#mg)"/><rect x="1748" y="1766" width="8" height="43" fill="url(#mg)"/>
<rect x="1738" y="1749" width="8" height="4" fill="#ff6a10"/><rect x="1748" y="1750" width="8" height="4" fill="#ff6a10"/>
<path d="M147.29 1403.32A8.6 8.6 0 1 1 136.71 1403.32" fill="none" stroke="#f5820f" stroke-width="3.3" stroke-linecap="round"/><path d="M142 1400.5V1409.9" stroke="#f5820f" stroke-width="3.3" stroke-linecap="round"/>
<path d="M131 1446.87H139.619V1444.71H153.1V1461H131ZM131 1443H138.625V1445.97H131Z" fill="#9a9a9a"/>
<path fill-rule="evenodd" d="M134 1718.800H150.100A5 5 0 0 1 155.100 1723.800V1736.100A5 5 0 0 1 150.100 1741.100H134A5 5 0 0 1 129 1736.100V1723.800A5 5 0 0 1 134 1718.800ZM135.300 1725.800A3 3 0 0 0 132.300 1728.800V1734.800A3 3 0 0 0 135.300 1737.800H148.800A3 3 0 0 0 151.800 1734.800V1728.800A3 3 0 0 0 148.800 1725.800Z" fill="#f5861a"/>
<circle cx="133.9" cy="1760" r="2.900" fill="#949494"/>
<circle cx="141.9" cy="1760" r="2.900" fill="#949494"/>
<circle cx="149.9" cy="1760" r="2.900" fill="#949494"/>
<circle cx="133.9" cy="1768" r="2.900" fill="#949494"/>
<circle cx="141.9" cy="1768" r="2.900" fill="#949494"/>
<circle cx="149.9" cy="1768" r="2.900" fill="#949494"/>
<circle cx="135.600" cy="1798" r="4.600" fill="#f5861a"/><path d="M135.600 1798H148" stroke="#f5861a" stroke-width="2.300"/><path d="M153.200 1798L147.200 1793.200V1802.800Z" fill="#f5861a"/>
<path d="M187.3 1401.4 L189.2 1401.6 L191.1 1402.3 L193.0 1403.4 L194.9 1405.0 L196.8 1406.9 L198.8 1409.3 L200.7 1412.0 L202.6 1415.1 L204.5 1418.5 L206.4 1422.1 L208.3 1426.0 L210.2 1430.0 L212.1 1434.2 L214.0 1438.5 L215.9 1442.8 L217.8 1447.1 L219.7 1451.4 L221.7 1455.6 L223.6 1459.6 L225.5 1463.5 L227.4 1467.1 L229.3 1470.5 L231.2 1473.6 L233.1 1476.3 L235.0 1478.7 L236.9 1480.6 L238.8 1482.2 L240.7 1483.3 L242.6 1484.0 L244.6 1484.2 L246.5 1484.0 L248.4 1483.3 L250.3 1482.2 L252.2 1480.6 L254.1 1478.7 L256.0 1476.3 L257.9 1473.6 L259.8 1470.5 L261.7 1467.1 L263.6 1463.5 L265.5 1459.6 L267.4 1455.6 L269.4 1451.4 L271.3 1447.1 L273.2 1442.8 L275.1 1438.5 L277.0 1434.2 L278.9 1430.0 L280.8 1426.0 L282.7 1422.1 L284.6 1418.5 L286.5 1415.1 L288.4 1412.0 L290.4 1409.3 L292.3 1406.9 L294.2 1405.0 L296.1 1403.4 L298.0 1402.3 L299.9 1401.6 L301.8 1401.4" fill="none" stroke="#ff8512" stroke-width="2.300" stroke-linecap="round"/>
<rect x="221.100" y="1461.500" width="10.400" height="10.400" rx="3.400" fill="#fff"/>
<circle cx="233.7" cy="1510" r="7" fill="#3aaecb"/><path d="M233.7 1510H253.2" stroke="#3aaecb" stroke-width="4"/><path d="M261.4 1510L252.2 1502L252.2 1518Z" fill="#3aaecb"/>
<circle cx="233.7" cy="1654" r="7" fill="#3aaecb"/><path d="M233.7 1654H253.2" stroke="#3aaecb" stroke-width="4"/><path d="M261.4 1654L252.2 1646L252.2 1662Z" fill="#3aaecb"/>
<rect x="274" y="1545" width="12.400" height="90.500" fill="#424242"/>
<path d="M187 1545H301" stroke="#3c3c3c" stroke-width="1"/>
<path d="M187 1557.3H301" stroke="#3c3c3c" stroke-width="1"/>
<path d="M187 1569.5H301" stroke="#3c3c3c" stroke-width="1"/>
<path d="M187 1581.4H301" stroke="#3c3c3c" stroke-width="1"/>
<path d="M187 1590.5H301" stroke="#3c3c3c" stroke-width="1"/>
<path d="M187 1602.7H301" stroke="#3c3c3c" stroke-width="1"/>
<path d="M187 1615H301" stroke="#3c3c3c" stroke-width="1"/>
<path d="M187 1626.4H301" stroke="#3c3c3c" stroke-width="1"/>
<path d="M187 1635.5H301" stroke="#3c3c3c" stroke-width="1"/>
<rect x="187.3" y="1590.5" width="12.7" height="13.5" fill="#5eaaf0"/>
<rect x="201.4" y="1590.5" width="12.2" height="35.9" fill="#4c92d6"/>
<rect x="216" y="1577.7" width="12" height="12.8" fill="#427eb8"/>
<rect x="230.5" y="1590.5" width="12.5" height="9" fill="#3a6c9e"/>
<rect x="245.5" y="1558.6" width="11.8" height="31.9" fill="#5eaaf0"/>
<rect x="259" y="1590.5" width="12.8" height="3.1" fill="#4c92d6"/>
<rect x="274" y="1590.5" width="12.4" height="35" fill="#ffffff"/>
<rect x="287.7" y="1590.5" width="13.3" height="24.5" fill="#3b72a8"/>
<path d="M235 1746H253M244 1737V1755" stroke="#a2a2a2" stroke-width="4.200"/>
<path d="M350.15 1483.13A33.3 33.3 0 1 1 393.85 1483.13" fill="none" stroke="#545454" stroke-width="4.4" stroke-linecap="butt"/><circle cx="372" cy="1458" r="26.6" fill="#262626"/><circle cx="372" cy="1458" r="24.4" fill="url(#kdd)"/><path d="M368.34 1461.93L356.69 1474.42" stroke="#8e8e8e" stroke-width="4.6"/>
<path d="M350.15 1627.13A33.3 33.3 0 1 1 393.85 1627.13" fill="none" stroke="#545454" stroke-width="4.4" stroke-linecap="butt"/><path d="M372.00 1568.70A33.3 33.3 0 0 1 382.84 1570.51" fill="none" stroke="#ff7f0e" stroke-width="4.4" stroke-linecap="butt"/><circle cx="372" cy="1602" r="26.6" fill="#262626"/><circle cx="372" cy="1602" r="24.4" fill="url(#kd)"/><path d="M373.75 1596.92L379.31 1580.77" stroke="#f0f0f0" stroke-width="4.6"/>
<path d="M350.15 1771.13A33.3 33.3 0 1 1 393.85 1771.13" fill="none" stroke="#545454" stroke-width="4.4" stroke-linecap="butt"/><circle cx="372" cy="1746" r="26.6" fill="#262626"/><circle cx="372" cy="1746" r="24.4" fill="url(#kd)"/><path d="M368.20 1749.80L356.13 1761.87" stroke="#f0f0f0" stroke-width="4.6"/><defs>
<clipPath id="mclip"><rect x="439" y="1439" width="1114" height="158"/></clipPath>
<linearGradient id="mteal" gradientUnits="userSpaceOnUse" x1="439" y1="0" x2="1470.18" y2="0">
<stop offset="0" stop-color="#13604c" stop-opacity="0.16"/>
<stop offset="0.132" stop-color="#13604c" stop-opacity="0.42"/>
<stop offset="0.3175" stop-color="#13604c" stop-opacity="0.88"/>
<stop offset="0.3177" stop-color="#13604c" stop-opacity="1"/>
<stop offset="0.6465" stop-color="#13604c" stop-opacity="1"/>
<stop offset="0.6467" stop-color="#13604c" stop-opacity="0.90"/>
<stop offset="0.82" stop-color="#13604c" stop-opacity="0.42"/>
<stop offset="1" stop-color="#13604c" stop-opacity="0.02"/>
</linearGradient>
<linearGradient id="mfill" gradientUnits="userSpaceOnUse" x1="-928.228" y1="0" x2="1787.42" y2="0">
<stop offset="0" stop-color="#ffffff"/>
<stop offset="0.4886" stop-color="#ffffff"/>
<stop offset="0.60" stop-color="#8cffe0"/>
<stop offset="0.6240" stop-color="#50ffd2"/>
<stop offset="0.7490" stop-color="#50ffd2"/>
<stop offset="0.80" stop-color="#9affe6"/>
<stop offset="0.8828" stop-color="#ffffff"/>
<stop offset="0.88285" stop-color="#4e4e4e"/>
<stop offset="1" stop-color="#4e4e4e"/>
</linearGradient>
<linearGradient id="mdark" gradientUnits="userSpaceOnUse" x1="439" y1="0" x2="470" y2="0"><stop offset="0" stop-color="#0c0c0c" stop-opacity="0.6"/><stop offset="1" stop-color="#0c0c0c" stop-opacity="0"/></linearGradient>
<linearGradient id="mdark2" gradientUnits="userSpaceOnUse" x1="1500" y1="0" x2="1553" y2="0"><stop offset="0" stop-color="#181818" stop-opacity="0"/><stop offset="1" stop-color="#181818" stop-opacity="0.75"/></linearGradient>
</defs>
<g clip-path="url(#mclip)">
<rect x="439" y="1439" width="1114" height="158" fill="url(#mteal)"/>
<rect x="439" y="1439" width="40" height="158" fill="url(#mdark)"/>
<path d="M439 1477.5H1553" stroke="url(#mfill)" stroke-width="1.2" opacity="0.8"/>
<g shape-rendering="crispEdges"><path d="M439.5 1462v27m2.5-29v31m2.5-32v31m3-31v33m2.5-33v33m2.5-35v33m2.5-32v33m2.5-33v34m3-33v31m2.5-36v38m2.5-35v36m2.5-38v40m2.5-40v39m3-41v43m2.5-45v46m2.5-43v40m2.5-42v45m2.5-41v40m3-44v43m2.5-39v40m2.5-43v40m2.5-40v41m2.5-39v40m3-42v44m2.5-47v50m2.5-53v54m2.5-54v54m2.5-51v48m3-50v52m2.5-53v51m2.5-49v54m2.5-57v56m2.5-52v50m3-54v54m2.5-54v51m2.5-47v49m2.5-48v48m2.5-48v44m3-40v43m2.5-43v40m2.5-40v42m2.5-44v42m2.5-40v41m3-38v35m2.5-36v36m2.5-32v30m2.5-29v29m2.5-30v30m3-28v25m2.5-24v25m2.5-23v21m2.5-19v19m2.5-18v17m3-16v17m2.5-17v16m2.5-16v15m2.5-15v14m2.5-13v13m3-15v16m2.5-17v18m2.5-19v21m2.5-22v23m2.5-24v24m3-25v28m2.5-31v32m2.5-31v30m2.5-28v28m2.5-27v25m3-24v24m2.5-24v24m2.5-26v26m2.5-25v27m2.5-29v30m3-29v29m2.5-32v31m2.5-28v28m2.5-27v24m2.5-24v23m3-20v18m2.5-17v16m2.5-15v14m2.5-12v10m2.5-9v8m3-7v7m2.5-6v5m2.5-5v5m2.5-4v3m2.5-3v3m3-2v1m2.5-2v3m2.5-6v7m2.5-9v11m2.5-13v15m3-19v21m2.5-23v26m2.5-29v30m2.5-32v35m2.5-37v37m3-39v39m2.5-38v40m2.5-42v42m2.5-42v45m2.5-45v45m3-42v44m2.5-46v43m2.5-44v46m2.5-42v39m2.5-41v43m3-42v38m2.5-39v38m2.5-36v36m2.5-34v31m2.5-27v28m3-28v25m2.5-22v21m2.5-19v17m2.5-14v11m2.5-9v8m3-8v8m2.5-7v7m2.5-6v5m2.5-4v3m2.5-4v4m3-5v7m2.5-9v10m2.5-13v15m2.5-19v21m2.5-25v26m3-27v30m2.5-30v29m2.5-30v33m2.5-35v33m2.5-31v32m3-32v36m2.5-37v35m2.5-35v37m2.5-39v40m2.5-38v38m3-39v42m2.5-42v41m2.5-41v41m2.5-42v42m2.5-42v38m3-35v37m2.5-37v34m2.5-31v31m2.5-30v27m2.5-28v28m3-28v28m2.5-27v25m2.5-25v26m2.5-25v25m2.5-24v22m3-21v20m2.5-19v19m2.5-18v17m2.5-17v18m2.5-17v16m3-17v17m2.5-20v21m2.5-24v27m2.5-33v33m2.5-32v33m3-33v34m2.5-37v39m2.5-37v40m2.5-43v42m2.5-40v42m3-40v37m2.5-40v39m2.5-37v39m2.5-38v36m2.5-36v36m3-33v33m2.5-34v32m2.5-30v29m2.5-31v33m2.5-31v28m3-27v28m2.5-29v28m2.5-28v31m2.5-31v30m2.5-32v32m3-30v30m2.5-31v34m2.5-37v36m2.5-36v35m2.5-33v35m3-36v36m2.5-35v33m2.5-35v37m2.5-35v33m2.5-32v33m3-37v37m2.5-34v35m2.5-37v35m2.5-37v39m2.5-37v36m3-35v36m2.5-37v36m2.5-37v38m2.5-39v40m2.5-37v36m3-35v33m2.5-33v35m2.5-33v31m2.5-32v32m2.5-33v32m3-29v29m2.5-30v29m2.5-29v28m2.5-26v27m2.5-26v24m3-25v28m2.5-29v27m2.5-27v27m2.5-25v25m2.5-25v26m3-26v28m2.5-26v25m2.5-26v24m2.5-22v24m2.5-26v25m3-23v23m2.5-23v22m2.5-22v22m2.5-23v22m2.5-21v22m3-22v20m2.5-18v20m2.5-21v19m2.5-19v19m2.5-17v16m3-17v18m2.5-18v18m2.5-17v17m2.5-18v17m2.5-18v17m3-16v16m2.5-14v14m2.5-14v13m2.5-12v12m2.5-13v12m3-10v10m2.5-10v10m2.5-9v7m2.5-7v7m2.5-7v7m3-6v5m2.5-5v4m2.5-4v4m2.5-3v3m2.5-3v2m3-2v2m2.5-2v3m2.5-3v3m2.5-3v3m2.5-4v4m3-4v4m2.5-4v4m2.5-4v5m2.5-5v5m2.5-5v5m3-5v5m2.5-5v5m2.5-5v5m2.5-5v5m2.5-5v5m3-5v5m2.5-5v5m2.5-5v5m2.5-5v5m2.5-5v5m3-5v5m2.5-5v5m2.5-5v5m2.5-5v5m2.5-6v6m3-6v6m2.5-6v6m2.5-5v5m2.5-5v5m2.5-5v5m3-5v6m2.5-6v5m2.5-6v6m2.5-5v5m2.5-5v5m3-5v5m2.5-5v5m2.5-5v5m2.5-5v5m2.5-5v5m3-5v5m2.5-5v5m2.5-5v5m2.5-5v5m2.5-5v4m3-4v4m2.5-3v3m2.5-3v3m2.5-3v3m2.5-3v3m3-3v3m2.5-3v3m2.5-3v3m2.5-3v3m2.5-3v3m3-3v3m2.5-3v3m2.5-3v3m2.5-3v3m2.5-4v4m3-4v5m2.5-5v5m2.5-8v11m2.5-15v19m2.5-21v22m3-22v21m2.5-22v21m2.5-21v22m2.5-25v25m2.5-29v31m3-34v37m2.5-37v37m2.5-38v38m2.5-43v44m2.5-40v40m3-46v48m2.5-45v46m2.5-47v48m2.5-50v50m2.5-49v55m3-56v54m2.5-54v54m2.5-50v50m2.5-52v49m2.5-44v43m3-44v45m2.5-43v42m2.5-44v42m2.5-38v39m2.5-37v35m3-34v31m2.5-27v25m2.5-25v25m2.5-26v27m2.5-28v26m3-26v27m2.5-26v25m2.5-24v26m2.5-28v26m2.5-25v27m3-26v25m2.5-25v24m2.5-27v28m2.5-32v38m2.5-43v44m3-42v41m2.5-45v49m2.5-46v49m2.5-50v48m2.5-49v53m3-51v48m2.5-46v45m2.5-49v50m2.5-47v46m2.5-48v44m3-42v41m2.5-41v43m2.5-42v39m2.5-37v37m2.5-36v33m3-32v34m2.5-33v32m2.5-33v32m2.5-29v28m2.5-27v25m3-27v28m2.5-26v26m2.5-27v25m2.5-23v24m2.5-24v24m3-25v25m2.5-25v25m2.5-26v28m2.5-29v29m2.5-32v32m3-37v40m2.5-43v44m2.5-45v46m2.5-45v47m2.5-47v49m3-51v51m2.5-47v45m2.5-46v47m2.5-50v50m2.5-45v41m3-43v43m2.5-40v41m2.5-39v39m2.5-36v35m2.5-37v39m3-41v43m2.5-43v42m2.5-41v42m2.5-45v47m2.5-43v40m3-43v46m2.5-47v44m2.5-43v44m2.5-43v44m2.5-43v42m3-45v42m2.5-41v45m2.5-47v44m2.5-43v46m2.5-45v43m3-43v45m2.5-45v43m2.5-47v48m2.5-47v45m2.5-46v48m3-45v43m2.5-43v42m2.5-43v43m2.5-45v44m2.5-42v44m3-46v48" stroke="url(#mfill)" stroke-width="1" fill="none" opacity="0.34"/><path d="M439 1461l1.5 6 1-5 1.5-1 1-1 1.5 5 1.5-5 1 2 1.5-3 1 4 1.5-3 1.5 1 1-2 1.5 7 1-8 1.5 3 1.5-4 1 7 1.5-7 1 8 1.5-8 1.5 7 1-6 1.5 1 1-3 1.5 3 1.5-7 1 11 1.5-8 1 1 1.5-2 1.5 6 1-4 1.5 5 1-6 1.5 9 1.5-8 1 5 1.5-6 1 7 1.5-7 1.5 9 1-8 1.5 6 1-6 1.5 5 1.5-5 1 6 1.5-8 1 3 1.5-5 1.5 2 1-2 1.5 4 1-6 1.5 4 1.5-1 1 5 1.5-11 1 8 1.5-6 1.5 4 1-2 1.5 1 1-4 1.5 10 1.5-8 1 3 1.5-5 1 9 1.5-8 1.5 12 1-10 1.5 9 1-10 1.5 9 1.5-7 1 8 1.5-6 1 10 1.5-7 1.5 0 1-3 1.5 5 1-3 1.5 6 1.5-2 1 1 1.5-3 1 7 1.5-4 1.5 3 1-2 1.5 7 1-4 1.5 1 1.5-1 1 1 1.5 1 1 1 1.5-2 1.5 5 1-3 1.5 1 1 0 1.5 3 1.5-3 1 3 1.5-1 1 1 1.5-2 1.5 1 1-1 1.5 2 1-1 1.5 1 1.5-1 1 2 1.5-4 1 3 1.5-4 1.5 1 1-4 1.5 3 1-4 1.5 3 1.5-2 1-1 1.5-3 1 3 1.5-1 1.5 1 1-1 1.5 2 1-2 1.5 6 1.5-4 1 4 1.5-4 1 2 1.5-2 1.5 1 1-1 1.5 2 1-3 1.5 3 1.5-3 1 3 1.5-4 1 2 1.5-1 1.5 2 1-1 1.5 1 1-1 1.5 3 1.5-2 1 4 1.5-2 1 2 1.5 0 1.5 2 1 0 1.5 1 1-1 1.5 2 1.5-1 1 2 1.5-1 1 2 1.5-1 1.5 1 1-1 1.5 1 1 0 1.5 1 1.5 0 1 0 1.5-1 1-1 1.5-1 1.5 0 1-1 1.5-1 1-2 1.5 1 1.5-5 1 3 1.5-7 1 3 1.5-6 1.5 3 1-2 1.5 1 1-4 1.5 3 1.5-5 1 3 1.5-2 1 3 1.5-6 1.5 6 1-5 1.5 0 1-2 1.5 3 1.5-2 1 6 1.5-3 1 5 1.5-5 1.5 1 1-2 1.5 6 1-5 1.5 1 1.5-3 1 4 1.5-3 1 2 1.5 0 1.5 2 1 1 1.5 3 1-1 1.5 1 1.5 1 1 1 1.5 1 1 4 1.5-1 1.5 2 1 0 1.5 3 1-1 1.5 1 1.5 0 1 0 1.5 0 1 1 1.5 0 1.5 1 1 0 1.5 0 1 0 1.5-1 1.5 0 1-1 1.5-1 1 0 1.5-2 1.5-1 1-2 1.5 0 1-4 1.5 1 1.5-4 1 1 1.5 0 1 1 1.5-1 1.5 0 1-1 1.5 0 1-1 1.5 1 1.5-2 1 2 1.5-4 1 4 1.5-3 1.5 3 1-2 1.5 3 1-4 1.5 4 1.5-7 1 5 1.5-5 1 3 1.5-4 1.5 4 1-1 1.5-1 1 0 1.5 3 1.5-2 1 5 1.5-2 1 4 1.5-2 1.5 2 1 0 1.5 0 1-1 1.5 3 1.5-2 1 2 1.5-2 1 3 1.5-2 1.5 1 1-1 1.5 3 1-3 1.5 4 1.5-3 1 4 1.5-3 1 3 1.5-3 1.5 3 1-2 1.5 1 1 0 1.5 1 1.5-2 1 3 1.5-4 1 0 1.5-4 1.5 2 1-7 1.5 0 1 0 1.5 2 1.5-4 1 2 1.5-2 1 3 1.5-5 1.5 3 1-3 1.5 2 1-3 1.5 5 1.5-4 1 6 1.5-5 1 2 1.5-2 1.5 4 1-3 1.5 5 1-4 1.5 5 1.5-3 1 2 1.5-3 1 5 1.5-5 1.5 3 1-2 1.5 1 1 0 1.5 4 1.5-4 1 3 1.5-4 1 4 1.5-4 1.5 3 1-2 1.5 2 1-4 1.5 5 1.5-4 1 4 1.5-5 1 3 1.5-2 1.5 3 1-4 1.5 3 1-2 1.5 3 1.5-4 1 5 1.5-5 1 6 1.5-6 1.5 4 1-5 1.5 4 1-4 1.5 6 1.5-6 1 5 1.5-4 1 3 1.5-4 1.5 5 1-4 1.5 4 1-4 1.5 1 1.5-3 1 5 1.5-3 1 2 1.5-3 1.5 2 1-2 1.5 2 1-1 1.5 2 1.5-2 1 5 1.5-4 1 2 1.5-2 1.5 4 1-4 1.5 2 1 0 1.5 2 1.5-1 1 3 1.5-3 1 4 1.5-4 1.5 3 1-2 1.5 3 1-3 1.5 0 1.5 0 1 1 1.5-1 1 2 1.5-2 1.5 4 1-4 1.5 2 1-2 1.5 3 1.5-1 1 2 1.5-2 1 2 1.5-3 1.5 3 1-2 1.5 3 1-2 1.5 3 1.5-3 1 3 1.5-1 1-1 1.5 1 1.5 0 1-1 1.5 3 1-2 1.5 1 1.5-2 1 2 1.5-1 1 1 1.5-1 1.5 2 1-2 1.5 2 1-1 1.5 1 1.5-1 1 1 1.5-1 1 2 1.5-2 1.5 1 1-1 1.5 2 1-2 1.5 1 1.5 0 1 1 1.5-1 1 2 1.5-1 1.5 1 1-1 1.5 2 1-1 1.5 1 1.5 0 1 0 1.5 0 1 1 1.5-1 1.5 1 1 0 1.5 0 1 0 1.5 1 1.5-1 1 1 1.5 0 1 1 1.5-1 1.5 1 1 0 1.5 0 1 0 1.5 0 1.5 0 1 0 1.5 0 1 0 1.5 0 1.5 0 1 0 1.5 0 1 0 1.5 0 1.5-1 1 0 1.5 0 1 0 1.5 0 1.5 1 1-1 1.5 0 1 0 1.5 0 1.5 0 1 0 1.5 0 1 0 1.5 0 1.5 0 1 0 1.5 0 1 0 1.5 0 1.5 0 1 0 1.5 0 1 0 1.5 0 1.5 0 1 0 1.5 0 1 0 1.5 0 1.5 0 1 0 1.5-1 1 1 1.5-1 1.5 1 1-1 1.5 0 1 1 1.5-1 1.5 0 1 1 1.5-1 1 0 1.5 0 1.5 1 1-1 1.5 0 1 0 1.5 1 1.5-1 1 0 1.5 0 1 1 1.5-1 1.5 1 1-1 1.5 1 1-1 1.5 1 1.5 0 1 0 1.5 0 1 0 1.5 0 1.5 0 1 0 1.5 0 1 0 1.5 0 1.5 0 1 0 1.5 0 1 0 1.5 0 1.5 0 1 0 1.5 0 1 0 1.5 0 1.5 0 1 1 1.5 0 1 0 1.5 0 1.5 0 1 0 1.5 0 1 0 1.5 0 1.5 0 1 0 1.5 0 1 0 1.5 0 1.5 0 1 0 1.5 0 1 0 1.5 0 1.5 0 1 0 1.5 0 1 0 1.5 0 1.5 0 1 0 1.5 0 1 0 1.5 0 1.5-1 1 0 1.5 0 1 0 1.5-2 1.5-1 1-3 1.5 0 1-3 1.5 1 1.5-1 1 3 1.5-4 1 4 1.5-5 1.5 3 1-2 1.5 2 1-6 1.5-1 1.5-2 1 6 1.5-12 1 10 1.5-9 1.5 9 1-9 1.5 8 1-11 1.5 3 1.5-5 1 12 1.5-10 1 6 1.5-8 1.5 4 1-3 1.5 2 1-6 1.5 7 1.5-3 1 8 1.5-7 1 5 1.5-5 1.5 10 1-11 1.5 6 1-3 1.5 7 1.5-6 1 10 1.5-6 1 5 1.5-3 1.5 4 1-4 1.5 6 1-5 1.5 5 1.5-4 1 8 1.5-6 1 6 1.5-6 1.5 5 1-4 1.5 5 1-5 1.5 4 1.5-3 1 5 1.5-5 1 4 1.5-3 1.5 4 1-5 1.5 1 1-1 1.5 1 1.5-2 1 5 1.5-4 1 2 1.5-4 1.5 3 1-9 1.5 7 1-7 1.5 4 1.5-6 1 2 1.5-6 1 9 1.5-10 1.5 6 1-6 1.5 6 1-2 1.5 5 1.5-7 1 9 1.5-8 1 6 1.5-3 1.5 1 1-3 1.5 5 1-1 1.5 1 1.5-3 1 3 1.5-2 1 6 1.5-6 1.5 5 1-2 1.5 1 1-2 1.5 5 1.5-3 1 5 1.5-4 1 3 1.5-2 1.5 3 1-4 1.5 3 1-3 1.5 3 1.5 0 1 0 1.5 0 1 3 1.5-5 1.5 4 1-3 1.5 3 1-1 1.5 3 1.5-5 1 3 1.5-3 1 1 1.5-2 1.5 2 1-4 1.5 4 1-8 1.5 5 1.5-5 1 5 1.5-9 1 2 1.5-4 1.5 8 1-10 1.5 10 1-10 1.5 4 1.5-6 1 5 1.5-2 1 6 1.5-5 1.5 9 1-10 1.5 3 1-3 1.5 6 1.5-3 1 7 1.5-6 1 4 1.5-2 1.5 4 1-4 1.5 5 1-4 1.5 3 1.5-4 1 3 1.5-2 1 4 1.5-7 1.5 7 1-7 1.5 5 1-5 1.5 8 1.5-7 1 3 1.5-3 1 2 1.5 0 1.5 5 1-6 1.5 4 1-4 1.5 3 1.5-4 1 2 1.5 0 1 2 1.5-3 1.5 1 1-1 1.5 4 1-3 1.5 0 1.5-4 1 6 1.5-4 1 3 1.5-3 1.5 5 1-4 1.5 1 1-3 1.5 5 1.5-4 1 1 1.5-4 1 4 1.5-4 1.5 8 1-7 1.5 5 1-3 1.5 1 1.5-1 0 40-1.5-5-1.5 4-1-1-1.5 3-1-3-1.5 2-1.5-3-1 3-1.5-2-1 1-1.5 0-1.5 1-1-2-1.5 3-1-2-1.5 2-1.5-5-1 4-1.5-3-1 5-1.5-4-1.5 3-1-4-1.5 5-1-3-1.5 3-1.5-2-1 2-1.5-5-1 5-1.5-5-1.5 4-1 0-1.5 0-1 0-1.5 1-1.5-2-1 4-1.5-5-1 5-1.5-3-1.5 3-1-4-1.5 4-1-6-1.5 5-1.5-3-1 1-1.5-2-1 1-1.5 0-1.5 0-1-2-1.5 2-1-2-1.5 1-1.5-1-1 3-1.5-4-1 4-1.5-4-1.5 4-1-5-1.5 5-1-7-1.5 6-1.5-3-1 4-1.5-2-1 2-1.5-4-1.5 4-1-2-1.5 2-1-4-1.5 3-1.5-2-1 0-1.5-2-1 1-1.5-4-1.5 4-1-4-1.5 3-1-2-1.5 0-1.5-3-1 3-1.5-2-1 1-1.5-2-1.5 1-1-2-1.5 3-1-1-1.5 1-1.5-3-1 4-1.5-4-1 4-1.5-4-1.5 4-1-4-1.5 6-1-5-1.5 5-1.5-3-1 4-1.5-3-1 2-1.5-3-1.5 5-1-2-1.5 2-1-5-1.5 6-1.5-4-1 6-1.5-3-1 2-1.5-1-1.5 2-1-2-1.5 3-1-1-1.5 2-1.5-5-1 5-1.5-1-1 6-1.5-5-1.5 3-1-10-1.5 11-1-8-1.5 4-1.5-1-1 1-1.5-5-1 5-1.5-8-1.5 4-1-6-1.5 3-1-6-1.5 5-1.5-6-1 5-1.5-3-1 3-1.5-2-1.5 2-1-2-1.5 3-1-3-1.5 3-1.5-4-1 4-1.5-4-1 4-1.5-3-1.5 2-1-2-1.5 2-1-4-1.5 3-1.5-2-1 2-1.5 0-1 3-1.5-1-1.5 0-1 1-1.5 2-1-6-1.5 6-1.5-5-1 8-1.5-7-1 6-1.5-5-1.5 8-1-9-1.5 9-1-5-1.5 4-1.5-3-1 5-1.5-5-1 4-1.5-7-1.5 9-1-4-1.5 3-1-5-1.5 4-1.5-5-1 2-1.5-3-1 2-1.5-3-1.5 1-1-1-1.5 3-1-6-1.5 7-1.5-5-1 3-1.5-4-1 2-1.5-4-1.5 3-1-6-1.5 3-1-2-1.5 2-1.5-4-1 3-1.5 0-1 0-1.5-2-1.5 3-1-3-1.5 2-1-3-1.5-1-1.5-2-1 0-1.5-1-1 1-1.5-1-1.5 0-1 0-1.5 0-1-1-1.5 1-1.5-1-1 1-1.5-1-1 1-1.5 0-1.5 0-1-1-1.5 1-1 0-1.5 0-1.5 0-1 0-1.5 0-1 0-1.5 0-1.5 0-1 0-1.5 0-1 0-1.5 0-1.5 0-1 0-1.5 0-1 0-1.5 0-1.5 1-1-1-1.5 1-1 0-1.5 0-1.5 0-1 0-1.5-1-1 1-1.5 0-1.5 0-1 0-1.5 0-1 0-1.5 0-1.5 0-1 0-1.5 0-1 0-1.5 0-1.5 0-1 0-1.5 0-1 0-1.5 0-1.5 0-1 0-1.5 0-1 0-1.5 0-1.5 0-1 0-1.5 0-1 0-1.5 0-1.5 0-1 0-1.5 0-1 0-1.5 0-1.5 0-1 0-1.5 0-1 0-1.5 0-1.5 0-1 0-1.5 0-1 0-1.5 0-1.5 0-1 0-1.5 0-1 0-1.5 0-1.5 0-1 0-1.5 0-1 0-1.5 0-1.5 0-1 0-1.5 0-1 0-1.5 0-1.5 0-1 0-1.5 0-1 0-1.5 0-1.5 0-1 0-1.5 0-1 0-1.5 0-1.5-1-1 1-1.5-1-1 0-1.5 0-1.5 0-1 0-1.5 0-1 0-1.5 0-1.5 0-1 0-1.5-1-1 0-1.5 0-1.5 0-1 0-1.5 1-1 0-1.5 0-1.5 0-1 1-1.5-1-1 1-1.5 0-1.5 1-1-1-1.5 1-1 0-1.5 1-1.5 0-1 1-1.5-1-1 1-1.5 0-1.5 1-1-1-1.5 2-1-2-1.5 2-1.5-1-1 1-1.5-1-1 2-1.5-1-1.5 1-1-2-1.5 2-1-1-1.5 1-1.5 0-1 1-1.5-3-1 2-1.5 0-1.5 1-1-2-1.5 1-1 0-1.5 2-1.5-3-1 2-1.5-2-1 3-1.5-2-1.5 2-1-1-1.5 1-1-2-1.5 2-1.5-3-1 3-1.5-2-1 3-1.5-1-1.5 1-1-2-1.5 3-1-3-1.5 2-1.5-1-1 2-1.5-3-1 3-1.5-1-1.5 2-1-2-1.5 2-1-4-1.5 3-1.5-2-1 2-1.5-2-1 2-1.5-2-1.5 1-1-1-1.5 2-1-2-1.5 2-1.5-2-1 2-1.5-4-1 4-1.5-2-1.5 3-1-4-1.5 4-1-3-1.5 4-1.5-2-1 3-1.5-3-1 2-1.5 0-1.5 1-1-2-1.5 2-1-2-1.5 4-1.5-2-1 0-1.5-4-1 6-1.5-3-1.5 3-1-3-1.5 2-1-1-1.5 1-1.5-3-1 3-1.5-4-1 4-1.5-5-1.5 5-1-3-1.5 2-1-4-1.5 5-1.5-3-1 2-1.5-2-1 3-1.5-4-1.5 3-1-3-1.5 3-1-3-1.5 2-1.5-1-1 2-1.5-4-1 4-1.5-4-1.5 3-1-2-1.5 1-1-3-1.5 3-1.5-2-1 2-1.5-4-1 2-1.5 0-1.5 0-1-2-1.5 3-1-2-1.5 3-1.5-3-1 2-1.5-1-1 2-1.5 0-1.5 0-1 0-1.5 1-1 0-1.5 1-1.5-4-1 4-1.5-2-1 3-1.5 0-1.5 0-1-2-1.5 2-1-4-1.5 3-1.5-5-1 5-1.5-3-1 2-1.5-3-1.5 1-1-1-1.5-1-1-1-1.5 0-1.5-3-1 2-1.5-2-1 1-1.5-1-1.5 1-1-1-1.5 0-1-1-1.5 2-1.5 0-1 1-1.5-1-1 2-1.5-1-1.5 1-1-1-1.5 2-1-1-1.5 2-1.5-1-1 1-1.5-1-1 3-1.5-3-1.5 3-1-3-1.5 4-1-2-1.5 3-1.5-1-1 2-1.5-2-1 3-1.5-2-1.5 4-1-4-1.5 3-1-2-1.5 3-1.5-3-1 4-1.5-4-1 3-1.5-2-1.5 2-1-2-1.5 1-1-2-1.5 1-1.5-5-1 3-1.5-1-1 1-1.5-3-1.5 1-1-1-1.5 1-1-3-1.5 1-1.5-1-1 1-1.5-3-1 3-1.5-3-1.5 1-1-2-1.5 0-1-2-1.5 0-1.5-2-1 1-1.5-2-1 0-1.5-1-1.5 0-1 0-1.5 0-1 0-1.5 1-1.5-1-1 1-1.5 0-1 1-1.5 0-1.5 1-1 0-1.5 1-1-1-1.5 3-1.5 0-1 2-1.5-1-1 3-1.5-1-1.5 3-1-2-1.5 3-1 0-1.5 1-1.5-1-1 3-1.5-2-1 2-1.5-1-1.5 3-1-5-1.5 5-1-4-1.5 3-1.5-1-1 3-1.5-4-1 3-1.5-6-1.5 4-1-2-1.5 3-1-3-1.5 0-1.5-1-1 2-1.5-4-1 3-1.5-2-1.5 0-1-2-1.5 1-1-3-1.5 2-1.5-3-1 2-1.5-5-1 2-1.5-3-1.5 0-1-1-1.5 0-1-1-1.5 0-1.5-1-1 0-1.5-1-1 0-1.5 0-1.5 1-1 0-1.5 0-1 0-1.5 1-1.5-1-1 1-1.5 0-1 1-1.5 0-1.5 1-1-1-1.5 2-1-2-1.5 3-1.5-2-1 4-1.5-3-1 3-1.5-2-1.5 3-1-3-1.5 5-1-2-1.5 5-1.5-5-1 6-1.5-4-1 2-1.5-2-1.5 3-1-3-1.5 1-1-5-1.5 6-1.5-5-1 2-1.5-4-1 5-1.5-3-1.5 2-1 1-1.5 1-1-2-1.5 1-1.5-2-1 2-1.5-2-1 3-1.5-5-1.5 2-1-1-1.5 0-1-2-1.5 2-1.5-3-1 2-1.5-2-1 1-1.5-2-1.5 2-1-1-1.5 1-1-1-1.5 3-1.5-3-1 2-1.5-1-1 2-1.5-2-1.5 2-1-2-1.5 3-1-3-1.5 3-1.5-3-1 5-1.5-5-1 6-1.5-5-1.5 4-1-1-1.5 4-1-2-1.5 3-1.5-2-1 2-1.5-4-1 4-1.5 0-1.5 0-1-3-1.5 5-1-3-1.5 4-1.5-5-1 3-1.5-6-1 8-1.5-8-1.5 8-1-4-1.5 3-1-5-1.5 8-1.5-4-1 1-1.5 1-1 4-1.5-10-1.5 8-1-1-1.5 2-1-2-1.5 1-1.5-6-1 8-1.5-4-1 4-1.5-9-1.5 7-1-5-1.5 7-1-10-1.5 9-1.5-6-1 4-1.5-6-1 2-1.5-1-1.5 0-1-4-1.5 4-1-3-1.5 2-1.5-2-1 3-1.5-6-1 5-1.5-3-1.5 5-1-5-1.5 6-1-4-1.5 4-1.5-3-1 2-1.5 0-1 2-1.5-6-1.5 7-1-6-1.5 5-1-3-1.5 1-1.5-4-1 3-1.5-5-1 5-1.5-5-1.5 5-1-2-1.5 2-1-2-1.5 0-1.5-3-1 5-1.5-6-1 6-1.5-3-1.5 3-1-5-1.5 2-1-2-1.5 2Z" fill="url(#mfill)" opacity="0.26"/><path d="M439 1466l1.5 4 1-4 1.5 4 1-8 1.5 6 1.5-7 1 8 1.5-9 1 9 1.5-9 1.5 9 1-5 1.5 7 1-7 1.5 5 1.5-11 1 12 1.5-11 1 6 1.5-6 1.5 9 1-7 1.5 4 1-8 1.5 12 1.5-7 1 6 1.5-5 1 2 1.5-7 1.5 12 1-11 1.5 8 1-4 1.5 8 1.5-6 1 6 1.5-6 1 2 1.5-3 1.5 7 1-7 1.5 5 1-9 1.5 11 1.5-9 1 4 1.5-6 1 9 1.5-9 1.5 6 1-10 1.5 8 1-8 1.5 11 1.5-8 1 8 1.5-10 1 11 1.5-10 1.5 3 1-8 1.5 13 1-12 1.5 9 1.5-8 1 11 1.5-7 1 5 1.5-6 1.5 6 1-2 1.5 7 1-8 1.5 3 1.5-7 1 10 1.5-6 1 4 1.5-4 1.5 8 1-11 1.5 12 1-10 1.5 9 1.5-9 1 4 1.5-5 1 11 1.5-7 1.5 4 1-2 1.5 3 1-3 1.5 7 1.5-7 1 6 1.5-3 1 5 1.5-6 1.5 4 1 0 1.5 3 1-3 1.5 3 1.5-4 1 4 1.5-4 1 5 1.5-3 1.5 2 1-2 1.5 3 1-3 1.5 3 1.5-3 1 2 1.5-4 1 4 1.5-3 1.5 3 1-5 1.5 2 1-2 1.5 1 1.5-3 1 3 1.5-4 1 2 1.5-3 1.5 4 1-4 1.5 8 1-5 1.5 2 1.5 0 1 2 1.5-4 1 6 1.5-6 1.5 4 1-2 1.5 3 1-4 1.5 5 1.5-5 1 4 1.5-5 1 6 1.5-7 1.5 5 1-4 1.5 5 1-2 1.5 1 1.5-2 1 4 1.5-2 1 3 1.5-2 1.5 2 1-1 1.5 1 1-1 1.5 2 1.5-1 1 1 1.5-1 1 2 1.5-2 1.5 2 1-1 1.5 1 1-1 1.5 1 1.5 0 1 0 1.5-1 1 0 1.5-1 1.5 1 1-3 1.5 0 1-2 1.5 0 1.5-3 1 2 1.5-6 1 2 1.5-3 1.5 6 1-10 1.5 5 1-6 1.5 8 1.5-5 1 4 1.5-4 1 1 1.5-3 1.5 3 1-5 1.5 8 1-10 1.5 6 1.5-4 1 9 1.5-5 1 6 1.5-7 1.5 4 1-6 1.5 8 1-6 1.5 5 1.5-6 1 3 1.5-6 1 8 1.5-3 1.5 5 1-5 1.5 8 1-5 1.5 6 1.5-5 1 4 1.5-2 1 4 1.5-1 1.5 3 1 0 1.5 2 1-1 1.5 1 1.5-1 1 1 1.5 0 1 1 1.5-1 1.5 1 1 0 1.5 1 1-1 1.5 0 1.5-1 1 0 1.5-2 1 2 1.5-4 1.5 1 1-4 1.5 3 1-5 1.5 3 1.5-4 1 4 1.5-7 1 7 1.5-5 1.5 4 1-4 1.5 2 1-3 1.5 2 1.5-4 1 7 1.5-3 1 1 1.5-3 1.5 2 1-2 1.5 4 1-7 1.5 7 1.5-4 1 4 1.5-4 1 4 1.5-6 1.5 3 1-5 1.5 6 1-1 1.5 4 1.5-4 1 3 1.5-3 1 5 1.5-3 1.5 5 1-4 1.5 4 1-5 1.5 5 1.5-5 1 2 1.5 0 1 3 1.5-3 1.5 2 1-1 1.5 1 1-2 1.5 4 1.5-2 1 1 1.5-1 1 2 1.5-2 1.5 3 1-2 1.5 3 1-4 1.5 4 1.5-4 1 2 1.5-2 1 1 1.5-4 1.5 3 1-6 1.5 2 1-2 1.5 2 1.5-4 1 3 1.5-1 1 0 1.5-4 1.5 7 1-5 1.5 7 1-8 1.5 5 1.5-6 1 5 1.5-2 1 4 1.5-4 1.5 3 1-3 1.5 3 1-3 1.5 4 1.5-3 1 2 1.5-4 1 4 1.5-2 1.5 3 1-4 1.5 5 1-5 1.5 6 1.5-3 1 0 1.5-3 1 4 1.5-3 1.5 4 1-4 1.5 1 1-2 1.5 4 1.5-4 1 2 1.5-5 1 5 1.5-4 1.5 3 1-3 1.5 6 1-5 1.5 5 1.5-4 1 5 1.5-7 1 7 1.5-7 1.5 3 1-2 1.5 6 1-10 1.5 7 1.5-6 1 8 1.5-5 1 2 1.5-4 1.5 4 1-3 1.5 3 1-6 1.5 9 1.5-9 1 9 1.5-9 1 9 1.5-9 1.5 10 1-10 1.5 8 1-6 1.5 5 1.5-5 1 7 1.5-4 1 5 1.5-8 1.5 5 1-1 1.5 2 1-4 1.5 7 1.5-6 1 5 1.5-6 1 7 1.5-4 1.5 2 1-3 1.5 6 1-7 1.5 5 1.5-5 1 5 1.5-2 1 4 1.5-5 1.5 3 1-4 1.5 4 1-3 1.5 6 1.5-4 1 3 1.5-3 1 4 1.5-4 1.5 4 1-3 1.5 2 1-3 1.5 4 1.5-3 1 3 1.5-2 1 2 1.5-2 1.5 2 1 0 1.5 1 1-2 1.5 2 1.5-2 1 3 1.5-3 1 3 1.5-3 1.5 3 1-2 1.5 2 1-1 1.5 1 1.5-2 1 1 1.5 0 1 1 1.5-3 1.5 2 1-2 1.5 3 1-2 1.5 2 1.5-3 1 2 1.5-1 1 2 1.5-2 1.5 3 1-3 1.5 3 1-2 1.5 2 1.5-2 1 3 1.5-2 1 1 1.5 0 1.5 2 1-1 1.5 0 1 0 1.5 1 1.5-1 1 1 1.5-1 1 1 1.5 0 1.5 1 1-1 1.5 0 1 1 1.5 0 1.5-1 1 1 1.5-1 1 0 1.5 0 1.5 0 1 0 1.5 0 1 0 1.5-1 1.5 1 1 0 1.5-1 1 1 1.5-1 1.5 1 1-1 1.5 1 1-1 1.5 0 1.5 0 1 1 1.5-1 1 1 1.5-1 1.5 0 1 0 1.5 0 1 0 1.5 0 1.5 0 1 1 1.5-1 1 0 1.5 0 1.5 0 1 0 1.5 0 1 0 1.5 0 1.5 0 1 0 1.5 0 1 1 1.5-1 1.5 0 1-1 1.5 1 1-1 1.5 1 1.5 0 1 0 1.5 0 1 1 1.5-1 1.5 0 1 0 1.5 0 1 0 1.5 0 1.5-1 1 0 1.5 1 1 0 1.5-1 1.5 1 1 0 1.5 0 1 0 1.5 0 1.5 0 1 0 1.5 0 1 0 1.5 0 1.5 0 1 0 1.5 0 1 0 1.5 0 1.5 0 1 0 1.5 0 1 1 1.5-1 1.5 0 1 0 1.5 1 1-1 1.5 0 1.5 1 1 0 1.5 0 1 0 1.5 0 1.5 0 1 0 1.5 0 1 0 1.5 0 1.5 0 1 0 1.5 0 1 1 1.5-1 1.5 1 1-1 1.5 1 1-1 1.5 1 1.5-1 1 1 1.5-1 1 1 1.5-1 1.5 1 1-1 1.5 0 1 0 1.5 1 1.5-1 1 0 1.5-1 1 1 1.5-2 1.5 0 1-3 1.5 2 1-3 1.5 1 1.5-2 1 2 1.5-2 1 1 1.5-2 1.5 4 1-6 1.5 4 1-7 1.5 5 1.5-8 1 4 1.5-11 1 8 1.5-7 1.5 9 1-6 1.5 8 1-10 1.5 6 1.5-9 1 11 1.5-12 1 9 1.5-11 1.5 12 1-12 1.5 7 1-7 1.5 16 1.5-18 1 17 1.5-17 1 19 1.5-12 1.5 12 1-9 1.5 10 1-11 1.5 8 1.5-7 1 5 1.5-4 1 7 1.5-5 1.5 4 1-6 1.5 10 1-6 1.5 8 1.5-6 1 6 1.5-2 1 5 1.5-8 1.5 5 1-2 1.5 5 1-5 1.5 4 1.5-5 1 5 1.5-6 1 6 1.5-3 1.5 4 1-6 1.5 5 1-5 1.5 4 1.5-2 1 2 1.5-4 1 3 1.5-3 1.5 2 1-6 1.5 7 1-8 1.5 7 1.5-6 1 7 1.5-8 1 5 1.5-4 1.5 5 1-6 1.5 6 1-6 1.5 3 1.5-5 1 4 1.5-3 1 8 1.5-14 1.5 7 1-1 1.5 5 1-10 1.5 11 1.5-9 1 8 1.5-8 1 11 1.5-11 1.5 9 1-9 1.5 10 1-8 1.5 7 1.5-4 1 6 1.5-8 1 11 1.5-11 1.5 7 1-2 1.5 5 1-4 1.5 4 1.5-6 1 4 1.5-2 1 4 1.5-5 1.5 6 1-4 1.5 4 1-3 1.5 1 1.5-2 1 2 1.5-5 1 5 1.5-5 1.5 5 1-5 1.5 4 1-6 1.5 8 1.5-12 1 10 1.5-13 1 8 1.5-3 1.5 5 1-6 1.5 2 1-8 1.5 8 1.5-5 1 9 1.5-13 1 6 1.5-8 1.5 15 1-12 1.5 8 1-11 1.5 9 1.5-4 1 8 1.5-5 1 4 1.5-5 1.5 9 1-9 1.5 8 1-4 1.5 1 1.5-1 1 3 1.5-4 1 4 1.5-3 1.5 5 1-7 1.5 8 1-8 1.5 3 1.5-5 1 7 1.5-7 1 7 1.5-5 1.5 5 1-7 1.5 5 1-6 1.5 5 1.5-5 1 6 1.5-5 1 8 1.5-8 1.5 4 1-8 1.5 11 1-8 1.5 8 1.5-10 1 9 1.5-9 1 8 1.5-7 1.5 6 1-5 1.5 5 1-5 1.5 7 1.5-6 1 8 1.5-7 1 5 1.5-6 1.5 7 1-7 1.5 6 1-2 1.5 3 1.5-8 0 34-1.5-5-1.5 5-1-5-1.5 8-1-7-1.5 5-1.5-2-1 3-1.5-3-1 4-1.5-6-1.5 6-1-5-1.5 5-1-6-1.5 7-1.5-5-1 5-1.5-8-1 8-1.5-6-1.5 5-1-4-1.5 6-1-8-1.5 8-1.5-8-1 6-1.5-7-1 9-1.5-5-1.5 6-1-7-1.5 5-1-8-1.5 8-1.5-3-1 1-1.5-3-1 8-1.5-5-1.5 2-1-5-1.5 7-1-8-1.5 9-1.5-6-1 5-1.5-6-1 2-1.5-4-1.5 6-1-7-1.5 6-1-8-1.5 6-1.5-6-1 6-1.5-2-1 2-1.5-3-1.5 4-1-2-1.5 2-1-5-1.5 3-1.5-2-1 6-1.5-7-1 7-1.5-6-1.5 2-1-4-1.5 3-1-4-1.5 6-1.5-5-1 2-1.5-3-1 1-1.5-2-1.5 3-1-3-1.5 1-1-5-1.5 5-1.5-3-1 1-1.5-2-1 3-1.5-3-1.5 3-1-2-1.5 4-1-3-1.5 3-1.5-5-1 4-1.5-4-1 5-1.5-5-1.5 7-1-5-1.5 3-1-5-1.5 6-1.5-2-1 1-1.5-4-1 6-1.5-2-1.5 2-1-2-1.5 6-1-9-1.5 8-1.5-8-1 10-1.5-6-1 5-1.5-7-1.5 11-1-11-1.5 8-1-9-1.5 9-1.5-6-1 7-1.5-9-1 10-1.5-5-1.5 6-1-10-1.5 7-1-6-1.5 9-1.5-6-1 6-1.5-7-1 5-1.5-10-1.5 7-1-5-1.5 1-1-4-1.5 2-1.5-2-1 2-1.5-5-1 4-1.5-3-1.5 3-1-4-1.5 4-1-2-1.5 4-1.5-3-1 3-1.5-4-1 3-1.5-4-1.5 4-1-3-1.5 4-1-4-1.5 3-1.5-2-1 3-1.5-4-1 3-1.5-4-1.5 5-1-4-1.5 7-1-4-1.5 2-1.5-5-1 7-1.5-2-1 2-1.5-6-1.5 6-1-3-1.5 5-1-2-1.5 7-1.5-8-1 9-1.5-10-1 8-1.5-9-1.5 10-1-5-1.5 2-1-7-1.5 6-1.5-5-1 4-1.5-6-1 6-1.5-6-1.5 7-1-8-1.5 6-1-5-1.5 7-1.5-10-1 8-1.5-5-1 2-1.5-4-1.5 3-1-6-1.5 5-1-4-1.5 2-1.5-3-1 3-1.5-2-1 2-1.5-3-1.5 4-1-5-1.5 2-1-1-1.5 0-1.5-3-1 1-1.5-1-1 1-1.5-1-1.5 1-1-1-1.5 0-1 0-1.5 0-1.5 0-1 0-1.5 0-1 0-1.5 0-1.5 0-1 0-1.5 0-1 0-1.5 0-1.5 0-1 1-1.5 0-1 0-1.5 0-1.5 0-1 0-1.5 0-1 0-1.5 0-1.5 0-1 0-1.5 0-1 0-1.5 0-1.5 0-1 1-1.5-1-1 0-1.5 1-1.5-1-1 1-1.5 0-1 0-1.5 0-1.5 0-1-1-1.5 1-1 0-1.5 0-1.5-1-1 1-1.5-1-1 1-1.5 0-1.5 0-1 0-1.5 0-1 0-1.5 0-1.5 0-1 0-1.5 0-1 0-1.5 0-1.5 0-1 0-1.5 0-1 0-1.5 0-1.5 0-1 0-1.5 0-1 0-1.5 0-1.5 0-1 0-1.5 0-1 0-1.5 0-1.5 0-1 0-1.5 0-1 0-1.5-1-1.5 1-1 0-1.5 0-1-1-1.5 1-1.5 0-1 0-1.5-1-1 1-1.5 0-1.5 0-1 0-1.5 0-1 0-1.5-1-1.5 0-1 1-1.5 0-1-1-1.5 0-1.5 0-1 1-1.5-1-1 0-1.5 0-1.5 0-1 0-1.5 0-1 0-1.5 0-1.5 0-1 0-1.5 0-1 0-1.5 0-1.5 0-1 0-1.5-1-1 0-1.5 0-1.5 0-1 0-1.5 1-1 0-1.5 0-1.5 0-1 1-1.5-1-1 1-1.5-1-1.5 1-1 0-1.5 1-1-1-1.5 1-1.5 0-1 2-1.5-2-1 2-1.5-2-1.5 3-1-2-1.5 2-1-2-1.5 2-1.5-1-1 2-1.5-2-1 2-1.5-3-1.5 3-1-2-1.5 3-1-2-1.5 2-1.5-4-1 3-1.5-3-1 3-1.5-2-1.5 2-1-3-1.5 3-1-4-1.5 5-1.5-4-1 3-1.5-3-1 4-1.5-4-1.5 3-1-2-1.5 1-1-1-1.5 3-1.5-2-1 2-1.5-2-1 1-1.5-1-1.5 1-1-1-1.5 3-1-2-1.5 3-1.5-3-1 2-1.5-2-1 1-1.5-3-1.5 5-1-5-1.5 4-1-2-1.5 2-1.5-4-1 4-1.5-3-1 4-1.5-3-1.5 1-1-4-1.5 5-1-4-1.5 5-1.5-4-1 4-1.5-3-1 3-1.5-2-1.5 1-1-2-1.5 3-1-3-1.5 2-1.5-2-1 2-1.5-1-1 3-1.5-4-1.5 5-1-4-1.5 5-1-3-1.5 2-1.5-3-1 2-1.5-3-1 5-1.5-6-1.5 6-1-6-1.5 5-1-2-1.5 3-1.5-6-1 6-1.5-6-1 6-1.5-4-1.5 4-1-3-1.5 1-1-5-1.5 6-1.5-4-1 3-1.5-2-1 4-1.5-4-1.5 4-1-7-1.5 7-1-6-1.5 3-1.5-2-1 5-1.5-6-1 4-1.5-3-1.5 3-1-2-1.5 1-1-3-1.5 3-1.5-2-1 1-1.5-1-1 1-1.5-1-1.5 2-1-2-1.5 2-1-1-1.5 3-1.5-3-1 2-1.5-3-1 5-1.5-6-1.5 6-1-5-1.5 6-1-5-1.5 6-1.5-6-1 4-1.5-2-1 4-1.5-5-1.5 6-1-6-1.5 2-1-1-1.5 3-1.5-7-1 6-1.5-6-1 5-1.5-5-1.5 5-1-5-1.5 4-1-4-1.5 1-1.5-2-1 2-1.5-4-1 3-1.5-3-1.5 3-1-4-1.5 2-1-1-1.5 1-1.5-2-1 4-1.5-2-1 2-1.5-3-1.5 3-1-2-1.5 3-1-2-1.5 3-1.5-2-1 1-1.5-3-1 4-1.5-3-1.5 3-1-2-1.5 2-1-3-1.5 5-1.5-3-1 5-1.5-3-1 2-1.5-1-1.5 6-1-5-1.5 1-1-4-1.5 8-1.5-8-1 6-1.5-2-1 2-1.5-6-1.5 9-1-7-1.5 4-1-6-1.5 5-1.5-5-1 5-1.5-5-1 4-1.5-3-1.5 2-1-5-1.5 5-1-5-1.5 3-1.5-3-1 2-1.5-2-1 2-1.5-2-1.5 0-1-1-1.5 1-1-4-1.5 3-1.5-4-1 2-1.5-3-1 1-1.5-1-1.5 0-1-1-1.5 1-1-1-1.5 2-1.5-1-1 1-1.5 0-1 1-1.5-1-1.5 2-1-2-1.5 2-1-1-1.5 2-1.5-2-1 3-1.5 0-1 3-1.5-3-1.5 2-1-2-1.5 3-1-3-1.5 6-1.5-5-1 5-1.5-2-1 5-1.5-4-1.5 2-1-2-1.5 6-1-6-1.5 4-1.5-5-1 7-1.5-5-1 7-1.5-7-1.5 7-1-8-1.5 6-1-4-1.5 2-1.5-5-1 3-1.5-4-1 3-1.5-4-1.5 3-1-3-1.5 3-1-4-1.5 4-1.5-3-1 0-1.5-3-1 0-1.5-3-1.5 1-1-1-1.5 0-1-1-1.5 1-1.5-1-1 0-1.5-1-1 0-1.5 0-1.5 0-1 0-1.5 1-1 0-1.5 0-1.5 0-1 1-1.5-1-1 1-1.5-1-1.5 1-1 0-1.5 1-1-1-1.5 3-1.5-2-1 2-1.5-2-1 4-1.5-3-1.5 1-1 0-1.5 2-1-3-1.5 3-1.5 0-1 2-1.5-3-1 4-1.5-6-1.5 3-1-2-1.5 2-1-4-1.5 5-1.5-5-1 5-1.5-3-1 4-1.5-6-1.5 4-1-2-1.5 3-1-4-1.5 5-1.5-4-1 5-1.5-5-1 2-1.5-2-1.5 3-1-5-1.5 4-1-2-1.5 3-1.5-3-1 2-1.5-4-1 3-1.5-3-1.5 3-1-3-1.5 4-1-5-1.5 4-1.5-4-1 4-1.5-2-1 4-1.5-3-1.5 3-1-3-1.5 2-1-4-1.5 4-1.5-1-1 2-1.5-4-1 6-1.5-5-1.5 6-1-6-1.5 5-1-3-1.5 6-1.5-7-1 6-1.5-2-1 4-1.5-7-1.5 6-1-7-1.5 9-1-8-1.5 8-1.5-9-1 9-1.5-9-1 9-1.5-6-1.5 5-1-4-1.5 4-1-5-1.5 6-1.5-6-1 6-1.5-8-1 14-1.5-12-1.5 9-1-8-1.5 10-1-6-1.5 5-1.5-5-1 3-1.5-9-1 10-1.5-4-1.5 4-1-5-1.5 7-1-9-1.5 8-1.5-8-1 5-1.5-9-1 6-1.5-7-1.5 8-1-9-1.5 8-1-6-1.5 7-1.5-8-1 8-1.5-5-1 4-1.5-7-1.5 8-1-9-1.5 9-1-8-1.5 9-1.5-9-1 7-1.5-8-1 9-1.5-8-1.5 6-1-6-1.5 7-1-7-1.5 4-1.5-4-1 6-1.5-6-1 4-1.5-6-1.5 7-1-4-1.5 2-1-4-1.5 6-1.5-3-1 4-1.5-7-1 8-1.5-6-1.5 3-1-5-1.5 5-1-2-1.5 3Z" fill="url(#mfill)" opacity="0.4"/><path d="M439 1466l1.5 8 1-10 1.5 11 1-10 1.5 9 1.5-12 1 11 1.5-9 1 9 1.5-11 1.5 13 1-13 1.5 15 1-14 1.5 10 1.5-12 1 11 1.5-6 1 10 1.5-13 1.5 12 1-15 1.5 15 1-15 1.5 15 1.5-17 1 18 1.5-15 1 12 1.5-11 1.5 13 1-14 1.5 11 1-10 1.5 10 1.5-8 1 9 1.5-12 1 11 1.5-10 1.5 14 1-11 1.5 8 1-11 1.5 15 1.5-16 1 14 1.5-12 1 14 1.5-19 1.5 13 1-10 1.5 10 1-14 1.5 14 1.5-16 1 20 1.5-15 1 17 1.5-22 1.5 17 1-11 1.5 10 1-13 1.5 13 1.5-17 1 20 1.5-16 1 19 1.5-20 1.5 20 1-17 1.5 15 1-15 1.5 16 1.5-17 1 12 1.5-13 1 16 1.5-12 1.5 14 1-11 1.5 11 1-15 1.5 15 1.5-10 1 9 1.5-10 1 9 1.5-9 1.5 10 1-7 1.5 7 1-7 1.5 9 1.5-9 1 7 1.5-7 1 7 1.5-6 1.5 7 1-5 1.5 6 1-7 1.5 6 1.5-3 1 4 1.5-6 1 5 1.5-4 1.5 5 1-5 1.5 5 1-4 1.5 4 1.5-4 1 3 1.5-5 1 6 1.5-4 1.5 3 1-6 1.5 7 1-6 1.5 5 1.5-5 1 6 1.5-6 1 5 1.5-7 1.5 7 1-6 1.5 6 1-5 1.5 5 1.5-6 1 6 1.5-6 1 7 1.5-6 1.5 6 1-6 1.5 6 1-8 1.5 7 1.5-8 1 7 1.5-8 1 8 1.5-8 1.5 10 1-9 1.5 9 1-7 1.5 7 1.5-7 1 5 1.5-3 1 5 1.5-4 1.5 4 1-3 1.5 3 1-3 1.5 3 1.5-1 1 1 1.5-1 1 1 1.5-1 1.5 1 1-1 1.5 1 1 0 1.5 0 1.5 0 1 0 1.5-1 1 1 1.5-1 1.5 1 1-2 1.5 1 1-3 1.5 3 1.5-6 1 5 1.5-6 1 6 1.5-6 1.5 7 1-10 1.5 8 1-6 1.5 5 1.5-9 1 9 1.5-8 1 11 1.5-14 1.5 11 1-8 1.5 11 1-12 1.5 8 1.5-10 1 13 1.5-12 1 14 1.5-12 1.5 11 1-10 1.5 7 1-7 1.5 9 1.5-9 1 7 1.5-10 1 10 1.5-7 1.5 10 1-7 1.5 5 1-7 1.5 10 1.5-7 1 6 1.5-6 1 6 1.5-3 1.5 3 1-2 1.5 2 1-1 1.5 2 1.5-2 1 2 1.5-2 1 2 1.5-2 1.5 2 1-1 1.5 1 1 0 1.5 0 1.5-1 1 1 1.5-2 1 2 1.5-3 1.5 2 1-4 1.5 4 1-9 1.5 7 1.5-8 1 9 1.5-11 1 11 1.5-9 1.5 8 1-6 1.5 5 1-8 1.5 10 1.5-11 1 11 1.5-8 1 8 1.5-7 1.5 8 1-11 1.5 11 1-10 1.5 10 1.5-12 1 10 1.5-8 1 7 1.5-6 1.5 7 1-10 1.5 12 1-10 1.5 9 1.5-7 1 6 1.5-7 1 8 1.5-7 1.5 6 1-7 1.5 7 1-6 1.5 8 1.5-6 1 5 1.5-6 1 5 1.5-3 1.5 6 1-6 1.5 4 1-3 1.5 3 1.5-4 1 6 1.5-6 1 6 1.5-5 1.5 5 1-4 1.5 4 1-4 1.5 4 1.5-5 1 4 1.5-4 1 4 1.5-6 1.5 6 1-6 1.5 6 1-9 1.5 7 1.5-6 1 8 1.5-7 1 7 1.5-10 1.5 10 1-9 1.5 8 1-8 1.5 9 1.5-11 1 8 1.5-5 1 8 1.5-11 1.5 10 1-8 1.5 8 1-10 1.5 11 1.5-12 1 9 1.5-8 1 9 1.5-8 1.5 11 1-11 1.5 11 1-11 1.5 9 1.5-10 1 9 1.5-8 1 7 1.5-7 1.5 10 1-10 1.5 9 1-10 1.5 8 1.5-8 1 9 1.5-10 1 12 1.5-13 1.5 12 1-11 1.5 9 1-9 1.5 13 1.5-10 1 9 1.5-10 1 7 1.5-7 1.5 9 1-11 1.5 12 1-8 1.5 5 1.5-8 1 12 1.5-9 1 9 1.5-10 1.5 8 1-8 1.5 8 1-9 1.5 7 1.5-6 1 6 1.5-5 1 5 1.5-8 1.5 9 1-7 1.5 9 1-10 1.5 9 1.5-7 1 6 1.5-6 1 6 1.5-7 1.5 9 1-7 1.5 7 1-9 1.5 7 1.5-5 1 5 1.5-5 1 7 1.5-5 1.5 3 1-4 1.5 6 1-7 1.5 7 1.5-5 1 5 1.5-6 1 4 1.5-4 1.5 6 1-6 1.5 5 1-3 1.5 4 1.5-6 1 6 1.5-4 1 4 1.5-5 1.5 6 1-6 1.5 4 1-3 1.5 3 1.5-4 1 5 1.5-3 1 3 1.5-4 1.5 4 1-4 1.5 4 1-3 1.5 2 1.5-3 1 4 1.5-3 1 4 1.5-5 1.5 4 1-5 1.5 5 1-4 1.5 5 1.5-6 1 5 1.5-4 1 5 1.5-6 1.5 5 1-5 1.5 5 1-4 1.5 5 1.5-4 1 4 1.5-5 1 4 1.5-3 1.5 3 1-3 1.5 4 1-4 1.5 4 1.5-3 1 3 1.5-3 1 2 1.5-2 1.5 3 1-2 1.5 2 1-2 1.5 2 1.5-1 1 1 1.5-1 1 1 1.5-1 1.5 1 1-1 1.5 1 1 0 1.5 0 1.5 0 1 0 1.5-1 1 1 1.5-1 1.5 0 1 0 1.5 0 1 0 1.5 0 1.5-1 1 0 1.5 1 1 0 1.5 0 1.5-1 1 1 1.5 0 1 0 1.5 0 1.5-1 1 0 1.5 0 1 1 1.5-1 1.5 1 1 0 1.5-1 1 0 1.5 1 1.5-1 1 1 1.5-1 1 1 1.5-1 1.5 1 1-1 1.5 1 1-1 1.5 0 1.5 0 1 0 1.5 0 1 0 1.5 0 1.5 1 1-1 1.5 0 1 0 1.5 0 1.5 0 1 0 1.5 0 1 0 1.5-1 1.5 2 1-2 1.5 2 1-1 1.5 1 1.5-1 1 0 1.5-1 1 1 1.5 0 1.5 0 1 0 1.5 0 1 0 1.5 1 1.5-1 1 0 1.5 0 1 1 1.5-1 1.5 1 1 0 1.5-1 1 0 1.5 1 1.5-1 1 0 1.5 0 1 1 1.5-1 1.5 0 1 0 1.5 1 1 0 1.5 0 1.5-1 1 1 1.5 0 1 0 1.5 0 1.5 0 1 0 1.5 0 1 0 1.5 0 1.5 0 1 0 1.5 0 1 1 1.5 0 1.5 0 1 0 1.5 0 1 0 1.5 0 1.5 0 1 0 1.5 0 1 0 1.5 0 1.5 0 1 0 1.5 0 1-1 1.5 1 1.5-1 1 1 1.5-1 1 1 1.5-2 1.5 2 1-4 1.5 4 1-6 1.5 5 1.5-6 1 6 1.5-5 1 6 1.5-9 1.5 8 1-9 1.5 8 1-7 1.5 9 1.5-12 1 7 1.5-10 1 12 1.5-11 1.5 11 1-12 1.5 14 1-15 1.5 12 1.5-12 1 15 1.5-15 1 14 1.5-13 1.5 15 1-14 1.5 9 1-12 1.5 12 1.5-7 1 11 1.5-10 1 7 1.5-13 1.5 14 1-8 1.5 11 1-13 1.5 10 1.5-10 1 13 1.5-14 1 14 1.5-11 1.5 7 1-9 1.5 13 1-9 1.5 7 1.5-6 1 6 1.5-4 1 6 1.5-9 1.5 7 1-6 1.5 6 1-5 1.5 6 1.5-5 1 6 1.5-7 1 5 1.5-4 1.5 5 1-7 1.5 7 1-6 1.5 6 1.5-5 1 5 1.5-5 1 4 1.5-7 1.5 7 1-9 1.5 9 1-7 1.5 9 1.5-12 1 12 1.5-12 1 9 1.5-11 1.5 13 1-13 1.5 11 1-7 1.5 9 1.5-10 1 10 1.5-14 1 11 1.5-11 1.5 14 1-13 1.5 13 1-11 1.5 8 1.5-9 1 12 1.5-11 1 12 1.5-14 1.5 12 1-8 1.5 8 1-11 1.5 11 1.5-9 1 11 1.5-12 1 12 1.5-8 1.5 7 1-6 1.5 4 1-4 1.5 6 1.5-8 1 7 1.5-5 1 7 1.5-7 1.5 5 1-6 1.5 8 1-8 1.5 8 1.5-8 1 7 1.5-7 1 7 1.5-8 1.5 9 1-13 1.5 9 1-6 1.5 8 1.5-12 1 10 1.5-12 1 12 1.5-14 1.5 17 1-14 1.5 9 1-9 1.5 15 1.5-15 1 10 1.5-9 1 9 1.5-15 1.5 15 1-9 1.5 13 1-13 1.5 12 1.5-11 1 11 1.5-9 1 9 1.5-9 1.5 10 1-10 1.5 10 1-8 1.5 9 1.5-9 1 7 1.5-10 1 9 1.5-8 1.5 8 1-9 1.5 11 1-9 1.5 8 1.5-9 1 10 1.5-10 1 8 1.5-10 1.5 10 1-10 1.5 10 1-9 1.5 11 1.5-10 1 8 1.5-12 1 11 1.5-8 1.5 12 1-15 1.5 12 1-9 1.5 10 1.5-14 1 14 1.5-12 1 10 1.5-11 1.5 13 1-14 1.5 12 1-9 1.5 12 1.5-12 1 9 1.5-9 1 11 1.5-11 1.5 11 1-10 1.5 11 1-13 1.5 11 1.5-10 0 22-1.5-7-1.5 7-1-5-1.5 5-1-7-1.5 8-1.5-7-1 8-1.5-9-1 7-1.5-6-1.5 7-1-8-1.5 8-1-7-1.5 7-1.5-7-1 8-1.5-8-1 9-1.5-9-1.5 8-1-8-1.5 7-1-8-1.5 11-1.5-9-1 6-1.5-6-1 10-1.5-11-1.5 11-1-13-1.5 12-1-8-1.5 7-1.5-9-1 12-1.5-10-1 8-1.5-10-1.5 9-1-11-1.5 14-1-13-1.5 10-1.5-8-1 10-1.5-11-1 11-1.5-9-1.5 7-1-7-1.5 4-1-5-1.5 9-1.5-9-1 8-1.5-10-1 11-1.5-9-1.5 10-1-12-1.5 9-1-8-1.5 8-1.5-7-1 10-1.5-12-1 11-1.5-10-1.5 8-1-6-1.5 5-1-8-1.5 8-1.5-9-1 12-1.5-10-1 6-1.5-7-1.5 9-1-10-1.5 7-1-6-1.5 6-1.5-6-1 6-1.5-5-1 4-1.5-6-1.5 6-1-5-1.5 6-1-6-1.5 6-1.5-7-1 6-1.5-6-1 7-1.5-7-1.5 5-1-4-1.5 8-1-8-1.5 7-1.5-8-1 8-1.5-6-1 5-1.5-6-1.5 6-1-7-1.5 10-1-9-1.5 8-1.5-7-1 9-1.5-8-1 7-1.5-10-1.5 10-1-6-1.5 8-1-10-1.5 12-1.5-14-1 13-1.5-9-1 14-1.5-18-1.5 17-1-16-1.5 12-1-11-1.5 12-1.5-10-1 7-1.5-7-1 9-1.5-12-1.5 8-1-8-1.5 7-1-7-1.5 5-1.5-5-1 4-1.5-3-1 3-1.5-4-1.5 5-1-6-1.5 6-1-6-1.5 8-1.5-7-1 6-1.5-7-1 7-1.5-6-1.5 6-1-5-1.5 6-1-7-1.5 6-1.5-6-1 7-1.5-7-1 8-1.5-7-1.5 6-1-7-1.5 7-1-5-1.5 8-1.5-10-1 8-1.5-9-1 13-1.5-10-1.5 7-1-6-1.5 8-1-11-1.5 12-1.5-12-1 11-1.5-8-1 7-1.5-11-1.5 12-1-10-1.5 11-1-9-1.5 5-1.5-6-1 7-1.5-7-1 7-1.5-8-1.5 5-1-5-1.5 7-1-8-1.5 5-1.5-6-1 6-1.5-5-1 3-1.5-4-1.5 4-1-4-1.5 3-1-2-1.5 3-1.5-4-1 4-1.5-3-1 2-1.5-3-1.5 4-1-3-1.5 3-1-4-1.5 1-1.5-1-1 1-1.5-1-1 1-1.5-1-1.5 0-1 0-1.5 0-1 0-1.5 0-1.5 0-1 0-1.5 0-1 0-1.5 0-1.5 0-1 0-1.5 0-1 0-1.5 0-1.5 0-1 1-1.5 0-1 0-1.5-1-1.5 1-1 0-1.5 0-1 0-1.5 0-1.5 0-1 0-1.5 0-1 0-1.5 0-1.5 0-1 0-1.5 0-1 0-1.5 1-1.5-1-1 1-1.5-1-1 0-1.5 1-1.5 0-1-1-1.5 1-1-1-1.5 1-1.5-1-1 1-1.5-1-1 1-1.5 0-1.5 0-1 0-1.5 0-1 0-1.5 0-1.5 0-1 0-1.5 0-1 0-1.5-1-1.5 1-1 0-1.5 0-1-1-1.5 1-1.5-1-1 1-1.5-1-1 1-1.5-1-1.5 1-1-1-1.5 1-1-1-1.5 1-1.5-1-1 1-1.5-1-1 1-1.5 0-1.5 0-1-1-1.5 1-1 0-1.5 0-1.5-1-1 1-1.5-1-1 1-1.5 0-1.5 0-1 0-1.5-1-1 0-1.5 0-1.5 0-1 0-1.5 0-1 0-1.5 0-1.5 0-1 0-1.5 0-1 0-1.5 0-1.5 0-1 1-1.5-1-1 0-1.5 0-1.5 0-1 0-1.5 0-1-1-1.5 0-1.5 1-1 0-1.5-1-1 0-1.5 0-1.5 0-1 0-1.5 0-1 0-1.5 0-1.5 0-1 1-1.5-1-1 1-1.5-1-1.5 1-1-1-1.5 1-1-1-1.5 2-1.5-2-1 3-1.5-3-1 3-1.5-2-1.5 3-1-3-1.5 3-1-3-1.5 3-1.5-3-1 3-1.5-3-1 4-1.5-4-1.5 3-1-3-1.5 4-1-4-1.5 4-1.5-4-1 4-1.5-4-1 4-1.5-4-1.5 5-1-4-1.5 4-1-6-1.5 6-1.5-5-1 5-1.5-6-1 7-1.5-5-1.5 4-1-4-1.5 4-1-6-1.5 5-1.5-4-1 5-1.5-6-1 5-1.5-3-1.5 4-1-4-1.5 3-1-4-1.5 6-1.5-7-1 6-1.5-6-1 7-1.5-6-1.5 6-1-6-1.5 6-1-6-1.5 4-1.5-4-1 5-1.5-6-1 7-1.5-7-1.5 7-1-5-1.5 5-1-5-1.5 4-1.5-4-1 3-1.5-4-1 6-1.5-5-1.5 5-1-6-1.5 8-1-8-1.5 8-1.5-6-1 5-1.5-5-1 5-1.5-5-1.5 6-1-7-1.5 8-1-7-1.5 7-1.5-9-1 10-1.5-10-1 10-1.5-11-1.5 9-1-8-1.5 7-1-8-1.5 8-1.5-6-1 8-1.5-10-1 11-1.5-10-1.5 7-1-5-1.5 5-1-6-1.5 5-1.5-5-1 7-1.5-9-1 9-1.5-7-1.5 5-1-4-1.5 3-1-5-1.5 8-1.5-8-1 6-1.5-4-1 5-1.5-8-1.5 9-1-7-1.5 6-1-7-1.5 7-1.5-7-1 6-1.5-6-1 5-1.5-4-1.5 7-1-9-1.5 10-1-10-1.5 8-1.5-6-1 6-1.5-7-1 10-1.5-9-1.5 7-1-9-1.5 8-1-7-1.5 8-1.5-7-1 10-1.5-12-1 10-1.5-8-1.5 10-1-11-1.5 8-1-8-1.5 9-1.5-8-1 7-1.5-7-1 7-1.5-7-1.5 4-1-5-1.5 5-1-4-1.5 4-1.5-5-1 3-1.5-3-1 3-1.5-3-1.5 2-1-2-1.5 2-1-3-1.5 3-1.5-3-1 3-1.5-3-1 3-1.5-2-1.5 3-1-3-1.5 4-1-5-1.5 7-1.5-5-1 3-1.5-4-1 7-1.5-8-1.5 6-1-6-1.5 7-1-5-1.5 4-1.5-4-1 6-1.5-7-1 8-1.5-8-1.5 10-1-8-1.5 5-1-6-1.5 7-1.5-8-1 9-1.5-9-1 10-1.5-8-1.5 5-1-7-1.5 8-1-5-1.5 6-1.5-9-1 8-1.5-7-1 6-1.5-6-1.5 6-1-5-1.5 4-1-4-1.5 4-1.5-4-1 6-1.5-8-1 6-1.5-5-1.5 5-1-6-1.5 3-1-4-1.5 3-1.5-3-1 2-1.5-2-1 2-1.5-2-1.5 0-1 0-1.5 1-1-1-1.5 1-1.5-1-1 1-1.5-1-1 2-1.5-2-1.5 2-1-2-1.5 2-1-2-1.5 4-1.5-4-1 4-1.5-3-1 5-1.5-6-1.5 6-1-5-1.5 6-1-6-1.5 5-1.5-3-1 5-1.5-7-1 7-1.5-6-1.5 5-1-4-1.5 6-1-7-1.5 8-1.5-9-1 9-1.5-7-1 7-1.5-8-1.5 7-1-8-1.5 7-1-6-1.5 5-1.5-5-1 5-1.5-5-1 4-1.5-6-1.5 6-1-4-1.5 3-1-4-1.5 5-1.5-5-1 3-1.5-4-1 4-1.5-3-1.5 2-1-3-1.5 2-1-2-1.5 1-1.5-1-1 0-1.5 0-1 0-1.5 0-1.5 0-1 0-1.5 1-1-1-1.5 1-1.5-1-1 1-1.5-1-1 2-1.5-2-1.5 2-1-2-1.5 4-1-3-1.5 2-1.5-3-1 4-1.5-3-1 4-1.5-5-1.5 5-1-5-1.5 8-1-7-1.5 8-1.5-7-1 7-1.5-8-1 5-1.5-4-1.5 4-1-5-1.5 6-1-5-1.5 4-1.5-6-1 5-1.5-5-1 7-1.5-6-1.5 7-1-8-1.5 5-1-4-1.5 6-1.5-7-1 6-1.5-4-1 3-1.5-3-1.5 4-1-6-1.5 6-1-6-1.5 4-1.5-4-1 3-1.5-2-1 2-1.5-2-1.5 2-1-3-1.5 4-1-4-1.5 3-1.5-3-1 3-1.5-2-1 4-1.5-5-1.5 4-1-4-1.5 4-1-4-1.5 5-1.5-5-1 6-1.5-5-1 5-1.5-5-1.5 4-1-5-1.5 6-1-6-1.5 6-1.5-4-1 5-1.5-5-1 5-1.5-4-1.5 8-1-10-1.5 9-1-9-1.5 7-1.5-8-1 10-1.5-7-1 7-1.5-6-1.5 5-1-6-1.5 9-1-8-1.5 8-1.5-8-1 11-1.5-15-1 16-1.5-13-1.5 8-1-9-1.5 10-1-8-1.5 8-1.5-9-1 11-1.5-11-1 13-1.5-13-1.5 10-1-10-1.5 9-1-7-1.5 6-1.5-9-1 8-1.5-8-1 9-1.5-11-1.5 11-1-9-1.5 8-1-7-1.5 6-1.5-6-1 7-1.5-7-1 7-1.5-10-1.5 8-1-7-1.5 8-1-9-1.5 10-1.5-10-1 11-1.5-9-1 8-1.5-10-1.5 10-1-8-1.5 9-1-10-1.5 7-1.5-8-1 9-1.5-7-1 7-1.5-8-1.5 8-1-9-1.5 9-1-8-1.5 8-1.5-9-1 7-1.5-7-1 10-1.5-10-1.5 10-1-9-1.5 7-1-7-1.5 7Z" fill="url(#mfill)" opacity="0.82"/></g>
<path d="M439 1555.5H1553" stroke="url(#mfill)" stroke-width="1.2" opacity="0.8"/>
<g shape-rendering="crispEdges"><path d="M439.5 1544v23m2.5-26v29m2.5-32v33m3-31v31m2.5-35v35m2.5-35v36m2.5-35v32m2.5-34v35m3-32v35m2.5-38v38m2.5-39v38m2.5-34v34m2.5-38v38m3-35v35m2.5-35v35m2.5-36v36m2.5-36v39m2.5-39v39m3-42v40m2.5-39v40m2.5-40v39m2.5-37v37m2.5-37v41m3-40v36m2.5-37v41m2.5-42v42m2.5-41v38m2.5-41v41m3-40v42m2.5-42v41m2.5-41v45m2.5-49v50m2.5-50v50m3-52v50m2.5-48v47m2.5-44v43m2.5-45v43m2.5-43v44m3-43v44m2.5-44v41m2.5-38v37m2.5-36v39m2.5-41v41m3-41v38m2.5-38v39m2.5-36v32m2.5-30v30m2.5-30v29m3-28v29m2.5-26v24m2.5-23v21m2.5-20v19m2.5-18v17m3-17v16m2.5-14v15m2.5-15v15m2.5-15v14m2.5-13v13m3-14v15m2.5-15v15m2.5-17v19m2.5-19v21m2.5-23v23m3-24v24m2.5-28v31m2.5-31v32m2.5-30v27m2.5-25v26m3-25v22m2.5-22v25m2.5-27v25m2.5-24v26m2.5-28v27m3-29v31m2.5-29v27m2.5-26v27m2.5-25v22m2.5-22v22m3-21v19m2.5-18v17m2.5-14v12m2.5-11v10m2.5-9v8m3-7v7m2.5-7v7m2.5-6v5m2.5-4v3m2.5-3v3m3-2v1m2.5-2v3m2.5-4v6m2.5-8v9m2.5-11v12m3-16v18m2.5-24v27m2.5-27v30m2.5-35v36m2.5-37v36m3-40v43m2.5-42v44m2.5-44v42m2.5-44v45m2.5-42v43m3-45v44m2.5-43v41m2.5-37v38m2.5-40v42m2.5-43v43m3-42v43m2.5-42v38m2.5-36v36m2.5-33v33m2.5-35v32m3-29v28m2.5-25v24m2.5-20v16m2.5-13v11m2.5-9v9m3-8v7m2.5-7v6m2.5-5v5m2.5-4v3m2.5-3v3m3-5v6m2.5-6v7m2.5-10v12m2.5-17v19m2.5-22v25m3-27v30m2.5-30v30m2.5-33v32m2.5-31v34m2.5-38v37m3-34v35m2.5-38v38m2.5-37v37m2.5-36v37m2.5-41v41m3-38v40m2.5-41v41m2.5-43v43m2.5-41v40m2.5-39v40m3-40v38m2.5-35v35m2.5-36v35m2.5-34v34m2.5-32v31m3-33v32m2.5-29v28m2.5-28v27m2.5-25v24m2.5-23v23m3-20v18m2.5-17v17m2.5-16v15m2.5-14v13m2.5-14v16m3-16v15m2.5-17v19m2.5-21v20m2.5-21v23m2.5-25v27m3-29v29m2.5-30v31m2.5-32v33m2.5-35v37m2.5-40v42m3-40v39m2.5-41v44m2.5-44v44m2.5-41v39m2.5-38v38m3-38v40m2.5-39v38m2.5-40v40m2.5-39v36m2.5-34v36m3-38v39m2.5-39v36m2.5-33v35m2.5-35v35m2.5-35v34m3-36v33m2.5-31v33m2.5-35v32m2.5-31v33m2.5-34v32m3-29v30m2.5-33v32m2.5-33v34m2.5-34v34m2.5-36v37m3-38v36m2.5-37v38m2.5-36v37m2.5-37v38m2.5-39v38m3-38v39m2.5-40v41m2.5-39v39m2.5-43v44m2.5-41v40m3-39v37m2.5-37v37m2.5-35v36m2.5-37v35m2.5-34v36m3-38v38m2.5-38v36m2.5-36v37m2.5-37v37m2.5-34v32m3-31v32m2.5-34v33m2.5-30v29m2.5-31v30m2.5-30v31m3-30v30m2.5-28v27m2.5-26v26m2.5-26v25m2.5-24v24m3-25v24m2.5-25v27m2.5-25v24m2.5-25v25m2.5-24v23m3-22v22m2.5-22v23m2.5-23v24m2.5-25v25m2.5-24v24m3-25v25m2.5-24v22m2.5-20v21m2.5-23v22m2.5-21v20m3-19v20m2.5-20v18m2.5-17v17m2.5-16v16m2.5-16v15m3-15v15m2.5-14v13m2.5-12v12m2.5-12v11m2.5-10v9m3-8v8m2.5-7v6m2.5-5v5m2.5-5v4m2.5-3v2m3-2v2m2.5-2v3m2.5-3v3m2.5-3v3m2.5-4v4m3-4v5m2.5-5v5m2.5-5v5m2.5-5v5m2.5-5v5m3-5v5m2.5-5v5m2.5-5v5m2.5-5v5m2.5-5v5m3-5v5m2.5-5v5m2.5-5v5m2.5-5v5m2.5-5v5m3-5v5m2.5-5v5m2.5-5v5m2.5-5v5m2.5-5v5m3-5v5m2.5-5v5m2.5-5v5m2.5-5v5m2.5-5v5m3-5v5m2.5-5v5m2.5-5v5m2.5-5v5m2.5-5v5m3-5v5m2.5-5v5m2.5-5v5m2.5-5v5m2.5-4v4m3-5v5m2.5-5v4m2.5-3v3m2.5-3v3m2.5-3v3m3-3v3m2.5-3v3m2.5-3v3m2.5-3v3m2.5-3v3m3-3v3m2.5-2v2m2.5-2v2m2.5-3v2m2.5-1v2m3-3v3m2.5-3v3m2.5-3v3m2.5-3v3m2.5-3v3m3-4v5m2.5-5v5m2.5-7v9m2.5-12v16m2.5-17v16m3-18v19m2.5-20v20m2.5-22v22m2.5-25v27m2.5-29v32m3-34v33m2.5-34v35m2.5-34v36m2.5-41v40m2.5-40v42m3-45v43m2.5-44v44m2.5-41v44m2.5-43v42m2.5-44v47m3-46v43m2.5-45v48m2.5-47v46m2.5-50v52m2.5-48v48m3-49v50m2.5-53v53m2.5-51v49m2.5-45v47m2.5-48v44m3-40v41m2.5-42v40m2.5-36v32m2.5-27v27m2.5-27v26m3-25v26m2.5-27v25m2.5-25v26m2.5-26v26m2.5-25v24m3-26v28m2.5-26v26m2.5-29v29m2.5-29v33m2.5-40v43m3-46v51m2.5-51v49m2.5-48v48m2.5-49v48m2.5-51v52m3-47v46m2.5-51v53m2.5-49v45m2.5-47v49m2.5-50v49m3-49v52m2.5-51v52m2.5-49v46m2.5-45v46m2.5-47v42m3-39v37m2.5-35v33m2.5-30v30m2.5-29v29m2.5-28v26m3-23v22m2.5-22v22m2.5-22v22m2.5-23v23m2.5-23v23m3-23v22m2.5-24v24m2.5-26v28m2.5-29v29m2.5-30v32m3-35v35m2.5-38v39m2.5-37v38m2.5-43v46m2.5-47v48m3-48v46m2.5-43v46m2.5-47v43m2.5-42v43m2.5-42v42m3-39v37m2.5-35v36m2.5-34v34m2.5-35v33m2.5-33v34m3-34v35m2.5-36v35m2.5-36v38m2.5-36v37m2.5-36v36m3-40v39m2.5-36v36m2.5-37v35m2.5-39v39m2.5-39v40m3-40v40m2.5-41v41m2.5-38v37m2.5-39v39m2.5-41v44m3-44v43m2.5-43v43m2.5-44v42m2.5-38v40m2.5-40v39m3-42v45m2.5-46v46m2.5-46v44m2.5-41v42m2.5-40v38m3-40v42" stroke="url(#mfill)" stroke-width="1" fill="none" opacity="0.34"/><path d="M439 1544l1.5 3 1-4 1.5 0 1-2 1.5 4 1.5-6 1 3 1.5-2 1 0 1.5-1 1.5 4 1-4 1.5 6 1-9 1.5 8 1.5-8 1 4 1.5-4 1 6 1.5-3 1.5 0 1-2 1.5 5 1-7 1.5 4 1.5-2 1 5 1.5-4 1 5 1.5-7 1.5 2 1-1 1.5 4 1-4 1.5 4 1.5-7 1 9 1.5-10 1 6 1.5-3 1.5 2 1-4 1.5 10 1-6 1.5 4 1.5-6 1 7 1.5-6 1 2 1.5-5 1.5 9 1-10 1.5 6 1-7 1.5 6 1.5-6 1 3 1.5-4 1 2 1.5-3 1.5 4 1-5 1.5 10 1-8 1.5 6 1.5-7 1 4 1.5-3 1 3 1.5-1 1.5 7 1-10 1.5 11 1-10 1.5 5 1.5-5 1 11 1.5-9 1 8 1.5-9 1.5 6 1-5 1.5 5 1-2 1.5 7 1.5-9 1 8 1.5-7 1 4 1.5-2 1.5 2 1 0 1.5 3 1-2 1.5 2 1.5-2 1 3 1.5-2 1 6 1.5-2 1.5 2 1-2 1.5 3 1-2 1.5 3 1.5-2 1 3 1.5-3 1 2 1.5-1 1.5 1 1-1 1.5 3 1-2 1.5 1 1.5-2 1 2 1.5-1 1 0 1.5-3 1.5 3 1-4 1.5 4 1-5 1.5 1 1.5-1 1 4 1.5-5 1 4 1.5-6 1.5 5 1-4 1.5 3 1-2 1.5 3 1.5-1 1 3 1.5-3 1 0 1.5-1 1.5 1 1-3 1.5 3 1-2 1.5 3 1.5-5 1 3 1.5-4 1 3 1.5-2 1.5 6 1-4 1.5 3 1-2 1.5 5 1.5-5 1 4 1.5-2 1 2 1.5-1 1.5 4 1-1 1.5 2 1-1 1.5 1 1.5 0 1 1 1.5-1 1 1 1.5 0 1.5 1 1 0 1.5 0 1 0 1.5 1 1.5 0 1 0 1.5-1 1 0 1.5-1 1.5 0 1-1 1.5 0 1-2 1.5 0 1.5-4 1-1 1.5-3 1 0 1.5-5 1.5 2 1-3 1.5 3 1-5 1.5 3 1.5-3 1 3 1.5-5 1 4 1.5-6 1.5 7 1-5 1.5 6 1-6 1.5 3 1.5-1 1 1 1.5-1 1 2 1.5-4 1.5 3 1-1 1.5 1 1-1 1.5 3 1.5-2 1 3 1.5-3 1 5 1.5-5 1.5 3 1-1 1.5 4 1-3 1.5 5 1.5-4 1 3 1.5-1 1 4 1.5 0 1.5 4 1-1 1.5 3 1-1 1.5 2 1.5-1 1 2 1.5-1 1 1 1.5 0 1.5 0 1 0 1.5 1 1 0 1.5 0 1.5-1 1 0 1.5-1 1 0 1.5-3 1.5 1 1-3 1.5-1 1-3 1.5 1 1.5-4 1 2 1.5-3 1 2 1.5-2 1.5 1 1-4 1.5 3 1-3 1.5 1 1.5-2 1 2 1.5-3 1 4 1.5-4 1.5 3 1-3 1.5 4 1-5 1.5 2 1.5-3 1 5 1.5-5 1 5 1.5-5 1.5 5 1-3 1.5 1 1 1 1.5 2 1.5-3 1 5 1.5-5 1 4 1.5-3 1.5 6 1-4 1.5 4 1-4 1.5 5 1.5-5 1 6 1.5-3 1 3 1.5-3 1.5 2 1 0 1.5 3 1-1 1.5 2 1.5-1 1 3 1.5-2 1 1 1.5 0 1.5 2 1-2 1.5 1 1-1 1.5 1 1.5-2 1 2 1.5-2 1-1 1.5-2 1.5 0 1-2 1.5 1 1-3 1.5 2 1.5-5 1 1 1.5-2 1 2 1.5-3 1.5 1 1 0 1.5 4 1-8 1.5 6 1.5-6 1 7 1.5-6 1 3 1.5 0 1.5 0 1 0 1.5 1 1-2 1.5 3 1.5-3 1 7 1.5-6 1 6 1.5-7 1.5 6 1-4 1.5 1 1-1 1.5 4 1.5-3 1 1 1.5-2 1 3 1.5-2 1.5 4 1-5 1.5 4 1-3 1.5 5 1.5-5 1 1 1.5-1 1 4 1.5-2 1.5 2 1-3 1.5 4 1-3 1.5 3 1.5-3 1 3 1.5-3 1-1 1.5-2 1.5 4 1-3 1.5 3 1-4 1.5 5 1.5-6 1 3 1.5-3 1 1 1.5-2 1.5 3 1-4 1.5 4 1-3 1.5 2 1.5-2 1 4 1.5-6 1 1 1.5-3 1.5 8 1-7 1.5 7 1-5 1.5 4 1.5-3 1 4 1.5-5 1 4 1.5-3 1.5 3 1-1 1.5 1 1-3 1.5 5 1.5-5 1 4 1.5-4 1 4 1.5-4 1.5 3 1-2 1.5 6 1-5 1.5 2 1.5-1 1 2 1.5-3 1 5 1.5-3 1.5 1 1-2 1.5 3 1-2 1.5 2 1.5-3 1 3 1.5 0 1 2 1.5-3 1.5 3 1-3 1.5 2 1-1 1.5 2 1.5-1 1 1 1.5-1 1 2 1.5-3 1.5 4 1-3 1.5 2 1-2 1.5 1 1.5-2 1 4 1.5-3 1 1 1.5-1 1.5 2 1-2 1.5 4 1-4 1.5 3 1.5-2 1 2 1.5-1 1 3 1.5-3 1.5 3 1-3 1.5 2 1-2 1.5 2 1.5 0 1 2 1.5-3 1 1 1.5 0 1.5 1 1-1 1.5 1 1 0 1.5 2 1.5-2 1 3 1.5-3 1 2 1.5-1 1.5 2 1-1 1.5 2 1-1 1.5 1 1.5-1 1 1 1.5 0 1 1 1.5 0 1.5 1 1 0 1.5 1 1 0 1.5 1 1.5-1 1 0 1.5 0 1 0 1.5 0 1.5 0 1 0 1.5 0 1 0 1.5 0 1.5 0 1 0 1.5-1 1 0 1.5 0 1.5 0 1 0 1.5 0 1 0 1.5 0 1.5 0 1 0 1.5 0 1 0 1.5 0 1.5 0 1 0 1.5 0 1 0 1.5 0 1.5 0 1 0 1.5 0 1 0 1.5 0 1.5 0 1 0 1.5 0 1 0 1.5 0 1.5 0 1 0 1.5 0 1 0 1.5 0 1.5 0 1 0 1.5 0 1 0 1.5 0 1.5 0 1 0 1.5 0 1 0 1.5 0 1.5 0 1 0 1.5 0 1 0 1.5 0 1.5 0 1 0 1.5 0 1 0 1.5 0 1.5 0 1 0 1.5 0 1 0 1.5 0 1.5 0 1 1 1.5-1 1 0 1.5 0 1.5 1 1-1 1.5 1 1-1 1.5 1 1.5-1 1 1 1.5 0 1 0 1.5 0 1.5 0 1 0 1.5 0 1 0 1.5 0 1.5 0 1 0 1.5 0 1 0 1.5 0 1.5 0 1 0 1.5 0 1 0 1.5 0 1.5 0 1 1 1.5-1 1 1 1.5 0 1.5 0 1 0 1.5 0 1 0 1.5 0 1.5 0 1 0 1.5-1 1 1 1.5-1 1.5 1 1-1 1.5 0 1 0 1.5 0 1.5-1 1 0 1.5 0 1 1 1.5-3 1.5 0 1-3 1.5 2 1-5 1.5 1 1.5-1 1 0 1.5-2 1 4 1.5-6 1.5 5 1-7 1.5 4 1-6 1.5 5 1.5-6 1 3 1.5-3 1 0 1.5-2 1.5 3 1-7 1.5 10 1-9 1.5 1 1.5-6 1 13 1.5-11 1 10 1.5-9 1.5 3 1-1 1.5 4 1-5 1.5 4 1.5-7 1 13 1.5-12 1 5 1.5-5 1.5 2 1-5 1.5 11 1-6 1.5 1 1.5 0 1 7 1.5-8 1 7 1.5-6 1.5 7 1-9 1.5 5 1-1 1.5 6 1.5-5 1 5 1.5-5 1 5 1.5 1 1.5 6 1-3 1.5 5 1-6 1.5 5 1.5-4 1 4 1.5-5 1 5 1.5-5 1.5 6 1-6 1.5 2 1-1 1.5 2 1.5-2 1 1 1.5-3 1 3 1.5-2 1.5 2 1-5 1.5 6 1-6 1.5-1 1.5-3 1 5 1.5-5 1 6 1.5-10 1.5 9 1-10 1.5 4 1-3 1.5 4 1.5-6 1 5 1.5-1 1 1 1.5-1 1.5 3 1-3 1.5 2 1-4 1.5 6 1.5-3 1 4 1.5-9 1 12 1.5-11 1.5 10 1-7 1.5 9 1-9 1.5 10 1.5-7 1 8 1.5-6 1 7 1.5-7 1.5 4 1-1 1.5 6 1-6 1.5 3 1.5-2 1 3 1.5-2 1 5 1.5-4 1.5 2 1-3 1.5 4 1-5 1.5 5 1.5-5 1 3 1.5-3 1 0 1.5-3 1.5 2 1-4 1.5 3 1-5 1.5 6 1.5-5 1 6 1.5-7 1 0 1.5-5 1.5 10 1-11 1.5 9 1-5 1.5 0 1.5-4 1 8 1.5-5 1 2 1.5-3 1.5 5 1-5 1.5 3 1-1 1.5 7 1.5-7 1 6 1.5-3 1 5 1.5-4 1.5 4 1-3 1.5 5 1-6 1.5 3 1.5-2 1 1 1.5-1 1 4 1.5-4 1.5 1 1-2 1.5 1 1-1 1.5 2 1.5-2 1 2 1.5-4 1 4 1.5-4 1.5 3 1-4 1.5 5 1-6 1.5 1 1.5 0 1 1 1.5-3 1 4 1.5-4 1.5 2 1-3 1.5 7 1-7 1.5 3 1.5-2 1 4 1.5-4 1 2 1.5-3 1.5 3 1-2 1.5 4 1-6 1.5 5 1.5-5 1 5 1.5-5 1 3 1.5-2 1.5 5 1-6 1.5 6 1-5 1.5 4 1.5-3 0 41-1.5-2-1.5 2-1-1-1.5 2-1-4-1.5 4-1.5-3-1 1-1.5 0-1 2-1.5-5-1.5 2-1-2-1.5 4-1-2-1.5 0-1.5-2-1 4-1.5-3-1 2-1.5-2-1.5 0-1-2-1.5 3-1-3-1.5 3-1.5-3-1 4-1.5-4-1 4-1.5-3-1.5 3-1-3-1.5 1-1-3-1.5 5-1.5-3-1 3-1.5-3-1 4-1.5-3-1.5 2-1-3-1.5 3-1-3-1.5 4-1.5-5-1 4-1.5-2-1 2-1.5-3-1.5 2-1-2-1.5 2-1-1-1.5 2-1.5-5-1 5-1.5-4-1 3-1.5-1-1.5 2-1-3-1.5 5-1-6-1.5 6-1.5-7-1 6-1.5-6-1 6-1.5-3-1.5 4-1-8-1.5 6-1-4-1.5 5-1.5-5-1 2-1.5-1-1 1-1.5-4-1.5 4-1-5-1.5 4-1-5-1.5 3-1.5-2-1 0-1.5 0-1 1-1.5-3-1.5 2-1-2-1.5 3-1-3-1.5 3-1.5-4-1 4-1.5-1-1 3-1.5-5-1.5 4-1-3-1.5 4-1-3-1.5 3-1.5-1-1 1-1.5-1-1 3-1.5-3-1.5 4-1 1-1.5 1-1-1-1.5 4-1.5-8-1 6-1.5-2-1 2-1.5-5-1.5 8-1-3-1.5 2-1-3-1.5 2-1.5-1-1 2-1.5-7-1 11-1.5-8-1.5 6-1-4-1.5 5-1-3-1.5 5-1.5-5-1 4-1.5-4-1 0-1.5-2-1.5 1-1-6-1.5 1-1-3-1.5 2-1.5-6-1 4-1.5-3-1 4-1.5-5-1.5 5-1-5-1.5 3-1-1-1.5 3-1.5-5-1 3-1.5-3-1 3-1.5 0-1.5 1-1-3-1.5 4-1-3-1.5 4-1.5-2-1 3-1.5-2-1 3-1.5-2-1.5 3-1-2-1.5 3-1-2-1.5 6-1.5-4-1 4-1.5-9-1 7-1.5-3-1.5 3-1-5-1.5 5-1-8-1.5 8-1.5-8-1 8-1.5-9-1 9-1.5-7-1.5 5-1-7-1.5 7-1-2-1.5 1-1.5-4-1 4-1.5-5-1 3-1.5-3-1.5 4-1-6-1.5 6-1-7-1.5 5-1.5-3-1 5-1.5-7-1 4-1.5-4-1.5 1-1-1-1.5 0-1-2-1.5 1-1.5-2-1 2-1.5-1-1 0-1.5-1-1.5 2-1-2-1.5 2-1-3-1.5 0-1.5-2-1 0-1.5-1-1 1-1.5-1-1.5 0-1-1-1.5 1-1-1-1.5 1-1.5-1-1 1-1.5-1-1 1-1.5-1-1.5 1-1-1-1.5 1-1-1-1.5 1-1.5 0-1 0-1.5 0-1 0-1.5 0-1.5 0-1 0-1.5 0-1 0-1.5 0-1.5 0-1 0-1.5 0-1 0-1.5 0-1.5 0-1 0-1.5 0-1 0-1.5 0-1.5 0-1 1-1.5 0-1 0-1.5-1-1.5 1-1 0-1.5 0-1 0-1.5 0-1.5 0-1 0-1.5 0-1 0-1.5 0-1.5 0-1 0-1.5 0-1 0-1.5 0-1.5 0-1 0-1.5 0-1 0-1.5 0-1.5 0-1 0-1.5 0-1 0-1.5 0-1.5 0-1 0-1.5 0-1 0-1.5 0-1.5 0-1 0-1.5 0-1 0-1.5 0-1.5 0-1 0-1.5 0-1 0-1.5 0-1.5 0-1 0-1.5 0-1 0-1.5 0-1.5 0-1 0-1.5 0-1 0-1.5 0-1.5 0-1 0-1.5 0-1 0-1.5 0-1.5 0-1 0-1.5 0-1 0-1.5 0-1.5 0-1-1-1.5 1-1 0-1.5 0-1.5-1-1 1-1.5-1-1 0-1.5 0-1.5 0-1 0-1.5 0-1 0-1.5 0-1.5 0-1 0-1.5 0-1-1-1.5 0-1.5 0-1 1-1.5 0-1 0-1.5 1-1.5 0-1 0-1.5 0-1 1-1.5 0-1.5 1-1-1-1.5 1-1-1-1.5 2-1.5-1-1 1-1.5-1-1 2-1.5-1-1.5 1-1 0-1.5 1-1-1-1.5 1-1.5-2-1 3-1.5-1-1 1-1.5-1-1.5 1-1-1-1.5 1-1 0-1.5 1-1.5-1-1 1-1.5-1-1 1-1.5-1-1.5 2-1-2-1.5 2-1-3-1.5 3-1.5-2-1 2-1.5-3-1 2-1.5-2-1.5 3-1-2-1.5 2-1-1-1.5 1-1.5-1-1 1-1.5-3-1 3-1.5-2-1.5 1-1-1-1.5 2-1-1-1.5 2-1.5-4-1 3-1.5-2-1 4-1.5-3-1.5 2-1-3-1.5 3-1-3-1.5 4-1.5-1-1 1-1.5-3-1 3-1.5 0-1.5 2-1-3-1.5 2-1 0-1.5 1-1.5-3-1 3-1.5-1-1 2-1.5-2-1.5 2-1-3-1.5 3-1-1-1.5 2-1.5-2-1 1-1.5 0-1 2-1.5-6-1.5 6-1-4-1.5 5-1-2-1.5 1-1.5-3-1 3-1.5-1-1 1-1.5-1-1.5 1-1-5-1.5 5-1-2-1.5 1-1.5-3-1 3-1.5-4-1 3-1.5-1-1.5 0-1-1-1.5 1-1-2-1.5 3-1.5-4-1 3-1.5-2-1 1-1.5-4-1.5 5-1-4-1.5 5-1-4-1.5 3-1.5-1-1 3-1.5-2-1 2-1.5-2-1.5 3-1-2-1.5 0-1-1-1.5 4-1.5-5-1 4-1.5-1-1 1-1.5-2-1.5 3-1-2-1.5 1-1-3-1.5 4-1.5-2-1 3-1.5-6-1 6-1.5-3-1.5 2-1-4-1.5 4-1-2-1.5 2-1.5-3-1 3-1.5-2-1 3-1.5-3-1.5 1-1-1-1.5 0-1-1-1.5 0-1.5-3-1 2-1.5-2-1 1-1.5-4-1.5 3-1-2-1.5 0-1-2-1.5 2-1.5-3-1 2-1.5-3-1 2-1.5-1-1.5 1-1-3-1.5 3-1-1-1.5 1-1.5-3-1 3-1.5-1-1 2-1.5-2-1.5 2-1 0-1.5 0-1-1-1.5 2-1.5-1-1 3-1.5-3-1 3-1.5-1-1.5 4-1-3-1.5 4-1-4-1.5 5-1.5-2-1 1-1.5-2-1 4-1.5-3-1.5 3-1-3-1.5 3-1-5-1.5 6-1.5-4-1 3-1.5-4-1 3-1.5-2-1.5 1-1-4-1.5 4-1-2-1.5 3-1.5-7-1 5-1.5-3-1 2-1.5-1-1.5 1-1-4-1.5 3-1-4-1.5 3-1.5-2-1 2-1.5-3-1 2-1.5-4-1.5 2-1-2-1.5-1-1-1-1.5-1-1.5-1-1 0-1.5-1-1 0-1.5-1-1.5 0-1 0-1.5 0-1 0-1.5 1-1.5-1-1 1-1.5 0-1 1-1.5-1-1.5 1-1 0-1.5 2-1 0-1.5 1-1.5 0-1 3-1.5-2-1 4-1.5-2-1.5 3-1 0-1.5 2-1-4-1.5 4-1.5-1-1 3-1.5-1-1 2-1.5-2-1.5 1-1-2-1.5 3-1-3-1.5 3-1.5-4-1 4-1.5-4-1 4-1.5-2-1.5 3-1-2-1.5 3-1-4-1.5 4-1.5-5-1 3-1.5-4-1 3-1.5-5-1.5 3-1-3-1.5 1-1-3-1.5 2-1.5-1-1 0-1.5-3-1 0-1.5-2-1.5 0-1-1-1.5 0-1-2-1.5 0-1.5-1-1 0-1.5-1-1 0-1.5 0-1.5 1-1-1-1.5 1-1 0-1.5 0-1.5 0-1 1-1.5-1-1 2-1.5-1-1.5 1-1-1-1.5 2-1-1-1.5 2-1.5-1-1 3-1.5-3-1 4-1.5-2-1.5 3-1-3-1.5 5-1-2-1.5 3-1.5-2-1 2-1.5 0-1 2-1.5-4-1.5 3-1-4-1.5 2-1-4-1.5 3-1.5-2-1 2-1.5-3-1 4-1.5-4-1.5 4-1-1-1.5 2-1-2-1.5 3-1.5-5-1 3-1.5-2-1 3-1.5-4-1.5 2-1-3-1.5 2-1-4-1.5 3-1.5-2-1 0-1.5-2-1 2-1.5-2-1.5 2-1-1-1.5 2-1-3-1.5 3-1.5-3-1 2-1.5-1-1 1-1.5-1-1.5 3-1-1-1.5 1-1-1-1.5 2-1.5-1-1 1-1.5-3-1 6-1.5-3-1.5 3-1-3-1.5 5-1-6-1.5 6-1.5-1-1 3-1.5-2-1 4-1.5-5-1.5 3-1-1-1.5 4-1-8-1.5 7-1.5-4-1 5-1.5-5-1 3-1.5-1-1.5 1-1-2-1.5 4-1-3-1.5 4-1.5-5-1 7-1.5-5-1 3-1.5-2-1.5 2-1-6-1.5 8-1-6-1.5 4-1.5-6-1 8-1.5-5-1 1-1.5-1-1.5 3-1-8-1.5 7-1-7-1.5 9-1.5-6-1 3-1.5-3-1 2-1.5-4-1.5 4-1-1-1.5 2-1-3-1.5 4-1.5-5-1 2-1.5-5-1 5-1.5-3-1.5 4-1-7-1.5 9-1-8-1.5 8-1.5-4-1 4-1.5-4-1 4-1.5-5-1.5 2-1-6-1.5 8-1-6-1.5 4-1.5-2-1 3-1.5-3-1 3-1.5-4-1.5 1-1-4-1.5 4-1-1-1.5 1-1.5-1-1 1-1.5-2-1 3-1.5-4-1.5 4-1-7-1.5 5-1-4-1.5 3Z" fill="url(#mfill)" opacity="0.26"/><path d="M439 1546l1.5 4 1-5 1.5 2 1-3 1.5 5 1.5-6 1 5 1.5-6 1 5 1.5-4 1.5 5 1-7 1.5 7 1-6 1.5 6 1.5-4 1 1 1.5-3 1 3 1.5-4 1.5 4 1-2 1.5 2 1-2 1.5 5 1.5-11 1 10 1.5-10 1 8 1.5-9 1.5 8 1-6 1.5 10 1-8 1.5 3 1.5-6 1 8 1.5-10 1 11 1.5-10 1.5 12 1-11 1.5 5 1-2 1.5 8 1.5-11 1 7 1.5-3 1 6 1.5-12 1.5 9 1-10 1.5 7 1-3 1.5 6 1.5-9 1 11 1.5-10 1 5 1.5-8 1.5 9 1-4 1.5 3 1-6 1.5 7 1.5-3 1 5 1.5-9 1 6 1.5-4 1.5 5 1-5 1.5 11 1-9 1.5 8 1.5-9 1 8 1.5-5 1 2 1.5-5 1.5 5 1-4 1.5 5 1-8 1.5 9 1.5-7 1 7 1.5-6 1 8 1.5-8 1.5 9 1-6 1.5 5 1-5 1.5 5 1.5-5 1 6 1.5-3 1 3 1.5-1 1.5 1 1 0 1.5 3 1-3 1.5 3 1.5-3 1 4 1.5-5 1 3 1.5-1 1.5 2 1-3 1.5 4 1-3 1.5 2 1.5-1 1 1 1.5-2 1 4 1.5-6 1.5 3 1-4 1.5 5 1-5 1.5 2 1.5-5 1 6 1.5-7 1 8 1.5-6 1.5 6 1-6 1.5 5 1-6 1.5 9 1.5-4 1 4 1.5-6 1 6 1.5-7 1.5 5 1-4 1.5 4 1-2 1.5 2 1.5-3 1 2 1.5-2 1 4 1.5-3 1.5 4 1-5 1.5 2 1-2 1.5 5 1.5-4 1 3 1.5-3 1 5 1.5-3 1.5 1 1 0 1.5 2 1-2 1.5 2 1.5 0 1 0 1.5 0 1 1 1.5-1 1.5 1 1-1 1.5 2 1-1 1.5 1 1.5 0 1 0 1.5 0 1-1 1.5 0 1.5 0 1-2 1.5 1 1-2 1.5 2 1.5-5 1 2 1.5-5 1 0 1.5-2 1.5 2 1-6 1.5 7 1-11 1.5 9 1.5-9 1 6 1.5-6 1 6 1.5-7 1.5 5 1-4 1.5 6 1-9 1.5 9 1.5-6 1 6 1.5-4 1 2 1.5-5 1.5 8 1-4 1.5 4 1-5 1.5 9 1.5-10 1 8 1.5-6 1 6 1.5-5 1.5 5 1-3 1.5 5 1-4 1.5 6 1.5-5 1 6 1.5-2 1 2 1.5-1 1.5 2 1 0 1.5 3 1-1 1.5 2 1.5-2 1 2 1.5-2 1 2 1.5-1 1.5 1 1 0 1.5 0 1 0 1.5 0 1.5-1 1 1 1.5-2 1 0 1.5-2 1.5 0 1-1 1.5 1 1-4 1.5 3 1.5-7 1 4 1.5-3 1 1 1.5-5 1.5 4 1-3 1.5 6 1-9 1.5 7 1.5-7 1 8 1.5-9 1 7 1.5-7 1.5 6 1-6 1.5 6 1-4 1.5 4 1.5-6 1 9 1.5-8 1 3 1.5-5 1.5 6 1-6 1.5 10 1-8 1.5 7 1.5-6 1 3 1.5-5 1 5 1.5 0 1.5 4 1-8 1.5 6 1-4 1.5 8 1.5-6 1 6 1.5-6 1 7 1.5-5 1.5 3 1-2 1.5 3 1-1 1.5 3 1.5-3 1 3 1.5-2 1 3 1.5-2 1.5 4 1-3 1.5 2 1-3 1.5 2 1.5-2 1 2 1.5-2 1 1 1.5-3 1.5 0 1-3 1.5 4 1-6 1.5 5 1.5-6 1 6 1.5-8 1 3 1.5-2 1.5 4 1-6 1.5 7 1-6 1.5 4 1.5-7 1 9 1.5-9 1 5 1.5-6 1.5 9 1-6 1.5 4 1-5 1.5 8 1.5-4 1 5 1.5-8 1 9 1.5-6 1.5 2 1-3 1.5 7 1-10 1.5 8 1.5-3 1 5 1.5-7 1 4 1.5-3 1.5 5 1-4 1.5 3 1-3 1.5 3 1.5-3 1 5 1.5-4 1 2 1.5-2 1.5 4 1-3 1.5 4 1-4 1.5 3 1.5-3 1 4 1.5-8 1 7 1.5-5 1.5 2 1-4 1.5 6 1-7 1.5 7 1.5-6 1 6 1.5-7 1 4 1.5-7 1.5 7 1-6 1.5 5 1-7 1.5 11 1.5-7 1 1 1.5-3 1 8 1.5-10 1.5 8 1-6 1.5 6 1-9 1.5 11 1.5-9 1 8 1.5-5 1 2 1.5-1 1.5 7 1-10 1.5 6 1-7 1.5 10 1.5-6 1 5 1.5-7 1 5 1.5-6 1.5 6 1-6 1.5 9 1-5 1.5 4 1.5-3 1 4 1.5-3 1 2 1.5-2 1.5 3 1-7 1.5 9 1-4 1.5 4 1.5-5 1 4 1.5-3 1 3 1.5-5 1.5 5 1-4 1.5 6 1-5 1.5 6 1.5-7 1 6 1.5-3 1 1 1.5-3 1.5 3 1-2 1.5 5 1-6 1.5 5 1.5-2 1 0 1.5-2 1 6 1.5-5 1.5 3 1-4 1.5 5 1-4 1.5 5 1.5-4 1 1 1.5-1 1 1 1.5-1 1.5 3 1-4 1.5 4 1-3 1.5 3 1.5-2 1 3 1.5-2 1 2 1.5-3 1.5 2 1-3 1.5 5 1-3 1.5 3 1.5-3 1 3 1.5-3 1 2 1.5-1 1.5 1 1-1 1.5 3 1-2 1.5 3 1.5-2 1 2 1.5-2 1 2 1.5 0 1.5 1 1 0 1.5 0 1 0 1.5 1 1.5-1 1 1 1.5-1 1 0 1.5 0 1.5 0 1 0 1.5 0 1 0 1.5 0 1.5 0 1-1 1.5 0 1 0 1.5 0 1.5 1 1-1 1.5 0 1 1 1.5 0 1.5-1 1 0 1.5 0 1 0 1.5 0 1.5 0 1 0 1.5 0 1 0 1.5 0 1.5 0 1 0 1.5 0 1 0 1.5 0 1.5 0 1 0 1.5 0 1 0 1.5 0 1.5 0 1 0 1.5 0 1 0 1.5 0 1.5 0 1 0 1.5 0 1 0 1.5 0 1.5 0 1 0 1.5 0 1 0 1.5 0 1.5 0 1 0 1.5 0 1 0 1.5 0 1.5 0 1 0 1.5 0 1 1 1.5-1 1.5 0 1 0 1.5 0 1 0 1.5 0 1.5 0 1 1 1.5-1 1 0 1.5 0 1.5 1 1-1 1.5 1 1-1 1.5 0 1.5 1 1 0 1.5 0 1 0 1.5 0 1.5 0 1 0 1.5 0 1 0 1.5 0 1.5 0 1 0 1.5 0 1 0 1.5 0 1.5 0 1 0 1.5 0 1 0 1.5 1 1.5-1 1 0 1.5 0 1 1 1.5 0 1.5 0 1 0 1.5 0 1 0 1.5 0 1.5 0 1 0 1.5 0 1 0 1.5 0 1.5 0 1 0 1.5 0 1-1 1.5 0 1.5 0 1 0 1.5-1 1 1 1.5-3 1.5 1 1-3 1.5 2 1-3 1.5 1 1.5-4 1 5 1.5-3 1 3 1.5-8 1.5 4 1-3 1.5 7 1-7 1.5 1 1.5-2 1 5 1.5-10 1 8 1.5-7 1.5 5 1-4 1.5 5 1-7 1.5 8 1.5-8 1 8 1.5-7 1 4 1.5-5 1.5 5 1-3 1.5 4 1-6 1.5 8 1.5-5 1 4 1.5-10 1 7 1.5-5 1.5 9 1-8 1.5 9 1-12 1.5 8 1.5-3 1 3 1.5-6 1 8 1.5-5 1.5 7 1-8 1.5 9 1-8 1.5 10 1.5-11 1 8 1.5-3 1 6 1.5-6 1.5 6 1-5 1.5 5 1-4 1.5 4 1.5-3 1 3 1.5-4 1 5 1.5-3 1.5 4 1-5 1.5 3 1-5 1.5 6 1.5-5 1 3 1.5-3 1 3 1.5-5 1.5 5 1-5 1.5 5 1-9 1.5 7 1.5-10 1 5 1.5-6 1 12 1.5-8 1.5 4 1-5 1.5 6 1-4 1.5 4 1.5-7 1 7 1.5-8 1 11 1.5-8 1.5 5 1-9 1.5 6 1-1 1.5 6 1.5-6 1 7 1.5-9 1 9 1.5-7 1.5 5 1-3 1.5 7 1-7 1.5 7 1.5-8 1 9 1.5-5 1 5 1.5-7 1.5 7 1-3 1.5 4 1-3 1.5 3 1.5-4 1 5 1.5-3 1 3 1.5-5 1.5 4 1-4 1.5 4 1-3 1.5 2 1.5-5 1 6 1.5-5 1 2 1.5-3 1.5 2 1-5 1.5 4 1-5 1.5 4 1.5-5 1 8 1.5-8 1 7 1.5-12 1.5 6 1-2 1.5 3 1-4 1.5 8 1.5-9 1 8 1.5-13 1 10 1.5-14 1.5 14 1-7 1.5 6 1-7 1.5 4 1.5-1 1 7 1.5-7 1 7 1.5-3 1.5 3 1-6 1.5 7 1-5 1.5 6 1.5-8 1 5 1.5-2 1 4 1.5-5 1.5 1 1-3 1.5 4 1-5 1.5 6 1.5-3 1 4 1.5-5 1 4 1.5-3 1.5 2 1-5 1.5 5 1-7 1.5 11 1.5-6 1 1 1.5-4 1 6 1.5-6 1.5 4 1-4 1.5 4 1-4 1.5 8 1.5-9 1 6 1.5-9 1 10 1.5-9 1.5 6 1-4 1.5 5 1-8 1.5 6 1.5-6 1 5 1.5-6 1 7 1.5-6 1.5 8 1-9 1.5 8 1-8 1.5 7 1.5-5 0 39-1.5-7-1.5 7-1-7-1.5 7-1-7-1.5 6-1.5-4-1 5-1.5-8-1 5-1.5-4-1.5 3-1-3-1.5 4-1-5-1.5 4-1.5-4-1 2-1.5-3-1 3-1.5-3-1.5 5-1-5-1.5 4-1-3-1.5 3-1.5-3-1 2-1.5-4-1 4-1.5-3-1.5 5-1-4-1.5 4-1-5-1.5 5-1.5-4-1 4-1.5-1-1 3-1.5-6-1.5 7-1-7-1.5 6-1-7-1.5 6-1.5-5-1 4-1.5-3-1 4-1.5-6-1.5 7-1-6-1.5 5-1-6-1.5 7-1.5-7-1 6-1.5-6-1 6-1.5-4-1.5 5-1-5-1.5 5-1-4-1.5 2-1.5-5-1 8-1.5-7-1 7-1.5-7-1.5 3-1-2-1.5 4-1-5-1.5 2-1.5-4-1 5-1.5-8-1 6-1.5-6-1.5 4-1-4-1.5 4-1-2-1.5 1-1.5-3-1 2-1.5-2-1 5-1.5-5-1.5 5-1-4-1.5 4-1-5-1.5 6-1.5-5-1 4-1.5-2-1 2-1.5-5-1.5 6-1-5-1.5 6-1-3-1.5 4-1.5-5-1 4-1.5-4-1 5-1.5-3-1.5 6-1-8-1.5 7-1-3-1.5 5-1.5-6-1 5-1.5-7-1 9-1.5-8-1.5 7-1-9-1.5 8-1-2-1.5 5-1.5-8-1 6-1.5-8-1 9-1.5-4-1.5 8-1-10-1.5 10-1-6-1.5 6-1.5-9-1 10-1.5-13-1 10-1.5-12-1.5 8-1-6-1.5 2-1-6-1.5 4-1.5-3-1 4-1.5-6-1 4-1.5-2-1.5 4-1-5-1.5 5-1-5-1.5 3-1.5-2-1 3-1.5-4-1 5-1.5-5-1.5 3-1-4-1.5 6-1-4-1.5 6-1.5-6-1 8-1.5-4-1 7-1.5-7-1.5 8-1-7-1.5 3-1-3-1.5 10-1.5-13-1 12-1.5-11-1 8-1.5-6-1.5 5-1-7-1.5 9-1-11-1.5 9-1.5-5-1 7-1.5-11-1 11-1.5-10-1.5 8-1-7-1.5 8-1-7-1.5 7-1.5-11-1 8-1.5-4-1 3-1.5-3-1.5 4-1-8-1.5 5-1-2-1.5 2-1.5-3-1 2-1.5-3-1 3-1.5-5-1.5 4-1-4-1.5 1-1-3-1.5 3-1.5-3-1 2-1.5-3-1 3-1.5-2-1.5 2-1-2-1.5 2-1-2-1.5 0-1.5-2-1 1-1.5-1-1 0-1.5 0-1.5 0-1-1-1.5 1-1-1-1.5 0-1.5 0-1 0-1.5 0-1 0-1.5 0-1.5 0-1 0-1.5 0-1 0-1.5 0-1.5 0-1 1-1.5-1-1 1-1.5 0-1.5 0-1 0-1.5 0-1 0-1.5 0-1.5 0-1 0-1.5 0-1 0-1.5 0-1.5 0-1 0-1.5 0-1 0-1.5 0-1.5 0-1 0-1.5 0-1 1-1.5-1-1.5 1-1-1-1.5 0-1 1-1.5 0-1.5 0-1 0-1.5-1-1 1-1.5 0-1.5 0-1-1-1.5 1-1 0-1.5 0-1.5 0-1 0-1.5 0-1 0-1.5 0-1.5 0-1 0-1.5 0-1 0-1.5 0-1.5 0-1 0-1.5 0-1 0-1.5 0-1.5 0-1 0-1.5 0-1 0-1.5 0-1.5-1-1 1-1.5 0-1 0-1.5 0-1.5 0-1 0-1.5 0-1 0-1.5 0-1.5-1-1 1-1.5 0-1 0-1.5-1-1.5 1-1 0-1.5 0-1 0-1.5 0-1.5-1-1 1-1.5-1-1 1-1.5-1-1.5 1-1 0-1.5-1-1 1-1.5-1-1.5 0-1 0-1.5 1-1-1-1.5 0-1.5 0-1 0-1.5 0-1 0-1.5 0-1.5-1-1 1-1.5-1-1 0-1.5 0-1.5 0-1 0-1.5 1-1 0-1.5 1-1.5-1-1 1-1.5 0-1 1-1.5-1-1.5 1-1-1-1.5 2-1-1-1.5 2-1.5-2-1 1-1.5-1-1 2-1.5-1-1.5 2-1-2-1.5 2-1-1-1.5 1-1.5-2-1 3-1.5-2-1 2-1.5-1-1.5 1-1-2-1.5 2-1-1-1.5 3-1.5-3-1 2-1.5-2-1 3-1.5-2-1.5 3-1-3-1.5 3-1-4-1.5 3-1.5-2-1 2-1.5-2-1 2-1.5-3-1.5 2-1-2-1.5 3-1-3-1.5 2-1.5-3-1 3-1.5-1-1 3-1.5-3-1.5 1-1-3-1.5 5-1-5-1.5 3-1.5-1-1 1-1.5-2-1 2-1.5-1-1.5 2-1-2-1.5 2-1-2-1.5 3-1.5-3-1 2-1.5-2-1 2-1.5-2-1.5 4-1-4-1.5 4-1-2-1.5 2-1.5-5-1 6-1.5-4-1 2-1.5-3-1.5 3-1 0-1.5 2-1-3-1.5 5-1.5-4-1 2-1.5-1-1 2-1.5-3-1.5 4-1-5-1.5 6-1-4-1.5 2-1.5-4-1 5-1.5-6-1 4-1.5-4-1.5 5-1-4-1.5 5-1-6-1.5 4-1.5-4-1 2-1.5-4-1 5-1.5-5-1.5 6-1-3-1.5 2-1-3-1.5 3-1.5-4-1 5-1.5-4-1 2-1.5-1-1.5 4-1-3-1.5 4-1-8-1.5 6-1.5-3-1 6-1.5-4-1 1-1.5-2-1.5 4-1-5-1.5 5-1-2-1.5 4-1.5-5-1 3-1.5-1-1 1-1.5-5-1.5 5-1-2-1.5 6-1-8-1.5 7-1.5-8-1 8-1.5-6-1 6-1.5-8-1.5 9-1-9-1.5 5-1-2-1.5 6-1.5-6-1 6-1.5-9-1 6-1.5-2-1.5 3-1-5-1.5 4-1-6-1.5 5-1.5-7-1 6-1.5-6-1 3-1.5-3-1.5 4-1-4-1.5 3-1-4-1.5 2-1.5-3-1 3-1.5-3-1 2-1.5-2-1.5 2-1-3-1.5 2-1-2-1.5 2-1.5-1-1 1-1.5-2-1 4-1.5-3-1.5 3-1-3-1.5 4-1-2-1.5 1-1.5-1-1 2-1.5-3-1 6-1.5-4-1.5 5-1-3-1.5 4-1-6-1.5 4-1.5-2-1 4-1.5-5-1 3-1.5-1-1.5 3-1-6-1.5 7-1-8-1.5 7-1.5-3-1 2-1.5-4-1 6-1.5-6-1.5 5-1-6-1.5 5-1-5-1.5 3-1.5-4-1 6-1.5-6-1 4-1.5-3-1.5 3-1-3-1.5 2-1-3-1.5 4-1.5-2-1 3-1.5-6-1 5-1.5-4-1.5 2-1-4-1.5 1-1-3-1.5 1-1.5-2-1 1-1.5-2-1 0-1.5 0-1.5 0-1-1-1.5 1-1 0-1.5 1-1.5-1-1 1-1.5 0-1 0-1.5 0-1.5 1-1-1-1.5 2-1 0-1.5 2-1.5-3-1 3-1.5-2-1 4-1.5-3-1.5 6-1-6-1.5 5-1-2-1.5 5-1.5-4-1 2-1.5-2-1 3-1.5-5-1.5 5-1-6-1.5 7-1-5-1.5 4-1.5-5-1 6-1.5-6-1 4-1.5-2-1.5 4-1-5-1.5 5-1-3-1.5 4-1.5-5-1 5-1.5-5-1 2-1.5-2-1.5 1-1-2-1.5 1-1-4-1.5 5-1.5-4-1 1-1.5-4-1 4-1.5-4-1.5 0-1-1-1.5 1-1-2-1.5 1-1.5-1-1 0-1.5-1-1 0-1.5 0-1.5 1-1-1-1.5 1-1 0-1.5 1-1.5-2-1 2-1.5-1-1 1-1.5-1-1.5 1-1-1-1.5 2-1-1-1.5 3-1.5-2-1 2-1.5-2-1 4-1.5-4-1.5 4-1-1-1.5 3-1-4-1.5 5-1.5-3-1 3-1.5-2-1 4-1.5-6-1.5 6-1-6-1.5 5-1-6-1.5 4-1.5-3-1 2-1.5-4-1 3-1.5-3-1.5 6-1-7-1.5 7-1-5-1.5 3-1.5-4-1 6-1.5-6-1 4-1.5-3-1.5 2-1-5-1.5 5-1-3-1.5 2-1.5-3-1 1-1.5-2-1 2-1.5-2-1.5 1-1 0-1.5 1-1-2-1.5 1-1.5-1-1 3-1.5-3-1 2-1.5-2-1.5 4-1-3-1.5 2-1-1-1.5 3-1.5-4-1 3-1.5 0-1 5-1.5-5-1.5 5-1-7-1.5 7-1-5-1.5 6-1.5-7-1 7-1.5-5-1 4-1.5-5-1.5 8-1-4-1.5 5-1-6-1.5 5-1.5-7-1 4-1.5-4-1 4-1.5-5-1.5 6-1-4-1.5 5-1-5-1.5 5-1.5-3-1 3-1.5-6-1 8-1.5-9-1.5 6-1-5-1.5 6-1-6-1.5 4-1.5-5-1 6-1.5-3-1 5-1.5-5-1.5 4-1-8-1.5 8-1-5-1.5 3-1.5-6-1 8-1.5-4-1 5-1.5-9-1.5 9-1-5-1.5 3-1-6-1.5 6-1.5-6-1 4-1.5-3-1 7-1.5-7-1.5 7-1-7-1.5 7-1-6-1.5 6-1.5-5-1 1-1.5-1-1 4-1.5-8-1.5 9-1-9-1.5 5-1-6-1.5 8-1.5-5-1 3-1.5-3-1 2-1.5-2-1.5 1-1-2-1.5 5-1-5-1.5 2-1.5-3-1 3-1.5-4-1 7-1.5-5-1.5 3-1-6-1.5 5-1-3-1.5 2Z" fill="url(#mfill)" opacity="0.4"/><path d="M439 1549l1.5 6 1-6 1.5 4 1-6 1.5 8 1.5-7 1 5 1.5-6 1 5 1.5-6 1.5 8 1-7 1.5 8 1-8 1.5 6 1.5-7 1 9 1.5-9 1 9 1.5-10 1.5 8 1-8 1.5 9 1-8 1.5 7 1.5-8 1 9 1.5-9 1 10 1.5-9 1.5 7 1-9 1.5 9 1-8 1.5 7 1.5-5 1 8 1.5-9 1 6 1.5-8 1.5 11 1-10 1.5 9 1-9 1.5 7 1.5-9 1 10 1.5-8 1 7 1.5-8 1.5 10 1-10 1.5 10 1-12 1.5 11 1.5-12 1 11 1.5-10 1 9 1.5-11 1.5 11 1-7 1.5 10 1-14 1.5 14 1.5-15 1 14 1.5-11 1 13 1.5-13 1.5 13 1-9 1.5 8 1-11 1.5 10 1.5-10 1 11 1.5-8 1 6 1.5-9 1.5 9 1-8 1.5 11 1-10 1.5 8 1.5-9 1 8 1.5-6 1 7 1.5-5 1.5 6 1-7 1.5 7 1-7 1.5 7 1.5-7 1 7 1.5-5 1 5 1.5-6 1.5 7 1-6 1.5 5 1-5 1.5 5 1.5-3 1 3 1.5-4 1 5 1.5-4 1.5 3 1-3 1.5 3 1-3 1.5 4 1.5-4 1 4 1.5-4 1 3 1.5-3 1.5 4 1-6 1.5 6 1-6 1.5 6 1.5-7 1 5 1.5-7 1 7 1.5-7 1.5 8 1-7 1.5 7 1-7 1.5 7 1.5-5 1 6 1.5-6 1 5 1.5-4 1.5 5 1-7 1.5 5 1-4 1.5 5 1.5-7 1 8 1.5-8 1 6 1.5-4 1.5 6 1-6 1.5 5 1-6 1.5 7 1.5-5 1 4 1.5-4 1 4 1.5-2 1.5 3 1-2 1.5 2 1-2 1.5 2 1.5-1 1 1 1.5-1 1 1 1.5-1 1.5 1 1 0 1.5 0 1 0 1.5 0 1.5 0 1 0 1.5 0 1 0 1.5-1 1.5 1 1-2 1.5 2 1-3 1.5 3 1.5-4 1 2 1.5-6 1 7 1.5-7 1.5 6 1-10 1.5 9 1-6 1.5 7 1.5-10 1 9 1.5-9 1 10 1.5-12 1.5 10 1-8 1.5 11 1-11 1.5 9 1.5-8 1 8 1.5-9 1 9 1.5-9 1.5 11 1-10 1.5 10 1-11 1.5 11 1.5-8 1 9 1.5-9 1 8 1.5-8 1.5 8 1-10 1.5 8 1-4 1.5 6 1.5-5 1 4 1.5-4 1 5 1.5-3 1.5 3 1-1 1.5 2 1-2 1.5 2 1.5-2 1 2 1.5-1 1 1 1.5-1 1.5 1 1 0 1.5 0 1 0 1.5 0 1.5-1 1 1 1.5-2 1 1 1.5-2 1.5 2 1-4 1.5 4 1-6 1.5 5 1.5-6 1 7 1.5-8 1 5 1.5-6 1.5 7 1-7 1.5 7 1-10 1.5 10 1.5-12 1 15 1.5-11 1 9 1.5-11 1.5 8 1-7 1.5 10 1-15 1.5 15 1.5-10 1 8 1.5-13 1 12 1.5-10 1.5 11 1-9 1.5 12 1-14 1.5 12 1.5-8 1 8 1.5-11 1 9 1.5-6 1.5 10 1-10 1.5 9 1-8 1.5 10 1.5-10 1 10 1.5-7 1 6 1.5-6 1.5 7 1-7 1.5 6 1-5 1.5 5 1.5-4 1 4 1.5-3 1 3 1.5-2 1.5 2 1-2 1.5 3 1-4 1.5 3 1.5-3 1 4 1.5-4 1 4 1.5-6 1.5 4 1-7 1.5 8 1-6 1.5 4 1.5-8 1 8 1.5-8 1 9 1.5-8 1.5 7 1-7 1.5 6 1-10 1.5 11 1.5-12 1 10 1.5-11 1 12 1.5-9 1.5 8 1-6 1.5 8 1-9 1.5 9 1.5-12 1 11 1.5-9 1 10 1.5-10 1.5 13 1-15 1.5 11 1-8 1.5 7 1.5-7 1 10 1.5-11 1 10 1.5-10 1.5 13 1-13 1.5 11 1-9 1.5 8 1.5-8 1 8 1.5-6 1 9 1.5-12 1.5 10 1-7 1.5 7 1-9 1.5 10 1.5-9 1 9 1.5-11 1 11 1.5-12 1.5 12 1-10 1.5 11 1-10 1.5 5 1.5-7 1 11 1.5-10 1 9 1.5-10 1.5 8 1-9 1.5 9 1-9 1.5 10 1.5-7 1 8 1.5-12 1 13 1.5-13 1.5 13 1-9 1.5 7 1-10 1.5 13 1.5-10 1 8 1.5-6 1 5 1.5-8 1.5 10 1-9 1.5 8 1-9 1.5 8 1.5-6 1 7 1.5-8 1 9 1.5-9 1.5 9 1-7 1.5 7 1-9 1.5 9 1.5-8 1 8 1.5-6 1 6 1.5-6 1.5 6 1-7 1.5 7 1-8 1.5 9 1.5-8 1 7 1.5-7 1 6 1.5-6 1.5 6 1-4 1.5 4 1-5 1.5 7 1.5-6 1 4 1.5-3 1 4 1.5-6 1.5 6 1-6 1.5 5 1-6 1.5 7 1.5-7 1 7 1.5-6 1 5 1.5-4 1.5 6 1-6 1.5 5 1-5 1.5 4 1.5-5 1 7 1.5-6 1 6 1.5-5 1.5 5 1-7 1.5 6 1-5 1.5 5 1.5-4 1 3 1.5-2 1 3 1.5-4 1.5 4 1-3 1.5 4 1-5 1.5 5 1.5-4 1 4 1.5-4 1 4 1.5-4 1.5 4 1-4 1.5 3 1-3 1.5 3 1.5-2 1 3 1.5-2 1 2 1.5-2 1.5 2 1-1 1.5 1 1-1 1.5 1 1.5 0 1 0 1.5-1 1 1 1.5-1 1.5 0 1 0 1.5 0 1 0 1.5 0 1.5 0 1 0 1.5-1 1 1 1.5-1 1.5 1 1 0 1.5 0 1 0 1.5 0 1.5-1 1 1 1.5-1 1 0 1.5 0 1.5 0 1 0 1.5 1 1-1 1.5 1 1.5-1 1 1 1.5-1 1 1 1.5-1 1.5 1 1-1 1.5 1 1-1 1.5 1 1.5-1 1 0 1.5 0 1 0 1.5 0 1.5 1 1-1 1.5 0 1 0 1.5 0 1.5 0 1 0 1.5 0 1 0 1.5 0 1.5 0 1 0 1.5 1 1-1 1.5 1 1.5-1 1 1 1.5-1 1 1 1.5 0 1.5 0 1-1 1.5 0 1 0 1.5 1 1.5 0 1 0 1.5 0 1 0 1.5-1 1.5 1 1 0 1.5 0 1 0 1.5 0 1.5-1 1 1 1.5 0 1 0 1.5 0 1.5 0 1 0 1.5 1 1-1 1.5 0 1.5 0 1 0 1.5 0 1 1 1.5-1 1.5 1 1-1 1.5 1 1-1 1.5 0 1.5 1 1 0 1.5-1 1 1 1.5 0 1.5 0 1 0 1.5 0 1 0 1.5 0 1.5 0 1 0 1.5 0 1 0 1.5 0 1.5 0 1 0 1.5 0 1 0 1.5 0 1.5 0 1 0 1.5-1 1 1 1.5-1 1.5 1 1-3 1.5 2 1-2 1.5 3 1.5-5 1 4 1.5-5 1 6 1.5-7 1.5 6 1-7 1.5 7 1-7 1.5 6 1.5-5 1 5 1.5-8 1 9 1.5-10 1.5 10 1-10 1.5 9 1-9 1.5 11 1.5-12 1 9 1.5-10 1 11 1.5-12 1.5 13 1-12 1.5 11 1-10 1.5 8 1.5-9 1 12 1.5-13 1 13 1.5-16 1.5 14 1-9 1.5 9 1-9 1.5 10 1.5-13 1 12 1.5-13 1 12 1.5-7 1.5 10 1-13 1.5 12 1-9 1.5 11 1.5-12 1 10 1.5-8 1 10 1.5-8 1.5 7 1-7 1.5 6 1-6 1.5 8 1.5-10 1 8 1.5-6 1 8 1.5-7 1.5 5 1-7 1.5 9 1-7 1.5 5 1.5-6 1 6 1.5-5 1 7 1.5-7 1.5 5 1-8 1.5 10 1-12 1.5 12 1.5-13 1 12 1.5-10 1 7 1.5-5 1.5 5 1-8 1.5 9 1-8 1.5 7 1.5-8 1 8 1.5-8 1 7 1.5-6 1.5 9 1-13 1.5 12 1-8 1.5 10 1.5-11 1 12 1.5-15 1 12 1.5-12 1.5 15 1-15 1.5 13 1-10 1.5 9 1.5-9 1 10 1.5-6 1 6 1.5-5 1.5 7 1-9 1.5 8 1-5 1.5 5 1.5-6 1 5 1.5-4 1 5 1.5-4 1.5 4 1-4 1.5 5 1-6 1.5 4 1.5-5 1 7 1.5-8 1 7 1.5-5 1.5 5 1-5 1.5 3 1-4 1.5 6 1.5-7 1 8 1.5-12 1 10 1.5-11 1.5 9 1-7 1.5 7 1-10 1.5 14 1.5-12 1 9 1.5-11 1 11 1.5-12 1.5 11 1-9 1.5 8 1-9 1.5 12 1.5-12 1 12 1.5-8 1 9 1.5-9 1.5 9 1-11 1.5 11 1-8 1.5 6 1.5-9 1 9 1.5-8 1 10 1.5-11 1.5 9 1-6 1.5 8 1-12 1.5 11 1.5-10 1 11 1.5-11 1 8 1.5-7 1.5 10 1-11 1.5 9 1-9 1.5 11 1.5-10 1 9 1.5-9 1 9 1.5-11 1.5 12 1-12 1.5 10 1-9 1.5 10 1.5-9 1 8 1.5-10 1 12 1.5-10 1.5 10 1-14 1.5 14 1-15 1.5 14 1.5-14 1 15 1.5-13 1 9 1.5-13 1.5 14 1-10 1.5 13 1-12 1.5 9 1.5-12 0 28-1.5-10-1.5 8-1-9-1.5 10-1-9-1.5 12-1.5-9-1 7-1.5-7-1 5-1.5-7-1.5 9-1-10-1.5 8-1-5-1.5 7-1.5-10-1 9-1.5-6-1 8-1.5-10-1.5 6-1-7-1.5 8-1-8-1.5 7-1.5-7-1 10-1.5-11-1 11-1.5-9-1.5 9-1-9-1.5 7-1-8-1.5 7-1.5-4-1 7-1.5-11-1 10-1.5-7-1.5 7-1-7-1.5 6-1-6-1.5 5-1.5-5-1 5-1.5-8-1 9-1.5-7-1.5 7-1-8-1.5 6-1-7-1.5 8-1.5-7-1 6-1.5-4-1 4-1.5-6-1.5 7-1-8-1.5 8-1-6-1.5 6-1.5-6-1 8-1.5-7-1 6-1.5-8-1.5 7-1-5-1.5 8-1-10-1.5 9-1.5-7-1 6-1.5-8-1 8-1.5-7-1.5 6-1-7-1.5 6-1-7-1.5 8-1.5-7-1 5-1.5-5-1 5-1.5-6-1.5 6-1-6-1.5 7-1-6-1.5 4-1.5-4-1 5-1.5-5-1 7-1.5-6-1.5 5-1-7-1.5 8-1-8-1.5 9-1.5-9-1 9-1.5-7-1 6-1.5-8-1.5 10-1-7-1.5 9-1-10-1.5 11-1.5-12-1 13-1.5-10-1 10-1.5-13-1.5 12-1-11-1.5 9-1-8-1.5 9-1.5-11-1 12-1.5-9-1 9-1.5-11-1.5 12-1-11-1.5 13-1-13-1.5 13-1.5-16-1 15-1.5-14-1 12-1.5-11-1.5 9-1-10-1.5 5-1-4-1.5 5-1.5-6-1 5-1.5-5-1 5-1.5-6-1.5 6-1-6-1.5 7-1-7-1.5 7-1.5-6-1 7-1.5-8-1 7-1.5-6-1.5 4-1-3-1.5 4-1-6-1.5 9-1.5-8-1 8-1.5-7-1 7-1.5-7-1.5 7-1-6-1.5 11-1-13-1.5 8-1.5-8-1 12-1.5-13-1 9-1.5-8-1.5 11-1-11-1.5 8-1-8-1.5 8-1.5-8-1 8-1.5-8-1 8-1.5-7-1.5 8-1-7-1.5 5-1-8-1.5 8-1.5-7-1 6-1.5-5-1 6-1.5-8-1.5 7-1-6-1.5 6-1-7-1.5 5-1.5-3-1 5-1.5-6-1 6-1.5-6-1.5 4-1-4-1.5 3-1-3-1.5 4-1.5-4-1 3-1.5-3-1 4-1.5-4-1.5 3-1-4-1.5 4-1-4-1.5 3-1.5-3-1 1-1.5-1-1 1-1.5-1-1.5 1-1-1-1.5 0-1 0-1.5 0-1.5 0-1 0-1.5 0-1 0-1.5 0-1.5 0-1 0-1.5 0-1 0-1.5 0-1.5 0-1 1-1.5-1-1 1-1.5-1-1.5 1-1 0-1.5 0-1-1-1.5 1-1.5 0-1 0-1.5-1-1 1-1.5-1-1.5 1-1 0-1.5 0-1 0-1.5 0-1.5-1-1 1-1.5 0-1 0-1.5 0-1.5 1-1-1-1.5 0-1 0-1.5 0-1.5 0-1 0-1.5 0-1 1-1.5-1-1.5 1-1 0-1.5-1-1 0-1.5 1-1.5 0-1 0-1.5 0-1 0-1.5 0-1.5 0-1-1-1.5 1-1-1-1.5 1-1.5-1-1 1-1.5 0-1 0-1.5-1-1.5 1-1 0-1.5 0-1-1-1.5 1-1.5 0-1 0-1.5 0-1 0-1.5 0-1.5-1-1 0-1.5 1-1 0-1.5 0-1.5-1-1 1-1.5-1-1 1-1.5-1-1.5 1-1-1-1.5 0-1 0-1.5 0-1.5 0-1 1-1.5-1-1 0-1.5 0-1.5 0-1 0-1.5 1-1-1-1.5 0-1.5 0-1 0-1.5 0-1 0-1.5 0-1.5 0-1 0-1.5 0-1-1-1.5 1-1.5-1-1 1-1.5-1-1 0-1.5 0-1.5 0-1 0-1.5 0-1 0-1.5 1-1.5-1-1 1-1.5-1-1 2-1.5-2-1.5 1-1-1-1.5 2-1-2-1.5 3-1.5-2-1 2-1.5-3-1 3-1.5-2-1.5 2-1-3-1.5 3-1-2-1.5 3-1.5-3-1 3-1.5-4-1 4-1.5-3-1.5 4-1-5-1.5 5-1-4-1.5 5-1.5-6-1 6-1.5-6-1 6-1.5-4-1.5 5-1-7-1.5 7-1-5-1.5 3-1.5-3-1 5-1.5-7-1 7-1.5-5-1.5 5-1-6-1.5 6-1-6-1.5 4-1.5-4-1 4-1.5-4-1 6-1.5-5-1.5 4-1-5-1.5 4-1-5-1.5 5-1.5-4-1 5-1.5-4-1 3-1.5-4-1.5 6-1-6-1.5 5-1-5-1.5 5-1.5-6-1 7-1.5-7-1 7-1.5-6-1.5 5-1-5-1.5 5-1-4-1.5 6-1.5-6-1 6-1.5-7-1 6-1.5-5-1.5 6-1-7-1.5 8-1-8-1.5 6-1.5-6-1 7-1.5-8-1 8-1.5-6-1.5 7-1-8-1.5 6-1-6-1.5 7-1.5-7-1 8-1.5-7-1 7-1.5-7-1.5 7-1-6-1.5 5-1-6-1.5 5-1.5-7-1 8-1.5-7-1 8-1.5-8-1.5 5-1-5-1.5 6-1-6-1.5 5-1.5-6-1 8-1.5-7-1 7-1.5-8-1.5 8-1-8-1.5 8-1-7-1.5 6-1.5-5-1 6-1.5-7-1 6-1.5-6-1.5 6-1-4-1.5 4-1-5-1.5 7-1.5-7-1 7-1.5-8-1 6-1.5-7-1.5 8-1-5-1.5 7-1-9-1.5 8-1.5-6-1 6-1.5-7-1 6-1.5-7-1.5 9-1-6-1.5 5-1-6-1.5 8-1.5-8-1 7-1.5-7-1 6-1.5-8-1.5 9-1-7-1.5 6-1-7-1.5 7-1.5-7-1 7-1.5-7-1 3-1.5-4-1.5 6-1-5-1.5 3-1-4-1.5 4-1.5-4-1 3-1.5-4-1 4-1.5-3-1.5 3-1-4-1.5 3-1-3-1.5 5-1.5-5-1 4-1.5-3-1 4-1.5-3-1.5 3-1-4-1.5 5-1-6-1.5 6-1.5-5-1 6-1.5-6-1 7-1.5-5-1.5 4-1-7-1.5 7-1-5-1.5 7-1.5-6-1 6-1.5-7-1 9-1.5-8-1.5 7-1-8-1.5 8-1-9-1.5 12-1.5-9-1 7-1.5-9-1 11-1.5-10-1.5 8-1-10-1.5 7-1-7-1.5 8-1.5-5-1 7-1.5-10-1 9-1.5-8-1.5 8-1-8-1.5 6-1-8-1.5 8-1.5-7-1 5-1.5-4-1 3-1.5-4-1.5 3-1-3-1.5 2-1-2-1.5 1-1.5-2-1 2-1.5-2-1 1-1.5-1-1.5 0-1 0-1.5 0-1 0-1.5 1-1.5-1-1 1-1.5-1-1 1-1.5-1-1.5 2-1-2-1.5 3-1-3-1.5 4-1.5-4-1 5-1.5-4-1 4-1.5-5-1.5 6-1-5-1.5 7-1-5-1.5 4-1.5-4-1 6-1.5-6-1 6-1.5-6-1.5 6-1-6-1.5 5-1-7-1.5 8-1.5-6-1 7-1.5-8-1 7-1.5-8-1.5 8-1-5-1.5 6-1-9-1.5 10-1.5-7-1 5-1.5-7-1 8-1.5-9-1.5 9-1-8-1.5 6-1-6-1.5 4-1.5-5-1 4-1.5-5-1 5-1.5-4-1.5 2-1-2-1.5 0-1-1-1.5 1-1.5-1-1 0-1.5 0-1 0-1.5 0-1.5 0-1 0-1.5 0-1 0-1.5 0-1.5 0-1 1-1.5-1-1 1-1.5-1-1.5 1-1-1-1.5 2-1-2-1.5 3-1.5-3-1 4-1.5-3-1 4-1.5-4-1.5 3-1-4-1.5 5-1-3-1.5 6-1.5-6-1 5-1.5-5-1 5-1.5-6-1.5 6-1-7-1.5 8-1-6-1.5 3-1.5-3-1 4-1.5-4-1 4-1.5-6-1.5 6-1-5-1.5 5-1-6-1.5 6-1.5-5-1 6-1.5-6-1 5-1.5-5-1.5 4-1-4-1.5 3-1-3-1.5 4-1.5-4-1 3-1.5-3-1 3-1.5-4-1.5 3-1-3-1.5 3-1-3-1.5 4-1.5-3-1 3-1.5-3-1 2-1.5-3-1.5 5-1-5-1.5 3-1-2-1.5 3-1.5-3-1 4-1.5-4-1 6-1.5-5-1.5 6-1-7-1.5 7-1-7-1.5 5-1.5-6-1 7-1.5-5-1 8-1.5-9-1.5 8-1-7-1.5 7-1-8-1.5 6-1.5-6-1 9-1.5-10-1 10-1.5-8-1.5 5-1-5-1.5 6-1-7-1.5 10-1.5-9-1 10-1.5-11-1 8-1.5-7-1.5 9-1-11-1.5 9-1-6-1.5 8-1.5-11-1 10-1.5-9-1 7-1.5-6-1.5 7-1-7-1.5 8-1-8-1.5 10-1.5-9-1 5-1.5-5-1 8-1.5-8-1.5 9-1-10-1.5 9-1-10-1.5 10-1.5-11-1 11-1.5-10-1 9-1.5-9-1.5 8-1-6-1.5 7-1-9-1.5 11-1.5-12-1 11-1.5-8-1 8-1.5-9-1.5 9-1-11-1.5 11-1-9-1.5 6-1.5-8-1 7-1.5-4-1 7-1.5-8-1.5 5-1-7-1.5 8-1-8-1.5 7-1.5-5-1 6-1.5-7-1 6-1.5-7-1.5 7-1-5-1.5 5-1-5-1.5 3Z" fill="url(#mfill)" opacity="0.82"/></g>
<rect x="1500" y="1439" width="53" height="158" fill="url(#mdark2)"/>
</g>
<rect x="574.4" y="1439" width="2" height="158" fill="#c4c4c4"/>
<rect x="765.1" y="1439" width="1.3" height="158" fill="#04110d"/><rect x="766.4" y="1439" width="1.4" height="158" fill="#19e0ad"/>
<rect x="1104.4" y="1439" width="1.3" height="158" fill="#04110d"/><rect x="1105.7" y="1439" width="1.4" height="158" fill="#19e0ad"/>
<rect x="1469.700" y="1439" width="1.700" height="158" fill="#16c79b"/>
<rect x="766.2" y="1574.8" width="22.500" height="22.200" fill="#04fac6" stroke="#04110d" stroke-width="1.300"/>
<rect x="1447.9" y="1574.8" width="22.500" height="22.200" fill="#04fac6" stroke="#04110d" stroke-width="1.300"/>
<rect x="1094.6" y="1506.4" width="22.500" height="22.200" fill="#04fac6" stroke="#04110d" stroke-width="1.300"/>
<path d="M454.700 1517.500L468 1510V1525Z" fill="#fff"/>
<path d="M1537.500 1517.800L1524 1510.300V1525.300Z" fill="#fff"/>
<path d="M440.9 1409.32H449.558V1407.24H463.1V1422.9H440.9ZM440.9 1405.6H448.559V1408.45H440.9Z" fill="#8a8a8a"/>
<path d="M803 1413.7L810.1 1408.5V1418.7ZM846.9 1413.7L839.9 1408.5V1418.7Z" fill="#41b4f6"/><rect x="813.7" y="1402.6" width="4.5" height="12.3" fill="#41b4f6"/><rect x="813.7" y="1414.4" width="6.4" height="10.2" fill="#41b4f6"/><rect x="823.9" y="1402.6" width="2.1" height="12.3" fill="#41b4f6"/><rect x="821.9" y="1414.4" width="6" height="10.2" fill="#41b4f6"/><rect x="831.8" y="1402.6" width="4.4" height="12.3" fill="#41b4f6"/><rect x="829.9" y="1414.4" width="6.3" height="10.2" fill="#41b4f6"/>
<path d="M1531.05 1400V1427.5M1546.45 1400V1427.5M1525 1406.05H1552.5M1525 1421.45H1552.5" stroke="#41b4f6" stroke-width="2.8" fill="none"/>
<text x="510.7" y="1623.7" font-family="Liberation Sans,sans-serif" font-size="18" fill="#8a8a8a" textLength="10.200" lengthAdjust="spacingAndGlyphs">R</text><path d="M506.4 1631.9H525" stroke="#8a8a8a" stroke-width="2.1"/><path d="M499.4 1633L506.9 1633L506.9 1625.3Z" fill="#8a8a8a"/>
<rect x="546.8" y="1611.1" width="2.3" height="22" fill="#dcd800"/><rect x="546.8" y="1611.1" width="10.3" height="9.5" fill="#dcd800"/>
<rect x="696" y="1611.1" width="2.3" height="22" fill="#7d7c27"/><rect x="688" y="1611.1" width="10.3" height="9.5" fill="#7d7c27"/>
<path d="M1024 1619.8H1049.7" stroke="#8a8a8a" stroke-width="2.2"/><path d="M1049.7 1620.9L1041.9 1620.9L1041.9 1613.4Z" fill="#8a8a8a"/><path d="M1055.9 1619.8H1074.9M1055.9 1623.5H1074.9" stroke="#8a8a8a" stroke-width="2.2"/><path d="M1082.2 1622L1074.5 1613.4L1074.5 1630.7Z" fill="#8a8a8a"/><path d="M1088.1 1619.8H1114.2M1088.1 1623.5H1114.2" stroke="#14f0bd" stroke-width="2.3"/><path d="M1114.2 1620.9L1106.1 1620.9L1106.1 1613.4Z" fill="#14f0bd"/><path d="M1088.1 1622.4L1096 1622.4L1096 1630.7Z" fill="#14f0bd"/>
<rect x="1138" y="1610.9" width="2.6" height="22.3" fill="#14f0bd"/><rect x="1138" y="1622.7" width="10.3" height="10.500" fill="#14f0bd"/>
<rect x="1286" y="1610.9" width="2.6" height="22.3" fill="#14f0bd"/><rect x="1278.3" y="1622.7" width="10.3" height="10.500" fill="#14f0bd"/>
<path d="M1419.3 1613.7L1428.6 1622.6L1419.3 1631.5Z" fill="#159470"/><path d="M1437.9 1613.7L1428.6 1622.6L1437.9 1631.5Z" fill="#159470"/><path d="M1419.3 1631.5L1428.6 1622.6L1437.9 1631.5Z" fill="#1db88c"/>
<path d="M541 1675.300H550.800L545.900 1681.500Z" fill="#fff"/>
<path d="M469.83 1771.51A33.8 33.8 0 1 1 514.17 1771.51" fill="none" stroke="#545454" stroke-width="4.4" stroke-linecap="butt"/><path d="M499.03 1712.94A33.8 33.8 0 0 1 511.87 1718.66" fill="none" stroke="#ff7f0e" stroke-width="4.4" stroke-linecap="butt"/><circle cx="492" cy="1746" r="26.4" fill="#262626"/><circle cx="492" cy="1746" r="24.2" fill="url(#kl)"/><path d="M495.13 1741.69L505.09 1727.99" stroke="#0a0a0a" stroke-width="4.6"/>
<path d="M736.0 1693.0L736.0 1726.0M743.5 1696.5L728.5 1722.5M750.3 1701.2L721.7 1717.8M751.0 1709.5L721.0 1709.5M750.3 1717.8L721.7 1701.2M743.5 1722.5L728.5 1696.5M732.1 1695.1L736.0 1699.0L739.9 1695.1M746.5 1698.9L745.1 1704.2L750.4 1705.7M750.4 1713.3L745.1 1714.8L746.5 1720.1M739.9 1723.9L736.0 1720.0L732.1 1723.9M725.5 1720.1L726.9 1714.8L721.6 1713.3M721.6 1705.7L726.9 1704.2L725.5 1698.9" stroke="#8a8a8a" stroke-width="1.900" fill="none"/>
<rect x="721" y="1763.500" width="30" height="13.500" rx="1.500" fill="#25d3a4"/>
<path d="M722 1763.500L724 1757L726 1763.500ZM722 1777L724 1783.500L726 1777ZM728 1763.500L730 1757L732 1763.500ZM728 1777L730 1783.500L732 1777ZM734 1763.500L736 1757L738 1763.500ZM734 1777L736 1783.500L738 1777ZM740 1763.500L742 1757L744 1763.500ZM740 1777L742 1783.500L744 1777ZM746 1763.500L748 1757L750 1763.500ZM746 1777L748 1783.500L750 1777Z" fill="#25d3a4"/>
<text x="722.500" y="1775.800" font-family="Liberation Sans,sans-serif" font-size="12.500" fill="#175a49" textLength="27" lengthAdjust="spacingAndGlyphs">RAM</text>
<path d="M912 1677.300H934" stroke="#8a8a8a" stroke-width="2.200" fill="none"/>
<path d="M949.500 1675.500H957C963 1675.500 965 1681 969.500 1687.500" stroke="#ff7f0e" stroke-width="2.200" fill="none"/>
<path d="M986 1675.500H992C997 1675.500 997.500 1681 999.500 1687.500" stroke="#8a8a8a" stroke-width="2.200" fill="none"/><text x="1001" y="1680.500" font-family="Liberation Sans,sans-serif" font-weight="700" font-size="12" fill="#8a8a8a">4</text>
<path d="M1026.500 1687.500C1029 1680 1031 1674.500 1034.500 1674.500C1038 1674.500 1040 1680 1042.500 1687.500" stroke="#8a8a8a" stroke-width="2.200" fill="none"/>
<path d="M1060.500 1687.500C1065 1687 1066.500 1674.500 1069.500 1674.500C1072.500 1674.500 1073.500 1687 1078 1687.500" stroke="#8a8a8a" stroke-width="2.200" fill="none"/><text x="1075" y="1680.500" font-family="Liberation Sans,sans-serif" font-weight="700" font-size="12" fill="#8a8a8a">4</text>
<path d="M1097.500 1687.500C1101 1681 1103 1675.500 1109 1675.500H1117.500" stroke="#8a8a8a" stroke-width="2.200" fill="none"/>
<path d="M1143.500 1687.500C1144 1681 1145 1675.500 1150 1675.500H1157" stroke="#8a8a8a" stroke-width="2.200" fill="none"/><text x="1133" y="1680.500" font-family="Liberation Sans,sans-serif" font-weight="700" font-size="12" fill="#8a8a8a">4</text>
<path d="M1170 1675.500C1176 1675.500 1178.500 1687 1182.500 1687C1186.500 1687 1189 1675.500 1195 1675.500" stroke="#8a8a8a" stroke-width="2.200" fill="none"/>
<path d="M933.83 1771.31A33.8 33.8 0 1 1 978.17 1771.31" fill="none" stroke="#545454" stroke-width="4.4" stroke-linecap="butt"/><path d="M933.83 1771.31A33.8 33.8 0 0 1 978.17 1720.29" fill="none" stroke="#ff7f0e" stroke-width="4.4" stroke-linecap="butt"/><path d="M978.17 1720.29A33.8 33.8 0 0 1 978.17 1771.31" fill="none" stroke="#35d6ff" stroke-width="4.4" stroke-linecap="butt"/><circle cx="956" cy="1745.8" r="26.4" fill="#262626"/><circle cx="956" cy="1745.8" r="24.2" fill="url(#kl)"/><path d="M959.63 1741.91L971.18 1729.52" stroke="#0a0a0a" stroke-width="4.6"/>
<path d="M1029.73 1771.31A33.8 33.8 0 1 1 1074.07 1771.31" fill="none" stroke="#545454" stroke-width="4.4" stroke-linecap="butt"/><path d="M1029.73 1771.31A33.8 33.8 0 0 1 1021.02 1732.05" fill="none" stroke="#ff7f0e" stroke-width="4.4" stroke-linecap="butt"/><path d="M1021.02 1732.05A33.8 33.8 0 0 1 1051.90 1712.00" fill="none" stroke="#5a8aa0" stroke-width="4.4" stroke-linecap="butt"/><circle cx="1051.9" cy="1745.8" r="26.4" fill="#262626"/><circle cx="1051.9" cy="1745.8" r="24.2" fill="url(#kl)"/><path d="M1051.90 1740.48L1051.90 1723.54" stroke="#0a0a0a" stroke-width="4.6"/>
<path d="M1125.83 1771.31A33.8 33.8 0 1 1 1170.17 1771.31" fill="none" stroke="#545454" stroke-width="4.4" stroke-linecap="butt"/><path d="M1125.83 1771.31A33.8 33.8 0 0 1 1116.66 1758.46" fill="none" stroke="#ff7f0e" stroke-width="4.4" stroke-linecap="butt"/><path d="M1116.66 1758.46A33.8 33.8 0 0 1 1139.82 1713.00" fill="none" stroke="#35d6ff" stroke-width="4.4" stroke-linecap="butt"/><circle cx="1148" cy="1745.8" r="26.4" fill="#262626"/><circle cx="1148" cy="1745.8" r="24.2" fill="url(#kd)"/><path d="M1143.03 1747.71L1127.21 1753.78" stroke="#f0f0f0" stroke-width="4.6"/>
<defs><linearGradient id="rsg" x1="0" y1="0" x2="0" y2="1"><stop offset="0" stop-color="#e6e6e6"/><stop offset="1" stop-color="#6a6a6a"/></linearGradient></defs>
<path d="M1040 1800.500C1048 1800 1049 1782 1052 1782C1055 1782 1056 1800 1064 1800.500Z" fill="url(#rsg)" stroke="#cfcfcf" stroke-width="1.200"/>
<path d="M1126 1790.1L1133.1 1784.9V1795.1ZM1169.9 1790.1L1162.9 1784.9V1795.1Z" fill="#cfcfcf"/><rect x="1136.7" y="1779" width="4.5" height="12.3" fill="#cfcfcf"/><rect x="1136.7" y="1790.8" width="6.4" height="10.2" fill="#cfcfcf"/><rect x="1146.9" y="1779" width="2.1" height="12.3" fill="#cfcfcf"/><rect x="1144.9" y="1790.8" width="6" height="10.2" fill="#cfcfcf"/><rect x="1154.8" y="1779" width="4.4" height="12.3" fill="#cfcfcf"/><rect x="1152.9" y="1790.8" width="6.3" height="10.2" fill="#cfcfcf"/>
<path d="M1309 1675.300H1318.800L1313.900 1681.500Z" fill="#fff"/>
<circle cx="1505.8" cy="1677.7" r="7" fill="#3df59f"/><path d="M1505.8 1677.7H1525.3" stroke="#3df59f" stroke-width="4"/><path d="M1533.5 1677.7L1524.3 1669.7L1524.3 1685.7Z" fill="#3df59f"/>
<path d="M1239 1718.500C1252 1706 1266 1701.500 1281 1701.500V1718.500Z" fill="#9a561d"/><path d="M1239 1718.500C1252 1706 1266 1701.500 1281 1701.500" fill="none" stroke="#ff7f0e" stroke-width="2.200"/>
<path d="M1367.500 1701.500V1718.500H1409Z" fill="#5f3f26"/><path d="M1367.500 1701.500L1409 1718.500" stroke="#8a4c18" stroke-width="2"/>
<path d="M1495 1701.500V1718.500H1537Z" fill="#9a561d"/><path d="M1495 1701.500L1537 1718.500" stroke="#ff7f0e" stroke-width="2.200"/>
<path d="M1243.14 1773.10A25.7 25.7 0 1 1 1276.86 1773.10" fill="none" stroke="#545454" stroke-width="4.2" stroke-linecap="butt"/><circle cx="1260" cy="1753.7" r="19.4" fill="#262626"/><circle cx="1260" cy="1753.7" r="17.2" fill="url(#kd)"/><path d="M1257.83 1756.80L1250.92 1766.66" stroke="#f0f0f0" stroke-width="3.8"/>
<path d="M1307.14 1773.10A25.7 25.7 0 1 1 1340.86 1773.10" fill="none" stroke="#444444" stroke-width="4.2" stroke-linecap="butt"/><circle cx="1324" cy="1753.7" r="19.4" fill="#262626"/><circle cx="1324" cy="1753.7" r="17.2" fill="url(#kdd)"/><path d="M1321.57 1756.60L1313.83 1765.82" stroke="#8e8e8e" stroke-width="3.8"/>
<path d="M1370.64 1773.10A25.7 25.7 0 1 1 1404.36 1773.10" fill="none" stroke="#444444" stroke-width="4.2" stroke-linecap="butt"/><path d="M1370.64 1773.10A25.7 25.7 0 0 1 1386.15 1728.04" fill="none" stroke="#8a4c18" stroke-width="4.2" stroke-linecap="butt"/><circle cx="1387.5" cy="1753.7" r="19.4" fill="#262626"/><circle cx="1387.5" cy="1753.7" r="17.2" fill="url(#kdd)"/><path d="M1387.30 1749.92L1386.67 1737.90" stroke="#a0a0a0" stroke-width="3.8"/>
<path d="M1435.14 1773.10A25.7 25.7 0 1 1 1468.86 1773.10" fill="none" stroke="#545454" stroke-width="4.2" stroke-linecap="butt"/><path d="M1435.14 1773.10A25.7 25.7 0 1 1 1468.86 1773.10" fill="none" stroke="#ff7f0e" stroke-width="4.2" stroke-linecap="butt"/><circle cx="1452" cy="1753.7" r="19.4" fill="#262626"/><circle cx="1452" cy="1753.7" r="17.2" fill="url(#kd)"/><path d="M1454.28 1756.72L1461.52 1766.34" stroke="#f0f0f0" stroke-width="3.8"/>
<path d="M1499.14 1773.10A25.7 25.7 0 1 1 1532.86 1773.10" fill="none" stroke="#545454" stroke-width="4.2" stroke-linecap="butt"/><path d="M1499.14 1773.10A25.7 25.7 0 1 1 1541.31 1749.24" fill="none" stroke="#ff7f0e" stroke-width="4.2" stroke-linecap="butt"/><circle cx="1516" cy="1753.7" r="19.4" fill="#262626"/><circle cx="1516" cy="1753.7" r="17.2" fill="url(#kd)"/><path d="M1519.73 1753.04L1531.58 1750.95" stroke="#f0f0f0" stroke-width="3.8"/>
<path d="M1575 1403V1397H1713V1403" fill="none" stroke="#436e8a" stroke-width="4"/>
<path d="M1575 1475V1469H1713V1475" fill="none" stroke="#436e8a" stroke-width="4"/>
<path d="M1626.88 1596.70A26.1 26.1 0 1 1 1661.12 1596.70" fill="none" stroke="#545454" stroke-width="4.2" stroke-linecap="butt"/><path d="M1642.63 1550.94A26.1 26.1 0 0 1 1645.37 1550.94" fill="none" stroke="#ff7f0e" stroke-width="4.2" stroke-linecap="butt"/><circle cx="1644" cy="1577" r="20.2" fill="#262626"/><circle cx="1644" cy="1577" r="18" fill="url(#kd)"/><path d="M1644.00 1573.04L1644.00 1560.44" stroke="#f0f0f0" stroke-width="3.8"/>
<path d="M1625 1650.500H1662" stroke="#4e4e4e" stroke-width="3"/>
<path d="M1594.68 1669.20A26.1 26.1 0 1 1 1628.92 1669.20" fill="none" stroke="#545454" stroke-width="4.2" stroke-linecap="butt"/><path d="M1594.68 1669.20A26.1 26.1 0 0 1 1611.80 1623.40" fill="none" stroke="#ff7f0e" stroke-width="4.2" stroke-linecap="butt"/><circle cx="1611.8" cy="1649.5" r="20.2" fill="#262626"/><circle cx="1611.8" cy="1649.5" r="18" fill="url(#kd)"/><path d="M1611.80 1645.54L1611.80 1632.94" stroke="#f0f0f0" stroke-width="3.8"/>
<path d="M1658.88 1669.20A26.1 26.1 0 1 1 1693.12 1669.20" fill="none" stroke="#545454" stroke-width="4.2" stroke-linecap="butt"/><path d="M1674.63 1623.44A26.1 26.1 0 0 1 1677.37 1623.44" fill="none" stroke="#ff7f0e" stroke-width="4.2" stroke-linecap="butt"/><circle cx="1676" cy="1649.5" r="20.2" fill="#262626"/><circle cx="1676" cy="1649.5" r="18" fill="url(#kd)"/><path d="M1676.00 1645.54L1676.00 1632.94" stroke="#f0f0f0" stroke-width="3.8"/>
<circle cx="1612" cy="1681.500" r="3.800" fill="none" stroke="#c8c8c8" stroke-width="2"/><path d="M1612 1685.500V1697" stroke="#c8c8c8" stroke-width="2"/>
<path d="M1669 1683.500H1673.500L1681 1677V1695L1673.500 1690H1669Z" fill="#b4b4b4"/>
<path d="M1621.83 1771.21A33.8 33.8 0 1 1 1666.17 1771.21" fill="none" stroke="#545454" stroke-width="4.4" stroke-linecap="butt"/><path d="M1621.83 1771.21A33.8 33.8 0 1 1 1677.47 1741.00" fill="none" stroke="#ff7f0e" stroke-width="4.4" stroke-linecap="butt"/><circle cx="1644" cy="1745.7" r="26.4" fill="#262626"/><circle cx="1644" cy="1745.7" r="24.2" fill="url(#kd)"/><path d="M1649.24 1744.78L1665.93 1741.83" stroke="#f0f0f0" stroke-width="4.6"/></svg>
<span class="t" style="left:109.3px;top:1874.8px;font-size:21.4px;color:#f5861a;-webkit-text-stroke:0.3px #f5861a;transform:scaleX(0.9847);">ARRANGE</span>
<span class="t" style="left:241.3px;top:1874.8px;font-size:21.4px;color:#ececec;-webkit-text-stroke:0.3px #ececec;transform:scaleX(1.1343);">MIX</span>
<span class="t" style="left:313.7px;top:1874.8px;font-size:21.4px;color:#ececec;-webkit-text-stroke:0.3px #ececec;transform:scaleX(1.0072);">EDIT</span>
<div class="a" style="left:75px;top:1865px;width:3.8px;height:40px;background:#8e8e8e;"></div>
<div class="a" style="left:393px;top:1865px;width:3.8px;height:40px;background:#8e8e8e;"></div>
<div class="a" style="left:2990.7px;top:1865px;width:4.2px;height:40px;background:#8e8e8e;"></div>
<svg class="ov" viewBox="0 0 3072 1920"><circle cx="40.500" cy="1877.500" r="2.600" fill="#c6c6c6"/><path d="M36 1883H42.500V1891M35.500 1892H45.500" stroke="#c6c6c6" stroke-width="3" fill="none"/>
<rect x="424.8" y="1873" width="6.1" height="3.900" fill="#c6c6c6"/>
<rect x="441" y="1877" width="6.1" height="3.900" fill="#c6c6c6"/>
<rect x="433" y="1881" width="6.1" height="3.900" fill="#c6c6c6"/>
<rect x="441" y="1885" width="6.1" height="3.900" fill="#c6c6c6"/>
<rect x="424.8" y="1891" width="6.1" height="3.900" fill="#c6c6c6"/>
<rect x="433" y="1891" width="6.1" height="3.900" fill="#c6c6c6"/>
<g stroke="#c6c6c6" stroke-width="3.500" fill="none"><circle cx="493" cy="1888.800" r="3.450"/><circle cx="503.100" cy="1879.400" r="3.450"/><path d="M495.800 1886.200L500.300 1882"/></g>
<path fill-rule="evenodd" d="M549.800 1870.800H570A5 5 0 0 1 575 1875.800V1892.100A5 5 0 0 1 570 1897.100H549.800A5 5 0 0 1 544.800 1892.100V1875.800A5 5 0 0 1 549.800 1870.800ZM555.500 1874.400A3 3 0 0 0 552.500 1877.400V1890.600A3 3 0 0 0 555.500 1893.600H568.700A3 3 0 0 0 571.700 1890.600V1877.400A3 3 0 0 0 568.700 1874.400Z" fill="#f5861a"/>
<rect x="611" y="1873" width="6" height="22" fill="#c6c6c6"/>
<rect x="619" y="1873" width="6" height="22" fill="#c6c6c6"/>
<rect x="627" y="1873" width="6" height="22" fill="#c6c6c6"/>
<path d="M2752.900 1893.200V1880.900H2762.500V1876.900H2775.200V1893.200ZM2752.900 1875H2760.800V1879H2752.900Z" fill="#c6c6c6"/>
<path d="M2816.900 1873H2826.800L2835.300 1881.100V1895.300H2816.900Z" fill="#c6c6c6"/>
<path d="M2876.300 1879L2886.900 1873V1876.900H2899.200V1881.100H2886.900V1885ZM2899.600 1889.100L2889 1883V1887.200H2877V1891H2889V1895.300Z" fill="#c6c6c6"/>
<path d="M2943.500 1874.500C2943.500 1872.600 2947.300 1872.600 2947.300 1874.500V1881.300C2948.300 1880.600 2950.200 1880.700 2950.900 1882C2952 1881.200 2954 1881.500 2954.600 1882.900C2956.200 1882.300 2959.200 1883.200 2959.200 1886V1892.300C2959.200 1894.200 2958 1895.300 2956.500 1895.300H2946C2944.500 1895.300 2943.300 1894.500 2942.300 1893L2938 1886.300C2937.200 1884.800 2939.200 1883.300 2940.600 1884.600L2943.500 1887.500Z" fill="#c6c6c6"/>
<g fill="#c6c6c6"><rect x="3020.800" y="1873" width="3.900" height="12.800"/><rect x="3020.800" y="1885.400" width="6.700" height="9.600"/><rect x="3030.700" y="1873" width="2.400" height="12.800"/><rect x="3029.300" y="1885.400" width="6" height="9.600"/><rect x="3039.900" y="1873" width="3.100" height="12.800"/><rect x="3037.700" y="1885.400" width="5.300" height="9.600"/></g></svg>
</body></html>
